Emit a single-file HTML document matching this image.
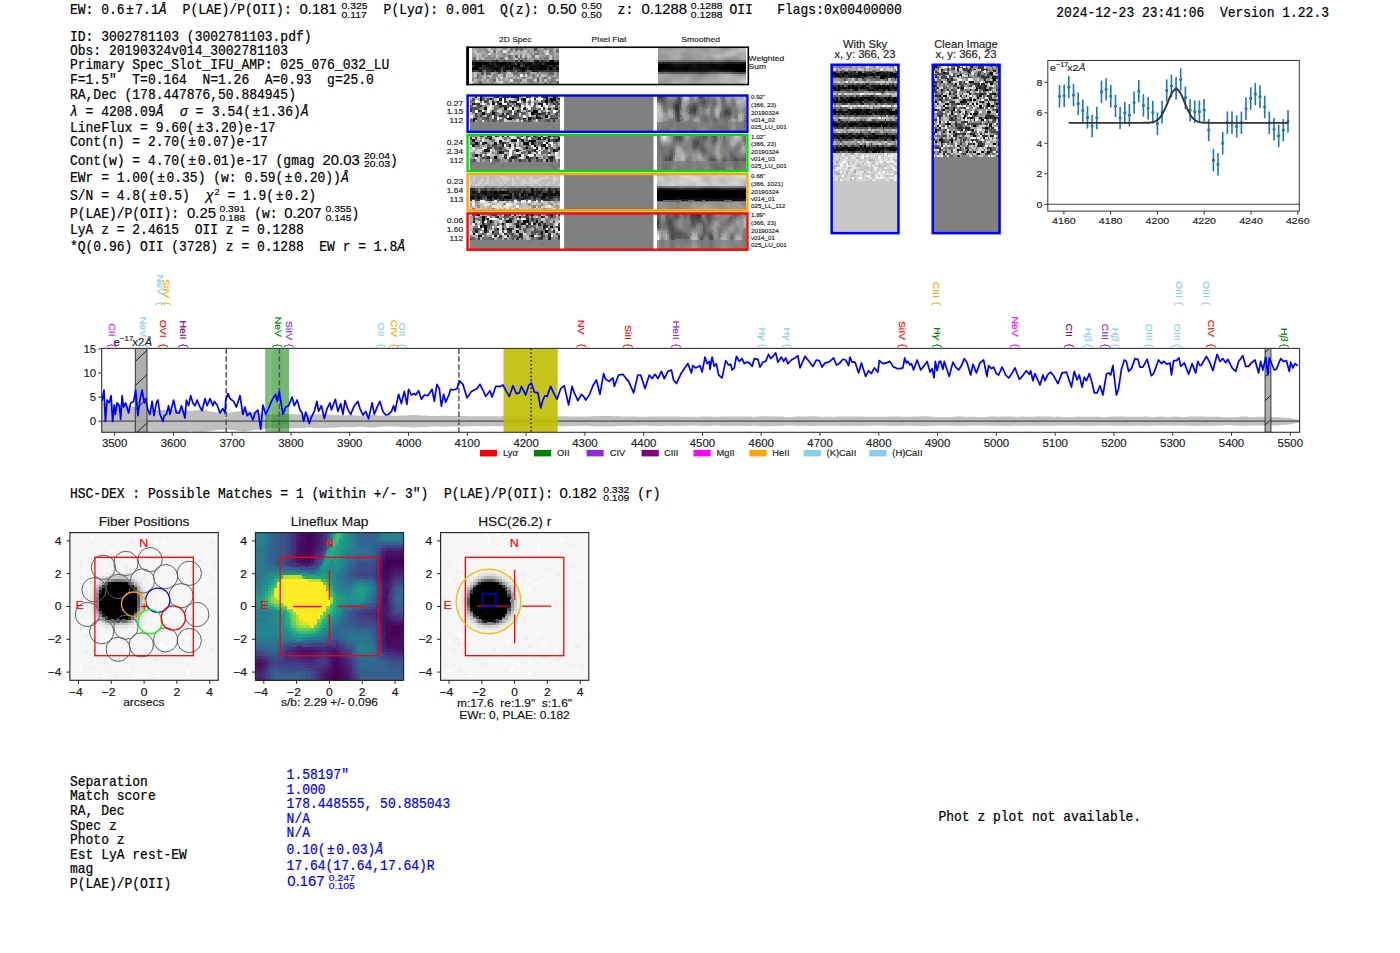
<!DOCTYPE html><html><head><meta charset="utf-8"><style>html,body{margin:0;padding:0;background:#fff;overflow:hidden}svg{display:block}</style></head><body>
<svg width="1400" height="953" viewBox="0 0 1400 953">
<rect width="1400" height="953" fill="#fff"/>
<text transform="translate(515.20,42.20) scale(1.144,1.06)" font-family="Liberation Sans" font-size="7.4" fill="#222" stroke="#222" stroke-width="0.15" text-anchor="middle" style="white-space:pre" >2D Spec</text>
<text transform="translate(609.00,42.20) scale(1.144,1.06)" font-family="Liberation Sans" font-size="7.4" fill="#222" stroke="#222" stroke-width="0.15" text-anchor="middle" style="white-space:pre" >Pixel Flat</text>
<text transform="translate(700.70,42.20) scale(1.144,1.06)" font-family="Liberation Sans" font-size="7.4" fill="#222" stroke="#222" stroke-width="0.15" text-anchor="middle" style="white-space:pre" >Smoothed</text>
<path stroke="#a8a8a8" stroke-width="2.85" shape-rendering="crispEdges" d="M471.5 49.2h5.2M486.0 49.2h2.8M500.4 49.2h2.8M505.3 49.2h2.8M527.0 49.2h5.2M539.0 49.2h5.2M471.5 51.6h2.8M481.1 51.6h5.2M488.4 51.6h2.8M498.0 51.6h2.8M510.1 51.6h2.8M519.7 51.6h2.8M529.4 51.6h2.8M534.2 51.6h2.8M473.9 54.0h2.8M505.3 54.0h2.8M514.9 54.0h2.8M524.5 54.0h2.8M543.8 54.0h2.8M553.5 54.0h2.8M483.6 56.4h5.2M490.8 56.4h2.8M498.0 56.4h5.2M529.4 56.4h2.8M539.0 56.4h2.8M553.5 56.4h2.8M512.5 58.8h2.8M527.0 58.8h2.8M536.6 58.8h2.8M490.8 73.2h2.8M529.4 73.2h7.6M553.5 73.2h2.8M471.5 75.6h2.8M481.1 75.6h2.8M490.8 75.6h2.8M529.4 75.6h2.8M553.5 75.6h2.8M481.1 78.0h2.8M488.4 78.0h2.8M519.7 78.0h2.8M527.0 78.0h2.8M534.2 78.0h2.8M546.2 78.0h2.8M500.4 80.4h10.0M483.6 82.8h7.6M493.2 82.8h5.2M507.7 82.8h2.8M514.9 82.8h2.8M524.5 82.8h2.8M539.0 82.8h5.2M546.2 82.8h2.8"/>
<path stroke="#9c9c9c" stroke-width="2.85" shape-rendering="crispEdges" d="M476.3 49.2h2.8M481.1 49.2h2.8M490.8 49.2h2.8M512.5 49.2h2.8M522.1 49.2h2.8M531.8 49.2h2.8M546.2 49.2h2.8M478.7 51.6h2.8M514.9 51.6h2.8M531.8 51.6h2.8M541.4 51.6h2.8M471.5 54.0h2.8M481.1 54.0h7.6M490.8 54.0h5.2M498.0 54.0h5.2M507.7 54.0h2.8M519.7 54.0h2.8M539.0 54.0h2.8M471.5 56.4h5.2M505.3 56.4h2.8M541.4 56.4h5.2M483.6 58.8h2.8M493.2 58.8h2.8M529.4 58.8h5.2M553.5 58.8h5.2M471.5 73.2h2.8M476.3 73.2h2.8M483.6 73.2h2.8M493.2 73.2h2.8M505.3 73.2h2.8M539.0 73.2h2.8M486.0 75.6h2.8M512.5 75.6h5.2M522.1 75.6h2.8M534.2 75.6h2.8M551.1 75.6h2.8M473.9 78.0h2.8M507.7 78.0h2.8M514.9 78.0h2.8M524.5 78.0h2.8M498.0 80.4h2.8M531.8 80.4h2.8M548.7 80.4h2.8M473.9 82.8h2.8M481.1 82.8h2.8M502.8 82.8h2.8M522.1 82.8h2.8M527.0 82.8h2.8M534.2 82.8h2.8M553.5 82.8h2.8"/>
<path stroke="#909090" stroke-width="2.85" shape-rendering="crispEdges" d="M478.7 49.2h2.8M493.2 49.2h2.8M536.6 49.2h2.8M551.1 49.2h2.8M555.9 49.2h2.8M476.3 51.6h2.8M500.4 51.6h2.8M527.0 51.6h2.8M539.0 51.6h2.8M551.1 51.6h2.8M541.4 54.0h2.8M548.7 54.0h5.2M493.2 56.4h2.8M502.8 56.4h2.8M524.5 56.4h2.8M551.1 56.4h2.8M555.9 56.4h2.8M478.7 58.8h2.8M488.4 58.8h2.8M495.6 58.8h5.2M519.7 58.8h2.8M541.4 58.8h2.8M478.7 73.2h2.8M510.1 73.2h2.8M524.5 73.2h2.8M478.7 75.6h2.8M527.0 75.6h2.8M548.7 75.6h2.8M555.9 75.6h2.8M471.5 78.0h2.8M490.8 78.0h2.8M498.0 78.0h2.8M502.8 78.0h2.8M510.1 78.0h2.8M555.9 78.0h2.8M476.3 80.4h5.2M483.6 80.4h2.8M476.3 82.8h2.8M505.3 82.8h2.8M510.1 82.8h5.2M529.4 82.8h2.8M536.6 82.8h2.8M551.1 82.8h2.8"/>
<path stroke="#848484" stroke-width="2.85" shape-rendering="crispEdges" d="M483.6 49.2h2.8M502.8 49.2h2.8M517.3 49.2h2.8M524.5 49.2h2.8M548.7 49.2h2.8M486.0 51.6h2.8M507.7 51.6h2.8M536.6 51.6h2.8M502.8 54.0h2.8M529.4 54.0h2.8M481.1 56.4h2.8M488.4 56.4h2.8M510.1 56.4h2.8M546.2 56.4h2.8M471.5 58.8h2.8M486.0 58.8h2.8M490.8 58.8h2.8M502.8 58.8h2.8M507.7 58.8h2.8M522.1 58.8h2.8M534.2 58.8h2.8M539.0 58.8h2.8M551.1 58.8h2.8M529.4 61.2h2.8M495.6 73.2h2.8M500.4 73.2h2.8M517.3 73.2h5.2M541.4 73.2h7.6M555.9 73.2h2.8M493.2 75.6h5.2M517.3 75.6h2.8M539.0 75.6h2.8M546.2 75.6h2.8M476.3 78.0h5.2M493.2 78.0h2.8M522.1 78.0h2.8M531.8 78.0h2.8M541.4 78.0h2.8M553.5 78.0h2.8M471.5 80.4h2.8M488.4 80.4h5.2M512.5 80.4h2.8M517.3 80.4h2.8M527.0 80.4h2.8M541.4 80.4h2.8M546.2 80.4h2.8M553.5 80.4h2.8M490.8 82.8h2.8M517.3 82.8h2.8M531.8 82.8h2.8"/>
<path stroke="#cccccc" stroke-width="2.85" shape-rendering="crispEdges" d="M488.4 49.2h2.8M490.8 51.6h2.8M524.5 51.6h2.8M546.2 51.6h2.8M476.3 54.0h2.8M510.1 54.0h2.8M534.2 56.4h5.2M505.3 58.8h2.8M507.7 73.2h2.8M505.3 75.6h2.8M510.1 75.6h2.8M500.4 78.0h2.8M548.7 78.0h2.8M534.2 80.4h2.8M555.9 80.4h2.8M498.0 82.8h2.8"/>
<path stroke="#b4b4b4" stroke-width="2.85" shape-rendering="crispEdges" d="M495.6 49.2h5.2M507.7 49.2h2.8M512.5 51.6h2.8M517.3 51.6h2.8M522.1 51.6h2.8M553.5 51.6h2.8M478.7 54.0h2.8M495.6 54.0h2.8M512.5 54.0h2.8M517.3 54.0h2.8M527.0 54.0h2.8M531.8 54.0h2.8M555.9 54.0h2.8M476.3 56.4h5.2M512.5 56.4h2.8M481.1 58.8h2.8M483.6 75.6h2.8M500.4 75.6h2.8M507.7 75.6h2.8M543.8 75.6h2.8M505.3 78.0h2.8M512.5 78.0h2.8M517.3 78.0h2.8M539.0 78.0h2.8M473.9 80.4h2.8M481.1 80.4h2.8M486.0 80.4h2.8M539.0 80.4h2.8M519.7 82.8h2.8"/>
<path stroke="#787878" stroke-width="2.85" shape-rendering="crispEdges" d="M510.1 49.2h2.8M543.8 49.2h2.8M493.2 51.6h2.8M548.7 51.6h2.8M534.2 54.0h2.8M531.8 56.4h2.8M510.1 58.8h2.8M543.8 58.8h5.2M517.3 61.2h2.8M531.8 61.2h2.8M483.6 70.8h2.8M514.9 70.8h2.8M502.8 73.2h2.8M512.5 73.2h2.8M536.6 73.2h2.8M531.8 75.6h2.8M486.0 78.0h2.8M551.1 78.0h2.8M514.9 80.4h2.8M519.7 80.4h2.8M529.4 80.4h2.8M551.1 80.4h2.8M543.8 82.8h2.8M548.7 82.8h2.8"/>
<path stroke="#6c6c6c" stroke-width="2.85" shape-rendering="crispEdges" d="M514.9 49.2h2.8M519.7 49.2h2.8M555.9 51.6h2.8M536.6 54.0h2.8M507.7 56.4h2.8M519.7 56.4h2.8M473.9 58.8h2.8M500.4 58.8h2.8M517.3 58.8h2.8M486.0 61.2h2.8M498.0 61.2h5.2M512.5 61.2h2.8M527.0 61.2h2.8M514.9 73.2h2.8M522.1 73.2h2.8M527.0 73.2h2.8M476.3 75.6h2.8M502.8 75.6h2.8M536.6 78.0h2.8M543.8 78.0h2.8M493.2 80.4h2.8M478.7 82.8h2.8M555.9 82.8h2.8"/>
<path stroke="#545454" stroke-width="2.85" shape-rendering="crispEdges" d="M534.2 49.2h2.8M490.8 61.2h2.8M553.5 61.2h2.8M514.9 63.6h2.8M505.3 70.8h2.8M529.4 70.8h2.8M481.1 73.2h2.8M486.0 73.2h2.8M498.0 73.2h2.8M536.6 80.4h2.8"/>
<path stroke="#c0c0c0" stroke-width="2.85" shape-rendering="crispEdges" d="M553.5 49.2h2.8M473.9 51.6h2.8M495.6 51.6h2.8M505.3 51.6h2.8M543.8 51.6h2.8M522.1 54.0h2.8M495.6 56.4h2.8M517.3 56.4h2.8M522.1 56.4h2.8M527.0 56.4h2.8M548.7 56.4h2.8M476.3 58.8h2.8M514.9 58.8h2.8M548.7 58.8h2.8M473.9 73.2h2.8M473.9 75.6h2.8M488.4 75.6h2.8M498.0 75.6h2.8M536.6 75.6h2.8M541.4 75.6h2.8M483.6 78.0h2.8M495.6 78.0h2.8M529.4 78.0h2.8M522.1 80.4h5.2M543.8 80.4h2.8M471.5 82.8h2.8"/>
<path stroke="#e4e4e4" stroke-width="2.85" shape-rendering="crispEdges" d="M502.8 51.6h2.8M546.2 54.0h2.8M510.1 80.4h2.8"/>
<path stroke="#d8d8d8" stroke-width="2.85" shape-rendering="crispEdges" d="M488.4 54.0h2.8M524.5 75.6h2.8M495.6 80.4h2.8M500.4 82.8h2.8"/>
<path stroke="#606060" stroke-width="2.85" shape-rendering="crispEdges" d="M514.9 56.4h2.8M524.5 58.8h2.8M476.3 61.2h2.8M488.4 61.2h2.8M505.3 61.2h7.6M522.1 61.2h5.2M539.0 61.2h2.8M546.2 61.2h2.8M500.4 70.8h2.8M507.7 70.8h2.8M527.0 70.8h2.8M488.4 73.2h2.8M548.7 73.2h5.2"/>
<path stroke="#3c3c3c" stroke-width="2.85" shape-rendering="crispEdges" d="M471.5 61.2h5.2M493.2 61.2h2.8M514.9 61.2h2.8M541.4 63.6h2.8M471.5 66.0h2.8M522.1 66.0h2.8M555.9 66.0h2.8M478.7 68.4h2.8M500.4 68.4h2.8M512.5 68.4h2.8M553.5 68.4h2.8M473.9 70.8h5.2M493.2 70.8h2.8M510.1 70.8h2.8M524.5 70.8h2.8M539.0 70.8h2.8M543.8 70.8h5.2M551.1 70.8h5.2"/>
<path stroke="#484848" stroke-width="2.85" shape-rendering="crispEdges" d="M478.7 61.2h7.6M502.8 61.2h2.8M543.8 61.2h2.8M555.9 61.2h2.8M519.7 66.0h2.8M481.1 70.8h2.8M512.5 70.8h2.8"/>
<path stroke="#242424" stroke-width="2.85" shape-rendering="crispEdges" d="M495.6 61.2h2.8M519.7 61.2h2.8M534.2 61.2h2.8M488.4 63.6h2.8M493.2 63.6h2.8M510.1 63.6h5.2M493.2 66.0h5.2M502.8 66.0h2.8M527.0 66.0h2.8M486.0 68.4h2.8M502.8 68.4h2.8M514.9 68.4h2.8M551.1 68.4h2.8M471.5 70.8h2.8M519.7 70.8h2.8M534.2 70.8h5.2"/>
<path stroke="#181818" stroke-width="2.85" shape-rendering="crispEdges" d="M536.6 61.2h2.8M548.7 61.2h2.8M473.9 63.6h2.8M490.8 63.6h2.8M505.3 63.6h2.8M522.1 63.6h5.2M534.2 63.6h5.2M543.8 63.6h2.8M483.6 66.0h2.8M498.0 66.0h2.8M529.4 66.0h2.8M534.2 66.0h2.8M551.1 66.0h2.8M488.4 68.4h5.2M498.0 68.4h2.8M517.3 68.4h2.8M536.6 68.4h2.8M478.7 70.8h2.8M490.8 70.8h2.8M495.6 70.8h5.2M502.8 70.8h2.8M531.8 70.8h2.8"/>
<path stroke="#303030" stroke-width="2.85" shape-rendering="crispEdges" d="M541.4 61.2h2.8M519.7 63.6h2.8M531.8 63.6h2.8M481.1 66.0h2.8M507.7 66.0h2.8M548.7 66.0h2.8M481.1 68.4h5.2M527.0 68.4h2.8M546.2 68.4h2.8M486.0 70.8h5.2M517.3 70.8h2.8M541.4 70.8h2.8M548.7 70.8h2.8M555.9 70.8h2.8"/>
<path stroke="#0c0c0c" stroke-width="2.85" shape-rendering="crispEdges" d="M551.1 61.2h2.8M471.5 63.6h2.8M481.1 63.6h2.8M529.4 63.6h2.8M539.0 63.6h2.8M473.9 66.0h2.8M486.0 66.0h7.6M512.5 66.0h5.2M536.6 66.0h5.2M543.8 66.0h5.2M553.5 66.0h2.8M493.2 68.4h5.2M505.3 68.4h2.8M519.7 68.4h2.8M524.5 68.4h2.8M531.8 68.4h5.2M541.4 68.4h2.8M555.9 68.4h2.8M522.1 70.8h2.8"/>
<path stroke="#000000" stroke-width="2.85" shape-rendering="crispEdges" d="M476.3 63.6h5.2M483.6 63.6h5.2M495.6 63.6h10.0M507.7 63.6h2.8M517.3 63.6h2.8M527.0 63.6h2.8M546.2 63.6h12.5M476.3 66.0h5.2M500.4 66.0h2.8M505.3 66.0h2.8M510.1 66.0h2.8M517.3 66.0h2.8M524.5 66.0h2.8M531.8 66.0h2.8M541.4 66.0h2.8M471.5 68.4h7.6M507.7 68.4h5.2M522.1 68.4h2.8M529.4 68.4h2.8M539.0 68.4h2.8M543.8 68.4h2.8M548.7 68.4h2.8"/>
<path stroke="#f0f0f0" stroke-width="2.85" shape-rendering="crispEdges" d="M519.7 75.6h2.8"/>
<path stroke="#9c9c9c" stroke-width="2.45" shape-rendering="crispEdges" d="M657.9 49.0h16.3M685.7 49.0h6.4M699.7 49.0h8.4M719.5 49.0h2.4M727.5 49.0h2.4M657.9 51.0h4.4M685.7 51.0h6.4M697.7 51.0h12.3M719.5 51.0h2.4M657.9 53.0h4.4M681.8 53.0h10.3M663.9 55.0h4.4M681.8 55.0h2.4M689.7 55.0h10.3M665.9 57.0h4.4M681.8 57.0h2.4M691.7 57.0h10.3M705.6 57.0h4.4M733.5 57.0h4.4M657.9 59.0h12.3M679.8 59.0h2.4M693.7 59.0h12.3M721.5 59.0h2.4M739.4 59.0h2.4M669.8 75.0h2.4M711.6 75.0h4.4M733.5 75.0h4.4M671.8 77.0h10.3M687.7 77.0h4.4M705.6 77.0h2.4M663.9 79.0h10.3M689.7 79.0h2.4M699.7 79.0h4.4M663.9 81.0h6.4M691.7 81.0h8.4M657.9 83.0h8.4M693.7 83.0h2.4"/>
<path stroke="#a2a2a2" stroke-width="2.45" shape-rendering="crispEdges" d="M673.8 49.0h12.3M691.7 49.0h8.4M707.6 49.0h2.4M717.6 49.0h2.4M729.5 49.0h2.4M661.9 51.0h12.3M681.8 51.0h4.4M691.7 51.0h6.4M709.6 51.0h2.4M715.6 51.0h4.4M721.5 51.0h4.4M661.9 53.0h6.4M679.8 53.0h2.4M691.7 53.0h18.3M667.8 55.0h4.4M679.8 55.0h2.4M699.7 55.0h4.4M669.8 57.0h2.4M679.8 57.0h2.4M701.6 57.0h4.4M709.6 57.0h2.4M729.5 57.0h4.4M737.4 57.0h2.4M669.8 59.0h4.4M677.8 59.0h2.4M713.6 59.0h2.4M719.5 59.0h2.4M741.4 59.0h2.4M657.9 75.0h12.3M715.6 75.0h2.4M731.5 75.0h2.4M663.9 77.0h8.4M681.8 77.0h6.4M707.6 77.0h10.3M657.9 79.0h6.4M673.8 79.0h10.3M687.7 79.0h2.4M703.6 79.0h4.4M657.9 81.0h6.4M669.8 81.0h4.4M687.7 81.0h4.4M699.7 81.0h4.4M665.9 83.0h2.4M687.7 83.0h6.4M695.7 83.0h6.4M713.6 83.0h6.4"/>
<path stroke="#a8a8a8" stroke-width="2.45" shape-rendering="crispEdges" d="M709.6 49.0h8.4M731.5 49.0h2.4M673.8 51.0h8.4M711.6 51.0h4.4M725.5 51.0h2.4M667.8 53.0h12.3M709.6 53.0h14.3M671.8 55.0h8.4M703.6 55.0h6.4M735.5 55.0h6.4M671.8 57.0h2.4M677.8 57.0h2.4M711.6 57.0h2.4M725.5 57.0h4.4M739.4 57.0h2.4M673.8 59.0h4.4M715.6 59.0h4.4M743.4 59.0h2.4M717.6 75.0h2.4M729.5 75.0h2.4M657.9 77.0h6.4M717.6 77.0h2.4M683.8 79.0h4.4M707.6 79.0h10.3M673.8 81.0h14.3M703.6 81.0h6.4M711.6 81.0h6.4M667.8 83.0h4.4M679.8 83.0h8.4M701.6 83.0h12.3M719.5 83.0h2.4"/>
<path stroke="#969696" stroke-width="2.45" shape-rendering="crispEdges" d="M721.5 49.0h6.4M657.9 55.0h6.4M683.8 55.0h6.4M657.9 57.0h8.4M683.8 57.0h8.4M681.8 59.0h2.4M689.7 59.0h4.4M705.6 59.0h8.4M723.5 59.0h2.4M735.5 59.0h4.4M671.8 75.0h4.4M677.8 75.0h12.3M707.6 75.0h4.4M737.4 75.0h8.4M691.7 77.0h2.4M701.6 77.0h4.4M691.7 79.0h8.4"/>
<path stroke="#aeaeae" stroke-width="2.45" shape-rendering="crispEdges" d="M733.5 49.0h2.4M727.5 51.0h2.4M723.5 53.0h2.4M737.4 53.0h8.4M709.6 55.0h4.4M733.5 55.0h2.4M741.4 55.0h4.4M673.8 57.0h4.4M713.6 57.0h2.4M721.5 57.0h4.4M741.4 57.0h4.4M719.5 75.0h4.4M727.5 75.0h2.4M719.5 77.0h2.4M731.5 77.0h14.3M717.6 79.0h2.4M729.5 79.0h6.4M709.6 81.0h2.4M717.6 81.0h2.4M729.5 81.0h6.4M671.8 83.0h2.4M677.8 83.0h2.4M721.5 83.0h2.4M733.5 83.0h2.4"/>
<path stroke="#b4b4b4" stroke-width="2.45" shape-rendering="crispEdges" d="M735.5 49.0h2.4M729.5 51.0h10.3M735.5 53.0h2.4M713.6 55.0h12.3M729.5 55.0h4.4M715.6 57.0h6.4M723.5 75.0h4.4M721.5 77.0h2.4M727.5 77.0h4.4M719.5 79.0h2.4M727.5 79.0h2.4M735.5 79.0h6.4M719.5 81.0h4.4M725.5 81.0h4.4M735.5 81.0h4.4M673.8 83.0h4.4M723.5 83.0h10.3M735.5 83.0h4.4"/>
<path stroke="#bababa" stroke-width="2.45" shape-rendering="crispEdges" d="M737.4 49.0h2.4M739.4 51.0h6.4M725.5 53.0h4.4M731.5 53.0h4.4M725.5 55.0h4.4M723.5 77.0h4.4M721.5 79.0h6.4M741.4 79.0h4.4M723.5 81.0h2.4M739.4 81.0h2.4"/>
<path stroke="#c0c0c0" stroke-width="2.45" shape-rendering="crispEdges" d="M739.4 49.0h6.4M729.5 53.0h2.4M741.4 81.0h2.4M739.4 83.0h2.4"/>
<path stroke="#909090" stroke-width="2.45" shape-rendering="crispEdges" d="M683.8 59.0h6.4M725.5 59.0h10.3M675.8 75.0h2.4M689.7 75.0h6.4M705.6 75.0h2.4M693.7 77.0h8.4"/>
<path stroke="#787878" stroke-width="2.45" shape-rendering="crispEdges" d="M657.9 61.0h2.4M675.8 61.0h2.4"/>
<path stroke="#727272" stroke-width="2.45" shape-rendering="crispEdges" d="M659.9 61.0h16.3M677.8 61.0h4.4M701.6 61.0h6.4M715.6 61.0h6.4M743.4 61.0h2.4M719.5 73.0h8.4"/>
<path stroke="#6c6c6c" stroke-width="2.45" shape-rendering="crispEdges" d="M681.8 61.0h4.4M687.7 61.0h14.3M707.6 61.0h8.4M721.5 61.0h2.4M739.4 61.0h4.4M713.6 73.0h6.4M727.5 73.0h2.4"/>
<path stroke="#666666" stroke-width="2.45" shape-rendering="crispEdges" d="M685.7 61.0h2.4M723.5 61.0h2.4M735.5 61.0h4.4M657.9 73.0h12.3M709.6 73.0h4.4M729.5 73.0h2.4"/>
<path stroke="#606060" stroke-width="2.45" shape-rendering="crispEdges" d="M725.5 61.0h2.4M729.5 61.0h6.4M669.8 73.0h2.4M689.7 73.0h2.4M707.6 73.0h2.4"/>
<path stroke="#5a5a5a" stroke-width="2.45" shape-rendering="crispEdges" d="M727.5 61.0h2.4M671.8 73.0h18.3M691.7 73.0h4.4M705.6 73.0h2.4M731.5 73.0h2.4"/>
<path stroke="#242424" stroke-width="2.45" shape-rendering="crispEdges" d="M657.9 63.0h8.4M667.8 63.0h4.4M689.7 63.0h12.3M709.6 63.0h4.4M721.5 63.0h4.4M711.6 71.0h6.4"/>
<path stroke="#1e1e1e" stroke-width="2.45" shape-rendering="crispEdges" d="M665.9 63.0h2.4M725.5 63.0h16.3M665.9 71.0h2.4M675.8 71.0h2.4M689.7 71.0h4.4M707.6 71.0h4.4M717.6 71.0h4.4"/>
<path stroke="#2a2a2a" stroke-width="2.45" shape-rendering="crispEdges" d="M671.8 63.0h2.4M681.8 63.0h8.4M701.6 63.0h8.4M713.6 63.0h8.4"/>
<path stroke="#303030" stroke-width="2.45" shape-rendering="crispEdges" d="M673.8 63.0h8.4"/>
<path stroke="#181818" stroke-width="2.45" shape-rendering="crispEdges" d="M741.4 63.0h4.4M661.9 71.0h4.4M667.8 71.0h8.4M677.8 71.0h6.4M685.7 71.0h4.4M693.7 71.0h4.4M701.6 71.0h6.4M721.5 71.0h8.4"/>
<path stroke="#060606" stroke-width="2.45" shape-rendering="crispEdges" d="M657.9 65.0h4.4M669.8 65.0h2.4M709.6 65.0h6.4M723.5 65.0h2.4M663.9 67.0h12.3M679.8 67.0h10.3M709.6 67.0h12.3M663.9 69.0h18.3M687.7 69.0h4.4M713.6 69.0h6.4M733.5 71.0h4.4"/>
<path stroke="#000000" stroke-width="2.45" shape-rendering="crispEdges" d="M661.9 65.0h8.4M725.5 65.0h20.3M657.9 67.0h6.4M721.5 67.0h24.3M657.9 69.0h6.4M681.8 69.0h6.4M719.5 69.0h26.3M737.4 71.0h8.4"/>
<path stroke="#0c0c0c" stroke-width="2.45" shape-rendering="crispEdges" d="M671.8 65.0h2.4M683.8 65.0h8.4M695.7 65.0h14.3M715.6 65.0h8.4M675.8 67.0h4.4M689.7 67.0h4.4M697.7 67.0h6.4M705.6 67.0h4.4M691.7 69.0h22.3M657.9 71.0h2.4M731.5 71.0h2.4"/>
<path stroke="#121212" stroke-width="2.45" shape-rendering="crispEdges" d="M673.8 65.0h10.3M691.7 65.0h4.4M693.7 67.0h4.4M703.6 67.0h2.4M659.9 71.0h2.4M683.8 71.0h2.4M697.7 71.0h4.4M729.5 71.0h2.4"/>
<path stroke="#545454" stroke-width="2.45" shape-rendering="crispEdges" d="M695.7 73.0h4.4M701.6 73.0h4.4M733.5 73.0h4.4"/>
<path stroke="#4e4e4e" stroke-width="2.45" shape-rendering="crispEdges" d="M699.7 73.0h2.4M737.4 73.0h8.4"/>
<path stroke="#8a8a8a" stroke-width="2.45" shape-rendering="crispEdges" d="M695.7 75.0h4.4M703.6 75.0h2.4"/>
<path stroke="#848484" stroke-width="2.45" shape-rendering="crispEdges" d="M699.7 75.0h4.4"/>
<path stroke="#c6c6c6" stroke-width="2.45" shape-rendering="crispEdges" d="M743.4 81.0h2.4M741.4 83.0h2.4"/>
<path stroke="#cccccc" stroke-width="2.45" shape-rendering="crispEdges" d="M743.4 83.0h2.4"/>
<rect x="467.2" y="47.25" width="281.1" height="37.3" fill="none" stroke="#000" stroke-width="1.6"/>
<rect x="466.4" y="46.5" width="2.6" height="38.8" fill="#000"/>
<text transform="translate(748.60,60.90) scale(1.144,1.06)" font-family="Liberation Sans" font-size="7.4" fill="#222" stroke="#222" stroke-width="0.15" text-anchor="start" style="white-space:pre" >Weighted</text>
<text transform="translate(748.60,69.20) scale(1.144,1.06)" font-family="Liberation Sans" font-size="7.4" fill="#222" stroke="#222" stroke-width="0.15" text-anchor="start" style="white-space:pre" >Sum</text>
<path stroke="#e0e0e0" stroke-width="2.87" shape-rendering="crispEdges" d="M469.8 96.7h2.8M508.8 99.1h2.8M477.1 101.5h2.8M482.0 101.5h2.8M525.9 104.0h2.8M542.9 106.4h2.8M552.7 106.4h2.8M489.3 108.8h2.8M496.6 111.2h2.8M545.4 111.2h2.8M518.6 113.7h2.8M491.7 116.1h2.8M491.7 118.5h2.8M521.0 120.9h2.8"/>
<path stroke="#b0b0b0" stroke-width="2.87" shape-rendering="crispEdges" d="M472.2 96.7h2.8M557.6 96.7h2.8M469.8 99.1h2.8M474.7 99.1h5.3M518.6 99.1h2.8M538.1 101.5h2.8M547.8 104.0h2.8M474.7 106.4h2.8M523.4 106.4h2.8M499.1 108.8h2.8M550.2 108.8h2.8M523.4 111.2h2.8M547.8 111.2h2.8M555.1 111.2h2.8M503.9 113.7h2.8M518.6 116.1h2.8M533.2 116.1h2.8M545.4 118.5h5.3M474.7 120.9h2.8M506.4 120.9h5.3"/>
<path stroke="#303030" stroke-width="2.87" shape-rendering="crispEdges" d="M474.7 96.7h2.8M555.1 96.7h2.8M533.2 99.1h2.8M557.6 99.1h2.8M555.1 101.5h2.8M477.1 104.0h2.8M506.4 104.0h2.8M545.4 104.0h2.8M552.7 104.0h2.8M479.6 106.4h2.8M501.5 106.4h5.3M542.9 108.8h2.8M469.8 111.2h2.8M479.6 111.2h2.8M491.7 111.2h2.8M535.6 113.7h2.8M547.8 113.7h2.8M479.6 116.1h2.8M499.1 116.1h2.8M474.7 118.5h2.8M494.2 118.5h2.8M540.5 118.5h2.8M550.2 118.5h2.8M555.1 118.5h2.8M552.7 120.9h2.8"/>
<path stroke="#f0f0f0" stroke-width="2.87" shape-rendering="crispEdges" d="M477.1 96.7h2.8M535.6 99.1h2.8M516.1 101.5h2.8M489.3 104.0h2.8M494.2 104.0h2.8M542.9 104.0h2.8M530.7 106.4h2.8M521.0 108.8h2.8M482.0 111.2h2.8M511.2 113.7h2.8M528.3 116.1h2.8M482.0 120.9h2.8"/>
<path stroke="#202020" stroke-width="2.87" shape-rendering="crispEdges" d="M479.6 96.7h2.8M496.6 96.7h2.8M506.4 96.7h2.8M542.9 96.7h2.8M503.9 99.1h2.8M516.1 99.1h2.8M545.4 99.1h2.8M491.7 101.5h2.8M511.2 101.5h5.3M540.5 104.0h2.8M518.6 106.4h2.8M540.5 106.4h2.8M523.4 108.8h2.8M547.8 108.8h2.8M477.1 111.2h2.8M516.1 111.2h2.8M501.5 113.7h2.8M506.4 113.7h2.8M538.1 113.7h2.8M472.2 118.5h2.8M511.2 118.5h2.8M535.6 118.5h2.8"/>
<path stroke="#707070" stroke-width="2.87" shape-rendering="crispEdges" d="M482.0 96.7h2.8M533.2 96.7h2.8M491.7 99.1h2.8M547.8 99.1h2.8M469.8 101.5h5.3M494.2 101.5h2.8M552.7 101.5h2.8M511.2 104.0h2.8M484.4 106.4h2.8M496.6 106.4h2.8M516.1 106.4h2.8M533.2 106.4h2.8M477.1 108.8h2.8M518.6 108.8h2.8M530.7 108.8h2.8M552.7 108.8h2.8M506.4 111.2h2.8M525.9 111.2h2.8M479.6 113.7h2.8M484.4 113.7h5.3M508.8 113.7h2.8M489.3 116.1h2.8M516.1 116.1h2.8M538.1 116.1h2.8M542.9 116.1h2.8M555.1 116.1h5.3M479.6 120.9h2.8M501.5 120.9h2.8M525.9 120.9h2.8M530.7 120.9h2.8M542.9 120.9h2.8M552.7 128.2h2.8"/>
<path stroke="#909090" stroke-width="2.87" shape-rendering="crispEdges" d="M484.4 96.7h2.8M518.6 96.7h2.8M513.7 99.1h2.8M499.1 101.5h2.8M506.4 101.5h2.8M533.2 101.5h5.3M557.6 101.5h2.8M508.8 104.0h2.8M513.7 104.0h2.8M523.4 104.0h2.8M535.6 104.0h2.8M482.0 106.4h2.8M479.6 108.8h2.8M525.9 108.8h2.8M535.6 108.8h2.8M484.4 111.2h2.8M499.1 113.7h2.8M525.9 113.7h2.8M550.2 113.7h2.8M557.6 113.7h2.8M482.0 116.1h2.8M496.6 116.1h2.8M521.0 116.1h2.8M525.9 116.1h2.8M530.7 116.1h2.8M477.1 118.5h5.3M496.6 120.9h2.8M528.3 123.3h2.8M538.1 123.3h2.8M555.1 123.3h2.8M547.8 128.2h2.8"/>
<path stroke="#c0c0c0" stroke-width="2.87" shape-rendering="crispEdges" d="M486.9 96.7h2.8M494.2 99.1h2.8M528.3 99.1h2.8M525.9 101.5h2.8M530.7 101.5h2.8M479.6 104.0h2.8M484.4 104.0h2.8M472.2 106.4h2.8M491.7 106.4h2.8M511.2 106.4h2.8M528.3 106.4h2.8M535.6 106.4h2.8M550.2 106.4h2.8M491.7 108.8h2.8M506.4 108.8h2.8M545.4 108.8h2.8M521.0 111.2h2.8M538.1 111.2h2.8M469.8 113.7h2.8M484.4 116.1h2.8M547.8 116.1h2.8M499.1 118.5h2.8M503.9 118.5h2.8"/>
<path stroke="#a0a0a0" stroke-width="2.87" shape-rendering="crispEdges" d="M489.3 96.7h5.3M521.0 96.7h2.8M547.8 96.7h5.3M484.4 99.1h2.8M521.0 101.5h2.8M469.8 104.0h2.8M521.0 104.0h2.8M547.8 106.4h2.8M557.6 106.4h2.8M482.0 108.8h2.8M501.5 108.8h2.8M516.1 108.8h2.8M489.3 111.2h2.8M542.9 111.2h2.8M472.2 113.7h2.8M545.4 113.7h2.8M552.7 113.7h2.8M472.2 116.1h2.8M469.8 118.5h2.8M525.9 118.5h2.8M557.6 118.5h2.8M511.2 120.9h5.3M533.2 120.9h2.8"/>
<path stroke="#404040" stroke-width="2.87" shape-rendering="crispEdges" d="M494.2 96.7h2.8M501.5 96.7h2.8M521.0 99.1h2.8M484.4 101.5h2.8M503.9 101.5h2.8M508.8 101.5h2.8M523.4 101.5h2.8M474.7 104.0h2.8M533.2 104.0h2.8M499.1 106.4h2.8M469.8 108.8h2.8M474.7 113.7h2.8M513.7 113.7h2.8M533.2 113.7h2.8M540.5 113.7h5.3M555.1 113.7h2.8M486.9 116.1h2.8M501.5 116.1h2.8M486.9 118.5h2.8M552.7 118.5h2.8M528.3 120.9h2.8M547.8 120.9h2.8"/>
<path stroke="#808080" stroke-width="2.87" shape-rendering="crispEdges" d="M499.1 96.7h2.8M542.9 99.1h2.8M555.1 99.1h2.8M479.6 101.5h2.8M528.3 104.0h2.8M550.2 104.0h2.8M494.2 106.4h2.8M496.6 108.8h2.8M557.6 108.8h2.8M494.2 111.2h2.8M501.5 111.2h5.3M513.7 111.2h2.8M530.7 111.2h2.8M550.2 111.2h2.8M477.1 113.7h2.8M496.6 113.7h2.8M477.1 116.1h2.8M540.5 116.1h2.8M489.3 118.5h2.8M521.0 118.5h2.8M542.9 118.5h2.8M477.1 120.9h2.8M484.4 120.9h2.8M489.3 120.9h2.8M518.6 120.9h2.8M540.5 120.9h2.8M550.2 120.9h2.8M555.1 120.9h5.3M469.8 123.3h58.9M530.7 123.3h7.7M540.5 123.3h15.0M557.6 123.3h2.8M469.8 125.8h90.6M469.8 128.2h78.4M550.2 128.2h2.8M555.1 128.2h5.3M469.8 130.6h90.6"/>
<path stroke="#101010" stroke-width="2.87" shape-rendering="crispEdges" d="M503.9 96.7h2.8M513.7 96.7h2.8M525.9 96.7h2.8M545.4 96.7h2.8M552.7 96.7h2.8M496.6 101.5h2.8M550.2 101.5h2.8M472.2 104.0h2.8M516.1 104.0h2.8M484.4 108.8h2.8M535.6 111.2h2.8M535.6 116.1h2.8M506.4 118.5h2.8M528.3 118.5h2.8M538.1 118.5h2.8M472.2 120.9h2.8"/>
<path stroke="#606060" stroke-width="2.87" shape-rendering="crispEdges" d="M508.8 96.7h2.8M535.6 96.7h2.8M540.5 96.7h2.8M482.0 99.1h2.8M486.9 101.5h2.8M528.3 101.5h2.8M542.9 101.5h2.8M547.8 101.5h2.8M486.9 104.0h2.8M555.1 104.0h2.8M469.8 106.4h2.8M506.4 106.4h5.3M513.7 106.4h2.8M494.2 108.8h2.8M533.2 108.8h2.8M538.1 108.8h2.8M472.2 111.2h2.8M518.6 111.2h2.8M540.5 111.2h2.8M557.6 111.2h2.8M489.3 113.7h2.8M494.2 113.7h2.8M521.0 113.7h5.3M508.8 116.1h2.8M550.2 116.1h5.3M482.0 118.5h2.8M501.5 118.5h2.8M513.7 118.5h5.3M533.2 118.5h2.8M469.8 120.9h2.8M486.9 120.9h2.8M494.2 120.9h2.8M499.1 120.9h2.8M538.1 120.9h2.8M545.4 120.9h2.8"/>
<path stroke="#000000" stroke-width="2.87" shape-rendering="crispEdges" d="M511.2 96.7h2.8M516.1 96.7h2.8M479.6 99.1h2.8M489.3 99.1h2.8M499.1 99.1h2.8M523.4 99.1h2.8M550.2 99.1h5.3M545.4 101.5h2.8M491.7 104.0h2.8M499.1 104.0h2.8M538.1 104.0h2.8M503.9 108.8h2.8M511.2 108.8h2.8M555.1 108.8h2.8M533.2 111.2h2.8M482.0 113.7h2.8M491.7 113.7h2.8M530.7 113.7h2.8M545.4 116.1h2.8M508.8 118.5h2.8M523.4 118.5h2.8"/>
<path stroke="#ffffff" stroke-width="2.87" shape-rendering="crispEdges" d="M523.4 96.7h2.8M538.1 96.7h2.8M496.6 99.1h2.8M501.5 99.1h2.8M525.9 99.1h2.8M530.7 99.1h2.8M538.1 99.1h5.3M474.7 101.5h2.8M501.5 101.5h2.8M518.6 101.5h2.8M482.0 104.0h2.8M501.5 104.0h5.3M530.7 104.0h2.8M489.3 106.4h2.8M521.0 106.4h2.8M525.9 106.4h2.8M538.1 106.4h2.8M545.4 106.4h2.8M486.9 108.8h2.8M508.8 108.8h2.8M528.3 108.8h2.8M540.5 108.8h2.8M474.7 111.2h2.8M486.9 111.2h2.8M511.2 111.2h2.8M552.7 111.2h2.8M469.8 116.1h2.8M506.4 116.1h2.8M523.4 116.1h2.8M496.6 118.5h2.8"/>
<path stroke="#505050" stroke-width="2.87" shape-rendering="crispEdges" d="M528.3 96.7h2.8M472.2 99.1h2.8M486.9 99.1h2.8M540.5 101.5h2.8M496.6 104.0h2.8M518.6 104.0h2.8M557.6 104.0h2.8M477.1 106.4h2.8M555.1 106.4h2.8M472.2 108.8h5.3M508.8 111.2h2.8M528.3 111.2h2.8M516.1 113.7h2.8M474.7 116.1h2.8M494.2 116.1h2.8M503.9 116.1h2.8M511.2 116.1h5.3M484.4 118.5h2.8M518.6 118.5h2.8M530.7 118.5h2.8M491.7 120.9h2.8M523.4 120.9h2.8"/>
<path stroke="#d0d0d0" stroke-width="2.87" shape-rendering="crispEdges" d="M530.7 96.7h2.8M506.4 99.1h2.8M511.2 99.1h2.8M489.3 101.5h2.8M486.9 106.4h2.8M513.7 108.8h2.8M499.1 111.2h2.8M528.3 113.7h2.8M503.9 120.9h2.8M516.1 120.9h2.8M535.6 120.9h2.8"/>
<rect x="560" y="95.5" width="4.1" height="36.3" fill="#fff"/>
<rect x="564.1" y="95.5" width="89.6" height="36.3" fill="#7f7f7f"/>
<rect x="653.7" y="95.5" width="2.9" height="36.3" fill="#fff"/>
<path stroke="#484848" stroke-width="2.47" shape-rendering="crispEdges" d="M656.6 96.5h2.4M678.5 96.5h2.4M658.6 98.5h4.4M678.5 98.5h2.4M690.4 110.6h2.4M724.1 110.6h4.4M692.4 112.6h4.4M724.1 112.6h2.4M728.1 112.6h2.4M726.1 114.7h2.4M676.5 118.7h2.4"/>
<path stroke="#3c3c3c" stroke-width="2.47" shape-rendering="crispEdges" d="M658.6 96.5h2.4M676.5 104.6h2.4M692.4 110.6h2.4M676.5 112.6h2.4"/>
<path stroke="#424242" stroke-width="2.47" shape-rendering="crispEdges" d="M660.6 96.5h2.4M676.5 102.6h2.4M674.5 104.6h2.4M692.4 108.6h4.4M674.5 110.6h2.4M694.3 110.6h2.4M726.1 112.6h2.4M676.5 114.7h2.4M676.5 116.7h2.4"/>
<path stroke="#5a5a5a" stroke-width="2.47" shape-rendering="crispEdges" d="M662.6 96.5h2.4M698.3 96.5h2.4M662.6 98.5h2.4M676.5 98.5h2.4M700.3 98.5h2.4M658.6 100.5h2.4M662.6 100.5h2.4M700.3 100.5h4.4M704.3 102.6h2.4M672.5 104.6h2.4M702.3 104.6h4.4M690.4 106.6h2.4M672.5 108.6h2.4M724.1 108.6h4.4M678.5 110.6h2.4M688.4 110.6h2.4M722.2 110.6h2.4M678.5 112.6h2.4M678.5 114.7h2.4M692.4 114.7h4.4M722.2 114.7h2.4M674.5 116.7h2.4M726.1 116.7h2.4"/>
<path stroke="#727272" stroke-width="2.47" shape-rendering="crispEdges" d="M664.5 96.5h2.4M704.3 98.5h2.4M680.4 100.5h2.4M712.2 100.5h2.4M658.6 102.6h2.4M670.5 102.6h2.4M692.4 102.6h6.4M710.2 102.6h2.4M732.1 102.6h2.4M670.5 104.6h2.4M706.3 104.6h2.4M732.1 104.6h2.4M670.5 106.6h2.4M698.3 106.6h4.4M712.2 106.6h2.4M728.1 106.6h2.4M732.1 106.6h2.4M662.6 108.6h4.4M702.3 108.6h2.4M730.1 108.6h2.4M720.2 110.6h2.4M730.1 110.6h2.4M734.1 112.6h2.4M688.4 114.7h2.4M730.1 114.7h2.4M734.1 114.7h2.4M692.4 116.7h4.4M710.2 116.7h4.4M700.3 118.7h4.4M706.3 118.7h2.4M714.2 118.7h2.4M722.2 118.7h2.4M728.1 118.7h2.4M680.4 120.7h2.4M700.3 120.7h4.4M716.2 120.7h2.4M724.1 120.7h4.4M678.5 122.7h2.4M714.2 122.7h2.4M744.0 122.7h2.4M714.2 124.7h4.4M744.0 124.7h2.4M714.2 126.8h14.3M744.0 126.8h2.4M664.5 128.8h4.4M692.4 128.8h4.4M718.2 128.8h4.4M726.1 128.8h2.4M662.6 130.8h6.4M694.3 130.8h2.4M712.2 130.8h2.4M718.2 130.8h2.4"/>
<path stroke="#8a8a8a" stroke-width="2.47" shape-rendering="crispEdges" d="M666.5 96.5h2.4M672.5 96.5h2.4M692.4 96.5h2.4M696.3 96.5h2.4M714.2 96.5h2.4M668.5 98.5h2.4M692.4 98.5h2.4M730.1 98.5h4.4M694.3 100.5h2.4M688.4 102.6h2.4M660.6 106.6h2.4M708.3 106.6h2.4M668.5 108.6h2.4M742.0 108.6h2.4M700.3 110.6h2.4M704.3 110.6h2.4M700.3 112.6h2.4M742.0 112.6h2.4M672.5 114.7h2.4M698.3 114.7h2.4M708.3 114.7h2.4M718.2 114.7h2.4M672.5 116.7h2.4M696.3 116.7h4.4M732.1 116.7h2.4M668.5 118.7h2.4M692.4 118.7h4.4M698.3 118.7h2.4M730.1 118.7h2.4M736.1 118.7h2.4M666.5 120.7h2.4M736.1 120.7h2.4M656.6 122.7h4.4M732.1 122.7h2.4M730.1 124.7h6.4M730.1 126.8h2.4M734.1 126.8h2.4M700.3 128.8h6.4M730.1 128.8h2.4M734.1 128.8h2.4M700.3 130.8h2.4M704.3 130.8h2.4M730.1 130.8h2.4"/>
<path stroke="#909090" stroke-width="2.47" shape-rendering="crispEdges" d="M668.5 96.5h2.4M730.1 96.5h2.4M688.4 100.5h2.4M734.1 100.5h2.4M716.2 102.6h2.4M726.1 102.6h4.4M658.6 104.6h2.4M686.4 104.6h2.4M684.4 106.6h2.4M744.0 106.6h2.4M684.4 108.6h2.4M706.3 108.6h2.4M714.2 108.6h2.4M736.1 108.6h2.4M666.5 110.6h2.4M684.4 110.6h2.4M738.1 110.6h4.4M662.6 112.6h2.4M704.3 112.6h2.4M664.5 114.7h2.4M686.4 114.7h2.4M706.3 114.7h2.4M666.5 118.7h2.4M670.5 118.7h2.4M682.4 118.7h2.4M686.4 120.7h2.4M692.4 120.7h2.4M698.3 120.7h2.4M732.1 126.8h2.4M732.1 128.8h2.4M702.3 130.8h2.4M732.1 130.8h2.4"/>
<path stroke="#848484" stroke-width="2.47" shape-rendering="crispEdges" d="M670.5 96.5h2.4M674.5 96.5h2.4M706.3 96.5h8.3M724.1 96.5h2.4M666.5 98.5h2.4M670.5 98.5h4.4M696.3 98.5h2.4M714.2 98.5h2.4M724.1 98.5h2.4M724.1 100.5h2.4M730.1 100.5h2.4M656.6 102.6h2.4M734.1 102.6h2.4M726.1 104.6h4.4M680.4 106.6h2.4M686.4 106.6h2.4M714.2 106.6h2.4M666.5 108.6h2.4M680.4 108.6h2.4M744.0 108.6h2.4M680.4 110.6h2.4M698.3 110.6h2.4M736.1 110.6h2.4M742.0 110.6h2.4M664.5 112.6h2.4M680.4 112.6h2.4M686.4 112.6h2.4M698.3 112.6h2.4M702.3 112.6h2.4M680.4 114.7h2.4M700.3 114.7h2.4M704.3 114.7h2.4M744.0 114.7h2.4M708.3 116.7h2.4M714.2 116.7h2.4M718.2 116.7h2.4M736.1 116.7h2.4M744.0 116.7h2.4M672.5 118.7h2.4M688.4 118.7h4.4M716.2 118.7h4.4M734.1 118.7h2.4M682.4 120.7h2.4M690.4 120.7h2.4M728.1 120.7h2.4M742.0 120.7h2.4M660.6 122.7h2.4M692.4 122.7h8.3M730.1 122.7h2.4M734.1 122.7h2.4M738.1 122.7h4.4M656.6 124.7h4.4M696.3 124.7h4.4M656.6 126.8h2.4M698.3 126.8h8.3M672.5 128.8h2.4M698.3 128.8h2.4M706.3 128.8h2.4M670.5 130.8h6.4M698.3 130.8h2.4M706.3 130.8h2.4M734.1 130.8h2.4"/>
<path stroke="#606060" stroke-width="2.47" shape-rendering="crispEdges" d="M676.5 96.5h2.4M698.3 98.5h2.4M702.3 98.5h2.4M704.3 100.5h2.4M662.6 102.6h2.4M700.3 102.6h2.4M692.4 104.6h4.4M696.3 106.6h2.4M688.4 108.6h2.4M696.3 108.6h2.4M722.2 108.6h2.4M728.1 108.6h2.4M696.3 110.6h2.4M724.1 116.7h2.4M728.1 116.7h2.4M674.5 118.7h2.4"/>
<path stroke="#666666" stroke-width="2.47" shape-rendering="crispEdges" d="M680.4 96.5h2.4M702.3 96.5h2.4M680.4 98.5h2.4M656.6 100.5h2.4M674.5 100.5h2.4M698.3 100.5h2.4M660.6 102.6h2.4M672.5 102.6h2.4M698.3 102.6h2.4M662.6 104.6h2.4M696.3 104.6h2.4M700.3 104.6h2.4M702.3 106.6h2.4M688.4 112.6h2.4M690.4 114.7h2.4M720.2 114.7h2.4M722.2 116.7h2.4M712.2 118.7h2.4M674.5 120.7h2.4M704.3 120.7h2.4M712.2 120.7h4.4M744.0 120.7h2.4"/>
<path stroke="#aeaeae" stroke-width="2.47" shape-rendering="crispEdges" d="M682.4 96.5h2.4M742.0 96.5h2.4M736.1 98.5h4.4M686.4 100.5h2.4M736.1 100.5h2.4M740.0 100.5h2.4M740.0 102.6h4.4M738.1 104.6h2.4M716.2 108.6h2.4M660.6 112.6h2.4M660.6 118.7h2.4"/>
<path stroke="#d2d2d2" stroke-width="2.47" shape-rendering="crispEdges" d="M684.4 96.5h2.4"/>
<path stroke="#c0c0c0" stroke-width="2.47" shape-rendering="crispEdges" d="M686.4 96.5h2.4M656.6 108.6h2.4M656.6 110.6h2.4M656.6 112.6h4.4M658.6 114.7h2.4M658.6 116.7h2.4"/>
<path stroke="#969696" stroke-width="2.47" shape-rendering="crispEdges" d="M688.4 96.5h2.4M726.1 96.5h2.4M732.1 96.5h2.4M688.4 98.5h2.4M694.3 98.5h2.4M716.2 100.5h2.4M726.1 100.5h4.4M718.2 102.6h2.4M684.4 104.6h2.4M716.2 104.6h2.4M682.4 106.6h2.4M736.1 106.6h2.4M742.0 106.6h2.4M660.6 108.6h2.4M682.4 108.6h2.4M708.3 108.6h2.4M738.1 108.6h4.4M670.5 110.6h2.4M682.4 110.6h2.4M708.3 110.6h2.4M666.5 112.6h2.4M682.4 112.6h4.4M708.3 112.6h2.4M718.2 112.6h2.4M738.1 112.6h2.4M714.2 114.7h2.4M742.0 114.7h2.4M664.5 116.7h4.4M716.2 116.7h2.4M732.1 118.7h2.4M742.0 118.7h2.4M662.6 120.7h4.4M684.4 120.7h2.4M730.1 120.7h2.4M734.1 120.7h2.4"/>
<path stroke="#7e7e7e" stroke-width="2.47" shape-rendering="crispEdges" d="M690.4 96.5h2.4M704.3 96.5h2.4M690.4 98.5h2.4M708.3 98.5h6.4M668.5 100.5h4.4M690.4 100.5h4.4M696.3 100.5h2.4M732.1 100.5h2.4M724.1 102.6h2.4M730.1 102.6h2.4M680.4 104.6h2.4M688.4 104.6h2.4M708.3 104.6h2.4M720.2 104.6h2.4M734.1 104.6h2.4M666.5 106.6h4.4M706.3 106.6h2.4M720.2 106.6h2.4M734.1 106.6h2.4M670.5 108.6h2.4M698.3 108.6h4.4M704.3 108.6h2.4M710.2 108.6h2.4M720.2 108.6h2.4M734.1 108.6h2.4M662.6 110.6h2.4M702.3 110.6h2.4M710.2 110.6h2.4M732.1 110.6h2.4M744.0 110.6h2.4M672.5 112.6h2.4M732.1 112.6h2.4M736.1 112.6h2.4M744.0 112.6h2.4M702.3 114.7h2.4M732.1 114.7h2.4M736.1 114.7h2.4M680.4 116.7h2.4M688.4 116.7h2.4M706.3 116.7h2.4M730.1 116.7h2.4M708.3 118.7h2.4M670.5 120.7h4.4M688.4 120.7h2.4M708.3 120.7h4.4M718.2 120.7h4.4M662.6 122.7h6.4M672.5 122.7h2.4M682.4 122.7h10.3M700.3 122.7h4.4M708.3 122.7h4.4M720.2 122.7h4.4M728.1 122.7h2.4M736.1 122.7h2.4M660.6 124.7h6.4M672.5 124.7h4.4M686.4 124.7h2.4M690.4 124.7h6.4M700.3 124.7h12.3M728.1 124.7h2.4M736.1 124.7h6.4M658.6 126.8h4.4M672.5 126.8h4.4M686.4 126.8h2.4M696.3 126.8h2.4M706.3 126.8h6.4M728.1 126.8h2.4M736.1 126.8h6.4M656.6 128.8h4.4M670.5 128.8h2.4M674.5 128.8h2.4M686.4 128.8h4.4M696.3 128.8h2.4M708.3 128.8h2.4M728.1 128.8h2.4M736.1 128.8h2.4M740.0 128.8h4.4M656.6 130.8h4.4M686.4 130.8h4.4M696.3 130.8h2.4M708.3 130.8h2.4M728.1 130.8h2.4M736.1 130.8h2.4M740.0 130.8h4.4"/>
<path stroke="#a2a2a2" stroke-width="2.47" shape-rendering="crispEdges" d="M694.3 96.5h2.4M716.2 96.5h4.4M718.2 98.5h2.4M740.0 98.5h2.4M682.4 100.5h2.4M684.4 102.6h2.4M736.1 104.6h2.4M716.2 106.6h4.4M738.1 106.6h4.4M718.2 108.6h2.4M660.6 110.6h2.4M670.5 112.6h2.4M670.5 116.7h2.4M684.4 116.7h2.4M684.4 118.7h2.4M660.6 120.7h2.4M696.3 120.7h2.4M732.1 120.7h2.4M738.1 120.7h4.4"/>
<path stroke="#545454" stroke-width="2.47" shape-rendering="crispEdges" d="M700.3 96.5h2.4M656.6 98.5h2.4M660.6 100.5h2.4M674.5 102.6h2.4M702.3 102.6h2.4M678.5 104.6h2.4M672.5 106.6h2.4M678.5 106.6h2.4M678.5 108.6h2.4M728.1 110.6h2.4M690.4 112.6h2.4M722.2 112.6h2.4M674.5 114.7h2.4M678.5 116.7h2.4M678.5 118.7h2.4M678.5 120.7h2.4"/>
<path stroke="#787878" stroke-width="2.47" shape-rendering="crispEdges" d="M720.2 96.5h2.4M674.5 98.5h2.4M706.3 98.5h2.4M720.2 98.5h2.4M666.5 100.5h2.4M672.5 100.5h2.4M708.3 100.5h4.4M714.2 100.5h2.4M720.2 100.5h2.4M666.5 102.6h4.4M680.4 102.6h2.4M690.4 102.6h2.4M708.3 102.6h2.4M714.2 102.6h2.4M720.2 102.6h2.4M660.6 104.6h2.4M666.5 104.6h4.4M710.2 104.6h2.4M714.2 104.6h2.4M724.1 104.6h2.4M730.1 104.6h2.4M710.2 106.6h2.4M730.1 106.6h2.4M686.4 108.6h2.4M712.2 108.6h2.4M732.1 108.6h2.4M664.5 110.6h2.4M686.4 110.6h2.4M712.2 110.6h2.4M734.1 110.6h2.4M710.2 112.6h4.4M696.3 114.7h2.4M710.2 114.7h4.4M690.4 116.7h2.4M700.3 116.7h6.4M734.1 116.7h2.4M680.4 118.7h2.4M710.2 118.7h2.4M720.2 118.7h2.4M744.0 118.7h2.4M668.5 120.7h2.4M722.2 120.7h2.4M668.5 122.7h4.4M674.5 122.7h4.4M680.4 122.7h2.4M704.3 122.7h4.4M712.2 122.7h2.4M716.2 122.7h4.4M724.1 122.7h4.4M742.0 122.7h2.4M666.5 124.7h6.4M676.5 124.7h10.3M688.4 124.7h2.4M712.2 124.7h2.4M718.2 124.7h10.3M742.0 124.7h2.4M662.6 126.8h10.3M676.5 126.8h10.3M688.4 126.8h8.3M712.2 126.8h2.4M742.0 126.8h2.4M660.6 128.8h4.4M668.5 128.8h2.4M676.5 128.8h10.3M690.4 128.8h2.4M710.2 128.8h8.3M738.1 128.8h2.4M744.0 128.8h2.4M660.6 130.8h2.4M668.5 130.8h2.4M676.5 130.8h10.3M690.4 130.8h2.4M710.2 130.8h2.4M714.2 130.8h4.4M738.1 130.8h2.4M744.0 130.8h2.4"/>
<path stroke="#6c6c6c" stroke-width="2.47" shape-rendering="crispEdges" d="M722.2 96.5h2.4M664.5 98.5h2.4M722.2 98.5h2.4M664.5 100.5h2.4M706.3 100.5h2.4M722.2 100.5h2.4M664.5 102.6h2.4M706.3 102.6h2.4M712.2 102.6h2.4M722.2 102.6h2.4M664.5 104.6h2.4M690.4 104.6h2.4M698.3 104.6h2.4M712.2 104.6h2.4M722.2 104.6h2.4M662.6 106.6h4.4M688.4 106.6h2.4M704.3 106.6h2.4M722.2 106.6h6.4M672.5 110.6h2.4M696.3 112.6h2.4M720.2 112.6h2.4M730.1 112.6h2.4M720.2 116.7h2.4M704.3 118.7h2.4M724.1 118.7h4.4M706.3 120.7h2.4M722.2 128.8h4.4M692.4 130.8h2.4M720.2 130.8h8.3"/>
<path stroke="#9c9c9c" stroke-width="2.47" shape-rendering="crispEdges" d="M728.1 96.5h2.4M740.0 96.5h2.4M716.2 98.5h2.4M726.1 98.5h4.4M734.1 98.5h2.4M718.2 100.5h2.4M682.4 102.6h2.4M686.4 102.6h2.4M656.6 104.6h2.4M682.4 104.6h2.4M718.2 104.6h2.4M744.0 104.6h2.4M668.5 110.6h2.4M706.3 110.6h2.4M714.2 110.6h2.4M718.2 110.6h2.4M706.3 112.6h2.4M714.2 112.6h2.4M740.0 112.6h2.4M662.6 114.7h2.4M666.5 114.7h2.4M682.4 114.7h4.4M738.1 114.7h2.4M662.6 116.7h2.4M668.5 116.7h2.4M682.4 116.7h2.4M686.4 116.7h2.4M742.0 116.7h2.4M662.6 118.7h4.4M686.4 118.7h2.4M696.3 118.7h2.4M694.3 120.7h2.4"/>
<path stroke="#a8a8a8" stroke-width="2.47" shape-rendering="crispEdges" d="M734.1 96.5h2.4M738.1 96.5h2.4M682.4 98.5h2.4M736.1 102.6h2.4M744.0 102.6h2.4M740.0 104.6h4.4M658.6 106.6h2.4M668.5 112.6h2.4M668.5 114.7h4.4M716.2 114.7h2.4M740.0 114.7h2.4M738.1 116.7h2.4M738.1 118.7h2.4"/>
<path stroke="#b4b4b4" stroke-width="2.47" shape-rendering="crispEdges" d="M736.1 96.5h2.4M742.0 98.5h2.4M684.4 100.5h2.4M738.1 100.5h2.4M742.0 100.5h4.4M738.1 102.6h2.4M656.6 106.6h2.4M658.6 108.6h2.4M716.2 110.6h2.4M716.2 112.6h2.4M660.6 114.7h2.4M660.6 116.7h2.4M740.0 116.7h2.4M740.0 118.7h2.4M658.6 120.7h2.4"/>
<path stroke="#bababa" stroke-width="2.47" shape-rendering="crispEdges" d="M744.0 96.5h2.4M686.4 98.5h2.4M744.0 98.5h2.4M658.6 110.6h2.4M656.6 114.7h2.4M656.6 116.7h2.4M656.6 118.7h4.4M656.6 120.7h2.4"/>
<path stroke="#c6c6c6" stroke-width="2.47" shape-rendering="crispEdges" d="M684.4 98.5h2.4"/>
<path stroke="#4e4e4e" stroke-width="2.47" shape-rendering="crispEdges" d="M676.5 100.5h4.4M678.5 102.6h2.4M692.4 106.6h4.4M690.4 108.6h2.4M674.5 112.6h2.4M724.1 114.7h2.4M728.1 114.7h2.4M676.5 120.7h2.4"/>
<path stroke="#363636" stroke-width="2.47" shape-rendering="crispEdges" d="M674.5 106.6h4.4M674.5 108.6h4.4M676.5 110.6h2.4"/>
<rect x="467.6" y="95.5" width="279.8" height="36.3" fill="none" stroke="#0000ff" stroke-width="2.4"/>
<text transform="translate(463.10,105.50) scale(1.144,1.06)" font-family="Liberation Sans" font-size="7.4" fill="#222" stroke="#222" stroke-width="0.15" text-anchor="end" style="white-space:pre" >0.27</text>
<text transform="translate(463.10,114.40) scale(1.144,1.06)" font-family="Liberation Sans" font-size="7.4" fill="#222" stroke="#222" stroke-width="0.15" text-anchor="end" style="white-space:pre" >1.15</text>
<text transform="translate(463.10,123.30) scale(1.144,1.06)" font-family="Liberation Sans" font-size="7.4" fill="#222" stroke="#222" stroke-width="0.15" text-anchor="end" style="white-space:pre" >112</text>
<text transform="translate(750.90,99.40) scale(1.144,1.06)" font-family="Liberation Sans" font-size="5.5" fill="#222" stroke="#222" stroke-width="0.15" text-anchor="start" style="white-space:pre" >0.92"</text>
<text transform="translate(750.90,107.10) scale(1.144,1.06)" font-family="Liberation Sans" font-size="5.5" fill="#222" stroke="#222" stroke-width="0.15" text-anchor="start" style="white-space:pre" >(366, 23)</text>
<text transform="translate(750.90,114.90) scale(1.144,1.06)" font-family="Liberation Sans" font-size="5.5" fill="#222" stroke="#222" stroke-width="0.15" text-anchor="start" style="white-space:pre" >20190324</text>
<text transform="translate(750.90,121.90) scale(1.144,1.06)" font-family="Liberation Sans" font-size="5.5" fill="#222" stroke="#222" stroke-width="0.15" text-anchor="start" style="white-space:pre" >v014_02</text>
<text transform="translate(750.90,129.00) scale(1.144,1.06)" font-family="Liberation Sans" font-size="5.5" fill="#222" stroke="#222" stroke-width="0.15" text-anchor="start" style="white-space:pre" >025_LU_001</text>
<path stroke="#808080" stroke-width="2.87" shape-rendering="crispEdges" d="M469.8 136.0h5.3M550.2 136.0h2.8M557.6 136.0h2.8M479.6 138.4h2.8M508.8 138.4h2.8M552.7 138.4h5.3M469.8 140.8h2.8M479.6 140.8h2.8M538.1 140.8h2.8M513.7 143.3h2.8M518.6 143.3h2.8M535.6 143.3h2.8M552.7 143.3h5.3M474.7 145.7h2.8M489.3 145.7h2.8M518.6 145.7h2.8M528.3 145.7h2.8M535.6 145.7h2.8M555.1 145.7h2.8M508.8 148.1h2.8M513.7 148.1h2.8M555.1 148.1h2.8M482.0 150.5h2.8M499.1 150.5h5.3M528.3 150.5h2.8M472.2 152.9h2.8M482.0 152.9h2.8M491.7 152.9h2.8M511.2 152.9h2.8M552.7 152.9h2.8M477.1 155.4h2.8M484.4 155.4h2.8M511.2 155.4h2.8M523.4 155.4h2.8M545.4 155.4h2.8M479.6 157.8h2.8M496.6 157.8h2.8M516.1 157.8h2.8M474.7 160.2h2.8M484.4 160.2h2.8M491.7 160.2h2.8M506.4 160.2h2.8M525.9 160.2h2.8M530.7 160.2h5.3M472.2 162.6h19.9M494.2 162.6h66.2M469.8 165.1h32.1M503.9 165.1h46.7M552.7 165.1h5.3M469.8 167.5h83.3M555.1 167.5h5.3M469.8 169.9h83.3M555.1 169.9h2.8"/>
<path stroke="#909090" stroke-width="2.87" shape-rendering="crispEdges" d="M474.7 136.0h2.8M538.1 136.0h2.8M501.5 138.4h2.8M489.3 140.8h2.8M518.6 140.8h2.8M535.6 140.8h2.8M542.9 140.8h2.8M486.9 143.3h2.8M482.0 145.7h2.8M521.0 145.7h5.3M477.1 148.1h5.3M530.7 148.1h2.8M547.8 148.1h2.8M494.2 150.5h2.8M511.2 150.5h2.8M557.6 150.5h2.8M525.9 152.9h2.8M494.2 155.4h5.3M525.9 155.4h2.8M489.3 157.8h5.3M501.5 157.8h2.8M523.4 157.8h2.8M538.1 157.8h2.8M499.1 160.2h5.3M557.6 169.9h2.8"/>
<path stroke="#a0a0a0" stroke-width="2.87" shape-rendering="crispEdges" d="M477.1 136.0h2.8M518.6 136.0h2.8M545.4 136.0h2.8M506.4 138.4h2.8M523.4 138.4h2.8M474.7 140.8h5.3M508.8 140.8h2.8M523.4 140.8h2.8M491.7 143.3h2.8M538.1 145.7h2.8M557.6 145.7h2.8M474.7 148.1h2.8M491.7 148.1h2.8M503.9 148.1h2.8M521.0 148.1h2.8M538.1 150.5h2.8M469.8 152.9h2.8M479.6 152.9h2.8M494.2 152.9h2.8M506.4 152.9h2.8M530.7 152.9h2.8M550.2 152.9h2.8M506.4 155.4h2.8M540.5 155.4h5.3M552.7 155.4h2.8M469.8 157.8h5.3M545.4 157.8h2.8M482.0 160.2h2.8M503.9 160.2h2.8M511.2 160.2h2.8"/>
<path stroke="#505050" stroke-width="2.87" shape-rendering="crispEdges" d="M479.6 136.0h2.8M489.3 136.0h2.8M496.6 136.0h2.8M555.1 136.0h2.8M484.4 138.4h5.3M518.6 138.4h2.8M545.4 138.4h2.8M557.6 140.8h2.8M503.9 143.3h2.8M491.7 145.7h5.3M525.9 145.7h2.8M489.3 148.1h2.8M494.2 148.1h2.8M506.4 150.5h2.8M513.7 150.5h2.8M521.0 152.9h2.8M516.1 155.4h2.8M508.8 157.8h2.8M528.3 157.8h2.8M552.7 157.8h2.8M535.6 160.2h2.8M540.5 160.2h2.8"/>
<path stroke="#404040" stroke-width="2.87" shape-rendering="crispEdges" d="M482.0 136.0h2.8M521.0 136.0h2.8M552.7 136.0h2.8M469.8 138.4h2.8M474.7 138.4h2.8M516.1 138.4h2.8M547.8 138.4h2.8M552.7 140.8h2.8M499.1 143.3h2.8M513.7 145.7h2.8M518.6 150.5h2.8M542.9 150.5h2.8M547.8 152.9h2.8M479.6 155.4h2.8M503.9 155.4h2.8M533.2 155.4h2.8M482.0 157.8h2.8M530.7 157.8h2.8M472.2 160.2h2.8M508.8 160.2h2.8"/>
<path stroke="#c0c0c0" stroke-width="2.87" shape-rendering="crispEdges" d="M484.4 136.0h2.8M523.4 136.0h2.8M482.0 138.4h2.8M540.5 138.4h2.8M550.2 138.4h2.8M508.8 143.3h2.8M521.0 143.3h2.8M528.3 143.3h2.8M547.8 143.3h2.8M557.6 143.3h2.8M484.4 148.1h2.8M542.9 148.1h2.8M491.7 150.5h2.8M521.0 150.5h5.3M547.8 150.5h2.8M503.9 152.9h2.8M513.7 152.9h2.8M489.3 155.4h5.3M557.6 155.4h2.8M477.1 160.2h2.8"/>
<path stroke="#000000" stroke-width="2.87" shape-rendering="crispEdges" d="M486.9 136.0h2.8M494.2 136.0h2.8M501.5 136.0h2.8M506.4 136.0h2.8M547.8 136.0h2.8M538.1 138.4h2.8M557.6 138.4h2.8M528.3 140.8h7.7M547.8 140.8h2.8M484.4 143.3h2.8M525.9 143.3h2.8M545.4 143.3h2.8M533.2 145.7h2.8M525.9 148.1h2.8M545.4 148.1h2.8M494.2 157.8h2.8M535.6 157.8h2.8M545.4 160.2h2.8"/>
<path stroke="#ffffff" stroke-width="2.87" shape-rendering="crispEdges" d="M491.7 136.0h2.8M503.9 136.0h2.8M511.2 136.0h2.8M496.6 138.4h2.8M482.0 140.8h2.8M516.1 140.8h2.8M479.6 143.3h2.8M550.2 143.3h2.8M469.8 145.7h2.8M503.9 145.7h2.8M530.7 145.7h2.8M545.4 145.7h2.8M550.2 145.7h2.8M511.2 148.1h2.8M516.1 148.1h2.8M533.2 148.1h2.8M538.1 148.1h2.8M508.8 150.5h2.8M540.5 150.5h2.8M508.8 152.9h2.8M538.1 152.9h2.8M555.1 152.9h2.8M486.9 155.4h2.8M508.8 155.4h2.8M528.3 155.4h5.3M547.8 155.4h2.8M474.7 157.8h2.8M489.3 160.2h2.8"/>
<path stroke="#b0b0b0" stroke-width="2.87" shape-rendering="crispEdges" d="M499.1 136.0h2.8M491.7 138.4h2.8M484.4 140.8h5.3M503.9 140.8h2.8M545.4 140.8h2.8M489.3 143.3h2.8M511.2 143.3h2.8M479.6 145.7h2.8M484.4 145.7h2.8M516.1 145.7h2.8M552.7 145.7h2.8M469.8 148.1h2.8M552.7 148.1h2.8M472.2 150.5h5.3M486.9 152.9h2.8M557.6 152.9h2.8M469.8 155.4h2.8M499.1 155.4h2.8M538.1 155.4h2.8M550.2 155.4h2.8M477.1 157.8h2.8M499.1 157.8h2.8M540.5 157.8h2.8M542.9 160.2h2.8M555.1 160.2h2.8"/>
<path stroke="#f0f0f0" stroke-width="2.87" shape-rendering="crispEdges" d="M508.8 136.0h2.8M511.2 138.4h2.8M521.0 138.4h2.8M542.9 143.3h2.8M482.0 148.1h2.8M489.3 150.5h2.8M535.6 150.5h2.8M516.1 152.9h2.8"/>
<path stroke="#d0d0d0" stroke-width="2.87" shape-rendering="crispEdges" d="M513.7 136.0h2.8M530.7 136.0h2.8M472.2 138.4h2.8M477.1 138.4h2.8M494.2 138.4h2.8M513.7 138.4h2.8M494.2 140.8h2.8M501.5 140.8h2.8M506.4 140.8h2.8M496.6 143.3h2.8M516.1 143.3h2.8M506.4 148.1h2.8M518.6 148.1h2.8M469.8 150.5h2.8M477.1 150.5h2.8M474.7 152.9h5.3M489.3 152.9h2.8M518.6 152.9h2.8M533.2 152.9h2.8M482.0 155.4h2.8M501.5 155.4h2.8M535.6 155.4h2.8M518.6 157.8h2.8M557.6 157.8h2.8"/>
<path stroke="#707070" stroke-width="2.87" shape-rendering="crispEdges" d="M516.1 136.0h2.8M528.3 136.0h2.8M503.9 138.4h2.8M525.9 138.4h2.8M533.2 138.4h2.8M491.7 140.8h2.8M540.5 140.8h2.8M469.8 143.3h5.3M506.4 143.3h2.8M477.1 145.7h2.8M496.6 145.7h5.3M506.4 145.7h2.8M501.5 148.1h2.8M528.3 148.1h2.8M540.5 148.1h2.8M525.9 150.5h2.8M545.4 150.5h2.8M550.2 150.5h2.8M484.4 152.9h2.8M523.4 152.9h2.8M540.5 152.9h7.7M472.2 155.4h2.8M513.7 155.4h2.8M533.2 157.8h2.8M542.9 157.8h2.8M469.8 160.2h2.8M479.6 160.2h2.8M486.9 160.2h2.8M513.7 160.2h5.3M547.8 160.2h2.8M552.7 160.2h2.8M469.8 162.6h2.8M491.7 162.6h2.8M501.5 165.1h2.8M550.2 165.1h2.8M557.6 165.1h2.8M552.7 167.5h2.8M552.7 169.9h2.8"/>
<path stroke="#202020" stroke-width="2.87" shape-rendering="crispEdges" d="M525.9 136.0h2.8M533.2 136.0h2.8M489.3 138.4h2.8M542.9 138.4h2.8M511.2 140.8h5.3M555.1 140.8h2.8M494.2 143.3h2.8M501.5 143.3h2.8M472.2 145.7h2.8M501.5 145.7h2.8M557.6 148.1h2.8M533.2 150.5h2.8M511.2 157.8h2.8M525.9 157.8h2.8"/>
<path stroke="#606060" stroke-width="2.87" shape-rendering="crispEdges" d="M535.6 136.0h2.8M530.7 138.4h2.8M535.6 138.4h2.8M525.9 140.8h2.8M550.2 140.8h2.8M477.1 143.3h2.8M533.2 143.3h2.8M538.1 143.3h5.3M486.9 145.7h2.8M547.8 145.7h2.8M496.6 148.1h2.8M523.4 148.1h2.8M550.2 148.1h2.8M496.6 150.5h2.8M503.9 150.5h2.8M530.7 150.5h2.8M496.6 152.9h2.8M535.6 152.9h2.8M484.4 157.8h2.8M494.2 160.2h5.3M521.0 160.2h5.3M538.1 160.2h2.8M557.6 160.2h2.8"/>
<path stroke="#101010" stroke-width="2.87" shape-rendering="crispEdges" d="M540.5 136.0h2.8M472.2 140.8h2.8M499.1 140.8h2.8M521.0 140.8h2.8M474.7 143.3h2.8M523.4 143.3h2.8M530.7 143.3h2.8M508.8 145.7h2.8M542.9 145.7h2.8M535.6 148.1h2.8M484.4 150.5h5.3M516.1 150.5h2.8M552.7 150.5h2.8M499.1 152.9h2.8M474.7 155.4h2.8M518.6 155.4h2.8M550.2 157.8h2.8"/>
<path stroke="#e0e0e0" stroke-width="2.87" shape-rendering="crispEdges" d="M542.9 136.0h2.8M499.1 138.4h2.8M528.3 138.4h2.8M496.6 140.8h2.8M511.2 145.7h2.8M472.2 148.1h2.8M479.6 150.5h2.8M521.0 155.4h2.8M555.1 155.4h2.8M506.4 157.8h2.8M521.0 157.8h2.8M555.1 157.8h2.8"/>
<path stroke="#303030" stroke-width="2.87" shape-rendering="crispEdges" d="M482.0 143.3h2.8M540.5 145.7h2.8M486.9 148.1h2.8M499.1 148.1h2.8M555.1 150.5h2.8M501.5 152.9h2.8M528.3 152.9h2.8M486.9 157.8h2.8M503.9 157.8h2.8M513.7 157.8h2.8M547.8 157.8h2.8M518.6 160.2h2.8M528.3 160.2h2.8M550.2 160.2h2.8"/>
<rect x="560" y="134.8" width="4.1" height="36.3" fill="#fff"/>
<rect x="564.1" y="134.8" width="89.6" height="36.3" fill="#7f7f7f"/>
<rect x="653.7" y="134.8" width="2.9" height="36.3" fill="#fff"/>
<path stroke="#787878" stroke-width="2.47" shape-rendering="crispEdges" d="M656.6 135.8h2.4M694.3 135.8h2.4M706.3 135.8h2.4M716.2 135.8h2.4M724.1 135.8h2.4M656.6 137.8h2.4M692.4 137.8h2.4M706.3 137.8h2.4M716.2 137.8h2.4M724.1 137.8h2.4M656.6 139.8h2.4M682.4 139.8h2.4M690.4 139.8h2.4M690.4 141.9h2.4M704.3 141.9h2.4M710.2 141.9h2.4M744.0 141.9h2.4M658.6 143.9h2.4M710.2 143.9h2.4M714.2 143.9h2.4M722.2 143.9h2.4M660.6 145.9h2.4M670.5 145.9h4.4M690.4 145.9h2.4M704.3 145.9h2.4M712.2 145.9h2.4M736.1 145.9h2.4M664.5 147.9h4.4M672.5 147.9h2.4M724.1 147.9h2.4M656.6 149.9h2.4M664.5 149.9h4.4M698.3 149.9h2.4M706.3 149.9h2.4M730.1 149.9h2.4M734.1 149.9h4.4M656.6 151.9h4.4M664.5 151.9h2.4M706.3 151.9h2.4M728.1 151.9h2.4M734.1 151.9h2.4M656.6 154.0h6.4M706.3 154.0h6.4M728.1 154.0h2.4M656.6 156.0h2.4M660.6 156.0h2.4M712.2 156.0h2.4M722.2 156.0h4.4M728.1 156.0h2.4M744.0 156.0h2.4M656.6 158.0h2.4M660.6 158.0h2.4M726.1 158.0h4.4M660.6 160.0h2.4M688.4 160.0h2.4M720.2 160.0h2.4M728.1 160.0h2.4M670.5 162.0h2.4M686.4 162.0h4.4M708.3 162.0h2.4M716.2 162.0h2.4M720.2 162.0h2.4M724.1 162.0h4.4M730.1 162.0h2.4M660.6 164.0h2.4M670.5 164.0h2.4M686.4 164.0h4.4M708.3 164.0h2.4M718.2 164.0h2.4M724.1 164.0h2.4M740.0 164.0h6.4M660.6 166.1h2.4M686.4 166.1h4.4M708.3 166.1h2.4M724.1 166.1h2.4M732.1 166.1h2.4M740.0 166.1h6.4M660.6 168.1h2.4M668.5 168.1h2.4M678.5 168.1h2.4M686.4 168.1h4.4M698.3 168.1h4.4M724.1 168.1h2.4M732.1 168.1h2.4M740.0 168.1h2.4M660.6 170.1h2.4M668.5 170.1h2.4M676.5 170.1h4.4M686.4 170.1h4.4M698.3 170.1h4.4M724.1 170.1h2.4M738.1 170.1h2.4"/>
<path stroke="#909090" stroke-width="2.47" shape-rendering="crispEdges" d="M658.6 135.8h2.4M718.2 135.8h2.4M728.1 135.8h2.4M658.6 137.8h2.4M684.4 137.8h2.4M688.4 137.8h2.4M718.2 137.8h2.4M728.1 137.8h2.4M684.4 139.8h4.4M718.2 139.8h2.4M728.1 139.8h2.4M728.1 141.9h2.4M738.1 141.9h4.4M664.5 143.9h4.4M716.2 143.9h2.4M728.1 143.9h2.4M678.5 145.9h2.4M680.4 147.9h2.4M682.4 149.9h2.4M686.4 154.0h2.4M692.4 154.0h4.4M740.0 154.0h4.4M686.4 156.0h2.4M702.3 158.0h2.4M672.5 160.0h2.4M696.3 160.0h2.4M704.3 160.0h2.4M718.2 160.0h2.4M728.1 170.1h2.4"/>
<path stroke="#cccccc" stroke-width="2.47" shape-rendering="crispEdges" d="M660.6 135.8h2.4M662.6 139.8h2.4"/>
<path stroke="#f0f0f0" stroke-width="2.47" shape-rendering="crispEdges" d="M662.6 135.8h2.4"/>
<path stroke="#dedede" stroke-width="2.47" shape-rendering="crispEdges" d="M664.5 135.8h2.4"/>
<path stroke="#bababa" stroke-width="2.47" shape-rendering="crispEdges" d="M666.5 135.8h2.4M734.1 137.8h2.4M680.4 156.0h2.4M680.4 158.0h4.4M680.4 160.0h2.4"/>
<path stroke="#9c9c9c" stroke-width="2.47" shape-rendering="crispEdges" d="M668.5 135.8h2.4M740.0 135.8h2.4M686.4 137.8h2.4M730.1 139.8h2.4M668.5 141.9h2.4M736.1 141.9h2.4M734.1 143.9h2.4M676.5 145.9h2.4M716.2 145.9h4.4M730.1 145.9h4.4M742.0 145.9h2.4M718.2 147.9h2.4M740.0 147.9h2.4M744.0 147.9h2.4M674.5 149.9h2.4M680.4 149.9h2.4M714.2 149.9h2.4M718.2 149.9h2.4M740.0 149.9h2.4M674.5 151.9h2.4M714.2 151.9h2.4M718.2 151.9h2.4M742.0 151.9h2.4M674.5 154.0h2.4M698.3 154.0h2.4M718.2 154.0h2.4M684.4 156.0h2.4M696.3 156.0h2.4M716.2 156.0h2.4M684.4 158.0h2.4M692.4 158.0h2.4M718.2 158.0h2.4M692.4 160.0h2.4M698.3 160.0h4.4"/>
<path stroke="#8a8a8a" stroke-width="2.47" shape-rendering="crispEdges" d="M670.5 135.8h2.4M726.1 135.8h2.4M670.5 137.8h2.4M726.1 137.8h2.4M658.6 139.8h2.4M670.5 139.8h2.4M688.4 139.8h2.4M670.5 141.9h2.4M684.4 141.9h4.4M716.2 141.9h2.4M720.2 141.9h2.4M742.0 141.9h2.4M660.6 143.9h2.4M668.5 143.9h2.4M708.3 143.9h2.4M720.2 143.9h2.4M736.1 143.9h2.4M674.5 145.9h2.4M680.4 145.9h2.4M708.3 145.9h2.4M714.2 145.9h2.4M720.2 145.9h2.4M728.1 145.9h2.4M734.1 145.9h2.4M682.4 147.9h2.4M688.4 147.9h2.4M720.2 147.9h2.4M730.1 147.9h4.4M688.4 149.9h2.4M712.2 149.9h2.4M720.2 149.9h2.4M684.4 151.9h6.4M696.3 151.9h4.4M712.2 151.9h2.4M720.2 151.9h2.4M738.1 151.9h2.4M688.4 154.0h4.4M720.2 154.0h2.4M744.0 154.0h2.4M690.4 156.0h2.4M714.2 156.0h2.4M720.2 156.0h2.4M686.4 158.0h2.4M690.4 158.0h2.4M704.3 158.0h2.4M690.4 160.0h2.4M674.5 162.0h2.4M680.4 162.0h4.4M672.5 168.1h2.4M706.3 168.1h2.4M728.1 168.1h4.4M672.5 170.1h2.4M706.3 170.1h2.4M730.1 170.1h2.4"/>
<path stroke="#6c6c6c" stroke-width="2.47" shape-rendering="crispEdges" d="M672.5 135.8h2.4M698.3 135.8h2.4M710.2 135.8h2.4M722.2 135.8h2.4M744.0 135.8h2.4M672.5 137.8h2.4M694.3 137.8h2.4M722.2 137.8h2.4M744.0 137.8h2.4M672.5 139.8h2.4M692.4 139.8h2.4M704.3 139.8h2.4M744.0 139.8h2.4M672.5 141.9h4.4M678.5 141.9h4.4M702.3 141.9h2.4M714.2 141.9h2.4M712.2 143.9h2.4M702.3 145.9h2.4M670.5 147.9h2.4M696.3 147.9h4.4M660.6 149.9h2.4M668.5 149.9h2.4M730.1 151.9h2.4M662.6 154.0h2.4M702.3 154.0h2.4M732.1 154.0h2.4M662.6 156.0h2.4M734.1 156.0h2.4M708.3 158.0h2.4M722.2 158.0h4.4M742.0 158.0h2.4M712.2 162.0h2.4M734.1 162.0h4.4M712.2 164.0h4.4M734.1 164.0h4.4M664.5 166.1h2.4M712.2 166.1h2.4M716.2 166.1h2.4M734.1 166.1h4.4M664.5 168.1h2.4M712.2 168.1h2.4M718.2 168.1h6.4M734.1 168.1h2.4M662.6 170.1h4.4M712.2 170.1h2.4M718.2 170.1h6.4"/>
<path stroke="#5a5a5a" stroke-width="2.47" shape-rendering="crispEdges" d="M674.5 135.8h2.4M704.3 135.8h2.4M674.5 137.8h2.4M702.3 137.8h2.4M678.5 139.8h2.4M696.3 139.8h2.4M712.2 139.8h2.4M698.3 141.9h2.4M692.4 143.9h2.4M698.3 143.9h2.4M696.3 145.9h2.4M702.3 149.9h2.4M670.5 154.0h2.4M664.5 158.0h4.4M732.1 158.0h4.4M670.5 160.0h2.4M744.0 160.0h2.4"/>
<path stroke="#545454" stroke-width="2.47" shape-rendering="crispEdges" d="M676.5 135.8h2.4M702.3 135.8h2.4M714.2 135.8h2.4M676.5 137.8h2.4M680.4 137.8h2.4M712.2 137.8h4.4M694.3 145.9h2.4M668.5 156.0h4.4M670.5 158.0h2.4M664.5 160.0h2.4M710.2 160.0h2.4M736.1 160.0h2.4"/>
<path stroke="#484848" stroke-width="2.47" shape-rendering="crispEdges" d="M678.5 135.8h2.4M668.5 158.0h2.4M734.1 160.0h2.4"/>
<path stroke="#4e4e4e" stroke-width="2.47" shape-rendering="crispEdges" d="M680.4 135.8h2.4M712.2 135.8h2.4M678.5 137.8h2.4M694.3 141.9h4.4M694.3 143.9h4.4M666.5 160.0h2.4M712.2 160.0h2.4M732.1 160.0h2.4"/>
<path stroke="#727272" stroke-width="2.47" shape-rendering="crispEdges" d="M682.4 135.8h2.4M696.3 135.8h2.4M682.4 137.8h2.4M710.2 137.8h2.4M710.2 139.8h2.4M722.2 139.8h4.4M656.6 141.9h2.4M676.5 141.9h2.4M722.2 141.9h4.4M656.6 143.9h2.4M672.5 143.9h2.4M690.4 143.9h2.4M702.3 143.9h2.4M724.1 143.9h2.4M656.6 145.9h4.4M724.1 145.9h2.4M656.6 147.9h8.3M668.5 147.9h2.4M704.3 147.9h2.4M736.1 147.9h2.4M658.6 149.9h2.4M662.6 149.9h2.4M672.5 149.9h2.4M692.4 149.9h4.4M660.6 151.9h4.4M666.5 151.9h2.4M672.5 151.9h2.4M700.3 151.9h2.4M732.1 151.9h2.4M664.5 154.0h4.4M672.5 154.0h2.4M704.3 154.0h2.4M734.1 154.0h2.4M708.3 156.0h4.4M736.1 156.0h2.4M714.2 158.0h2.4M738.1 158.0h4.4M656.6 160.0h2.4M726.1 160.0h2.4M662.6 162.0h8.3M710.2 162.0h2.4M714.2 162.0h2.4M722.2 162.0h2.4M732.1 162.0h2.4M738.1 162.0h8.3M662.6 164.0h8.3M710.2 164.0h2.4M716.2 164.0h2.4M720.2 164.0h4.4M732.1 164.0h2.4M738.1 164.0h2.4M662.6 166.1h2.4M666.5 166.1h4.4M710.2 166.1h2.4M718.2 166.1h6.4M738.1 166.1h2.4M662.6 168.1h2.4M666.5 168.1h2.4M710.2 168.1h2.4M736.1 168.1h4.4M666.5 170.1h2.4M710.2 170.1h2.4M734.1 170.1h4.4"/>
<path stroke="#969696" stroke-width="2.47" shape-rendering="crispEdges" d="M684.4 135.8h2.4M688.4 135.8h2.4M730.1 135.8h2.4M730.1 137.8h2.4M740.0 137.8h2.4M740.0 139.8h2.4M718.2 141.9h2.4M662.6 143.9h2.4M718.2 143.9h2.4M740.0 143.9h4.4M740.0 145.9h2.4M744.0 145.9h2.4M674.5 147.9h2.4M714.2 147.9h2.4M682.4 151.9h2.4M740.0 151.9h2.4M744.0 151.9h2.4M684.4 154.0h2.4M696.3 154.0h2.4M714.2 154.0h2.4M692.4 156.0h4.4M700.3 156.0h2.4M694.3 158.0h4.4M716.2 158.0h2.4M684.4 160.0h2.4M694.3 160.0h2.4M702.3 160.0h2.4"/>
<path stroke="#a2a2a2" stroke-width="2.47" shape-rendering="crispEdges" d="M686.4 135.8h2.4M732.1 135.8h2.4M668.5 137.8h2.4M668.5 139.8h2.4M738.1 139.8h2.4M660.6 141.9h2.4M666.5 141.9h2.4M730.1 141.9h2.4M730.1 143.9h2.4M678.5 147.9h2.4M716.2 147.9h2.4M716.2 149.9h2.4M744.0 149.9h2.4M716.2 151.9h2.4M716.2 154.0h2.4M674.5 156.0h2.4M718.2 156.0h2.4M674.5 158.0h2.4M700.3 158.0h2.4M676.5 160.0h2.4"/>
<path stroke="#848484" stroke-width="2.47" shape-rendering="crispEdges" d="M690.4 135.8h2.4M720.2 135.8h2.4M720.2 137.8h2.4M708.3 139.8h2.4M720.2 139.8h2.4M726.1 139.8h2.4M688.4 141.9h2.4M706.3 141.9h4.4M676.5 143.9h2.4M682.4 143.9h8.3M706.3 143.9h2.4M738.1 143.9h2.4M744.0 143.9h2.4M664.5 145.9h2.4M682.4 145.9h2.4M688.4 145.9h2.4M706.3 145.9h2.4M686.4 147.9h2.4M708.3 147.9h2.4M712.2 147.9h2.4M728.1 147.9h2.4M684.4 149.9h4.4M690.4 149.9h2.4M708.3 149.9h2.4M722.2 149.9h2.4M738.1 149.9h2.4M690.4 151.9h6.4M722.2 151.9h2.4M700.3 154.0h2.4M712.2 154.0h2.4M738.1 154.0h2.4M688.4 156.0h2.4M740.0 156.0h2.4M672.5 158.0h2.4M720.2 158.0h2.4M706.3 160.0h2.4M716.2 160.0h2.4M672.5 162.0h2.4M676.5 162.0h4.4M692.4 162.0h4.4M698.3 162.0h8.3M672.5 164.0h12.3M692.4 164.0h4.4M702.3 164.0h6.4M672.5 166.1h4.4M680.4 166.1h4.4M692.4 166.1h4.4M704.3 166.1h4.4M728.1 166.1h4.4M674.5 168.1h2.4M692.4 168.1h4.4M704.3 168.1h2.4M726.1 168.1h2.4M674.5 170.1h2.4M692.4 170.1h4.4M704.3 170.1h2.4M726.1 170.1h2.4"/>
<path stroke="#7e7e7e" stroke-width="2.47" shape-rendering="crispEdges" d="M692.4 135.8h2.4M708.3 135.8h2.4M742.0 135.8h2.4M690.4 137.8h2.4M708.3 137.8h2.4M742.0 137.8h2.4M706.3 139.8h2.4M716.2 139.8h2.4M742.0 139.8h2.4M658.6 141.9h2.4M682.4 141.9h2.4M726.1 141.9h2.4M670.5 143.9h2.4M674.5 143.9h2.4M678.5 143.9h4.4M704.3 143.9h2.4M726.1 143.9h2.4M662.6 145.9h2.4M666.5 145.9h4.4M684.4 145.9h4.4M710.2 145.9h2.4M722.2 145.9h2.4M726.1 145.9h2.4M738.1 145.9h2.4M684.4 147.9h2.4M690.4 147.9h2.4M706.3 147.9h2.4M710.2 147.9h2.4M722.2 147.9h2.4M726.1 147.9h2.4M734.1 147.9h2.4M738.1 147.9h2.4M696.3 149.9h2.4M710.2 149.9h2.4M724.1 149.9h6.4M732.1 149.9h2.4M708.3 151.9h4.4M724.1 151.9h4.4M736.1 151.9h2.4M722.2 154.0h6.4M736.1 154.0h2.4M658.6 156.0h2.4M672.5 156.0h2.4M702.3 156.0h6.4M726.1 156.0h2.4M738.1 156.0h2.4M742.0 156.0h2.4M658.6 158.0h2.4M688.4 158.0h2.4M706.3 158.0h2.4M658.6 160.0h2.4M686.4 160.0h2.4M656.6 162.0h6.4M684.4 162.0h2.4M690.4 162.0h2.4M696.3 162.0h2.4M706.3 162.0h2.4M718.2 162.0h2.4M728.1 162.0h2.4M656.6 164.0h4.4M684.4 164.0h2.4M690.4 164.0h2.4M696.3 164.0h6.4M726.1 164.0h6.4M656.6 166.1h4.4M670.5 166.1h2.4M676.5 166.1h4.4M684.4 166.1h2.4M690.4 166.1h2.4M696.3 166.1h8.3M726.1 166.1h2.4M656.6 168.1h4.4M670.5 168.1h2.4M676.5 168.1h2.4M680.4 168.1h6.4M690.4 168.1h2.4M696.3 168.1h2.4M702.3 168.1h2.4M708.3 168.1h2.4M742.0 168.1h4.4M656.6 170.1h4.4M670.5 170.1h2.4M680.4 170.1h6.4M690.4 170.1h2.4M696.3 170.1h2.4M702.3 170.1h2.4M708.3 170.1h2.4M732.1 170.1h2.4M740.0 170.1h6.4"/>
<path stroke="#666666" stroke-width="2.47" shape-rendering="crispEdges" d="M700.3 135.8h2.4M696.3 137.8h6.4M700.3 139.8h4.4M700.3 141.9h2.4M700.3 143.9h2.4M692.4 147.9h2.4M670.5 149.9h2.4M704.3 149.9h2.4M668.5 151.9h2.4M704.3 151.9h2.4M730.1 154.0h2.4M664.5 156.0h4.4M730.1 156.0h4.4M662.6 158.0h2.4M730.1 158.0h2.4M736.1 158.0h2.4M744.0 158.0h2.4M708.3 160.0h2.4M722.2 160.0h2.4M730.1 160.0h2.4M740.0 160.0h2.4M714.2 166.1h2.4M714.2 168.1h4.4M714.2 170.1h4.4"/>
<path stroke="#c0c0c0" stroke-width="2.47" shape-rendering="crispEdges" d="M734.1 135.8h2.4M736.1 137.8h2.4M664.5 139.8h2.4"/>
<path stroke="#c6c6c6" stroke-width="2.47" shape-rendering="crispEdges" d="M736.1 135.8h2.4M660.6 137.8h2.4"/>
<path stroke="#b4b4b4" stroke-width="2.47" shape-rendering="crispEdges" d="M738.1 135.8h2.4M666.5 137.8h2.4M660.6 139.8h2.4M734.1 139.8h2.4M676.5 149.9h2.4M676.5 151.9h2.4M682.4 156.0h2.4M682.4 160.0h2.4"/>
<path stroke="#e4e4e4" stroke-width="2.47" shape-rendering="crispEdges" d="M662.6 137.8h2.4"/>
<path stroke="#d2d2d2" stroke-width="2.47" shape-rendering="crispEdges" d="M664.5 137.8h2.4"/>
<path stroke="#606060" stroke-width="2.47" shape-rendering="crispEdges" d="M704.3 137.8h2.4M674.5 139.8h4.4M680.4 139.8h2.4M694.3 139.8h2.4M698.3 139.8h2.4M714.2 139.8h2.4M692.4 141.9h2.4M712.2 141.9h2.4M692.4 145.9h2.4M698.3 145.9h4.4M694.3 147.9h2.4M700.3 147.9h4.4M700.3 149.9h2.4M670.5 151.9h2.4M702.3 151.9h2.4M668.5 154.0h2.4M710.2 158.0h4.4M662.6 160.0h2.4M714.2 160.0h2.4M724.1 160.0h2.4M738.1 160.0h2.4M742.0 160.0h2.4"/>
<path stroke="#a8a8a8" stroke-width="2.47" shape-rendering="crispEdges" d="M732.1 137.8h2.4M664.5 141.9h2.4M734.1 141.9h2.4M676.5 147.9h2.4M742.0 147.9h2.4M678.5 149.9h2.4M742.0 149.9h2.4M680.4 151.9h2.4M682.4 154.0h2.4M698.3 156.0h2.4M676.5 158.0h4.4M698.3 158.0h2.4M674.5 160.0h2.4M678.5 160.0h2.4"/>
<path stroke="#aeaeae" stroke-width="2.47" shape-rendering="crispEdges" d="M738.1 137.8h2.4M666.5 139.8h2.4M732.1 139.8h2.4M736.1 139.8h2.4M662.6 141.9h2.4M732.1 141.9h2.4M732.1 143.9h2.4M678.5 151.9h2.4M676.5 154.0h6.4M676.5 156.0h4.4"/>
<path stroke="#424242" stroke-width="2.47" shape-rendering="crispEdges" d="M668.5 160.0h2.4"/>
<rect x="467.6" y="134.8" width="279.8" height="36.3" fill="none" stroke="#00e000" stroke-width="2.4"/>
<text transform="translate(463.10,144.80) scale(1.144,1.06)" font-family="Liberation Sans" font-size="7.4" fill="#222" stroke="#222" stroke-width="0.15" text-anchor="end" style="white-space:pre" >0.24</text>
<text transform="translate(463.10,153.70) scale(1.144,1.06)" font-family="Liberation Sans" font-size="7.4" fill="#222" stroke="#222" stroke-width="0.15" text-anchor="end" style="white-space:pre" >2.34</text>
<text transform="translate(463.10,162.60) scale(1.144,1.06)" font-family="Liberation Sans" font-size="7.4" fill="#222" stroke="#222" stroke-width="0.15" text-anchor="end" style="white-space:pre" >112</text>
<text transform="translate(750.90,138.70) scale(1.144,1.06)" font-family="Liberation Sans" font-size="5.5" fill="#222" stroke="#222" stroke-width="0.15" text-anchor="start" style="white-space:pre" >1.02"</text>
<text transform="translate(750.90,146.40) scale(1.144,1.06)" font-family="Liberation Sans" font-size="5.5" fill="#222" stroke="#222" stroke-width="0.15" text-anchor="start" style="white-space:pre" >(366, 23)</text>
<text transform="translate(750.90,154.20) scale(1.144,1.06)" font-family="Liberation Sans" font-size="5.5" fill="#222" stroke="#222" stroke-width="0.15" text-anchor="start" style="white-space:pre" >20190324</text>
<text transform="translate(750.90,161.20) scale(1.144,1.06)" font-family="Liberation Sans" font-size="5.5" fill="#222" stroke="#222" stroke-width="0.15" text-anchor="start" style="white-space:pre" >v014_03</text>
<text transform="translate(750.90,168.30) scale(1.144,1.06)" font-family="Liberation Sans" font-size="5.5" fill="#222" stroke="#222" stroke-width="0.15" text-anchor="start" style="white-space:pre" >025_LU_001</text>
<path stroke="#d0d0d0" stroke-width="2.87" shape-rendering="crispEdges" d="M469.8 175.3h5.3M479.6 175.3h2.8M484.4 175.3h5.3M491.7 175.3h2.8M496.6 175.3h10.2M508.8 175.3h2.8M516.1 175.3h2.8M530.7 175.3h2.8M545.4 175.3h10.2M472.2 177.7h2.8M486.9 177.7h2.8M499.1 177.7h10.2M511.2 177.7h2.8M516.1 177.7h2.8M528.3 177.7h5.3M538.1 177.7h10.2M552.7 177.7h5.3M472.2 180.1h2.8M479.6 180.1h5.3M486.9 180.1h2.8M496.6 180.1h2.8M501.5 180.1h7.7M511.2 180.1h2.8M521.0 180.1h5.3M528.3 180.1h12.6M552.7 180.1h5.3M469.8 182.6h2.8M477.1 182.6h5.3M484.4 182.6h5.3M491.7 182.6h2.8M499.1 182.6h2.8M503.9 182.6h2.8M511.2 182.6h5.3M521.0 182.6h17.5M547.8 182.6h2.8M552.7 182.6h2.8M474.7 185.0h5.3M482.0 185.0h2.8M501.5 185.0h2.8M511.2 185.0h2.8M521.0 185.0h2.8M530.7 185.0h2.8M538.1 185.0h2.8M545.4 185.0h2.8M557.6 185.0h2.8M484.4 201.9h2.8M491.7 201.9h2.8M499.1 201.9h7.7M508.8 201.9h2.8M533.2 201.9h2.8M550.2 201.9h2.8M499.1 204.3h2.8M511.2 204.3h5.3M533.2 204.3h2.8M552.7 204.3h2.8M557.6 204.3h2.8M472.2 206.8h2.8M484.4 206.8h2.8M501.5 206.8h2.8M508.8 206.8h2.8M528.3 206.8h2.8M535.6 206.8h2.8M540.5 206.8h2.8M550.2 206.8h2.8M479.6 209.2h2.8M501.5 209.2h2.8M523.4 209.2h5.3M533.2 209.2h2.8"/>
<path stroke="#c0c0c0" stroke-width="2.87" shape-rendering="crispEdges" d="M474.7 175.3h5.3M482.0 175.3h2.8M489.3 175.3h2.8M494.2 175.3h2.8M506.4 175.3h2.8M511.2 175.3h5.3M518.6 175.3h12.6M533.2 175.3h12.6M555.1 175.3h5.3M469.8 177.7h2.8M474.7 177.7h12.6M489.3 177.7h10.2M508.8 177.7h2.8M513.7 177.7h2.8M518.6 177.7h10.2M533.2 177.7h5.3M547.8 177.7h5.3M557.6 177.7h2.8M469.8 180.1h2.8M474.7 180.1h5.3M484.4 180.1h2.8M489.3 180.1h7.7M499.1 180.1h2.8M508.8 180.1h2.8M513.7 180.1h7.7M525.9 180.1h2.8M540.5 180.1h12.6M557.6 180.1h2.8M472.2 182.6h5.3M482.0 182.6h2.8M489.3 182.6h2.8M494.2 182.6h5.3M501.5 182.6h2.8M506.4 182.6h5.3M516.1 182.6h5.3M538.1 182.6h10.2M550.2 182.6h2.8M555.1 182.6h5.3M469.8 185.0h5.3M479.6 185.0h2.8M484.4 185.0h17.5M506.4 185.0h5.3M513.7 185.0h7.7M523.4 185.0h7.7M533.2 185.0h5.3M540.5 185.0h5.3M547.8 185.0h10.2M469.8 201.9h2.8M486.9 201.9h2.8M516.1 201.9h2.8M542.9 201.9h5.3M479.6 204.3h5.3M489.3 204.3h2.8M494.2 204.3h2.8M521.0 204.3h5.3M530.7 204.3h2.8M538.1 204.3h2.8M542.9 204.3h5.3M474.7 206.8h2.8M479.6 206.8h5.3M511.2 206.8h5.3M518.6 206.8h10.2M542.9 206.8h2.8M469.8 209.2h2.8M474.7 209.2h5.3M482.0 209.2h5.3M494.2 209.2h2.8M499.1 209.2h2.8M513.7 209.2h2.8M521.0 209.2h2.8M528.3 209.2h2.8M538.1 209.2h2.8M550.2 209.2h2.8M557.6 209.2h2.8"/>
<path stroke="#b0b0b0" stroke-width="2.87" shape-rendering="crispEdges" d="M503.9 185.0h2.8M474.7 187.4h2.8M482.0 187.4h2.8M477.1 201.9h2.8M525.9 201.9h2.8M557.6 201.9h2.8M477.1 204.3h2.8M491.7 204.3h2.8M501.5 204.3h2.8M516.1 204.3h2.8M525.9 204.3h2.8M535.6 204.3h2.8M555.1 204.3h2.8M469.8 206.8h2.8M486.9 206.8h5.3M552.7 206.8h2.8M557.6 206.8h2.8M486.9 209.2h5.3M508.8 209.2h2.8M530.7 209.2h2.8M535.6 209.2h2.8M540.5 209.2h2.8M545.4 209.2h5.3"/>
<path stroke="#a0a0a0" stroke-width="2.87" shape-rendering="crispEdges" d="M469.8 187.4h5.3M477.1 187.4h5.3M489.3 187.4h2.8M496.6 187.4h5.3M503.9 187.4h5.3M516.1 187.4h2.8M523.4 187.4h2.8M530.7 187.4h12.6M545.4 187.4h2.8M550.2 187.4h10.2M489.3 201.9h2.8M506.4 201.9h2.8M518.6 201.9h2.8M530.7 201.9h2.8M547.8 201.9h2.8M552.7 201.9h5.3M469.8 204.3h2.8M474.7 204.3h2.8M518.6 204.3h2.8M547.8 204.3h2.8M530.7 206.8h2.8M555.1 206.8h2.8M503.9 209.2h2.8M516.1 209.2h2.8"/>
<path stroke="#909090" stroke-width="2.87" shape-rendering="crispEdges" d="M484.4 187.4h5.3M491.7 187.4h5.3M508.8 187.4h7.7M518.6 187.4h5.3M528.3 187.4h2.8M542.9 187.4h2.8M547.8 187.4h2.8M474.7 201.9h2.8M496.6 201.9h2.8M511.2 201.9h2.8M528.3 204.3h2.8M550.2 204.3h2.8M477.1 206.8h2.8M538.1 206.8h2.8M491.7 209.2h2.8M542.9 209.2h2.8M555.1 209.2h2.8"/>
<path stroke="#808080" stroke-width="2.87" shape-rendering="crispEdges" d="M501.5 187.4h2.8M525.9 187.4h2.8M477.1 189.8h2.8M538.1 201.9h2.8M503.9 204.3h2.8M540.5 204.3h2.8M533.2 206.8h2.8M472.2 209.2h2.8"/>
<path stroke="#303030" stroke-width="2.87" shape-rendering="crispEdges" d="M469.8 189.8h5.3M484.4 189.8h2.8M518.6 189.8h2.8M535.6 189.8h2.8M540.5 189.8h2.8M555.1 189.8h2.8M469.8 192.2h2.8M496.6 192.2h2.8M511.2 192.2h2.8M518.6 192.2h2.8M525.9 192.2h2.8M533.2 192.2h2.8M540.5 192.2h2.8M469.8 194.7h2.8M474.7 194.7h2.8M479.6 194.7h5.3M486.9 194.7h2.8M499.1 194.7h2.8M523.4 194.7h5.3M533.2 194.7h2.8M555.1 194.7h2.8M474.7 197.1h2.8M491.7 197.1h2.8M501.5 197.1h2.8M513.7 197.1h2.8M521.0 197.1h2.8M528.3 197.1h2.8M535.6 197.1h5.3M469.8 199.5h2.8M477.1 199.5h2.8M499.1 199.5h2.8M518.6 199.5h2.8M540.5 199.5h10.2"/>
<path stroke="#505050" stroke-width="2.87" shape-rendering="crispEdges" d="M474.7 189.8h2.8M479.6 189.8h2.8M494.2 189.8h2.8M499.1 189.8h2.8M508.8 189.8h2.8M521.0 189.8h2.8M525.9 189.8h5.3M533.2 189.8h2.8M542.9 189.8h2.8M557.6 189.8h2.8M521.0 192.2h2.8M501.5 194.7h5.3M511.2 194.7h2.8M518.6 194.7h2.8M484.4 197.1h2.8M530.7 197.1h2.8M472.2 199.5h2.8M491.7 199.5h2.8M503.9 199.5h2.8M508.8 199.5h5.3M516.1 199.5h2.8M523.4 199.5h2.8M528.3 199.5h2.8M538.1 199.5h2.8M550.2 199.5h2.8M557.6 199.5h2.8"/>
<path stroke="#404040" stroke-width="2.87" shape-rendering="crispEdges" d="M482.0 189.8h2.8M489.3 189.8h5.3M506.4 189.8h2.8M511.2 189.8h7.7M523.4 189.8h2.8M538.1 189.8h2.8M550.2 189.8h5.3M508.8 192.2h2.8M528.3 192.2h2.8M542.9 192.2h5.3M506.4 194.7h2.8M538.1 194.7h5.3M482.0 197.1h2.8M511.2 197.1h2.8M518.6 197.1h2.8M545.4 197.1h2.8M552.7 197.1h7.7M474.7 199.5h2.8M479.6 199.5h2.8M486.9 199.5h2.8M494.2 199.5h2.8M506.4 199.5h2.8M533.2 199.5h2.8"/>
<path stroke="#606060" stroke-width="2.87" shape-rendering="crispEdges" d="M486.9 189.8h2.8M496.6 189.8h2.8M503.9 189.8h2.8M552.7 192.2h2.8M482.0 199.5h5.3M525.9 199.5h2.8M530.7 199.5h2.8M552.7 199.5h2.8"/>
<path stroke="#707070" stroke-width="2.87" shape-rendering="crispEdges" d="M501.5 189.8h2.8M545.4 189.8h2.8M477.1 192.2h2.8M496.6 199.5h2.8M513.7 199.5h2.8M535.6 199.5h2.8M555.1 199.5h2.8"/>
<path stroke="#101010" stroke-width="2.87" shape-rendering="crispEdges" d="M530.7 189.8h2.8M472.2 192.2h2.8M484.4 192.2h2.8M489.3 192.2h2.8M499.1 192.2h2.8M503.9 192.2h5.3M523.4 192.2h2.8M530.7 192.2h2.8M538.1 192.2h2.8M547.8 192.2h2.8M555.1 192.2h2.8M484.4 194.7h2.8M491.7 194.7h2.8M496.6 194.7h2.8M508.8 194.7h2.8M513.7 194.7h2.8M528.3 194.7h5.3M535.6 194.7h2.8M545.4 194.7h2.8M552.7 194.7h2.8M557.6 194.7h2.8M472.2 197.1h2.8M477.1 197.1h2.8M508.8 197.1h2.8M540.5 197.1h5.3"/>
<path stroke="#202020" stroke-width="2.87" shape-rendering="crispEdges" d="M547.8 189.8h2.8M474.7 192.2h2.8M479.6 192.2h2.8M486.9 192.2h2.8M491.7 192.2h2.8M513.7 192.2h5.3M535.6 192.2h2.8M550.2 192.2h2.8M557.6 192.2h2.8M472.2 194.7h2.8M477.1 194.7h2.8M489.3 194.7h2.8M494.2 194.7h2.8M516.1 194.7h2.8M547.8 194.7h2.8M479.6 197.1h2.8M496.6 197.1h5.3M523.4 197.1h5.3M533.2 197.1h2.8M547.8 197.1h5.3M489.3 199.5h2.8M501.5 199.5h2.8M521.0 199.5h2.8"/>
<path stroke="#000000" stroke-width="2.87" shape-rendering="crispEdges" d="M482.0 192.2h2.8M494.2 192.2h2.8M501.5 192.2h2.8M521.0 194.7h2.8M542.9 194.7h2.8M550.2 194.7h2.8M469.8 197.1h2.8M486.9 197.1h5.3M494.2 197.1h2.8M503.9 197.1h5.3M516.1 197.1h2.8"/>
<path stroke="#e0e0e0" stroke-width="2.87" shape-rendering="crispEdges" d="M472.2 201.9h2.8M494.2 201.9h2.8M523.4 201.9h2.8M535.6 201.9h2.8M540.5 201.9h2.8M484.4 204.3h5.3M496.6 204.3h2.8M508.8 204.3h2.8M491.7 206.8h10.2M503.9 206.8h5.3M545.4 206.8h2.8M511.2 209.2h2.8M518.6 209.2h2.8M552.7 209.2h2.8"/>
<path stroke="#f0f0f0" stroke-width="2.87" shape-rendering="crispEdges" d="M479.6 201.9h5.3M513.7 201.9h2.8M521.0 201.9h2.8M472.2 204.3h2.8M547.8 206.8h2.8M496.6 209.2h2.8M506.4 209.2h2.8"/>
<path stroke="#ffffff" stroke-width="2.87" shape-rendering="crispEdges" d="M528.3 201.9h2.8M506.4 204.3h2.8M516.1 206.8h2.8"/>
<rect x="560" y="174.1" width="4.1" height="36.3" fill="#fff"/>
<rect x="564.1" y="174.1" width="89.6" height="36.3" fill="#7f7f7f"/>
<rect x="653.7" y="174.1" width="2.9" height="36.3" fill="#fff"/>
<path stroke="#aeaeae" stroke-width="2.47" shape-rendering="crispEdges" d="M656.6 175.1h2.4"/>
<path stroke="#b4b4b4" stroke-width="2.47" shape-rendering="crispEdges" d="M658.6 175.1h8.3"/>
<path stroke="#c0c0c0" stroke-width="2.47" shape-rendering="crispEdges" d="M666.5 175.1h2.4M700.3 175.1h6.4M662.6 177.1h6.4M702.3 177.1h8.3M664.5 179.1h6.4M702.3 179.1h2.4M708.3 179.1h2.4M718.2 179.1h8.3M664.5 181.2h6.4M702.3 181.2h4.4M708.3 181.2h2.4M718.2 181.2h2.4M724.1 181.2h2.4M742.0 181.2h2.4M656.6 183.2h4.4M708.3 183.2h2.4M722.2 183.2h4.4M742.0 183.2h2.4M658.6 185.2h4.4M690.4 185.2h2.4M708.3 185.2h4.4M742.0 185.2h2.4"/>
<path stroke="#c6c6c6" stroke-width="2.47" shape-rendering="crispEdges" d="M668.5 175.1h4.4M698.3 175.1h2.4M706.3 175.1h8.3M656.6 177.1h6.4M668.5 177.1h10.3M700.3 177.1h2.4M710.2 177.1h2.4M720.2 177.1h10.3M662.6 179.1h2.4M670.5 179.1h8.3M700.3 179.1h2.4M710.2 179.1h2.4M716.2 179.1h2.4M726.1 179.1h8.3M656.6 181.2h8.3M670.5 181.2h6.4M700.3 181.2h2.4M710.2 181.2h8.3M726.1 181.2h4.4M738.1 181.2h4.4M660.6 183.2h8.3M676.5 183.2h2.4M688.4 183.2h6.4M704.3 183.2h4.4M710.2 183.2h2.4M718.2 183.2h4.4M726.1 183.2h2.4M740.0 183.2h2.4M662.6 185.2h4.4M674.5 185.2h4.4M686.4 185.2h4.4M692.4 185.2h4.4M706.3 185.2h2.4M712.2 185.2h2.4M724.1 185.2h2.4M740.0 185.2h2.4"/>
<path stroke="#cccccc" stroke-width="2.47" shape-rendering="crispEdges" d="M672.5 175.1h8.3M696.3 175.1h2.4M714.2 175.1h4.4M726.1 175.1h2.4M678.5 177.1h2.4M698.3 177.1h2.4M712.2 177.1h8.3M730.1 177.1h4.4M658.6 179.1h4.4M678.5 179.1h10.3M712.2 179.1h4.4M734.1 179.1h12.3M676.5 181.2h4.4M684.4 181.2h8.3M730.1 181.2h4.4M736.1 181.2h2.4M668.5 183.2h8.3M678.5 183.2h2.4M684.4 183.2h4.4M694.3 183.2h2.4M702.3 183.2h2.4M712.2 183.2h6.4M728.1 183.2h4.4M738.1 183.2h2.4M666.5 185.2h8.3M678.5 185.2h8.3M696.3 185.2h2.4M702.3 185.2h4.4M714.2 185.2h10.3M726.1 185.2h14.3"/>
<path stroke="#d2d2d2" stroke-width="2.47" shape-rendering="crispEdges" d="M680.4 175.1h2.4M692.4 175.1h4.4M718.2 175.1h2.4M722.2 175.1h4.4M728.1 175.1h2.4M680.4 177.1h4.4M696.3 177.1h2.4M734.1 177.1h2.4M656.6 179.1h2.4M688.4 179.1h2.4M698.3 179.1h2.4M680.4 181.2h4.4M692.4 181.2h8.3M734.1 181.2h2.4M680.4 183.2h4.4M696.3 183.2h6.4M732.1 183.2h6.4M698.3 185.2h4.4"/>
<path stroke="#d8d8d8" stroke-width="2.47" shape-rendering="crispEdges" d="M682.4 175.1h10.3M720.2 175.1h2.4M730.1 175.1h2.4M684.4 177.1h12.3M736.1 177.1h10.3M690.4 179.1h8.3"/>
<path stroke="#dedede" stroke-width="2.47" shape-rendering="crispEdges" d="M732.1 175.1h4.4M740.0 175.1h6.4"/>
<path stroke="#e4e4e4" stroke-width="2.47" shape-rendering="crispEdges" d="M736.1 175.1h4.4"/>
<path stroke="#bababa" stroke-width="2.47" shape-rendering="crispEdges" d="M704.3 179.1h4.4M706.3 181.2h2.4M720.2 181.2h4.4M744.0 181.2h2.4M744.0 183.2h2.4M656.6 185.2h2.4M744.0 185.2h2.4"/>
<path stroke="#6c6c6c" stroke-width="2.47" shape-rendering="crispEdges" d="M656.6 187.2h6.4M656.6 201.3h6.4M680.4 201.3h8.3M694.3 201.3h8.3M704.3 201.3h4.4M718.2 201.3h6.4M732.1 201.3h2.4"/>
<path stroke="#727272" stroke-width="2.47" shape-rendering="crispEdges" d="M662.6 187.2h4.4M704.3 187.2h10.3M708.3 201.3h10.3M734.1 201.3h12.3"/>
<path stroke="#787878" stroke-width="2.47" shape-rendering="crispEdges" d="M666.5 187.2h12.3M686.4 187.2h8.3M700.3 187.2h4.4M714.2 187.2h6.4M736.1 187.2h10.3"/>
<path stroke="#7e7e7e" stroke-width="2.47" shape-rendering="crispEdges" d="M678.5 187.2h2.4M682.4 187.2h4.4M694.3 187.2h6.4M720.2 187.2h16.3"/>
<path stroke="#848484" stroke-width="2.47" shape-rendering="crispEdges" d="M680.4 187.2h2.4M676.5 203.3h2.4M656.6 209.4h2.4"/>
<path stroke="#242424" stroke-width="2.47" shape-rendering="crispEdges" d="M656.6 189.2h4.4M674.5 189.2h4.4M698.3 189.2h2.4M720.2 189.2h4.4M736.1 189.2h10.3M744.0 199.3h2.4"/>
<path stroke="#1e1e1e" stroke-width="2.47" shape-rendering="crispEdges" d="M660.6 189.2h14.3M700.3 189.2h4.4M708.3 189.2h12.3M682.4 199.3h6.4M712.2 199.3h2.4M742.0 199.3h2.4"/>
<path stroke="#2a2a2a" stroke-width="2.47" shape-rendering="crispEdges" d="M678.5 189.2h2.4M684.4 189.2h14.3M724.1 189.2h12.3"/>
<path stroke="#303030" stroke-width="2.47" shape-rendering="crispEdges" d="M680.4 189.2h4.4"/>
<path stroke="#181818" stroke-width="2.47" shape-rendering="crispEdges" d="M704.3 189.2h4.4M680.4 199.3h2.4M688.4 199.3h2.4M708.3 199.3h4.4M714.2 199.3h6.4M740.0 199.3h2.4"/>
<path stroke="#000000" stroke-width="2.47" shape-rendering="crispEdges" d="M656.6 191.2h89.8M656.6 193.3h89.8M656.6 195.3h89.8M656.6 197.3h89.8M664.5 199.3h2.4"/>
<path stroke="#0c0c0c" stroke-width="2.47" shape-rendering="crispEdges" d="M656.6 199.3h4.4M676.5 199.3h2.4M692.4 199.3h8.3M726.1 199.3h10.3"/>
<path stroke="#060606" stroke-width="2.47" shape-rendering="crispEdges" d="M660.6 199.3h4.4M666.5 199.3h10.3"/>
<path stroke="#121212" stroke-width="2.47" shape-rendering="crispEdges" d="M678.5 199.3h2.4M690.4 199.3h2.4M700.3 199.3h8.3M720.2 199.3h6.4M736.1 199.3h4.4"/>
<path stroke="#666666" stroke-width="2.47" shape-rendering="crispEdges" d="M662.6 201.3h4.4M678.5 201.3h2.4M688.4 201.3h6.4M702.3 201.3h2.4M724.1 201.3h8.3"/>
<path stroke="#606060" stroke-width="2.47" shape-rendering="crispEdges" d="M666.5 201.3h12.3"/>
<path stroke="#969696" stroke-width="2.47" shape-rendering="crispEdges" d="M656.6 203.3h6.4M692.4 203.3h8.3M704.3 203.3h8.3M732.1 203.3h2.4M738.1 203.3h2.4M656.6 205.4h8.3M690.4 205.4h2.4M698.3 205.4h4.4M710.2 205.4h6.4M722.2 205.4h4.4M728.1 205.4h4.4M740.0 205.4h2.4M660.6 207.4h4.4M688.4 207.4h4.4M712.2 207.4h8.3M722.2 207.4h4.4M736.1 207.4h2.4M742.0 207.4h4.4M660.6 209.4h4.4M686.4 209.4h2.4M690.4 209.4h2.4M716.2 209.4h20.3M744.0 209.4h2.4"/>
<path stroke="#909090" stroke-width="2.47" shape-rendering="crispEdges" d="M662.6 203.3h4.4M690.4 203.3h2.4M700.3 203.3h4.4M712.2 203.3h20.3M740.0 203.3h2.4M664.5 205.4h4.4M688.4 205.4h2.4M716.2 205.4h6.4M742.0 205.4h4.4M658.6 207.4h2.4M664.5 207.4h4.4M682.4 207.4h6.4M720.2 207.4h2.4M664.5 209.4h4.4M678.5 209.4h8.3M688.4 209.4h2.4"/>
<path stroke="#8a8a8a" stroke-width="2.47" shape-rendering="crispEdges" d="M666.5 203.3h10.3M678.5 203.3h12.3M742.0 203.3h4.4M668.5 205.4h20.3M656.6 207.4h2.4M668.5 207.4h14.3M658.6 209.4h2.4M668.5 209.4h10.3"/>
<path stroke="#9c9c9c" stroke-width="2.47" shape-rendering="crispEdges" d="M734.1 203.3h4.4M692.4 205.4h6.4M702.3 205.4h2.4M708.3 205.4h2.4M726.1 205.4h2.4M732.1 205.4h8.3M692.4 207.4h8.3M708.3 207.4h4.4M726.1 207.4h10.3M738.1 207.4h4.4M692.4 209.4h2.4M712.2 209.4h4.4M736.1 209.4h4.4M742.0 209.4h2.4"/>
<path stroke="#a2a2a2" stroke-width="2.47" shape-rendering="crispEdges" d="M704.3 205.4h4.4M700.3 207.4h4.4M706.3 207.4h2.4M694.3 209.4h6.4M708.3 209.4h4.4M740.0 209.4h2.4"/>
<path stroke="#a8a8a8" stroke-width="2.47" shape-rendering="crispEdges" d="M704.3 207.4h2.4M700.3 209.4h8.3"/>
<rect x="467.6" y="174.1" width="279.8" height="36.3" fill="none" stroke="#ffa500" stroke-width="2.4"/>
<text transform="translate(463.10,184.10) scale(1.144,1.06)" font-family="Liberation Sans" font-size="7.4" fill="#222" stroke="#222" stroke-width="0.15" text-anchor="end" style="white-space:pre" >0.23</text>
<text transform="translate(463.10,193.00) scale(1.144,1.06)" font-family="Liberation Sans" font-size="7.4" fill="#222" stroke="#222" stroke-width="0.15" text-anchor="end" style="white-space:pre" >1.64</text>
<text transform="translate(463.10,201.90) scale(1.144,1.06)" font-family="Liberation Sans" font-size="7.4" fill="#222" stroke="#222" stroke-width="0.15" text-anchor="end" style="white-space:pre" >113</text>
<text transform="translate(750.90,178.00) scale(1.144,1.06)" font-family="Liberation Sans" font-size="5.5" fill="#222" stroke="#222" stroke-width="0.15" text-anchor="start" style="white-space:pre" >0.68"</text>
<text transform="translate(750.90,185.70) scale(1.144,1.06)" font-family="Liberation Sans" font-size="5.5" fill="#222" stroke="#222" stroke-width="0.15" text-anchor="start" style="white-space:pre" >(366, 1021)</text>
<text transform="translate(750.90,193.50) scale(1.144,1.06)" font-family="Liberation Sans" font-size="5.5" fill="#222" stroke="#222" stroke-width="0.15" text-anchor="start" style="white-space:pre" >20190324</text>
<text transform="translate(750.90,200.50) scale(1.144,1.06)" font-family="Liberation Sans" font-size="5.5" fill="#222" stroke="#222" stroke-width="0.15" text-anchor="start" style="white-space:pre" >v014_01</text>
<text transform="translate(750.90,207.60) scale(1.144,1.06)" font-family="Liberation Sans" font-size="5.5" fill="#222" stroke="#222" stroke-width="0.15" text-anchor="start" style="white-space:pre" >025_LL_112</text>
<path stroke="#ffffff" stroke-width="2.87" shape-rendering="crispEdges" d="M469.8 214.6h2.8M501.5 214.6h2.8M555.1 214.6h2.8M491.7 219.4h5.3M516.1 219.4h2.8M521.0 219.4h5.3M477.1 221.9h2.8M530.7 224.3h2.8M477.1 226.7h2.8M491.7 226.7h2.8M496.6 226.7h2.8M506.4 226.7h2.8M482.0 229.1h2.8M545.4 229.1h2.8M469.8 231.5h2.8M479.6 231.5h2.8M499.1 231.5h2.8M557.6 231.5h2.8M501.5 234.0h2.8M533.2 236.4h2.8M550.2 236.4h2.8"/>
<path stroke="#505050" stroke-width="2.87" shape-rendering="crispEdges" d="M472.2 214.6h5.3M506.4 214.6h2.8M545.4 214.6h5.3M472.2 217.0h2.8M484.4 217.0h2.8M494.2 217.0h2.8M503.9 217.0h2.8M511.2 217.0h2.8M523.4 217.0h2.8M530.7 217.0h2.8M511.2 219.4h2.8M535.6 219.4h2.8M518.6 221.9h2.8M552.7 221.9h2.8M474.7 224.3h2.8M486.9 224.3h5.3M513.7 224.3h2.8M557.6 224.3h2.8M482.0 226.7h2.8M555.1 226.7h2.8M472.2 229.1h2.8M477.1 229.1h2.8M511.2 229.1h2.8M518.6 229.1h2.8M533.2 229.1h2.8M523.4 231.5h2.8M530.7 231.5h7.7M482.0 234.0h2.8M494.2 234.0h2.8M530.7 234.0h2.8M538.1 234.0h2.8M528.3 236.4h2.8M542.9 236.4h2.8M469.8 238.8h2.8M491.7 238.8h2.8M511.2 238.8h2.8M521.0 238.8h2.8M557.6 238.8h2.8"/>
<path stroke="#101010" stroke-width="2.87" shape-rendering="crispEdges" d="M477.1 214.6h2.8M550.2 214.6h2.8M486.9 219.4h2.8M472.2 221.9h2.8M482.0 221.9h2.8M540.5 221.9h2.8M501.5 224.3h2.8M521.0 224.3h2.8M533.2 224.3h2.8M542.9 226.7h2.8M506.4 229.1h2.8M491.7 231.5h2.8M540.5 231.5h2.8M472.2 234.0h2.8M518.6 234.0h2.8M477.1 236.4h5.3M506.4 236.4h2.8M530.7 236.4h2.8"/>
<path stroke="#d0d0d0" stroke-width="2.87" shape-rendering="crispEdges" d="M479.6 214.6h2.8M540.5 214.6h2.8M535.6 217.0h2.8M501.5 219.4h2.8M540.5 219.4h5.3M494.2 224.3h2.8M525.9 224.3h2.8M491.7 229.1h2.8M511.2 231.5h2.8M550.2 234.0h2.8M482.0 236.4h2.8M496.6 236.4h2.8M535.6 236.4h2.8"/>
<path stroke="#909090" stroke-width="2.87" shape-rendering="crispEdges" d="M482.0 214.6h2.8M486.9 214.6h2.8M533.2 214.6h2.8M501.5 217.0h2.8M508.8 217.0h2.8M538.1 217.0h2.8M557.6 217.0h2.8M545.4 219.4h2.8M550.2 219.4h5.3M479.6 221.9h2.8M503.9 221.9h2.8M511.2 221.9h2.8M530.7 221.9h2.8M547.8 221.9h2.8M479.6 224.3h2.8M499.1 224.3h2.8M540.5 224.3h2.8M508.8 226.7h5.3M540.5 226.7h2.8M552.7 226.7h2.8M528.3 229.1h2.8M538.1 229.1h2.8M552.7 229.1h2.8M477.1 231.5h2.8M525.9 231.5h5.3M477.1 234.0h2.8M525.9 234.0h2.8M489.3 236.4h2.8M545.4 236.4h2.8M552.7 236.4h2.8M523.4 238.8h2.8M545.4 238.8h2.8M552.7 238.8h2.8"/>
<path stroke="#a0a0a0" stroke-width="2.87" shape-rendering="crispEdges" d="M484.4 214.6h2.8M496.6 214.6h2.8M542.9 214.6h2.8M469.8 217.0h2.8M477.1 217.0h2.8M499.1 217.0h2.8M513.7 217.0h2.8M528.3 217.0h2.8M555.1 217.0h2.8M513.7 219.4h2.8M469.8 221.9h2.8M496.6 221.9h2.8M521.0 221.9h2.8M469.8 224.3h2.8M511.2 224.3h2.8M535.6 224.3h2.8M552.7 224.3h2.8M494.2 226.7h2.8M503.9 226.7h2.8M513.7 226.7h2.8M521.0 226.7h2.8M547.8 226.7h2.8M521.0 229.1h2.8M482.0 231.5h2.8M513.7 234.0h2.8M528.3 234.0h2.8M535.6 234.0h2.8M486.9 236.4h2.8M508.8 236.4h2.8M538.1 236.4h2.8M555.1 236.4h2.8M506.4 238.8h2.8M513.7 238.8h2.8M518.6 238.8h2.8M528.3 238.8h2.8"/>
<path stroke="#707070" stroke-width="2.87" shape-rendering="crispEdges" d="M489.3 214.6h2.8M521.0 214.6h2.8M552.7 214.6h2.8M479.6 217.0h2.8M489.3 217.0h2.8M516.1 217.0h2.8M521.0 217.0h2.8M547.8 217.0h2.8M552.7 217.0h2.8M474.7 219.4h5.3M484.4 219.4h2.8M503.9 219.4h2.8M533.2 219.4h2.8M491.7 221.9h2.8M528.3 221.9h2.8M545.4 221.9h2.8M518.6 224.3h2.8M547.8 224.3h2.8M489.3 226.7h2.8M530.7 226.7h5.3M489.3 229.1h2.8M535.6 229.1h2.8M472.2 231.5h2.8M494.2 231.5h2.8M550.2 231.5h2.8M482.0 238.8h7.7M499.1 238.8h2.8M535.6 238.8h2.8M528.3 241.2h2.8M540.5 243.6h2.8"/>
<path stroke="#404040" stroke-width="2.87" shape-rendering="crispEdges" d="M491.7 214.6h5.3M503.9 214.6h2.8M538.1 214.6h2.8M557.6 214.6h2.8M525.9 217.0h2.8M542.9 217.0h2.8M550.2 217.0h2.8M472.2 219.4h2.8M518.6 226.7h2.8M557.6 226.7h2.8M474.7 229.1h2.8M542.9 229.1h2.8M506.4 231.5h5.3M511.2 234.0h2.8M555.1 234.0h2.8M499.1 236.4h2.8M477.1 238.8h2.8M538.1 238.8h5.3"/>
<path stroke="#808080" stroke-width="2.87" shape-rendering="crispEdges" d="M499.1 214.6h2.8M535.6 214.6h2.8M479.6 219.4h2.8M518.6 219.4h2.8M528.3 219.4h2.8M538.1 219.4h2.8M547.8 219.4h2.8M557.6 219.4h2.8M538.1 221.9h2.8M484.4 224.3h2.8M491.7 224.3h2.8M503.9 224.3h2.8M545.4 224.3h2.8M472.2 226.7h5.3M538.1 226.7h2.8M479.6 229.1h2.8M486.9 229.1h2.8M503.9 229.1h2.8M525.9 229.1h2.8M540.5 229.1h2.8M542.9 231.5h2.8M547.8 231.5h2.8M479.6 234.0h2.8M484.4 234.0h2.8M506.4 234.0h2.8M542.9 234.0h2.8M557.6 234.0h2.8M469.8 236.4h2.8M484.4 236.4h2.8M516.1 236.4h2.8M474.7 238.8h2.8M496.6 238.8h2.8M508.8 238.8h2.8M533.2 238.8h2.8M542.9 238.8h2.8M550.2 238.8h2.8M555.1 238.8h2.8M469.8 241.2h58.9M530.7 241.2h29.7M469.8 243.6h71.1M542.9 243.6h17.5M469.8 246.1h90.6M469.8 248.5h90.6"/>
<path stroke="#303030" stroke-width="2.87" shape-rendering="crispEdges" d="M508.8 214.6h2.8M508.8 219.4h2.8M530.7 219.4h2.8M516.1 221.9h2.8M482.0 224.3h2.8M516.1 224.3h2.8M528.3 224.3h2.8M542.9 224.3h2.8M525.9 226.7h2.8M545.4 226.7h2.8M552.7 231.5h2.8M503.9 234.0h2.8M521.0 234.0h2.8M547.8 234.0h2.8M518.6 236.4h5.3M540.5 236.4h2.8M547.8 236.4h2.8M557.6 236.4h2.8M516.1 238.8h2.8"/>
<path stroke="#f0f0f0" stroke-width="2.87" shape-rendering="crispEdges" d="M511.2 214.6h2.8M518.6 214.6h2.8M489.3 219.4h2.8M484.4 221.9h2.8M472.2 224.3h2.8M555.1 224.3h2.8M486.9 234.0h2.8M491.7 236.4h2.8"/>
<path stroke="#202020" stroke-width="2.87" shape-rendering="crispEdges" d="M513.7 214.6h2.8M525.9 219.4h2.8M508.8 221.9h2.8M523.4 224.3h2.8M538.1 224.3h2.8M501.5 229.1h2.8M508.8 229.1h2.8M474.7 231.5h2.8M484.4 231.5h2.8M540.5 234.0h2.8M494.2 236.4h2.8M547.8 238.8h2.8"/>
<path stroke="#c0c0c0" stroke-width="2.87" shape-rendering="crispEdges" d="M516.1 214.6h2.8M474.7 217.0h2.8M545.4 217.0h2.8M496.6 219.4h2.8M474.7 221.9h2.8M555.1 221.9h2.8M477.1 224.3h2.8M508.8 224.3h2.8M469.8 226.7h2.8M513.7 229.1h5.3M550.2 229.1h2.8M555.1 231.5h2.8M545.4 234.0h2.8M525.9 236.4h2.8M525.9 238.8h2.8"/>
<path stroke="#b0b0b0" stroke-width="2.87" shape-rendering="crispEdges" d="M523.4 214.6h2.8M491.7 217.0h2.8M533.2 217.0h2.8M469.8 219.4h2.8M506.4 219.4h2.8M555.1 219.4h2.8M494.2 221.9h2.8M501.5 221.9h2.8M513.7 221.9h2.8M542.9 221.9h2.8M550.2 221.9h2.8M523.4 226.7h2.8M535.6 226.7h2.8M469.8 229.1h2.8M530.7 229.1h2.8M513.7 231.5h2.8M518.6 231.5h5.3M489.3 234.0h2.8M499.1 234.0h2.8M516.1 234.0h2.8M552.7 234.0h2.8M472.2 236.4h5.3M501.5 236.4h2.8M523.4 236.4h2.8M479.6 238.8h2.8M494.2 238.8h2.8M501.5 238.8h2.8"/>
<path stroke="#000000" stroke-width="2.87" shape-rendering="crispEdges" d="M525.9 214.6h2.8M530.7 214.6h2.8M482.0 217.0h2.8M496.6 217.0h2.8M518.6 217.0h2.8M540.5 217.0h2.8M482.0 219.4h2.8M489.3 221.9h2.8M506.4 221.9h2.8M523.4 221.9h5.3M535.6 221.9h2.8M479.6 226.7h2.8M484.4 226.7h2.8M516.1 226.7h2.8M550.2 226.7h2.8M484.4 229.1h2.8M496.6 229.1h2.8M557.6 229.1h2.8M516.1 231.5h2.8M545.4 231.5h2.8"/>
<path stroke="#606060" stroke-width="2.87" shape-rendering="crispEdges" d="M528.3 214.6h2.8M506.4 217.0h2.8M499.1 219.4h2.8M486.9 221.9h2.8M533.2 221.9h2.8M496.6 224.3h2.8M550.2 224.3h2.8M486.9 226.7h2.8M501.5 226.7h2.8M528.3 226.7h2.8M494.2 229.1h2.8M523.4 229.1h2.8M547.8 229.1h2.8M486.9 231.5h2.8M496.6 231.5h2.8M501.5 231.5h2.8M538.1 231.5h2.8M491.7 234.0h2.8M496.6 234.0h2.8M508.8 234.0h2.8M533.2 234.0h2.8M511.2 236.4h5.3M472.2 238.8h2.8M489.3 238.8h2.8M503.9 238.8h2.8M530.7 238.8h2.8"/>
<path stroke="#e0e0e0" stroke-width="2.87" shape-rendering="crispEdges" d="M486.9 217.0h2.8M499.1 221.9h2.8M557.6 221.9h2.8M506.4 224.3h2.8M499.1 226.7h2.8M499.1 229.1h2.8M555.1 229.1h2.8M489.3 231.5h2.8M503.9 231.5h2.8M469.8 234.0h2.8M474.7 234.0h2.8M523.4 234.0h2.8M503.9 236.4h2.8"/>
<rect x="560" y="213.4" width="4.1" height="36.3" fill="#fff"/>
<rect x="564.1" y="213.4" width="89.6" height="36.3" fill="#7f7f7f"/>
<rect x="653.7" y="213.4" width="2.9" height="36.3" fill="#fff"/>
<path stroke="#6c6c6c" stroke-width="2.47" shape-rendering="crispEdges" d="M656.6 214.4h2.4M668.5 214.4h4.4M678.5 214.4h2.4M686.4 214.4h4.4M732.1 214.4h2.4M738.1 214.4h2.4M658.6 216.4h2.4M682.4 216.4h2.4M688.4 216.4h2.4M730.1 216.4h6.4M658.6 218.4h2.4M684.4 218.4h2.4M704.3 218.4h2.4M732.1 218.4h2.4M672.5 220.5h4.4M702.3 220.5h2.4M710.2 220.5h2.4M726.1 220.5h2.4M730.1 220.5h2.4M672.5 222.5h2.4M706.3 222.5h2.4M726.1 222.5h4.4M700.3 224.5h2.4M704.3 224.5h4.4M664.5 226.5h2.4M690.4 226.5h2.4M694.3 226.5h2.4M678.5 230.5h2.4M682.4 232.6h2.4M710.2 232.6h2.4M686.4 234.6h2.4M700.3 234.6h2.4M704.3 234.6h2.4M668.5 238.6h2.4M712.2 238.6h2.4"/>
<path stroke="#727272" stroke-width="2.47" shape-rendering="crispEdges" d="M658.6 214.4h2.4M712.2 214.4h2.4M730.1 214.4h2.4M678.5 216.4h2.4M686.4 216.4h2.4M712.2 216.4h2.4M728.1 216.4h2.4M736.1 216.4h2.4M682.4 218.4h2.4M688.4 218.4h2.4M702.3 218.4h2.4M712.2 218.4h2.4M734.1 218.4h2.4M684.4 220.5h2.4M704.3 220.5h2.4M662.6 222.5h2.4M704.3 222.5h2.4M710.2 222.5h2.4M724.1 222.5h2.4M662.6 224.5h2.4M688.4 224.5h2.4M696.3 224.5h2.4M708.3 224.5h2.4M724.1 224.5h4.4M660.6 226.5h4.4M674.5 226.5h2.4M688.4 226.5h2.4M706.3 226.5h4.4M658.6 228.5h2.4M676.5 228.5h2.4M690.4 228.5h4.4M706.3 228.5h2.4M720.2 228.5h2.4M666.5 230.5h2.4M680.4 230.5h4.4M706.3 230.5h4.4M684.4 232.6h4.4M706.3 232.6h2.4M718.2 232.6h2.4M706.3 234.6h2.4M718.2 234.6h2.4M730.1 234.6h2.4M688.4 236.6h2.4M704.3 236.6h4.4M712.2 236.6h2.4M732.1 236.6h2.4M688.4 238.6h2.4M698.3 238.6h2.4M732.1 238.6h2.4M670.5 240.6h4.4M700.3 240.6h2.4M708.3 240.6h4.4M670.5 242.6h2.4M700.3 242.6h2.4M710.2 242.6h2.4M670.5 244.7h2.4M700.3 244.7h2.4M708.3 244.7h4.4M670.5 246.7h2.4M708.3 246.7h4.4M670.5 248.7h2.4M708.3 248.7h6.4"/>
<path stroke="#909090" stroke-width="2.47" shape-rendering="crispEdges" d="M660.6 214.4h2.4M724.1 214.4h4.4M660.6 216.4h2.4M742.0 216.4h4.4M716.2 220.5h2.4M736.1 220.5h2.4M740.0 220.5h2.4M734.1 222.5h2.4M678.5 224.5h2.4M712.2 224.5h2.4M732.1 224.5h4.4M716.2 226.5h2.4M734.1 226.5h4.4M698.3 228.5h2.4M738.1 228.5h2.4M744.0 228.5h2.4M698.3 230.5h2.4M712.2 230.5h2.4M726.1 230.5h2.4M738.1 230.5h2.4M696.3 232.6h2.4M722.2 232.6h2.4M728.1 232.6h2.4M738.1 232.6h2.4M696.3 234.6h2.4M660.6 236.6h2.4M690.4 236.6h2.4M696.3 236.6h2.4M720.2 236.6h2.4M714.2 238.6h4.4M692.4 240.6h4.4M692.4 242.6h4.4M722.2 242.6h2.4M656.6 244.7h2.4M722.2 244.7h2.4M690.4 246.7h2.4M696.3 246.7h2.4M722.2 246.7h2.4M690.4 248.7h2.4M696.3 248.7h2.4M722.2 248.7h2.4"/>
<path stroke="#8a8a8a" stroke-width="2.47" shape-rendering="crispEdges" d="M662.6 214.4h2.4M718.2 214.4h6.4M742.0 214.4h4.4M662.6 216.4h2.4M722.2 216.4h4.4M660.6 218.4h2.4M716.2 218.4h2.4M740.0 218.4h2.4M714.2 220.5h2.4M718.2 220.5h2.4M678.5 222.5h4.4M712.2 222.5h2.4M718.2 222.5h2.4M680.4 224.5h2.4M718.2 224.5h2.4M678.5 226.5h4.4M728.1 226.5h2.4M716.2 228.5h2.4M734.1 228.5h2.4M658.6 230.5h6.4M696.3 230.5h2.4M724.1 230.5h2.4M732.1 230.5h2.4M742.0 230.5h2.4M698.3 232.6h2.4M712.2 232.6h2.4M730.1 232.6h2.4M736.1 232.6h2.4M666.5 234.6h2.4M690.4 234.6h2.4M734.1 234.6h2.4M716.2 236.6h2.4M664.5 240.6h2.4M720.2 240.6h6.4M736.1 240.6h4.4M690.4 242.6h2.4M696.3 242.6h2.4M720.2 242.6h2.4M724.1 242.6h2.4M736.1 242.6h4.4M690.4 244.7h2.4M696.3 244.7h2.4M720.2 244.7h2.4M724.1 244.7h2.4M656.6 246.7h2.4M720.2 246.7h2.4M724.1 246.7h6.4M656.6 248.7h2.4M686.4 248.7h4.4M720.2 248.7h2.4M724.1 248.7h6.4"/>
<path stroke="#666666" stroke-width="2.47" shape-rendering="crispEdges" d="M664.5 214.4h2.4M682.4 214.4h2.4M700.3 214.4h2.4M704.3 214.4h2.4M710.2 214.4h2.4M736.1 214.4h2.4M664.5 216.4h2.4M668.5 216.4h4.4M684.4 216.4h2.4M700.3 216.4h2.4M704.3 216.4h2.4M710.2 216.4h2.4M664.5 218.4h2.4M672.5 218.4h2.4M676.5 218.4h2.4M710.2 218.4h2.4M728.1 218.4h4.4M658.6 220.5h2.4M664.5 220.5h2.4M706.3 220.5h2.4M728.1 220.5h2.4M664.5 222.5h2.4M696.3 222.5h4.4M702.3 222.5h2.4M708.3 222.5h2.4M664.5 224.5h2.4M672.5 224.5h2.4M690.4 224.5h2.4M694.3 224.5h2.4M658.6 226.5h2.4M692.4 226.5h2.4M704.3 226.5h2.4M656.6 228.5h2.4M666.5 228.5h2.4M674.5 228.5h2.4M676.5 230.5h2.4M680.4 232.6h2.4M708.3 232.6h2.4M668.5 234.6h2.4M684.4 234.6h2.4M668.5 236.6h2.4M686.4 236.6h2.4M730.1 236.6h2.4M674.5 238.6h4.4M680.4 238.6h4.4M730.1 238.6h2.4"/>
<path stroke="#606060" stroke-width="2.47" shape-rendering="crispEdges" d="M666.5 214.4h2.4M684.4 214.4h2.4M734.1 214.4h2.4M656.6 216.4h2.4M666.5 216.4h2.4M672.5 216.4h2.4M670.5 218.4h2.4M674.5 218.4h2.4M700.3 218.4h2.4M706.3 218.4h2.4M700.3 220.5h2.4M708.3 220.5h2.4M658.6 222.5h2.4M690.4 222.5h2.4M694.3 222.5h2.4M700.3 222.5h2.4M658.6 224.5h2.4M702.3 224.5h2.4M666.5 226.5h2.4M672.5 226.5h2.4M702.3 226.5h2.4M704.3 228.5h2.4M674.5 230.5h2.4M704.3 230.5h2.4M668.5 232.6h2.4M678.5 232.6h2.4M704.3 232.6h2.4M682.4 234.6h2.4M702.3 234.6h2.4M708.3 234.6h4.4M682.4 236.6h4.4M700.3 236.6h4.4M678.5 238.6h2.4M686.4 238.6h2.4M702.3 238.6h2.4"/>
<path stroke="#5a5a5a" stroke-width="2.47" shape-rendering="crispEdges" d="M672.5 214.4h2.4M708.3 216.4h2.4M666.5 218.4h4.4M708.3 218.4h2.4M670.5 220.5h2.4M690.4 220.5h2.4M694.3 220.5h4.4M692.4 224.5h2.4M672.5 228.5h2.4M702.3 228.5h2.4M668.5 230.5h2.4M702.3 230.5h2.4M674.5 232.6h4.4M702.3 232.6h2.4M674.5 234.6h2.4M680.4 234.6h2.4M674.5 236.6h4.4M680.4 236.6h2.4M708.3 236.6h2.4M684.4 238.6h2.4M708.3 238.6h2.4"/>
<path stroke="#424242" stroke-width="2.47" shape-rendering="crispEdges" d="M674.5 214.4h2.4M694.3 214.4h2.4M694.3 216.4h2.4M692.4 218.4h2.4M656.6 224.5h2.4"/>
<path stroke="#484848" stroke-width="2.47" shape-rendering="crispEdges" d="M676.5 214.4h2.4M690.4 214.4h2.4M696.3 218.4h4.4M656.6 220.5h2.4M692.4 220.5h2.4M668.5 222.5h2.4M668.5 224.5h2.4M670.5 234.6h2.4M670.5 236.6h2.4"/>
<path stroke="#787878" stroke-width="2.47" shape-rendering="crispEdges" d="M680.4 214.4h2.4M714.2 214.4h2.4M740.0 214.4h2.4M680.4 216.4h2.4M702.3 216.4h2.4M738.1 216.4h2.4M686.4 218.4h2.4M726.1 218.4h2.4M676.5 220.5h2.4M682.4 220.5h2.4M688.4 220.5h2.4M724.1 220.5h2.4M732.1 220.5h2.4M674.5 222.5h2.4M684.4 222.5h2.4M688.4 222.5h2.4M722.2 222.5h2.4M730.1 222.5h2.4M660.6 224.5h2.4M674.5 224.5h2.4M684.4 224.5h4.4M698.3 224.5h2.4M720.2 224.5h4.4M728.1 224.5h2.4M684.4 226.5h4.4M700.3 226.5h2.4M720.2 226.5h8.3M662.6 228.5h4.4M682.4 228.5h8.3M694.3 228.5h2.4M708.3 228.5h2.4M684.4 230.5h6.4M710.2 230.5h2.4M718.2 230.5h4.4M688.4 232.6h2.4M700.3 232.6h2.4M720.2 232.6h2.4M744.0 232.6h2.4M688.4 234.6h2.4M732.1 234.6h2.4M744.0 234.6h2.4M698.3 236.6h2.4M718.2 236.6h2.4M744.0 236.6h2.4M706.3 238.6h2.4M728.1 238.6h2.4M744.0 238.6h2.4M660.6 240.6h2.4M668.5 240.6h2.4M674.5 240.6h2.4M678.5 240.6h10.3M698.3 240.6h2.4M702.3 240.6h2.4M712.2 240.6h2.4M730.1 240.6h2.4M744.0 240.6h2.4M660.6 242.6h2.4M668.5 242.6h2.4M672.5 242.6h2.4M684.4 242.6h4.4M702.3 242.6h2.4M708.3 242.6h2.4M712.2 242.6h2.4M744.0 242.6h2.4M660.6 244.7h2.4M672.5 244.7h2.4M702.3 244.7h2.4M712.2 244.7h2.4M744.0 244.7h2.4M672.5 246.7h2.4M700.3 246.7h4.4M706.3 246.7h2.4M712.2 246.7h2.4M734.1 246.7h2.4M744.0 246.7h2.4M672.5 248.7h2.4M700.3 248.7h2.4M706.3 248.7h2.4M734.1 248.7h4.4M744.0 248.7h2.4"/>
<path stroke="#3c3c3c" stroke-width="2.47" shape-rendering="crispEdges" d="M692.4 214.4h2.4M692.4 216.4h2.4M696.3 216.4h4.4M656.6 222.5h2.4"/>
<path stroke="#303030" stroke-width="2.47" shape-rendering="crispEdges" d="M696.3 214.4h2.4"/>
<path stroke="#363636" stroke-width="2.47" shape-rendering="crispEdges" d="M698.3 214.4h2.4"/>
<path stroke="#7e7e7e" stroke-width="2.47" shape-rendering="crispEdges" d="M702.3 214.4h2.4M728.1 214.4h2.4M714.2 216.4h2.4M740.0 216.4h2.4M678.5 218.4h4.4M714.2 218.4h2.4M662.6 220.5h2.4M686.4 220.5h2.4M712.2 220.5h2.4M722.2 220.5h2.4M660.6 222.5h2.4M682.4 222.5h2.4M686.4 222.5h2.4M720.2 222.5h2.4M682.4 224.5h2.4M710.2 224.5h2.4M676.5 226.5h2.4M682.4 226.5h2.4M696.3 226.5h2.4M660.6 228.5h2.4M678.5 228.5h4.4M700.3 228.5h2.4M710.2 228.5h2.4M718.2 228.5h2.4M722.2 228.5h2.4M690.4 230.5h2.4M700.3 230.5h2.4M744.0 230.5h2.4M666.5 232.6h2.4M698.3 234.6h2.4M712.2 234.6h2.4M728.1 236.6h2.4M660.6 238.6h2.4M704.3 238.6h2.4M662.6 240.6h2.4M676.5 240.6h2.4M688.4 240.6h2.4M704.3 240.6h4.4M718.2 240.6h2.4M728.1 240.6h2.4M732.1 240.6h2.4M742.0 240.6h2.4M662.6 242.6h2.4M674.5 242.6h10.3M688.4 242.6h2.4M698.3 242.6h2.4M704.3 242.6h4.4M714.2 242.6h2.4M730.1 242.6h4.4M742.0 242.6h2.4M662.6 244.7h2.4M668.5 244.7h2.4M674.5 244.7h14.3M698.3 244.7h2.4M704.3 244.7h4.4M714.2 244.7h2.4M732.1 244.7h4.4M740.0 244.7h4.4M660.6 246.7h4.4M668.5 246.7h2.4M674.5 246.7h2.4M680.4 246.7h4.4M704.3 246.7h2.4M714.2 246.7h2.4M732.1 246.7h2.4M736.1 246.7h8.3M660.6 248.7h4.4M668.5 248.7h2.4M674.5 248.7h2.4M680.4 248.7h4.4M702.3 248.7h4.4M714.2 248.7h4.4M732.1 248.7h2.4M738.1 248.7h6.4"/>
<path stroke="#4e4e4e" stroke-width="2.47" shape-rendering="crispEdges" d="M706.3 214.4h2.4M674.5 216.4h2.4M690.4 216.4h2.4M690.4 218.4h2.4M694.3 218.4h2.4M668.5 220.5h2.4M656.6 226.5h2.4M668.5 226.5h4.4M670.5 228.5h2.4M670.5 230.5h2.4M670.5 232.6h4.4M672.5 234.6h2.4M672.5 236.6h2.4M670.5 238.6h2.4M710.2 238.6h2.4"/>
<path stroke="#545454" stroke-width="2.47" shape-rendering="crispEdges" d="M708.3 214.4h2.4M676.5 216.4h2.4M706.3 216.4h2.4M656.6 218.4h2.4M666.5 220.5h2.4M698.3 220.5h2.4M666.5 222.5h2.4M670.5 222.5h2.4M692.4 222.5h2.4M666.5 224.5h2.4M670.5 224.5h2.4M668.5 228.5h2.4M672.5 230.5h2.4M676.5 234.6h4.4M678.5 236.6h2.4M710.2 236.6h2.4M672.5 238.6h2.4M700.3 238.6h2.4"/>
<path stroke="#848484" stroke-width="2.47" shape-rendering="crispEdges" d="M716.2 214.4h2.4M716.2 216.4h6.4M726.1 216.4h2.4M662.6 218.4h2.4M718.2 218.4h8.3M736.1 218.4h4.4M660.6 220.5h2.4M678.5 220.5h4.4M720.2 220.5h2.4M734.1 220.5h2.4M676.5 222.5h2.4M732.1 222.5h2.4M676.5 224.5h2.4M730.1 224.5h2.4M698.3 226.5h2.4M710.2 226.5h2.4M718.2 226.5h2.4M696.3 228.5h2.4M724.1 228.5h4.4M736.1 228.5h2.4M656.6 230.5h2.4M664.5 230.5h2.4M692.4 230.5h4.4M716.2 230.5h2.4M722.2 230.5h2.4M734.1 230.5h4.4M690.4 232.6h2.4M716.2 232.6h2.4M732.1 232.6h4.4M742.0 232.6h2.4M716.2 234.6h2.4M720.2 234.6h2.4M728.1 234.6h2.4M742.0 234.6h2.4M742.0 236.6h2.4M718.2 238.6h2.4M742.0 238.6h2.4M658.6 240.6h2.4M666.5 240.6h2.4M690.4 240.6h2.4M696.3 240.6h2.4M714.2 240.6h4.4M726.1 240.6h2.4M734.1 240.6h2.4M740.0 240.6h2.4M658.6 242.6h2.4M664.5 242.6h4.4M716.2 242.6h4.4M726.1 242.6h4.4M734.1 242.6h2.4M740.0 242.6h2.4M658.6 244.7h2.4M664.5 244.7h4.4M688.4 244.7h2.4M716.2 244.7h4.4M726.1 244.7h6.4M736.1 244.7h4.4M658.6 246.7h2.4M664.5 246.7h4.4M676.5 246.7h4.4M684.4 246.7h6.4M698.3 246.7h2.4M716.2 246.7h4.4M730.1 246.7h2.4M658.6 248.7h2.4M664.5 248.7h4.4M676.5 248.7h4.4M684.4 248.7h2.4M698.3 248.7h2.4M718.2 248.7h2.4M730.1 248.7h2.4"/>
<path stroke="#969696" stroke-width="2.47" shape-rendering="crispEdges" d="M742.0 218.4h2.4M738.1 220.5h2.4M714.2 222.5h4.4M740.0 222.5h2.4M716.2 224.5h2.4M736.1 224.5h2.4M740.0 224.5h2.4M712.2 226.5h2.4M730.1 226.5h4.4M738.1 226.5h4.4M712.2 228.5h2.4M728.1 228.5h2.4M732.1 228.5h2.4M740.0 228.5h4.4M728.1 230.5h4.4M740.0 230.5h2.4M660.6 232.6h6.4M692.4 232.6h4.4M714.2 232.6h2.4M724.1 232.6h4.4M740.0 232.6h2.4M660.6 234.6h2.4M714.2 234.6h2.4M726.1 234.6h2.4M736.1 234.6h2.4M740.0 234.6h2.4M666.5 236.6h2.4M714.2 236.6h2.4M726.1 236.6h2.4M734.1 236.6h2.4M662.6 238.6h2.4M666.5 238.6h2.4M696.3 238.6h2.4M726.1 238.6h2.4M656.6 240.6h2.4M656.6 242.6h2.4M692.4 244.7h4.4M692.4 246.7h4.4M692.4 248.7h4.4"/>
<path stroke="#a2a2a2" stroke-width="2.47" shape-rendering="crispEdges" d="M744.0 218.4h2.4M742.0 220.5h2.4M742.0 222.5h2.4M742.0 224.5h2.4M658.6 232.6h2.4M662.6 234.6h4.4M694.3 234.6h2.4M724.1 234.6h2.4"/>
<path stroke="#aeaeae" stroke-width="2.47" shape-rendering="crispEdges" d="M744.0 220.5h2.4M656.6 232.6h2.4M658.6 234.6h2.4M664.5 236.6h2.4M694.3 236.6h2.4M738.1 236.6h2.4M658.6 238.6h2.4M664.5 238.6h2.4M724.1 238.6h2.4"/>
<path stroke="#9c9c9c" stroke-width="2.47" shape-rendering="crispEdges" d="M736.1 222.5h4.4M714.2 224.5h2.4M738.1 224.5h2.4M714.2 226.5h2.4M742.0 226.5h2.4M714.2 228.5h2.4M730.1 228.5h2.4M714.2 230.5h2.4M722.2 234.6h2.4M738.1 234.6h2.4M662.6 236.6h2.4M740.0 236.6h2.4M690.4 238.6h2.4M720.2 238.6h2.4M734.1 238.6h2.4M740.0 238.6h2.4"/>
<path stroke="#b4b4b4" stroke-width="2.47" shape-rendering="crispEdges" d="M744.0 222.5h2.4M744.0 224.5h2.4M658.6 236.6h2.4M692.4 236.6h2.4M722.2 238.6h2.4M736.1 238.6h4.4"/>
<path stroke="#a8a8a8" stroke-width="2.47" shape-rendering="crispEdges" d="M744.0 226.5h2.4M692.4 234.6h2.4M722.2 236.6h4.4M736.1 236.6h2.4"/>
<path stroke="#cccccc" stroke-width="2.47" shape-rendering="crispEdges" d="M656.6 234.6h2.4"/>
<path stroke="#e4e4e4" stroke-width="2.47" shape-rendering="crispEdges" d="M656.6 236.6h2.4"/>
<path stroke="#f0f0f0" stroke-width="2.47" shape-rendering="crispEdges" d="M656.6 238.6h2.4"/>
<path stroke="#bababa" stroke-width="2.47" shape-rendering="crispEdges" d="M692.4 238.6h4.4"/>
<rect x="467.6" y="213.4" width="279.8" height="36.3" fill="none" stroke="#ff0000" stroke-width="2.4"/>
<text transform="translate(463.10,223.40) scale(1.144,1.06)" font-family="Liberation Sans" font-size="7.4" fill="#222" stroke="#222" stroke-width="0.15" text-anchor="end" style="white-space:pre" >0.06</text>
<text transform="translate(463.10,232.30) scale(1.144,1.06)" font-family="Liberation Sans" font-size="7.4" fill="#222" stroke="#222" stroke-width="0.15" text-anchor="end" style="white-space:pre" >1.60</text>
<text transform="translate(463.10,241.20) scale(1.144,1.06)" font-family="Liberation Sans" font-size="7.4" fill="#222" stroke="#222" stroke-width="0.15" text-anchor="end" style="white-space:pre" >112</text>
<text transform="translate(750.90,217.30) scale(1.144,1.06)" font-family="Liberation Sans" font-size="5.5" fill="#222" stroke="#222" stroke-width="0.15" text-anchor="start" style="white-space:pre" >1.89"</text>
<text transform="translate(750.90,225.00) scale(1.144,1.06)" font-family="Liberation Sans" font-size="5.5" fill="#222" stroke="#222" stroke-width="0.15" text-anchor="start" style="white-space:pre" >(366, 23)</text>
<text transform="translate(750.90,232.80) scale(1.144,1.06)" font-family="Liberation Sans" font-size="5.5" fill="#222" stroke="#222" stroke-width="0.15" text-anchor="start" style="white-space:pre" >20190324</text>
<text transform="translate(750.90,239.80) scale(1.144,1.06)" font-family="Liberation Sans" font-size="5.5" fill="#222" stroke="#222" stroke-width="0.15" text-anchor="start" style="white-space:pre" >v014_01</text>
<text transform="translate(750.90,246.90) scale(1.144,1.06)" font-family="Liberation Sans" font-size="5.5" fill="#222" stroke="#222" stroke-width="0.15" text-anchor="start" style="white-space:pre" >025_LU_001</text>
<text transform="translate(865.00,47.60) scale(1.18,1.06)" font-family="Liberation Sans" font-size="9.5" fill="#222" stroke="#222" stroke-width="0.15" text-anchor="middle" style="white-space:pre" >With Sky</text>
<text transform="translate(865.00,58.20) scale(1.18,1.06)" font-family="Liberation Sans" font-size="9.5" fill="#222" stroke="#222" stroke-width="0.15" text-anchor="middle" style="white-space:pre" >x, y: 366, 23</text>
<text transform="translate(966.00,47.60) scale(1.18,1.06)" font-family="Liberation Sans" font-size="9.5" fill="#222" stroke="#222" stroke-width="0.15" text-anchor="middle" style="white-space:pre" >Clean Image</text>
<text transform="translate(966.00,58.20) scale(1.18,1.06)" font-family="Liberation Sans" font-size="9.5" fill="#222" stroke="#222" stroke-width="0.15" text-anchor="middle" style="white-space:pre" >x, y: 366, 23</text>
<path stroke="#505050" stroke-width="2.46" shape-rendering="crispEdges" d="M831.7 65.7h4.4M878.2 65.7h4.4M831.7 71.7h4.4M843.8 71.7h2.4M868.1 71.7h2.4M878.2 71.7h2.4M882.2 71.7h2.4M843.8 77.7h2.4M851.9 77.7h2.4M864.0 77.7h2.4M851.9 83.8h2.4M856.0 83.8h2.4M862.0 83.8h2.4M878.2 83.8h2.4M882.2 83.8h2.4M888.3 83.8h2.4M880.2 91.8h2.4M839.8 95.8h2.4M849.9 95.8h2.4M888.3 95.8h2.4M884.3 99.8h2.4M833.7 103.8h2.4M849.9 103.8h2.4M853.9 103.8h2.4M888.3 107.8h2.4M868.1 115.9h2.4M884.3 115.9h2.4M831.7 119.9h2.4M851.9 127.9h2.4M856.0 127.9h2.4M864.0 127.9h4.4M886.3 127.9h4.4M845.8 133.9h2.4M853.9 133.9h2.4M866.1 133.9h2.4M884.3 133.9h2.4M890.3 133.9h2.4M894.4 133.9h2.4M843.8 139.9h2.4M851.9 139.9h2.4M868.1 139.9h4.4M874.1 139.9h4.4M888.3 139.9h4.4M837.8 145.9h2.4M849.9 145.9h2.4M862.0 145.9h2.4M874.1 145.9h2.4M890.3 145.9h2.4M843.8 152.0h2.4M894.4 152.0h2.4"/>
<path stroke="#646464" stroke-width="2.46" shape-rendering="crispEdges" d="M835.7 65.7h2.4M839.8 65.7h2.4M845.8 71.7h2.4M866.1 71.7h2.4M870.1 71.7h2.4M884.3 71.7h2.4M896.4 71.7h2.4M862.0 79.7h2.4M870.1 79.7h2.4M876.2 79.7h4.4M894.4 79.7h2.4M843.8 83.8h8.5M870.1 83.8h2.4M876.2 83.8h2.4M890.3 83.8h2.4M843.8 85.8h2.4M849.9 89.8h2.4M847.9 91.8h2.4M851.9 91.8h2.4M868.1 91.8h2.4M878.2 91.8h2.4M888.3 91.8h2.4M896.4 91.8h2.4M858.0 95.8h2.4M864.0 95.8h2.4M868.1 95.8h2.4M890.3 95.8h2.4M851.9 103.8h2.4M876.2 103.8h2.4M882.2 103.8h2.4M886.3 103.8h2.4M843.8 107.8h4.4M858.0 107.8h2.4M896.4 107.8h2.4M843.8 109.8h2.4M882.2 115.9h2.4M864.0 119.9h2.4M876.2 121.9h2.4M880.2 125.9h2.4M831.7 127.9h2.4M876.2 127.9h4.4M860.0 131.9h2.4M892.3 133.9h2.4M858.0 139.9h4.4M882.2 139.9h2.4M886.3 139.9h2.4M839.8 141.9h2.4M864.0 143.9h2.4M894.4 143.9h2.4M856.0 145.9h2.4M888.3 145.9h2.4M894.4 145.9h2.4M858.0 152.0h2.4M870.1 152.0h2.4M876.2 152.0h2.4"/>
<path stroke="#141414" stroke-width="2.46" shape-rendering="crispEdges" d="M837.8 65.7h2.4M853.9 71.7h2.4M835.7 73.7h2.4M839.8 73.7h4.4M862.0 73.7h2.4M870.1 73.7h4.4M894.4 73.7h2.4M831.7 75.7h2.4M851.9 75.7h2.4M856.0 75.7h2.4M874.1 75.7h2.4M880.2 75.7h2.4M886.3 75.7h2.4M892.3 75.7h2.4M849.9 77.7h2.4M888.3 77.7h2.4M849.9 85.8h2.4M870.1 85.8h6.5M839.8 87.8h2.4M864.0 87.8h2.4M872.1 87.8h4.4M892.3 87.8h2.4M833.7 89.8h2.4M870.1 89.8h2.4M835.7 97.8h2.4M839.8 97.8h2.4M856.0 97.8h2.4M866.1 97.8h2.4M876.2 97.8h4.4M892.3 97.8h2.4M872.1 99.8h2.4M845.8 101.8h2.4M849.9 101.8h4.4M880.2 101.8h2.4M892.3 101.8h2.4M831.7 109.8h4.4M882.2 109.8h2.4M890.3 109.8h2.4M860.0 111.8h2.4M886.3 111.8h2.4M851.9 113.8h2.4M894.4 113.8h4.4M864.0 123.9h2.4M884.3 123.9h2.4M894.4 123.9h2.4M841.8 125.9h4.4M851.9 125.9h2.4M860.0 125.9h4.4M876.2 125.9h2.4M831.7 133.9h2.4M849.9 133.9h2.4M843.8 135.9h2.4M853.9 135.9h2.4M890.3 135.9h2.4M837.8 137.9h2.4M866.1 137.9h2.4M882.2 145.9h2.4M847.9 147.9h2.4M858.0 147.9h2.4M866.1 147.9h2.4M878.2 147.9h2.4M884.3 147.9h2.4M892.3 147.9h4.4M882.2 150.0h2.4M878.2 152.0h2.4"/>
<path stroke="#3c3c3c" stroke-width="2.46" shape-rendering="crispEdges" d="M841.8 65.7h4.4M856.0 65.7h2.4M860.0 65.7h2.4M872.1 65.7h2.4M884.3 65.7h4.4M890.3 65.7h2.4M896.4 65.7h2.4M851.9 71.7h2.4M886.3 71.7h2.4M874.1 73.7h2.4M884.3 73.7h2.4M831.7 77.7h4.4M837.8 77.7h2.4M841.8 77.7h2.4M874.1 77.7h2.4M884.3 77.7h2.4M890.3 77.7h2.4M886.3 79.7h2.4M833.7 85.8h2.4M839.8 85.8h2.4M866.1 85.8h4.4M890.3 85.8h2.4M868.1 87.8h2.4M839.8 89.8h2.4M858.0 89.8h2.4M862.0 89.8h4.4M884.3 89.8h4.4M892.3 89.8h2.4M896.4 89.8h2.4M862.0 95.8h2.4M872.1 95.8h2.4M833.7 97.8h2.4M880.2 97.8h2.4M833.7 99.8h2.4M837.8 99.8h2.4M872.1 101.8h2.4M896.4 101.8h2.4M841.8 103.8h2.4M896.4 103.8h2.4M872.1 109.8h2.4M894.4 109.8h2.4M831.7 113.8h2.4M839.8 113.8h2.4M845.8 113.8h2.4M882.2 113.8h2.4M894.4 115.9h2.4M884.3 119.9h2.4M856.0 121.9h2.4M866.1 121.9h2.4M894.4 121.9h4.4M835.7 127.9h2.4M847.9 127.9h2.4M833.7 133.9h2.4M837.8 133.9h4.4M858.0 133.9h2.4M868.1 133.9h2.4M866.1 135.9h2.4M833.7 137.9h2.4M851.9 137.9h2.4M862.0 137.9h2.4M878.2 137.9h2.4M831.7 139.9h2.4M837.8 139.9h2.4M845.8 139.9h2.4M866.1 139.9h2.4M872.1 139.9h2.4M880.2 139.9h2.4M870.1 143.9h2.4M870.1 145.9h2.4M880.2 145.9h2.4M833.7 147.9h2.4M874.1 147.9h2.4M860.0 150.0h2.4M884.3 150.0h2.4M837.8 152.0h2.4M860.0 152.0h2.4"/>
<path stroke="#323232" stroke-width="2.46" shape-rendering="crispEdges" d="M845.8 65.7h6.5M866.1 65.7h2.4M876.2 65.7h2.4M888.3 65.7h2.4M839.8 71.7h2.4M858.0 71.7h2.4M880.2 71.7h2.4M853.9 73.7h4.4M866.1 73.7h2.4M880.2 73.7h2.4M878.2 75.7h2.4M888.3 75.7h2.4M845.8 77.7h4.4M896.4 77.7h2.4M835.7 85.8h2.4M858.0 85.8h2.4M880.2 85.8h2.4M870.1 87.8h2.4M831.7 89.8h2.4M843.8 89.8h6.5M851.9 89.8h2.4M866.1 89.8h2.4M882.2 91.8h2.4M856.0 95.8h2.4M831.7 97.8h2.4M870.1 97.8h2.4M874.1 97.8h2.4M886.3 97.8h2.4M864.0 99.8h4.4M853.9 101.8h2.4M866.1 101.8h4.4M874.1 101.8h4.4M860.0 103.8h2.4M874.1 103.8h2.4M837.8 109.8h2.4M862.0 109.8h2.4M874.1 109.8h2.4M833.7 121.9h2.4M849.9 121.9h4.4M868.1 121.9h2.4M878.2 121.9h2.4M892.3 121.9h2.4M860.0 123.9h2.4M845.8 125.9h2.4M868.1 125.9h2.4M886.3 125.9h4.4M841.8 127.9h2.4M882.2 127.9h2.4M835.7 133.9h2.4M843.8 133.9h2.4M856.0 133.9h2.4M862.0 133.9h2.4M870.1 133.9h2.4M831.7 135.9h2.4M894.4 135.9h2.4M839.8 139.9h2.4M835.7 145.9h2.4M851.9 145.9h2.4M831.7 150.0h2.4M847.9 152.0h2.4M862.0 152.0h2.4"/>
<path stroke="#000000" stroke-width="2.46" shape-rendering="crispEdges" d="M851.9 65.7h2.4M831.7 73.7h2.4M843.8 73.7h2.4M858.0 73.7h2.4M864.0 73.7h2.4M892.3 73.7h2.4M896.4 73.7h2.4M837.8 75.7h2.4M862.0 75.7h4.4M868.1 75.7h6.5M882.2 75.7h2.4M890.3 75.7h2.4M894.4 75.7h2.4M894.4 77.7h2.4M831.7 85.8h2.4M837.8 85.8h2.4M851.9 85.8h2.4M862.0 85.8h4.4M878.2 85.8h2.4M886.3 85.8h2.4M892.3 85.8h2.4M831.7 87.8h4.4M841.8 87.8h4.4M847.9 87.8h2.4M851.9 87.8h6.5M860.0 87.8h4.4M876.2 87.8h14.5M894.4 87.8h4.4M837.8 89.8h2.4M868.1 89.8h2.4M872.1 89.8h2.4M876.2 89.8h2.4M882.2 89.8h2.4M888.3 89.8h2.4M845.8 97.8h2.4M849.9 97.8h2.4M864.0 97.8h2.4M868.1 97.8h2.4M872.1 97.8h2.4M884.3 97.8h2.4M888.3 97.8h2.4M894.4 97.8h2.4M831.7 99.8h2.4M835.7 99.8h2.4M841.8 99.8h4.4M847.9 99.8h2.4M851.9 99.8h12.5M868.1 99.8h2.4M878.2 99.8h4.4M886.3 99.8h4.4M892.3 99.8h2.4M833.7 101.8h4.4M839.8 101.8h2.4M843.8 101.8h2.4M847.9 101.8h2.4M894.4 101.8h2.4M847.9 109.8h2.4M866.1 109.8h4.4M878.2 109.8h2.4M831.7 111.8h4.4M837.8 111.8h4.4M851.9 111.8h8.5M864.0 111.8h4.4M872.1 111.8h2.4M880.2 111.8h4.4M890.3 111.8h8.5M833.7 113.8h2.4M841.8 113.8h2.4M849.9 113.8h2.4M856.0 113.8h4.4M862.0 113.8h2.4M866.1 113.8h6.5M874.1 113.8h2.4M880.2 113.8h2.4M888.3 113.8h6.5M831.7 123.9h6.5M849.9 123.9h8.5M862.0 123.9h2.4M868.1 123.9h16.6M886.3 123.9h2.4M890.3 123.9h2.4M896.4 123.9h2.4M831.7 125.9h2.4M835.7 125.9h2.4M849.9 125.9h2.4M864.0 125.9h4.4M870.1 125.9h2.4M874.1 125.9h2.4M878.2 125.9h2.4M882.2 125.9h4.4M890.3 125.9h2.4M896.4 125.9h2.4M833.7 135.9h2.4M839.8 135.9h4.4M851.9 135.9h2.4M858.0 135.9h6.5M868.1 135.9h2.4M874.1 135.9h8.5M892.3 135.9h2.4M831.7 137.9h2.4M841.8 137.9h4.4M849.9 137.9h2.4M856.0 137.9h4.4M864.0 137.9h2.4M870.1 137.9h2.4M874.1 137.9h4.4M890.3 137.9h2.4M896.4 137.9h2.4M835.7 147.9h2.4M841.8 147.9h6.5M868.1 147.9h2.4M872.1 147.9h2.4M880.2 147.9h4.4M888.3 147.9h4.4M833.7 150.0h4.4M839.8 150.0h4.4M847.9 150.0h4.4M853.9 150.0h2.4M858.0 150.0h2.4M862.0 150.0h2.4M866.1 150.0h2.4M870.1 150.0h2.4M874.1 150.0h4.4M888.3 150.0h8.5M872.1 152.0h4.4"/>
<path stroke="#464646" stroke-width="2.46" shape-rendering="crispEdges" d="M853.9 65.7h2.4M864.0 65.7h2.4M849.9 71.7h2.4M860.0 71.7h2.4M864.0 71.7h2.4M874.1 71.7h2.4M894.4 71.7h2.4M845.8 75.7h2.4M835.7 77.7h2.4M866.1 77.7h2.4M858.0 83.8h2.4M892.3 83.8h2.4M845.8 85.8h2.4M894.4 85.8h2.4M841.8 89.8h2.4M860.0 89.8h2.4M843.8 95.8h2.4M866.1 95.8h2.4M856.0 101.8h2.4M870.1 101.8h2.4M843.8 103.8h2.4M888.3 103.8h2.4M892.3 103.8h2.4M839.8 107.8h2.4M872.1 107.8h2.4M841.8 109.8h2.4M845.8 109.8h2.4M835.7 113.8h2.4M872.1 113.8h2.4M843.8 115.9h2.4M853.9 115.9h4.4M896.4 115.9h2.4M835.7 121.9h2.4M884.3 121.9h2.4M833.7 127.9h2.4M837.8 127.9h4.4M845.8 127.9h2.4M870.1 127.9h6.5M851.9 133.9h2.4M874.1 133.9h4.4M882.2 133.9h2.4M896.4 133.9h2.4M839.8 137.9h2.4M878.2 139.9h2.4M845.8 145.9h2.4M868.1 145.9h2.4M835.7 152.0h2.4M841.8 152.0h2.4M849.9 152.0h2.4M853.9 152.0h2.4M868.1 152.0h2.4M880.2 152.0h2.4M888.3 152.0h2.4M892.3 152.0h2.4"/>
<path stroke="#1e1e1e" stroke-width="2.46" shape-rendering="crispEdges" d="M858.0 65.7h2.4M837.8 73.7h2.4M847.9 73.7h2.4M882.2 73.7h2.4M886.3 73.7h2.4M833.7 75.7h2.4M843.8 75.7h2.4M847.9 75.7h4.4M866.1 75.7h2.4M876.2 75.7h2.4M896.4 75.7h2.4M839.8 77.7h2.4M856.0 77.7h2.4M860.0 77.7h2.4M872.1 77.7h2.4M892.3 77.7h2.4M841.8 85.8h2.4M853.9 85.8h4.4M860.0 85.8h2.4M876.2 85.8h2.4M884.3 85.8h2.4M888.3 85.8h2.4M845.8 87.8h2.4M849.9 87.8h2.4M890.3 87.8h2.4M835.7 89.8h2.4M874.1 89.8h2.4M894.4 89.8h2.4M841.8 97.8h2.4M853.9 97.8h2.4M862.0 97.8h2.4M896.4 97.8h2.4M890.3 99.8h2.4M831.7 101.8h2.4M837.8 101.8h2.4M858.0 101.8h2.4M882.2 101.8h2.4M886.3 101.8h2.4M890.3 101.8h2.4M862.0 103.8h2.4M851.9 109.8h4.4M858.0 109.8h2.4M870.1 109.8h2.4M880.2 109.8h2.4M884.3 109.8h2.4M888.3 109.8h2.4M896.4 109.8h2.4M841.8 111.8h4.4M862.0 111.8h2.4M868.1 111.8h2.4M837.8 113.8h2.4M847.9 113.8h2.4M860.0 113.8h2.4M876.2 113.8h4.4M884.3 113.8h2.4M837.8 119.9h2.4M860.0 121.9h2.4M864.0 121.9h2.4M880.2 121.9h2.4M837.8 123.9h2.4M858.0 123.9h2.4M888.3 123.9h2.4M847.9 125.9h2.4M856.0 125.9h4.4M872.1 125.9h2.4M892.3 125.9h2.4M892.3 127.9h2.4M860.0 133.9h2.4M886.3 133.9h2.4M835.7 135.9h2.4M847.9 135.9h4.4M864.0 135.9h2.4M870.1 135.9h4.4M884.3 135.9h2.4M888.3 135.9h2.4M835.7 137.9h2.4M853.9 137.9h2.4M880.2 137.9h2.4M884.3 137.9h4.4M884.3 139.9h2.4M896.4 139.9h2.4M831.7 145.9h2.4M849.9 147.9h2.4M860.0 147.9h4.4M896.4 147.9h2.4M845.8 150.0h2.4M856.0 150.0h2.4M872.1 150.0h2.4M880.2 150.0h2.4M896.4 150.0h2.4M831.7 152.0h4.4M866.1 152.0h2.4M882.2 152.0h2.4"/>
<path stroke="#787878" stroke-width="2.46" shape-rendering="crispEdges" d="M862.0 65.7h2.4M831.7 67.7h2.4M837.8 67.7h2.4M849.9 67.7h2.4M876.2 71.7h2.4M841.8 79.7h2.4M845.8 79.7h2.4M872.1 79.7h2.4M882.2 79.7h2.4M831.7 83.8h2.4M837.8 83.8h2.4M853.9 83.8h2.4M868.1 83.8h2.4M884.3 83.8h2.4M894.4 83.8h2.4M831.7 91.8h2.4M835.7 91.8h4.4M856.0 91.8h8.5M874.1 91.8h2.4M884.3 91.8h2.4M835.7 95.8h2.4M847.9 95.8h2.4M878.2 95.8h4.4M831.7 103.8h2.4M835.7 103.8h4.4M858.0 103.8h2.4M894.4 103.8h2.4M841.8 107.8h2.4M856.0 107.8h2.4M864.0 107.8h2.4M886.3 107.8h2.4M892.3 109.8h2.4M831.7 115.9h2.4M851.9 115.9h2.4M870.1 115.9h2.4M878.2 115.9h2.4M888.3 119.9h4.4M894.4 119.9h2.4M853.9 127.9h2.4M882.2 129.9h2.4M845.8 131.9h2.4M874.1 131.9h2.4M878.2 131.9h2.4M835.7 139.9h2.4M894.4 139.9h2.4M841.8 143.9h2.4M856.0 143.9h4.4M841.8 145.9h2.4M866.1 145.9h2.4M896.4 145.9h2.4M896.4 152.0h2.4"/>
<path stroke="#6e6e6e" stroke-width="2.46" shape-rendering="crispEdges" d="M868.1 65.7h2.4M837.8 71.7h2.4M856.0 71.7h2.4M888.3 71.7h4.4M878.2 77.7h2.4M874.1 79.7h2.4M884.3 79.7h2.4M890.3 79.7h2.4M835.7 83.8h2.4M860.0 83.8h2.4M874.1 83.8h2.4M845.8 91.8h2.4M849.9 91.8h2.4M872.1 91.8h2.4M876.2 91.8h2.4M892.3 91.8h2.4M831.7 95.8h2.4M837.8 95.8h2.4M841.8 95.8h2.4M851.9 95.8h2.4M876.2 95.8h2.4M839.8 103.8h2.4M866.1 103.8h2.4M835.7 107.8h2.4M868.1 107.8h2.4M884.3 107.8h2.4M835.7 109.8h2.4M839.8 115.9h2.4M845.8 115.9h2.4M858.0 115.9h2.4M866.1 115.9h2.4M872.1 115.9h2.4M890.3 115.9h2.4M849.9 127.9h2.4M880.2 127.9h2.4M831.7 131.9h2.4M876.2 131.9h2.4M880.2 133.9h2.4M833.7 139.9h2.4M856.0 139.9h2.4M864.0 139.9h2.4M878.2 145.9h2.4M884.3 145.9h4.4M839.8 152.0h2.4M845.8 152.0h2.4"/>
<path stroke="#282828" stroke-width="2.46" shape-rendering="crispEdges" d="M870.1 65.7h2.4M874.1 65.7h2.4M882.2 65.7h2.4M892.3 65.7h4.4M849.9 73.7h4.4M868.1 73.7h2.4M888.3 73.7h2.4M839.8 75.7h2.4M860.0 75.7h2.4M853.9 77.7h2.4M858.0 77.7h2.4M862.0 77.7h2.4M886.3 77.7h2.4M866.1 83.8h2.4M896.4 85.8h2.4M835.7 87.8h2.4M858.0 87.8h2.4M878.2 89.8h4.4M890.3 89.8h2.4M870.1 95.8h2.4M847.9 97.8h2.4M858.0 97.8h2.4M882.2 97.8h2.4M890.3 97.8h2.4M839.8 99.8h2.4M845.8 99.8h2.4M874.1 99.8h2.4M882.2 99.8h2.4M896.4 99.8h2.4M841.8 101.8h2.4M864.0 101.8h2.4M884.3 101.8h2.4M888.3 101.8h2.4M839.8 109.8h2.4M849.9 109.8h2.4M864.0 109.8h2.4M876.2 109.8h2.4M847.9 111.8h2.4M870.1 111.8h2.4M876.2 111.8h2.4M884.3 111.8h2.4M843.8 113.8h2.4M853.9 113.8h2.4M864.0 113.8h2.4M886.3 113.8h2.4M839.8 121.9h4.4M845.8 121.9h2.4M853.9 121.9h2.4M858.0 121.9h2.4M862.0 121.9h2.4M870.1 121.9h6.5M882.2 121.9h2.4M886.3 121.9h6.5M839.8 123.9h4.4M845.8 123.9h2.4M833.7 125.9h2.4M837.8 125.9h4.4M853.9 125.9h2.4M894.4 125.9h2.4M841.8 133.9h2.4M847.9 133.9h2.4M837.8 135.9h2.4M856.0 135.9h2.4M896.4 135.9h2.4M845.8 137.9h2.4M860.0 137.9h2.4M882.2 137.9h2.4M888.3 137.9h2.4M894.4 137.9h2.4M839.8 145.9h2.4M843.8 145.9h2.4M876.2 145.9h2.4M892.3 145.9h2.4M831.7 147.9h2.4M837.8 147.9h4.4M870.1 147.9h2.4M843.8 150.0h2.4M864.0 150.0h2.4M868.1 150.0h2.4M886.3 150.0h2.4M851.9 152.0h2.4M864.0 152.0h2.4"/>
<path stroke="#a0a0a0" stroke-width="2.46" shape-rendering="crispEdges" d="M833.7 67.7h2.4M874.1 67.7h2.4M878.2 67.7h2.4M884.3 67.7h2.4M890.3 67.7h2.4M835.7 69.7h2.4M839.8 69.7h2.4M849.9 69.7h2.4M856.0 69.7h2.4M874.1 69.7h2.4M878.2 69.7h2.4M835.7 79.7h2.4M847.9 79.7h2.4M858.0 79.7h4.4M839.8 81.8h2.4M864.0 91.8h2.4M880.2 93.8h2.4M892.3 93.8h2.4M837.8 105.8h2.4M872.1 105.8h2.4M880.2 105.8h2.4M862.0 107.8h2.4M833.7 117.9h2.4M853.9 117.9h2.4M862.0 117.9h2.4M866.1 117.9h2.4M892.3 117.9h2.4M835.7 119.9h2.4M851.9 119.9h2.4M858.0 119.9h2.4M880.2 119.9h4.4M853.9 129.9h2.4M860.0 129.9h2.4M880.2 129.9h2.4M894.4 129.9h2.4M835.7 131.9h2.4M841.8 131.9h2.4M886.3 131.9h2.4M892.3 131.9h2.4M853.9 139.9h2.4M862.0 139.9h2.4M847.9 141.9h2.4M874.1 141.9h2.4M880.2 141.9h4.4M886.3 141.9h2.4M890.3 141.9h4.4M845.8 143.9h2.4M849.9 143.9h2.4M853.9 143.9h2.4M872.1 143.9h2.4M886.3 143.9h2.4M892.3 143.9h2.4M853.9 172.0h2.4M835.7 174.0h2.4M872.1 176.0h2.4"/>
<path stroke="#8c8c8c" stroke-width="2.46" shape-rendering="crispEdges" d="M835.7 67.7h2.4M843.8 67.7h2.4M847.9 67.7h2.4M862.0 67.7h2.4M868.1 69.7h2.4M892.3 69.7h2.4M892.3 71.7h2.4M831.7 79.7h2.4M837.8 79.7h2.4M866.1 79.7h2.4M880.2 79.7h2.4M896.4 79.7h2.4M868.1 81.8h2.4M839.8 83.8h2.4M886.3 83.8h2.4M841.8 91.8h2.4M835.7 93.8h2.4M853.9 95.8h2.4M882.2 95.8h2.4M878.2 103.8h2.4M831.7 107.8h2.4M847.9 107.8h2.4M866.1 107.8h2.4M874.1 107.8h2.4M833.7 115.9h2.4M841.8 115.9h2.4M874.1 115.9h2.4M847.9 117.9h2.4M880.2 117.9h2.4M841.8 119.9h4.4M847.9 119.9h2.4M878.2 119.9h2.4M831.7 129.9h2.4M866.1 131.9h2.4M882.2 131.9h2.4M888.3 131.9h2.4M831.7 141.9h2.4M860.0 141.9h2.4M878.2 141.9h2.4M894.4 141.9h2.4M835.7 143.9h2.4M847.9 143.9h2.4M862.0 143.9h2.4M868.1 143.9h2.4M847.9 145.9h2.4"/>
<path stroke="#828282" stroke-width="2.46" shape-rendering="crispEdges" d="M839.8 67.7h4.4M872.1 67.7h2.4M892.3 67.7h2.4M862.0 71.7h2.4M839.8 79.7h2.4M853.9 79.7h2.4M892.3 79.7h2.4M884.3 81.8h2.4M841.8 83.8h2.4M839.8 91.8h2.4M843.8 91.8h2.4M853.9 91.8h2.4M870.1 91.8h2.4M890.3 91.8h2.4M894.4 91.8h2.4M841.8 93.8h2.4M845.8 95.8h2.4M884.3 95.8h4.4M896.4 95.8h2.4M864.0 103.8h2.4M870.1 103.8h4.4M884.3 103.8h2.4M890.3 105.8h2.4M896.4 105.8h2.4M837.8 107.8h2.4M851.9 107.8h4.4M860.0 107.8h2.4M876.2 107.8h4.4M892.3 107.8h2.4M876.2 115.9h2.4M892.3 115.9h2.4M845.8 119.9h2.4M856.0 119.9h2.4M862.0 119.9h2.4M874.1 119.9h4.4M868.1 127.9h2.4M866.1 129.9h2.4M870.1 129.9h2.4M874.1 129.9h2.4M849.9 131.9h4.4M864.0 131.9h2.4M884.3 131.9h2.4M888.3 141.9h2.4M851.9 143.9h2.4M884.3 143.9h2.4"/>
<path stroke="#969696" stroke-width="2.46" shape-rendering="crispEdges" d="M845.8 67.7h2.4M856.0 67.7h2.4M860.0 67.7h2.4M864.0 67.7h2.4M888.3 67.7h2.4M896.4 67.7h2.4M864.0 69.7h2.4M876.2 69.7h2.4M894.4 69.7h2.4M833.7 79.7h2.4M849.9 79.7h2.4M868.1 79.7h2.4M831.7 81.8h2.4M847.9 81.8h2.4M892.3 81.8h2.4M880.2 83.8h2.4M833.7 91.8h2.4M866.1 91.8h2.4M886.3 91.8h2.4M882.2 93.8h2.4M860.0 95.8h2.4M847.9 103.8h2.4M833.7 105.8h2.4M894.4 107.8h2.4M835.7 117.9h2.4M894.4 117.9h2.4M833.7 119.9h2.4M849.9 119.9h2.4M870.1 119.9h2.4M843.8 127.9h2.4M843.8 129.9h4.4M864.0 129.9h2.4M888.3 129.9h2.4M833.7 131.9h2.4M856.0 131.9h2.4M862.0 131.9h2.4M872.1 131.9h2.4M890.3 131.9h2.4M894.4 131.9h2.4M835.7 141.9h4.4M841.8 141.9h2.4M853.9 141.9h4.4M868.1 141.9h2.4M837.8 143.9h2.4M880.2 143.9h2.4M896.4 143.9h2.4M851.9 154.0h2.4"/>
<path stroke="#b4b4b4" stroke-width="2.46" shape-rendering="crispEdges" d="M851.9 67.7h2.4M882.2 67.7h2.4M831.7 69.7h2.4M837.8 69.7h2.4M841.8 69.7h2.4M862.0 69.7h2.4M870.1 69.7h4.4M888.3 79.7h2.4M835.7 81.8h2.4M843.8 81.8h2.4M866.1 81.8h2.4M870.1 81.8h2.4M874.1 81.8h2.4M872.1 93.8h2.4M884.3 93.8h2.4M868.1 105.8h2.4M886.3 115.9h2.4M831.7 117.9h2.4M858.0 117.9h2.4M874.1 117.9h4.4M890.3 117.9h2.4M853.9 119.9h2.4M876.2 129.9h2.4M886.3 129.9h2.4M896.4 129.9h2.4M843.8 131.9h2.4M858.0 131.9h2.4M880.2 131.9h2.4M833.7 141.9h2.4M845.8 141.9h2.4M851.9 141.9h2.4M870.1 141.9h4.4M833.7 143.9h2.4M866.1 143.9h2.4M874.1 143.9h2.4M882.2 154.0h2.4M886.3 154.0h2.4M876.2 156.0h2.4M837.8 160.0h2.4M870.1 160.0h2.4M878.2 164.0h2.4M858.0 166.0h2.4M884.3 166.0h2.4M847.9 168.0h2.4M866.1 168.0h2.4M853.9 170.0h2.4M870.1 170.0h2.4M845.8 172.0h2.4M864.0 172.0h2.4M896.4 172.0h2.4M849.9 180.0h2.4"/>
<path stroke="#aaaaaa" stroke-width="2.46" shape-rendering="crispEdges" d="M853.9 67.7h2.4M858.0 67.7h2.4M868.1 67.7h4.4M880.2 67.7h2.4M843.8 69.7h2.4M847.9 69.7h2.4M851.9 69.7h4.4M882.2 69.7h4.4M841.8 81.8h2.4M851.9 81.8h2.4M864.0 81.8h2.4M872.1 81.8h2.4M853.9 93.8h2.4M874.1 93.8h2.4M894.4 95.8h2.4M837.8 117.9h2.4M860.0 117.9h2.4M864.0 117.9h2.4M888.3 117.9h2.4M866.1 119.9h2.4M886.3 119.9h2.4M892.3 119.9h2.4M833.7 129.9h2.4M837.8 129.9h2.4M841.8 129.9h2.4M847.9 129.9h2.4M858.0 129.9h2.4M878.2 129.9h2.4M884.3 129.9h2.4M890.3 129.9h2.4M839.8 131.9h2.4M847.9 131.9h2.4M853.9 131.9h2.4M870.1 131.9h2.4M896.4 131.9h2.4M843.8 141.9h2.4M849.9 141.9h2.4M864.0 141.9h2.4M876.2 141.9h2.4M831.7 143.9h2.4M843.8 143.9h2.4M876.2 143.9h2.4M882.2 143.9h2.4M890.3 143.9h2.4M868.1 160.0h2.4M835.7 162.0h2.4M833.7 166.0h2.4M831.7 168.0h2.4M833.7 172.0h2.4M837.8 174.0h2.4"/>
<path stroke="#dcdcdc" stroke-width="2.46" shape-rendering="crispEdges" d="M866.1 67.7h2.4M894.4 67.7h2.4M833.7 69.7h2.4M882.2 81.8h2.4M896.4 81.8h2.4M843.8 93.8h2.4M896.4 93.8h2.4M853.9 105.8h2.4M866.1 105.8h2.4M878.2 105.8h2.4M849.9 107.8h2.4M839.8 117.9h2.4M882.2 117.9h2.4M835.7 129.9h2.4M858.0 141.9h2.4M831.7 154.0h2.4M862.0 154.0h2.4M874.1 154.0h2.4M890.3 154.0h6.5M835.7 156.0h2.4M851.9 156.0h2.4M856.0 156.0h2.4M860.0 156.0h2.4M870.1 156.0h4.4M894.4 156.0h2.4M833.7 158.0h4.4M839.8 158.0h2.4M849.9 158.0h2.4M853.9 158.0h2.4M872.1 158.0h2.4M831.7 160.0h2.4M841.8 160.0h2.4M874.1 160.0h2.4M886.3 160.0h2.4M831.7 162.0h2.4M849.9 162.0h2.4M853.9 162.0h4.4M860.0 162.0h2.4M868.1 162.0h2.4M874.1 162.0h4.4M882.2 162.0h2.4M841.8 164.0h2.4M849.9 164.0h2.4M853.9 164.0h2.4M860.0 164.0h2.4M864.0 164.0h2.4M874.1 164.0h2.4M882.2 164.0h2.4M888.3 164.0h2.4M853.9 166.0h2.4M892.3 166.0h2.4M841.8 168.0h6.5M856.0 168.0h2.4M876.2 168.0h2.4M880.2 168.0h2.4M886.3 168.0h2.4M890.3 168.0h2.4M839.8 170.0h2.4M843.8 170.0h2.4M851.9 170.0h2.4M878.2 170.0h4.4M884.3 170.0h2.4M892.3 170.0h2.4M849.9 172.0h2.4M856.0 172.0h2.4M862.0 172.0h2.4M872.1 172.0h2.4M886.3 172.0h2.4M831.7 174.0h2.4M843.8 174.0h2.4M847.9 174.0h2.4M858.0 174.0h2.4M874.1 174.0h4.4M888.3 174.0h2.4M833.7 176.0h4.4M864.0 176.0h2.4M876.2 176.0h2.4M888.3 176.0h2.4M896.4 176.0h2.4M833.7 178.0h2.4M847.9 178.0h2.4M870.1 178.0h2.4M874.1 178.0h2.4M878.2 178.0h2.4M884.3 178.0h2.4M888.3 178.0h2.4M896.4 178.0h2.4M841.8 180.0h2.4M845.8 180.0h2.4M856.0 180.0h2.4M864.0 180.0h2.4M874.1 180.0h2.4M878.2 180.0h2.4M884.3 180.0h2.4"/>
<path stroke="#d2d2d2" stroke-width="2.46" shape-rendering="crispEdges" d="M876.2 67.7h2.4M890.3 69.7h2.4M837.8 81.8h2.4M856.0 81.8h2.4M876.2 81.8h2.4M837.8 93.8h2.4M849.9 93.8h2.4M868.1 93.8h4.4M886.3 93.8h4.4M894.4 93.8h2.4M851.9 105.8h2.4M860.0 105.8h2.4M864.0 105.8h2.4M841.8 117.9h2.4M849.9 117.9h2.4M849.9 129.9h2.4M868.1 129.9h2.4M837.8 131.9h2.4M866.1 141.9h2.4M878.2 143.9h2.4M833.7 154.0h2.4M843.8 154.0h2.4M847.9 154.0h2.4M864.0 154.0h2.4M870.1 154.0h2.4M876.2 154.0h2.4M880.2 154.0h2.4M888.3 154.0h2.4M833.7 156.0h2.4M847.9 156.0h4.4M853.9 156.0h2.4M858.0 156.0h2.4M874.1 156.0h2.4M886.3 156.0h2.4M866.1 158.0h2.4M870.1 158.0h2.4M874.1 158.0h2.4M880.2 158.0h4.4M886.3 158.0h4.4M833.7 160.0h4.4M839.8 160.0h2.4M845.8 160.0h4.4M851.9 160.0h4.4M858.0 160.0h2.4M862.0 160.0h2.4M866.1 160.0h2.4M876.2 160.0h4.4M896.4 160.0h2.4M833.7 162.0h2.4M837.8 162.0h4.4M845.8 162.0h2.4M858.0 162.0h2.4M862.0 162.0h2.4M870.1 162.0h2.4M896.4 162.0h2.4M837.8 164.0h2.4M843.8 164.0h2.4M851.9 164.0h2.4M856.0 164.0h2.4M866.1 164.0h2.4M880.2 164.0h2.4M849.9 166.0h2.4M862.0 166.0h4.4M876.2 166.0h2.4M880.2 166.0h2.4M886.3 166.0h4.4M858.0 168.0h4.4M868.1 168.0h2.4M872.1 168.0h2.4M888.3 168.0h2.4M833.7 170.0h2.4M845.8 170.0h2.4M856.0 170.0h2.4M866.1 170.0h2.4M847.9 172.0h2.4M851.9 172.0h2.4M866.1 172.0h2.4M876.2 172.0h2.4M884.3 172.0h2.4M890.3 172.0h4.4M833.7 174.0h2.4M839.8 174.0h4.4M849.9 174.0h2.4M853.9 174.0h2.4M864.0 174.0h2.4M880.2 174.0h2.4M884.3 174.0h2.4M892.3 174.0h2.4M837.8 176.0h2.4M845.8 176.0h4.4M856.0 176.0h2.4M884.3 176.0h2.4M841.8 178.0h6.5M862.0 178.0h4.4M886.3 178.0h2.4M835.7 180.0h2.4M847.9 180.0h2.4M851.9 180.0h2.4M858.0 180.0h2.4M862.0 180.0h2.4M866.1 180.0h4.4M888.3 180.0h2.4"/>
<path stroke="#bebebe" stroke-width="2.46" shape-rendering="crispEdges" d="M886.3 67.7h2.4M845.8 69.7h2.4M866.1 69.7h2.4M888.3 69.7h2.4M851.9 79.7h2.4M833.7 81.8h2.4M858.0 81.8h2.4M888.3 81.8h4.4M831.7 93.8h2.4M851.9 93.8h2.4M856.0 93.8h4.4M864.0 93.8h4.4M890.3 93.8h2.4M892.3 95.8h2.4M839.8 105.8h2.4M856.0 105.8h2.4M870.1 105.8h2.4M874.1 105.8h4.4M892.3 105.8h2.4M870.1 107.8h2.4M843.8 117.9h4.4M856.0 117.9h2.4M886.3 117.9h2.4M896.4 117.9h2.4M839.8 129.9h2.4M862.0 129.9h2.4M872.1 129.9h2.4M884.3 141.9h2.4M839.8 143.9h2.4M835.7 154.0h2.4M839.8 154.0h2.4M845.8 154.0h2.4M849.9 154.0h2.4M858.0 154.0h2.4M831.7 156.0h2.4M831.7 158.0h2.4M841.8 158.0h2.4M847.9 158.0h2.4M856.0 158.0h4.4M864.0 158.0h2.4M892.3 158.0h2.4M872.1 160.0h2.4M882.2 160.0h2.4M892.3 160.0h4.4M847.9 162.0h2.4M851.9 162.0h2.4M884.3 162.0h2.4M894.4 162.0h2.4M835.7 164.0h2.4M847.9 164.0h2.4M862.0 164.0h2.4M884.3 164.0h2.4M835.7 166.0h4.4M843.8 166.0h2.4M870.1 166.0h2.4M878.2 166.0h2.4M894.4 166.0h2.4M833.7 168.0h2.4M882.2 168.0h2.4M896.4 168.0h2.4M860.0 170.0h2.4M876.2 170.0h2.4M890.3 170.0h2.4M837.8 172.0h2.4M894.4 172.0h2.4M845.8 174.0h2.4M866.1 174.0h2.4M894.4 174.0h4.4M843.8 176.0h2.4M849.9 176.0h4.4M862.0 176.0h2.4M870.1 176.0h2.4M886.3 176.0h2.4M831.7 178.0h2.4M866.1 178.0h2.4M837.8 180.0h2.4M853.9 180.0h2.4M870.1 180.0h2.4M890.3 180.0h2.4"/>
<path stroke="#c8c8c8" stroke-width="2.46" shape-rendering="crispEdges" d="M858.0 69.7h4.4M886.3 69.7h2.4M849.9 81.8h2.4M853.9 81.8h2.4M860.0 81.8h4.4M878.2 81.8h4.4M886.3 81.8h2.4M894.4 81.8h2.4M833.7 93.8h2.4M839.8 93.8h2.4M845.8 93.8h4.4M835.7 105.8h2.4M847.9 105.8h4.4M884.3 105.8h2.4M851.9 117.9h2.4M868.1 117.9h6.5M884.3 117.9h2.4M868.1 119.9h2.4M851.9 129.9h2.4M856.0 129.9h2.4M892.3 129.9h2.4M862.0 141.9h2.4M896.4 141.9h2.4M860.0 143.9h2.4M888.3 143.9h2.4M837.8 154.0h2.4M860.0 154.0h2.4M866.1 154.0h4.4M872.1 154.0h2.4M878.2 154.0h2.4M837.8 156.0h4.4M843.8 156.0h4.4M864.0 156.0h2.4M868.1 156.0h2.4M880.2 156.0h4.4M837.8 158.0h2.4M868.1 158.0h2.4M876.2 158.0h2.4M849.9 160.0h2.4M860.0 160.0h2.4M864.0 160.0h2.4M888.3 160.0h2.4M864.0 162.0h2.4M872.1 162.0h2.4M831.7 164.0h2.4M858.0 164.0h2.4M870.1 164.0h4.4M886.3 164.0h2.4M890.3 164.0h4.4M896.4 164.0h2.4M831.7 166.0h2.4M856.0 166.0h2.4M860.0 166.0h2.4M866.1 166.0h2.4M874.1 166.0h2.4M882.2 166.0h2.4M896.4 166.0h2.4M849.9 168.0h2.4M862.0 168.0h4.4M870.1 168.0h2.4M878.2 168.0h2.4M894.4 168.0h2.4M837.8 170.0h2.4M841.8 170.0h2.4M847.9 170.0h2.4M858.0 170.0h2.4M862.0 170.0h4.4M868.1 170.0h2.4M872.1 170.0h2.4M882.2 170.0h2.4M886.3 170.0h4.4M896.4 170.0h2.4M835.7 172.0h2.4M841.8 172.0h2.4M870.1 172.0h2.4M874.1 172.0h2.4M880.2 172.0h2.4M888.3 172.0h2.4M851.9 174.0h2.4M862.0 174.0h2.4M868.1 174.0h6.5M839.8 176.0h2.4M853.9 176.0h2.4M858.0 176.0h2.4M878.2 176.0h2.4M882.2 176.0h2.4M890.3 176.0h4.4M837.8 178.0h4.4M849.9 178.0h2.4M853.9 178.0h4.4M872.1 178.0h2.4M843.8 180.0h2.4M876.2 180.0h2.4M880.2 180.0h4.4M892.3 180.0h2.4M896.4 180.0h2.4M831.7 182.0h67.1M831.7 184.1h67.1M831.7 186.1h67.1M831.7 188.1h67.1M831.7 190.1h67.1M831.7 192.1h67.1M831.7 194.1h67.1M831.7 196.1h67.1M831.7 198.1h67.1M831.7 200.1h67.1M831.7 202.1h67.1M831.7 204.1h67.1M831.7 206.1h67.1M831.7 208.1h67.1M831.7 210.1h67.1M831.7 212.1h67.1M831.7 214.1h67.1M831.7 216.1h67.1M831.7 218.2h67.1M831.7 220.2h67.1M831.7 222.2h67.1M831.7 224.2h67.1M831.7 226.2h67.1M831.7 228.2h67.1M831.7 230.2h67.1M831.7 232.2h67.1"/>
<path stroke="#e6e6e6" stroke-width="2.46" shape-rendering="crispEdges" d="M880.2 69.7h2.4M878.2 93.8h2.4M831.7 105.8h2.4M841.8 105.8h4.4M858.0 105.8h2.4M862.0 105.8h2.4M886.3 105.8h4.4M841.8 154.0h2.4M853.9 154.0h4.4M884.3 156.0h2.4M892.3 156.0h2.4M896.4 156.0h2.4M843.8 158.0h2.4M860.0 158.0h2.4M884.3 158.0h2.4M890.3 158.0h2.4M894.4 158.0h4.4M843.8 160.0h2.4M856.0 160.0h2.4M880.2 160.0h2.4M884.3 160.0h2.4M878.2 162.0h2.4M888.3 162.0h4.4M833.7 164.0h2.4M868.1 164.0h2.4M876.2 164.0h2.4M841.8 166.0h2.4M847.9 166.0h2.4M851.9 166.0h2.4M868.1 166.0h2.4M872.1 166.0h2.4M890.3 166.0h2.4M839.8 168.0h2.4M851.9 168.0h4.4M884.3 168.0h2.4M874.1 170.0h2.4M831.7 172.0h2.4M843.8 172.0h2.4M858.0 172.0h2.4M868.1 172.0h2.4M878.2 172.0h2.4M856.0 174.0h2.4M860.0 174.0h2.4M878.2 174.0h2.4M882.2 174.0h2.4M886.3 174.0h2.4M890.3 174.0h2.4M860.0 176.0h2.4M868.1 176.0h2.4M874.1 176.0h2.4M894.4 176.0h2.4M835.7 178.0h2.4M868.1 178.0h2.4M882.2 178.0h2.4M890.3 178.0h6.5M831.7 180.0h4.4M860.0 180.0h2.4M872.1 180.0h2.4M886.3 180.0h2.4"/>
<path stroke="#ffffff" stroke-width="2.46" shape-rendering="crispEdges" d="M896.4 69.7h2.4M860.0 93.8h2.4M882.2 105.8h2.4M841.8 162.0h2.4M882.2 172.0h2.4M841.8 176.0h2.4"/>
<path stroke="#5a5a5a" stroke-width="2.46" shape-rendering="crispEdges" d="M835.7 71.7h2.4M841.8 71.7h2.4M847.9 71.7h2.4M872.1 71.7h2.4M868.1 77.7h4.4M876.2 77.7h2.4M843.8 79.7h2.4M856.0 79.7h2.4M864.0 79.7h2.4M833.7 83.8h2.4M864.0 83.8h2.4M872.1 83.8h2.4M896.4 83.8h2.4M833.7 95.8h2.4M874.1 95.8h2.4M837.8 97.8h2.4M843.8 97.8h2.4M862.0 101.8h2.4M845.8 103.8h2.4M856.0 103.8h2.4M868.1 103.8h2.4M880.2 103.8h2.4M890.3 103.8h2.4M833.7 107.8h2.4M880.2 107.8h4.4M890.3 107.8h2.4M835.7 115.9h4.4M847.9 115.9h4.4M860.0 115.9h6.5M880.2 115.9h2.4M888.3 115.9h2.4M839.8 119.9h2.4M860.0 119.9h2.4M872.1 119.9h2.4M896.4 119.9h2.4M837.8 121.9h2.4M843.8 121.9h2.4M847.9 121.9h2.4M858.0 127.9h6.5M884.3 127.9h2.4M890.3 127.9h2.4M894.4 127.9h4.4M868.1 131.9h2.4M864.0 133.9h2.4M878.2 133.9h2.4M888.3 133.9h2.4M841.8 139.9h2.4M847.9 139.9h4.4M833.7 145.9h2.4M853.9 145.9h2.4M858.0 145.9h2.4M872.1 145.9h2.4M856.0 152.0h2.4M884.3 152.0h4.4M890.3 152.0h2.4"/>
<path stroke="#0a0a0a" stroke-width="2.46" shape-rendering="crispEdges" d="M833.7 73.7h2.4M845.8 73.7h2.4M860.0 73.7h2.4M876.2 73.7h4.4M890.3 73.7h2.4M835.7 75.7h2.4M841.8 75.7h2.4M853.9 75.7h2.4M858.0 75.7h2.4M884.3 75.7h2.4M880.2 77.7h4.4M847.9 85.8h2.4M882.2 85.8h2.4M837.8 87.8h2.4M866.1 87.8h2.4M853.9 89.8h4.4M851.9 97.8h2.4M860.0 97.8h2.4M849.9 99.8h2.4M870.1 99.8h2.4M876.2 99.8h2.4M894.4 99.8h2.4M860.0 101.8h2.4M878.2 101.8h2.4M856.0 109.8h2.4M860.0 109.8h2.4M886.3 109.8h2.4M835.7 111.8h2.4M845.8 111.8h2.4M849.9 111.8h2.4M874.1 111.8h2.4M878.2 111.8h2.4M888.3 111.8h2.4M831.7 121.9h2.4M843.8 123.9h2.4M847.9 123.9h2.4M866.1 123.9h2.4M892.3 123.9h2.4M872.1 133.9h2.4M845.8 135.9h2.4M882.2 135.9h2.4M886.3 135.9h2.4M847.9 137.9h2.4M868.1 137.9h2.4M872.1 137.9h2.4M892.3 137.9h2.4M892.3 139.9h2.4M860.0 145.9h2.4M864.0 145.9h2.4M851.9 147.9h6.5M864.0 147.9h2.4M876.2 147.9h2.4M886.3 147.9h2.4M837.8 150.0h2.4M851.9 150.0h2.4M878.2 150.0h2.4"/>
<path stroke="#fafafa" stroke-width="2.46" shape-rendering="crispEdges" d="M845.8 81.8h2.4M862.0 93.8h2.4M876.2 93.8h2.4M878.2 117.9h2.4M888.3 156.0h2.4M862.0 158.0h2.4M878.2 158.0h2.4M886.3 162.0h2.4M845.8 164.0h2.4M845.8 166.0h2.4M831.7 170.0h2.4M831.7 176.0h2.4M851.9 178.0h2.4M858.0 178.0h4.4M880.2 178.0h2.4"/>
<path stroke="#f0f0f0" stroke-width="2.46" shape-rendering="crispEdges" d="M845.8 105.8h2.4M894.4 105.8h2.4M884.3 154.0h2.4M896.4 154.0h2.4M841.8 156.0h2.4M862.0 156.0h2.4M866.1 156.0h2.4M878.2 156.0h2.4M890.3 156.0h2.4M845.8 158.0h2.4M851.9 158.0h2.4M890.3 160.0h2.4M843.8 162.0h2.4M866.1 162.0h2.4M880.2 162.0h2.4M892.3 162.0h2.4M839.8 164.0h2.4M894.4 164.0h2.4M839.8 166.0h2.4M835.7 168.0h4.4M874.1 168.0h2.4M892.3 168.0h2.4M835.7 170.0h2.4M849.9 170.0h2.4M894.4 170.0h2.4M839.8 172.0h2.4M860.0 172.0h2.4M866.1 176.0h2.4M880.2 176.0h2.4M876.2 178.0h2.4M839.8 180.0h2.4M894.4 180.0h2.4"/>
<rect x="831.65" y="64.75" width="66.8" height="168.4" fill="none" stroke="#0000ff" stroke-width="2.5"/>
<path stroke="#e0e0e0" stroke-width="2.46" shape-rendering="crispEdges" d="M932.8 65.7h2.4M975.2 69.7h2.4M971.2 71.7h2.4M987.4 71.7h2.4M991.4 71.7h2.4M946.9 77.7h2.4M938.9 87.8h2.4M965.1 87.8h2.4M977.3 89.8h2.4M957.1 91.8h2.4M977.3 91.8h2.4M957.1 93.8h2.4M981.3 95.8h2.4M942.9 97.8h2.4M967.2 97.8h2.4M981.3 97.8h2.4M932.8 99.8h2.4M946.9 101.8h2.4M977.3 101.8h2.4M971.2 105.8h2.4M936.8 107.8h2.4M993.4 107.8h2.4M934.8 111.8h2.4M942.9 111.8h2.4M971.2 113.8h2.4M936.8 119.9h2.4M940.9 121.9h2.4M981.3 121.9h2.4M936.8 123.9h2.4M997.5 123.9h2.4M944.9 125.9h2.4M969.2 125.9h2.4M991.4 125.9h2.4M993.4 127.9h2.4M995.5 129.9h2.4M969.2 131.9h2.4M987.4 131.9h2.4M934.8 133.9h2.4M946.9 133.9h2.4M969.2 137.9h2.4M944.9 143.9h2.4M946.9 145.9h2.4M973.2 150.0h2.4M975.2 152.0h2.4M946.9 156.0h2.4M981.3 156.0h2.4"/>
<path stroke="#707070" stroke-width="2.46" shape-rendering="crispEdges" d="M934.8 65.7h2.4M946.9 65.7h2.4M953.0 65.7h2.4M963.1 65.7h2.4M979.3 65.7h2.4M995.5 65.7h2.4M938.9 67.7h2.4M951.0 67.7h2.4M961.1 67.7h2.4M942.9 69.7h2.4M987.4 69.7h2.4M946.9 71.7h2.4M957.1 71.7h4.4M989.4 71.7h2.4M955.0 73.7h2.4M961.1 73.7h2.4M938.9 75.7h2.4M979.3 75.7h2.4M989.4 75.7h2.4M963.1 77.7h2.4M932.8 79.7h2.4M953.0 79.7h2.4M991.4 79.7h2.4M936.8 81.8h4.4M977.3 81.8h2.4M987.4 81.8h2.4M995.5 81.8h2.4M938.9 83.8h2.4M942.9 83.8h2.4M946.9 83.8h2.4M942.9 85.8h2.4M949.0 85.8h2.4M959.1 85.8h2.4M977.3 87.8h2.4M991.4 87.8h2.4M995.5 87.8h4.4M942.9 89.8h2.4M955.0 89.8h2.4M979.3 89.8h4.4M953.0 91.8h2.4M965.1 91.8h2.4M979.3 91.8h2.4M987.4 91.8h2.4M934.8 93.8h2.4M961.1 93.8h2.4M985.4 93.8h2.4M997.5 93.8h2.4M971.2 95.8h2.4M975.2 95.8h2.4M938.9 97.8h2.4M946.9 97.8h2.4M951.0 97.8h2.4M963.1 97.8h2.4M983.3 97.8h2.4M997.5 97.8h2.4M949.0 99.8h2.4M979.3 99.8h2.4M942.9 101.8h2.4M997.5 101.8h2.4M959.1 103.8h2.4M985.4 103.8h2.4M953.0 105.8h2.4M995.5 105.8h2.4M940.9 107.8h2.4M949.0 107.8h2.4M961.1 107.8h2.4M971.2 107.8h2.4M991.4 107.8h2.4M995.5 107.8h2.4M946.9 109.8h4.4M997.5 109.8h2.4M957.1 111.8h2.4M944.9 113.8h2.4M979.3 113.8h2.4M944.9 115.9h2.4M953.0 117.9h2.4M959.1 117.9h2.4M983.3 117.9h2.4M985.4 119.9h4.4M991.4 119.9h2.4M932.8 123.9h2.4M977.3 123.9h2.4M965.1 125.9h2.4M971.2 125.9h2.4M975.2 125.9h2.4M985.4 125.9h2.4M955.0 127.9h2.4M963.1 127.9h2.4M969.2 127.9h2.4M973.2 127.9h2.4M942.9 129.9h2.4M957.1 129.9h2.4M932.8 131.9h2.4M983.3 133.9h2.4M940.9 135.9h2.4M949.0 135.9h2.4M969.2 135.9h2.4M938.9 137.9h2.4M961.1 137.9h4.4M975.2 137.9h2.4M995.5 137.9h2.4M934.8 139.9h2.4M944.9 139.9h2.4M973.2 139.9h2.4M977.3 139.9h2.4M977.3 141.9h2.4M963.1 145.9h2.4M983.3 145.9h2.4M987.4 145.9h2.4M932.8 147.9h2.4M944.9 147.9h2.4M967.2 147.9h2.4M975.2 147.9h2.4M991.4 147.9h4.4M971.2 150.0h2.4M993.4 150.0h2.4M949.0 154.0h2.4M971.2 154.0h2.4M961.1 156.0h2.4M967.2 156.0h2.4"/>
<path stroke="#b0b0b0" stroke-width="2.46" shape-rendering="crispEdges" d="M936.8 65.7h2.4M949.0 65.7h2.4M971.2 65.7h2.4M955.0 71.7h2.4M932.8 73.7h4.4M985.4 73.7h2.4M936.8 75.7h2.4M944.9 75.7h2.4M953.0 77.7h2.4M977.3 77.7h2.4M940.9 79.7h4.4M961.1 79.7h2.4M967.2 81.8h2.4M979.3 81.8h2.4M944.9 83.8h2.4M936.8 85.8h2.4M940.9 85.8h2.4M946.9 85.8h2.4M963.1 85.8h2.4M993.4 85.8h2.4M967.2 87.8h2.4M949.0 89.8h2.4M963.1 89.8h2.4M951.0 91.8h2.4M981.3 91.8h2.4M985.4 91.8h2.4M944.9 93.8h2.4M934.8 97.8h2.4M991.4 97.8h2.4M953.0 99.8h2.4M977.3 99.8h2.4M944.9 101.8h2.4M949.0 103.8h2.4M977.3 103.8h2.4M983.3 103.8h2.4M938.9 105.8h2.4M961.1 105.8h2.4M957.1 107.8h2.4M959.1 109.8h2.4M973.2 109.8h2.4M981.3 109.8h2.4M932.8 111.8h2.4M969.2 111.8h2.4M949.0 113.8h2.4M963.1 113.8h2.4M977.3 113.8h2.4M934.8 115.9h2.4M946.9 115.9h2.4M983.3 115.9h2.4M932.8 117.9h2.4M957.1 117.9h2.4M961.1 117.9h2.4M977.3 117.9h2.4M946.9 119.9h2.4M995.5 119.9h2.4M951.0 121.9h2.4M957.1 121.9h4.4M934.8 123.9h2.4M951.0 123.9h2.4M953.0 125.9h2.4M987.4 125.9h2.4M936.8 127.9h2.4M942.9 127.9h2.4M975.2 127.9h2.4M953.0 129.9h2.4M981.3 129.9h4.4M936.8 131.9h2.4M951.0 131.9h2.4M981.3 133.9h2.4M991.4 133.9h2.4M963.1 135.9h2.4M995.5 135.9h2.4M936.8 137.9h2.4M961.1 139.9h2.4M979.3 139.9h2.4M985.4 139.9h2.4M985.4 141.9h2.4M987.4 143.9h2.4M991.4 143.9h2.4M944.9 145.9h2.4M997.5 145.9h2.4M955.0 147.9h2.4M973.2 147.9h2.4M995.5 147.9h2.4M942.9 150.0h2.4M946.9 150.0h2.4M963.1 150.0h2.4M997.5 150.0h2.4M934.8 152.0h2.4M967.2 152.0h2.4M983.3 152.0h2.4M955.0 154.0h2.4M959.1 154.0h2.4M965.1 154.0h2.4M981.3 154.0h2.4M971.2 156.0h2.4"/>
<path stroke="#808080" stroke-width="2.46" shape-rendering="crispEdges" d="M938.9 65.7h2.4M961.1 65.7h2.4M983.3 65.7h4.4M993.4 65.7h2.4M936.8 69.7h2.4M993.4 69.7h2.4M942.9 71.7h2.4M969.2 71.7h2.4M985.4 71.7h2.4M967.2 73.7h2.4M987.4 73.7h2.4M932.8 75.7h2.4M940.9 75.7h2.4M973.2 75.7h2.4M993.4 75.7h2.4M973.2 77.7h4.4M979.3 77.7h2.4M936.8 79.7h2.4M955.0 79.7h2.4M932.8 83.8h2.4M949.0 83.8h2.4M961.1 83.8h2.4M938.9 85.8h2.4M944.9 85.8h2.4M967.2 85.8h2.4M946.9 87.8h2.4M953.0 87.8h2.4M985.4 87.8h2.4M973.2 89.8h2.4M942.9 91.8h2.4M961.1 91.8h2.4M938.9 93.8h2.4M955.0 93.8h2.4M977.3 93.8h2.4M987.4 97.8h2.4M936.8 99.8h2.4M983.3 99.8h2.4M997.5 99.8h2.4M975.2 101.8h2.4M983.3 101.8h2.4M932.8 103.8h2.4M981.3 103.8h2.4M946.9 105.8h2.4M955.0 105.8h2.4M973.2 105.8h2.4M993.4 105.8h2.4M951.0 107.8h2.4M989.4 107.8h2.4M967.2 109.8h2.4M991.4 109.8h2.4M936.8 111.8h2.4M955.0 111.8h2.4M977.3 111.8h2.4M981.3 111.8h2.4M932.8 113.8h2.4M942.9 113.8h2.4M961.1 113.8h2.4M985.4 113.8h2.4M932.8 115.9h2.4M959.1 115.9h2.4M993.4 115.9h2.4M934.8 117.9h2.4M981.3 117.9h2.4M957.1 119.9h4.4M963.1 119.9h2.4M953.0 123.9h2.4M963.1 123.9h2.4M940.9 125.9h2.4M977.3 125.9h2.4M932.8 127.9h2.4M946.9 127.9h4.4M953.0 127.9h2.4M940.9 129.9h2.4M987.4 129.9h2.4M991.4 129.9h2.4M940.9 131.9h2.4M955.0 131.9h2.4M959.1 131.9h2.4M965.1 131.9h2.4M975.2 131.9h2.4M989.4 131.9h2.4M993.4 133.9h2.4M934.8 135.9h2.4M938.9 135.9h2.4M971.2 135.9h2.4M975.2 135.9h2.4M932.8 137.9h2.4M944.9 137.9h2.4M936.8 139.9h2.4M967.2 139.9h2.4M983.3 139.9h2.4M938.9 141.9h2.4M961.1 141.9h2.4M983.3 141.9h2.4M989.4 141.9h2.4M995.5 141.9h2.4M971.2 143.9h2.4M953.0 145.9h2.4M961.1 145.9h2.4M973.2 145.9h2.4M946.9 147.9h2.4M951.0 147.9h4.4M944.9 150.0h2.4M961.1 150.0h2.4M965.1 150.0h2.4M936.8 152.0h2.4M961.1 152.0h2.4M991.4 152.0h2.4M932.8 154.0h2.4M975.2 154.0h2.4M993.4 154.0h2.4M942.9 156.0h4.4M963.1 156.0h2.4M973.2 156.0h2.4M983.3 156.0h2.4M989.4 156.0h2.4M932.8 158.0h67.1M932.8 160.0h67.1M932.8 162.0h67.1M932.8 164.0h67.1M932.8 166.0h67.1M932.8 168.0h67.1M932.8 170.0h67.1M932.8 172.0h67.1M932.8 174.0h67.1M932.8 176.0h67.1M932.8 178.0h67.1M932.8 180.0h67.1M932.8 182.0h67.1M932.8 184.1h67.1M932.8 186.1h67.1M932.8 188.1h67.1M932.8 190.1h67.1M932.8 192.1h67.1M932.8 194.1h67.1M932.8 196.1h67.1M932.8 198.1h67.1M932.8 200.1h67.1M932.8 202.1h67.1M932.8 204.1h67.1M932.8 206.1h67.1M932.8 208.1h67.1M932.8 210.1h67.1M932.8 212.1h67.1M932.8 214.1h67.1M932.8 216.1h67.1M932.8 218.2h67.1M932.8 220.2h67.1M932.8 222.2h67.1M932.8 224.2h67.1M932.8 226.2h67.1M932.8 228.2h67.1M932.8 230.2h67.1M932.8 232.2h67.1"/>
<path stroke="#101010" stroke-width="2.46" shape-rendering="crispEdges" d="M940.9 65.7h2.4M997.5 69.7h2.4M942.9 73.7h2.4M934.8 77.7h2.4M963.1 81.8h2.4M973.2 83.8h2.4M991.4 83.8h2.4M997.5 83.8h2.4M977.3 85.8h2.4M957.1 87.8h2.4M940.9 89.8h2.4M989.4 89.8h2.4M949.0 93.8h2.4M934.8 95.8h2.4M953.0 97.8h2.4M991.4 99.8h2.4M934.8 101.8h2.4M965.1 101.8h2.4M981.3 101.8h2.4M975.2 103.8h2.4M944.9 107.8h2.4M979.3 107.8h2.4M995.5 111.8h2.4M969.2 113.8h2.4M973.2 113.8h2.4M971.2 117.9h2.4M987.4 121.9h2.4M989.4 125.9h2.4M934.8 129.9h2.4M932.8 133.9h2.4M951.0 139.9h2.4M973.2 143.9h2.4M981.3 143.9h2.4M957.1 150.0h2.4"/>
<path stroke="#606060" stroke-width="2.46" shape-rendering="crispEdges" d="M942.9 65.7h2.4M951.0 65.7h2.4M991.4 65.7h2.4M953.0 67.7h2.4M959.1 67.7h2.4M969.2 67.7h2.4M991.4 67.7h2.4M951.0 69.7h2.4M961.1 69.7h2.4M991.4 69.7h2.4M977.3 71.7h2.4M940.9 73.7h2.4M953.0 73.7h2.4M959.1 73.7h2.4M983.3 73.7h2.4M949.0 75.7h2.4M983.3 75.7h2.4M991.4 75.7h2.4M936.8 77.7h2.4M942.9 77.7h2.4M949.0 77.7h2.4M965.1 77.7h4.4M938.9 79.7h2.4M949.0 79.7h2.4M963.1 83.8h4.4M969.2 83.8h4.4M995.5 85.8h2.4M934.8 87.8h2.4M942.9 87.8h4.4M959.1 87.8h2.4M934.8 89.8h2.4M953.0 89.8h2.4M959.1 89.8h2.4M965.1 89.8h2.4M932.8 91.8h2.4M940.9 91.8h2.4M983.3 91.8h2.4M991.4 91.8h2.4M997.5 91.8h2.4M936.8 93.8h2.4M973.2 93.8h2.4M995.5 93.8h2.4M983.3 95.8h2.4M993.4 95.8h4.4M936.8 97.8h2.4M957.1 97.8h2.4M946.9 99.8h2.4M965.1 99.8h2.4M993.4 101.8h2.4M951.0 105.8h2.4M965.1 105.8h2.4M969.2 105.8h2.4M985.4 105.8h2.4M989.4 105.8h2.4M932.8 107.8h2.4M955.0 107.8h2.4M959.1 107.8h2.4M957.1 109.8h2.4M975.2 109.8h2.4M940.9 111.8h2.4M946.9 111.8h2.4M973.2 111.8h2.4M938.9 113.8h2.4M936.8 115.9h2.4M971.2 115.9h2.4M975.2 115.9h2.4M949.0 117.9h2.4M938.9 119.9h2.4M955.0 119.9h2.4M969.2 119.9h2.4M979.3 121.9h2.4M993.4 121.9h2.4M938.9 123.9h2.4M959.1 123.9h4.4M957.1 125.9h2.4M997.5 125.9h2.4M981.3 127.9h4.4M997.5 127.9h2.4M938.9 129.9h2.4M963.1 131.9h2.4M971.2 131.9h4.4M983.3 131.9h2.4M940.9 133.9h2.4M995.5 133.9h2.4M936.8 135.9h2.4M951.0 137.9h2.4M955.0 137.9h2.4M991.4 137.9h2.4M955.0 139.9h2.4M959.1 139.9h2.4M944.9 141.9h2.4M959.1 141.9h2.4M963.1 141.9h2.4M971.2 141.9h2.4M946.9 143.9h2.4M932.8 145.9h4.4M940.9 150.0h2.4M983.3 150.0h2.4M991.4 150.0h2.4M957.1 152.0h2.4M936.8 154.0h2.4M961.1 154.0h2.4M991.4 154.0h2.4M949.0 156.0h4.4M995.5 156.0h2.4"/>
<path stroke="#ffffff" stroke-width="2.46" shape-rendering="crispEdges" d="M944.9 65.7h2.4M959.1 65.7h2.4M942.9 67.7h4.4M949.0 67.7h2.4M955.0 67.7h2.4M932.8 71.7h2.4M944.9 71.7h2.4M951.0 75.7h2.4M961.1 75.7h2.4M967.2 79.7h2.4M971.2 79.7h2.4M942.9 81.8h2.4M953.0 81.8h2.4M965.1 81.8h2.4M981.3 81.8h2.4M957.1 83.8h2.4M979.3 83.8h2.4M973.2 85.8h2.4M963.1 87.8h2.4M971.2 87.8h2.4M957.1 89.8h2.4M946.9 91.8h2.4M969.2 91.8h2.4M989.4 91.8h2.4M967.2 93.8h2.4M987.4 93.8h2.4M961.1 95.8h2.4M969.2 95.8h2.4M949.0 97.8h2.4M959.1 97.8h2.4M985.4 97.8h2.4M971.2 99.8h2.4M981.3 99.8h2.4M987.4 99.8h2.4M938.9 101.8h2.4M971.2 101.8h2.4M973.2 103.8h2.4M944.9 105.8h2.4M963.1 105.8h2.4M977.3 105.8h2.4M981.3 105.8h2.4M997.5 105.8h2.4M938.9 107.8h2.4M967.2 107.8h2.4M973.2 107.8h2.4M983.3 107.8h2.4M987.4 107.8h2.4M955.0 109.8h2.4M963.1 111.8h2.4M971.2 111.8h2.4M979.3 111.8h2.4M985.4 111.8h2.4M946.9 113.8h2.4M995.5 113.8h2.4M967.2 115.9h2.4M997.5 115.9h2.4M965.1 119.9h2.4M983.3 119.9h2.4M944.9 121.9h2.4M949.0 121.9h2.4M965.1 123.9h2.4M987.4 123.9h2.4M993.4 123.9h2.4M944.9 127.9h2.4M946.9 129.9h2.4M973.2 129.9h2.4M957.1 131.9h2.4M967.2 131.9h2.4M977.3 131.9h2.4M965.1 133.9h2.4M993.4 135.9h2.4M971.2 137.9h2.4M981.3 137.9h2.4M981.3 139.9h2.4M997.5 139.9h2.4M969.2 141.9h2.4M955.0 143.9h2.4M942.9 145.9h2.4M955.0 145.9h2.4M985.4 145.9h2.4M993.4 145.9h2.4M983.3 147.9h2.4M932.8 150.0h2.4M953.0 150.0h2.4M959.1 152.0h2.4M979.3 152.0h2.4M932.8 156.0h2.4M936.8 156.0h2.4M940.9 156.0h2.4M987.4 156.0h2.4M991.4 156.0h2.4"/>
<path stroke="#a0a0a0" stroke-width="2.46" shape-rendering="crispEdges" d="M955.0 65.7h4.4M946.9 67.7h2.4M985.4 67.7h2.4M989.4 67.7h2.4M993.4 67.7h2.4M944.9 69.7h2.4M965.1 71.7h2.4M975.2 71.7h2.4M981.3 71.7h2.4M971.2 75.7h2.4M985.4 75.7h2.4M932.8 77.7h2.4M957.1 77.7h2.4M971.2 77.7h2.4M973.2 79.7h4.4M995.5 79.7h2.4M951.0 81.8h2.4M973.2 81.8h2.4M983.3 81.8h2.4M993.4 81.8h2.4M936.8 83.8h2.4M940.9 83.8h2.4M967.2 83.8h2.4M995.5 83.8h2.4M957.1 85.8h2.4M965.1 85.8h2.4M955.0 87.8h2.4M987.4 87.8h2.4M991.4 89.8h2.4M959.1 91.8h2.4M993.4 91.8h4.4M949.0 95.8h2.4M985.4 95.8h2.4M975.2 97.8h2.4M975.2 99.8h2.4M936.8 101.8h2.4M967.2 101.8h2.4M965.1 103.8h2.4M989.4 103.8h2.4M940.9 105.8h2.4M967.2 105.8h2.4M975.2 107.8h2.4M997.5 107.8h2.4M944.9 109.8h2.4M977.3 109.8h4.4M997.5 111.8h2.4M953.0 113.8h2.4M983.3 113.8h2.4M991.4 113.8h4.4M951.0 115.9h2.4M965.1 115.9h2.4M981.3 115.9h2.4M940.9 117.9h2.4M946.9 117.9h2.4M977.3 119.9h4.4M940.9 123.9h2.4M981.3 123.9h2.4M991.4 123.9h2.4M934.8 125.9h2.4M993.4 125.9h4.4M989.4 127.9h2.4M975.2 129.9h2.4M944.9 131.9h2.4M961.1 131.9h2.4M936.8 133.9h2.4M942.9 133.9h2.4M951.0 133.9h2.4M932.8 135.9h2.4M949.0 137.9h2.4M957.1 137.9h2.4M979.3 137.9h2.4M969.2 139.9h2.4M991.4 139.9h2.4M995.5 139.9h2.4M957.1 141.9h2.4M967.2 141.9h2.4M981.3 141.9h2.4M991.4 141.9h2.4M932.8 143.9h4.4M942.9 143.9h2.4M949.0 143.9h2.4M961.1 143.9h2.4M938.9 145.9h2.4M959.1 145.9h2.4M965.1 145.9h2.4M977.3 147.9h2.4M981.3 147.9h2.4M985.4 147.9h2.4M997.5 147.9h2.4M995.5 150.0h2.4M971.2 152.0h2.4M985.4 152.0h2.4M934.8 154.0h2.4M969.2 154.0h2.4M979.3 154.0h2.4M989.4 154.0h2.4M997.5 154.0h2.4M934.8 156.0h2.4M955.0 156.0h2.4M959.1 156.0h2.4"/>
<path stroke="#505050" stroke-width="2.46" shape-rendering="crispEdges" d="M965.1 65.7h2.4M989.4 65.7h2.4M997.5 65.7h2.4M936.8 67.7h2.4M965.1 67.7h2.4M995.5 67.7h2.4M932.8 69.7h2.4M967.2 69.7h2.4M985.4 69.7h2.4M979.3 71.7h2.4M938.9 73.7h2.4M969.2 73.7h2.4M973.2 73.7h2.4M979.3 73.7h2.4M995.5 73.7h2.4M953.0 75.7h2.4M951.0 77.7h2.4M969.2 77.7h2.4M946.9 81.8h2.4M951.0 83.8h2.4M959.1 83.8h2.4M955.0 85.8h2.4M932.8 87.8h2.4M961.1 89.8h2.4M987.4 89.8h2.4M995.5 89.8h2.4M949.0 91.8h2.4M977.3 95.8h2.4M944.9 97.8h2.4M934.8 99.8h2.4M944.9 99.8h2.4M961.1 99.8h2.4M995.5 99.8h2.4M940.9 101.8h2.4M949.0 101.8h2.4M951.0 103.8h4.4M963.1 103.8h2.4M993.4 103.8h2.4M997.5 103.8h2.4M977.3 107.8h2.4M981.3 107.8h2.4M985.4 107.8h2.4M940.9 109.8h2.4M951.0 109.8h2.4M993.4 109.8h2.4M938.9 111.8h2.4M940.9 115.9h2.4M953.0 115.9h2.4M973.2 115.9h2.4M955.0 117.9h2.4M973.2 117.9h2.4M949.0 119.9h2.4M946.9 121.9h2.4M955.0 121.9h2.4M991.4 121.9h2.4M957.1 123.9h2.4M973.2 123.9h2.4M979.3 123.9h2.4M995.5 123.9h2.4M942.9 125.9h2.4M946.9 125.9h2.4M951.0 125.9h2.4M961.1 125.9h2.4M934.8 127.9h2.4M961.1 127.9h2.4M987.4 127.9h2.4M959.1 129.9h2.4M985.4 129.9h2.4M989.4 129.9h2.4M993.4 129.9h2.4M993.4 131.9h6.5M953.0 133.9h2.4M959.1 133.9h4.4M944.9 135.9h2.4M961.1 135.9h2.4M959.1 137.9h2.4M965.1 137.9h2.4M987.4 137.9h2.4M942.9 139.9h2.4M946.9 141.9h2.4M975.2 141.9h2.4M997.5 141.9h2.4M940.9 143.9h2.4M951.0 143.9h2.4M983.3 143.9h2.4M936.8 145.9h2.4M967.2 145.9h2.4M981.3 145.9h2.4M949.0 147.9h2.4M951.0 150.0h2.4M959.1 150.0h2.4M942.9 152.0h2.4M951.0 152.0h2.4M969.2 152.0h2.4M989.4 152.0h2.4M946.9 154.0h2.4M987.4 154.0h2.4"/>
<path stroke="#202020" stroke-width="2.46" shape-rendering="crispEdges" d="M967.2 65.7h2.4M971.2 67.7h2.4M997.5 67.7h2.4M957.1 69.7h2.4M967.2 71.7h2.4M989.4 73.7h2.4M981.3 77.7h2.4M991.4 77.7h4.4M951.0 79.7h2.4M932.8 81.8h2.4M989.4 81.8h2.4M977.3 83.8h2.4M981.3 83.8h2.4M983.3 85.8h4.4M936.8 87.8h2.4M983.3 87.8h2.4M975.2 89.8h2.4M983.3 89.8h2.4M979.3 93.8h2.4M991.4 93.8h2.4M987.4 95.8h2.4M997.5 95.8h2.4M940.9 97.8h2.4M938.9 99.8h2.4M963.1 101.8h2.4M957.1 103.8h2.4M967.2 103.8h2.4M953.0 107.8h2.4M934.8 109.8h2.4M951.0 111.8h2.4M959.1 111.8h2.4M965.1 111.8h2.4M938.9 115.9h2.4M989.4 115.9h4.4M951.0 117.9h2.4M979.3 117.9h2.4M938.9 121.9h2.4M963.1 121.9h2.4M955.0 123.9h2.4M989.4 123.9h2.4M938.9 127.9h2.4M965.1 127.9h4.4M942.9 131.9h2.4M985.4 131.9h2.4M955.0 133.9h2.4M963.1 133.9h2.4M973.2 133.9h2.4M997.5 133.9h2.4M955.0 135.9h2.4M981.3 135.9h2.4M997.5 135.9h2.4M983.3 137.9h2.4M940.9 139.9h2.4M967.2 143.9h2.4M967.2 150.0h2.4M989.4 150.0h2.4M942.9 154.0h2.4M977.3 154.0h2.4M957.1 156.0h2.4M997.5 156.0h2.4"/>
<path stroke="#000000" stroke-width="2.46" shape-rendering="crispEdges" d="M969.2 65.7h2.4M973.2 65.7h2.4M932.8 67.7h4.4M940.9 69.7h2.4M973.2 69.7h2.4M983.3 69.7h2.4M991.4 73.7h2.4M957.1 75.7h4.4M967.2 75.7h2.4M987.4 77.7h2.4M993.4 79.7h2.4M940.9 81.8h2.4M949.0 81.8h2.4M969.2 81.8h4.4M985.4 81.8h2.4M955.0 83.8h2.4M989.4 83.8h2.4M932.8 85.8h2.4M961.1 87.8h2.4M975.2 87.8h2.4M979.3 87.8h2.4M932.8 89.8h2.4M969.2 89.8h2.4M985.4 89.8h2.4M997.5 89.8h2.4M969.2 93.8h2.4M981.3 93.8h2.4M993.4 93.8h2.4M938.9 95.8h2.4M942.9 95.8h4.4M965.1 95.8h2.4M979.3 95.8h2.4M977.3 97.8h2.4M963.1 99.8h2.4M969.2 99.8h2.4M973.2 99.8h2.4M959.1 101.8h4.4M987.4 101.8h2.4M944.9 103.8h4.4M971.2 103.8h2.4M987.4 103.8h2.4M995.5 103.8h2.4M942.9 105.8h2.4M979.3 105.8h2.4M987.4 105.8h2.4M991.4 105.8h2.4M942.9 109.8h2.4M953.0 109.8h2.4M987.4 111.8h4.4M951.0 113.8h2.4M975.2 113.8h2.4M963.1 115.9h2.4M963.1 117.9h2.4M969.2 117.9h2.4M985.4 117.9h2.4M989.4 117.9h2.4M993.4 117.9h2.4M973.2 119.9h2.4M981.3 119.9h2.4M946.9 123.9h4.4M936.8 125.9h2.4M973.2 125.9h2.4M985.4 127.9h2.4M961.1 129.9h2.4M967.2 129.9h2.4M971.2 129.9h2.4M934.8 131.9h2.4M949.0 131.9h2.4M953.0 131.9h2.4M969.2 133.9h2.4M973.2 135.9h2.4M989.4 135.9h2.4M997.5 137.9h2.4M938.9 139.9h2.4M934.8 141.9h2.4M940.9 141.9h2.4M951.0 141.9h2.4M977.3 143.9h2.4M993.4 143.9h2.4M997.5 143.9h2.4M979.3 145.9h2.4M959.1 147.9h2.4M965.1 152.0h2.4M973.2 152.0h2.4M981.3 152.0h2.4M987.4 152.0h2.4"/>
<path stroke="#f0f0f0" stroke-width="2.46" shape-rendering="crispEdges" d="M975.2 65.7h2.4M963.1 67.7h2.4M979.3 69.7h2.4M983.3 71.7h2.4M951.0 73.7h2.4M971.2 73.7h2.4M997.5 73.7h2.4M963.1 75.7h2.4M957.1 79.7h4.4M969.2 79.7h2.4M987.4 83.8h2.4M991.4 85.8h2.4M971.2 97.8h2.4M957.1 105.8h4.4M965.1 107.8h2.4M961.1 109.8h2.4M985.4 109.8h2.4M955.0 113.8h2.4M961.1 115.9h2.4M969.2 115.9h2.4M936.8 117.9h2.4M975.2 119.9h2.4M967.2 121.9h2.4M932.8 125.9h2.4M938.9 125.9h2.4M995.5 127.9h2.4M963.1 129.9h2.4M977.3 129.9h4.4M987.4 133.9h2.4M951.0 135.9h2.4M979.3 135.9h2.4M953.0 137.9h2.4M973.2 137.9h2.4M977.3 137.9h2.4M985.4 137.9h2.4M932.8 141.9h2.4M973.2 141.9h2.4M987.4 141.9h2.4M940.9 147.9h2.4M963.1 147.9h2.4M936.8 150.0h2.4M977.3 152.0h2.4M993.4 152.0h2.4"/>
<path stroke="#c0c0c0" stroke-width="2.46" shape-rendering="crispEdges" d="M977.3 65.7h2.4M967.2 67.7h2.4M977.3 69.7h2.4M973.2 71.7h2.4M949.0 73.7h2.4M963.1 73.7h2.4M995.5 75.7h2.4M938.9 77.7h2.4M997.5 77.7h2.4M963.1 79.7h2.4M985.4 79.7h2.4M989.4 79.7h2.4M955.0 81.8h2.4M971.2 85.8h2.4M987.4 85.8h4.4M951.0 87.8h2.4M973.2 87.8h2.4M936.8 89.8h2.4M993.4 89.8h2.4M971.2 91.8h2.4M975.2 91.8h2.4M932.8 93.8h2.4M946.9 93.8h2.4M967.2 95.8h2.4M965.1 97.8h2.4M973.2 97.8h2.4M995.5 97.8h2.4M955.0 99.8h2.4M957.1 101.8h2.4M973.2 101.8h2.4M985.4 101.8h2.4M989.4 101.8h4.4M934.8 103.8h2.4M940.9 103.8h4.4M979.3 103.8h2.4M949.0 105.8h2.4M942.9 107.8h2.4M971.2 109.8h2.4M989.4 109.8h2.4M949.0 111.8h2.4M991.4 111.8h4.4M967.2 113.8h2.4M944.9 117.9h2.4M942.9 119.9h4.4M971.2 119.9h2.4M932.8 121.9h2.4M953.0 121.9h2.4M971.2 121.9h2.4M971.2 127.9h2.4M979.3 127.9h2.4M932.8 129.9h2.4M997.5 129.9h2.4M938.9 131.9h2.4M949.0 133.9h2.4M959.1 135.9h2.4M965.1 135.9h2.4M987.4 135.9h2.4M934.8 137.9h2.4M942.9 137.9h2.4M946.9 137.9h2.4M993.4 137.9h2.4M957.1 139.9h2.4M953.0 141.9h4.4M993.4 141.9h2.4M936.8 143.9h4.4M985.4 143.9h2.4M989.4 143.9h2.4M949.0 145.9h4.4M969.2 145.9h4.4M975.2 145.9h2.4M991.4 145.9h2.4M957.1 147.9h2.4M934.8 150.0h2.4M969.2 150.0h2.4M979.3 150.0h4.4M940.9 152.0h2.4M946.9 152.0h4.4M938.9 154.0h2.4M957.1 154.0h2.4M967.2 154.0h2.4M973.2 154.0h2.4M983.3 154.0h2.4M979.3 156.0h2.4M993.4 156.0h2.4"/>
<path stroke="#303030" stroke-width="2.46" shape-rendering="crispEdges" d="M981.3 65.7h2.4M957.1 67.7h2.4M977.3 67.7h2.4M953.0 69.7h2.4M981.3 69.7h2.4M934.8 71.7h2.4M993.4 71.7h2.4M997.5 71.7h2.4M977.3 73.7h2.4M981.3 75.7h2.4M985.4 77.7h2.4M995.5 77.7h2.4M946.9 79.7h2.4M983.3 79.7h2.4M934.8 81.8h2.4M997.5 81.8h2.4M983.3 83.8h2.4M934.8 85.8h2.4M946.9 89.8h2.4M934.8 91.8h2.4M955.0 91.8h2.4M967.2 91.8h2.4M955.0 95.8h2.4M959.1 95.8h2.4M955.0 97.8h2.4M989.4 97.8h2.4M993.4 99.8h2.4M951.0 101.8h4.4M946.9 107.8h2.4M932.8 109.8h2.4M995.5 109.8h2.4M975.2 111.8h2.4M985.4 115.9h4.4M987.4 117.9h2.4M951.0 119.9h2.4M997.5 119.9h2.4M997.5 121.9h2.4M944.9 123.9h2.4M955.0 125.9h2.4M957.1 127.9h4.4M991.4 127.9h2.4M936.8 129.9h2.4M971.2 133.9h2.4M979.3 133.9h2.4M942.9 135.9h2.4M953.0 135.9h2.4M985.4 135.9h2.4M991.4 135.9h2.4M932.8 139.9h2.4M979.3 141.9h2.4M959.1 143.9h2.4M957.1 145.9h2.4M977.3 145.9h2.4M936.8 147.9h2.4M965.1 147.9h2.4M987.4 147.9h2.4M932.8 152.0h2.4M938.9 152.0h2.4M944.9 152.0h2.4"/>
<path stroke="#d0d0d0" stroke-width="2.46" shape-rendering="crispEdges" d="M987.4 65.7h2.4M940.9 67.7h2.4M983.3 67.7h2.4M938.9 69.7h2.4M955.0 69.7h2.4M959.1 69.7h2.4M938.9 71.7h2.4M949.0 71.7h2.4M961.1 71.7h2.4M993.4 73.7h2.4M946.9 75.7h2.4M965.1 75.7h2.4M955.0 77.7h2.4M959.1 77.7h2.4M934.8 79.7h2.4M977.3 79.7h2.4M997.5 79.7h2.4M944.9 81.8h2.4M957.1 81.8h2.4M997.5 85.8h2.4M940.9 87.8h2.4M969.2 87.8h2.4M944.9 91.8h2.4M942.9 93.8h2.4M963.1 93.8h4.4M946.9 95.8h2.4M957.1 95.8h2.4M973.2 95.8h2.4M991.4 95.8h2.4M957.1 99.8h2.4M955.0 101.8h2.4M938.9 103.8h2.4M969.2 103.8h2.4M991.4 103.8h2.4M936.8 105.8h2.4M975.2 105.8h2.4M934.8 107.8h2.4M963.1 109.8h2.4M961.1 111.8h2.4M959.1 113.8h2.4M942.9 115.9h2.4M942.9 117.9h2.4M965.1 117.9h2.4M975.2 117.9h2.4M961.1 119.9h2.4M967.2 119.9h2.4M989.4 119.9h2.4M936.8 121.9h2.4M995.5 121.9h2.4M949.0 125.9h2.4M979.3 125.9h6.5M940.9 127.9h2.4M977.3 127.9h2.4M946.9 131.9h2.4M981.3 131.9h2.4M938.9 133.9h2.4M977.3 133.9h2.4M985.4 133.9h2.4M946.9 135.9h2.4M967.2 135.9h2.4M989.4 137.9h2.4M989.4 139.9h2.4M993.4 139.9h2.4M965.1 141.9h2.4M965.1 143.9h2.4M975.2 143.9h2.4M989.4 145.9h2.4M971.2 147.9h2.4M979.3 147.9h2.4M955.0 150.0h2.4M977.3 150.0h2.4M985.4 150.0h2.4M953.0 152.0h4.4M940.9 154.0h2.4M944.9 154.0h2.4M951.0 154.0h2.4M995.5 154.0h2.4M938.9 156.0h2.4M969.2 156.0h2.4M977.3 156.0h2.4"/>
<path stroke="#909090" stroke-width="2.46" shape-rendering="crispEdges" d="M973.2 67.7h4.4M987.4 67.7h2.4M934.8 69.7h2.4M949.0 69.7h2.4M971.2 69.7h2.4M989.4 69.7h2.4M995.5 69.7h2.4M936.8 71.7h2.4M951.0 71.7h4.4M963.1 71.7h2.4M995.5 71.7h2.4M957.1 73.7h2.4M965.1 73.7h2.4M975.2 73.7h2.4M981.3 73.7h2.4M955.0 75.7h2.4M969.2 75.7h2.4M975.2 75.7h2.4M997.5 75.7h2.4M961.1 77.7h2.4M989.4 77.7h2.4M944.9 79.7h2.4M965.1 79.7h2.4M979.3 79.7h4.4M987.4 79.7h2.4M961.1 81.8h2.4M975.2 81.8h2.4M953.0 83.8h2.4M985.4 83.8h2.4M993.4 83.8h2.4M951.0 85.8h2.4M949.0 87.8h2.4M993.4 87.8h2.4M938.9 89.8h2.4M944.9 89.8h2.4M967.2 89.8h2.4M971.2 89.8h2.4M936.8 91.8h4.4M963.1 91.8h2.4M973.2 91.8h2.4M951.0 93.8h2.4M959.1 93.8h2.4M971.2 93.8h2.4M932.8 95.8h2.4M940.9 95.8h2.4M951.0 95.8h4.4M963.1 95.8h2.4M932.8 97.8h2.4M961.1 97.8h2.4M979.3 97.8h2.4M993.4 97.8h2.4M942.9 99.8h2.4M951.0 99.8h2.4M959.1 99.8h2.4M932.8 101.8h2.4M969.2 101.8h2.4M995.5 101.8h2.4M932.8 105.8h4.4M983.3 105.8h2.4M969.2 107.8h2.4M938.9 109.8h2.4M965.1 109.8h2.4M969.2 109.8h2.4M983.3 109.8h2.4M987.4 109.8h2.4M944.9 111.8h2.4M953.0 111.8h2.4M967.2 111.8h2.4M983.3 111.8h2.4M934.8 113.8h2.4M957.1 113.8h2.4M981.3 113.8h2.4M989.4 113.8h2.4M957.1 115.9h2.4M977.3 115.9h4.4M995.5 115.9h2.4M940.9 119.9h2.4M934.8 121.9h2.4M942.9 121.9h2.4M969.2 121.9h2.4M973.2 121.9h6.5M983.3 121.9h4.4M989.4 121.9h2.4M942.9 123.9h2.4M969.2 123.9h2.4M983.3 123.9h2.4M963.1 125.9h2.4M967.2 125.9h2.4M951.0 127.9h2.4M949.0 129.9h4.4M955.0 129.9h2.4M979.3 131.9h2.4M944.9 133.9h2.4M967.2 133.9h2.4M975.2 133.9h2.4M989.4 133.9h2.4M957.1 135.9h2.4M977.3 135.9h2.4M967.2 137.9h2.4M946.9 139.9h2.4M953.0 139.9h2.4M965.1 139.9h2.4M987.4 139.9h2.4M936.8 141.9h2.4M949.0 141.9h2.4M953.0 143.9h2.4M957.1 143.9h2.4M963.1 143.9h2.4M995.5 143.9h2.4M995.5 145.9h2.4M942.9 147.9h2.4M961.1 147.9h2.4M969.2 147.9h2.4M949.0 150.0h2.4M975.2 150.0h2.4M987.4 150.0h2.4M963.1 152.0h2.4M997.5 152.0h2.4M953.0 154.0h2.4M953.0 156.0h2.4M965.1 156.0h2.4M975.2 156.0h2.4M985.4 156.0h2.4"/>
<path stroke="#404040" stroke-width="2.46" shape-rendering="crispEdges" d="M979.3 67.7h4.4M946.9 69.7h2.4M963.1 69.7h4.4M969.2 69.7h2.4M940.9 71.7h2.4M936.8 73.7h2.4M944.9 73.7h4.4M934.8 75.7h2.4M942.9 75.7h2.4M977.3 75.7h2.4M987.4 75.7h2.4M940.9 77.7h2.4M944.9 77.7h2.4M983.3 77.7h2.4M959.1 81.8h2.4M991.4 81.8h2.4M934.8 83.8h2.4M975.2 83.8h2.4M953.0 85.8h2.4M961.1 85.8h2.4M969.2 85.8h2.4M975.2 85.8h2.4M979.3 85.8h4.4M981.3 87.8h2.4M989.4 87.8h2.4M951.0 89.8h2.4M940.9 93.8h2.4M953.0 93.8h2.4M975.2 93.8h2.4M983.3 93.8h2.4M989.4 93.8h2.4M936.8 95.8h2.4M989.4 95.8h2.4M969.2 97.8h2.4M940.9 99.8h2.4M967.2 99.8h2.4M985.4 99.8h2.4M989.4 99.8h2.4M979.3 101.8h2.4M936.8 103.8h2.4M955.0 103.8h2.4M961.1 103.8h2.4M963.1 107.8h2.4M936.8 109.8h2.4M936.8 113.8h2.4M940.9 113.8h2.4M965.1 113.8h2.4M987.4 113.8h2.4M997.5 113.8h2.4M949.0 115.9h2.4M955.0 115.9h2.4M938.9 117.9h2.4M967.2 117.9h2.4M991.4 117.9h2.4M995.5 117.9h4.4M932.8 119.9h4.4M953.0 119.9h2.4M993.4 119.9h2.4M961.1 121.9h2.4M965.1 121.9h2.4M967.2 123.9h2.4M971.2 123.9h2.4M975.2 123.9h2.4M985.4 123.9h2.4M959.1 125.9h2.4M944.9 129.9h2.4M965.1 129.9h2.4M969.2 129.9h2.4M991.4 131.9h2.4M957.1 133.9h2.4M983.3 135.9h2.4M940.9 137.9h2.4M949.0 139.9h2.4M963.1 139.9h2.4M971.2 139.9h2.4M975.2 139.9h2.4M942.9 141.9h2.4M969.2 143.9h2.4M979.3 143.9h2.4M940.9 145.9h2.4M934.8 147.9h2.4M938.9 147.9h2.4M989.4 147.9h2.4M938.9 150.0h2.4M995.5 152.0h2.4M963.1 154.0h2.4M985.4 154.0h2.4"/>
<rect x="932.75" y="64.75" width="66.8" height="168.4" fill="none" stroke="#0000ff" stroke-width="2.5"/>
<line x1="1047.8" y1="204.3" x2="1299.3" y2="204.3" stroke="#444" stroke-width="1.1"/>
<path d="M1059.5 85.1V107.5M1064.2 84.5V106.9M1068.8 75.9V98.3M1073.5 83.9V106.3M1078.2 92.5V114.9M1082.8 99.4V121.8M1087.5 106.2V128.6M1092.1 114.8V137.2M1096.8 106.8V129.2M1101.5 80.5V102.9M1106.1 78.2V100.6M1110.8 85.1V107.5M1115.5 94.8V117.2M1120.1 106.8V129.2M1124.8 101.7V124.1M1129.4 103.9V126.3M1134.1 91.4V113.8M1138.8 79.9V102.3M1143.4 94.2V116.6M1148.1 97.1V119.5M1152.8 101.1V123.5M1157.4 112.5V134.9M1162.1 101.1V123.5M1166.7 79.4V101.8M1171.4 74.8V97.2M1176.1 77.0V99.4M1180.7 68.2V90.6M1185.4 86.5V108.9M1190.1 99.0V121.4M1194.7 100.5V122.9M1199.4 100.5V122.9M1204.1 99.0V121.4M1208.7 118.9V141.3M1213.4 149.0V171.4M1218.0 153.1V175.5M1222.7 132.1V154.5M1227.4 111.5V133.9M1232.0 111.5V133.9M1236.7 115.2V137.6M1241.4 111.5V133.9M1246.0 97.6V120.0M1250.7 87.3V109.7M1255.3 82.9V105.3M1260.0 85.5V107.9M1264.7 95.8V118.2M1269.3 111.5V133.9M1274.0 118.1V140.5M1278.7 124.7V147.1M1283.3 118.9V141.3M1288.0 110.1V132.5" stroke="#1f77b4" stroke-width="1.6" fill="none"/>
<path d="M1057.9 96.3a1.6 1.6 0 1 0 3.2 0a1.6 1.6 0 1 0 -3.2 0M1062.6 95.7a1.6 1.6 0 1 0 3.2 0a1.6 1.6 0 1 0 -3.2 0M1067.2 87.1a1.6 1.6 0 1 0 3.2 0a1.6 1.6 0 1 0 -3.2 0M1071.9 95.1a1.6 1.6 0 1 0 3.2 0a1.6 1.6 0 1 0 -3.2 0M1076.6 103.7a1.6 1.6 0 1 0 3.2 0a1.6 1.6 0 1 0 -3.2 0M1081.2 110.6a1.6 1.6 0 1 0 3.2 0a1.6 1.6 0 1 0 -3.2 0M1085.9 117.4a1.6 1.6 0 1 0 3.2 0a1.6 1.6 0 1 0 -3.2 0M1090.5 126.0a1.6 1.6 0 1 0 3.2 0a1.6 1.6 0 1 0 -3.2 0M1095.2 118.0a1.6 1.6 0 1 0 3.2 0a1.6 1.6 0 1 0 -3.2 0M1099.9 91.7a1.6 1.6 0 1 0 3.2 0a1.6 1.6 0 1 0 -3.2 0M1104.5 89.4a1.6 1.6 0 1 0 3.2 0a1.6 1.6 0 1 0 -3.2 0M1109.2 96.3a1.6 1.6 0 1 0 3.2 0a1.6 1.6 0 1 0 -3.2 0M1113.9 106.0a1.6 1.6 0 1 0 3.2 0a1.6 1.6 0 1 0 -3.2 0M1118.5 118.0a1.6 1.6 0 1 0 3.2 0a1.6 1.6 0 1 0 -3.2 0M1123.2 112.9a1.6 1.6 0 1 0 3.2 0a1.6 1.6 0 1 0 -3.2 0M1127.8 115.1a1.6 1.6 0 1 0 3.2 0a1.6 1.6 0 1 0 -3.2 0M1132.5 102.6a1.6 1.6 0 1 0 3.2 0a1.6 1.6 0 1 0 -3.2 0M1137.2 91.1a1.6 1.6 0 1 0 3.2 0a1.6 1.6 0 1 0 -3.2 0M1141.8 105.4a1.6 1.6 0 1 0 3.2 0a1.6 1.6 0 1 0 -3.2 0M1146.5 108.3a1.6 1.6 0 1 0 3.2 0a1.6 1.6 0 1 0 -3.2 0M1151.2 112.3a1.6 1.6 0 1 0 3.2 0a1.6 1.6 0 1 0 -3.2 0M1155.8 123.7a1.6 1.6 0 1 0 3.2 0a1.6 1.6 0 1 0 -3.2 0M1160.5 112.3a1.6 1.6 0 1 0 3.2 0a1.6 1.6 0 1 0 -3.2 0M1165.1 90.6a1.6 1.6 0 1 0 3.2 0a1.6 1.6 0 1 0 -3.2 0M1169.8 86.0a1.6 1.6 0 1 0 3.2 0a1.6 1.6 0 1 0 -3.2 0M1174.5 88.2a1.6 1.6 0 1 0 3.2 0a1.6 1.6 0 1 0 -3.2 0M1179.1 79.4a1.6 1.6 0 1 0 3.2 0a1.6 1.6 0 1 0 -3.2 0M1183.8 97.7a1.6 1.6 0 1 0 3.2 0a1.6 1.6 0 1 0 -3.2 0M1188.5 110.2a1.6 1.6 0 1 0 3.2 0a1.6 1.6 0 1 0 -3.2 0M1193.1 111.7a1.6 1.6 0 1 0 3.2 0a1.6 1.6 0 1 0 -3.2 0M1197.8 111.7a1.6 1.6 0 1 0 3.2 0a1.6 1.6 0 1 0 -3.2 0M1202.5 110.2a1.6 1.6 0 1 0 3.2 0a1.6 1.6 0 1 0 -3.2 0M1207.1 130.1a1.6 1.6 0 1 0 3.2 0a1.6 1.6 0 1 0 -3.2 0M1211.8 160.2a1.6 1.6 0 1 0 3.2 0a1.6 1.6 0 1 0 -3.2 0M1216.4 164.3a1.6 1.6 0 1 0 3.2 0a1.6 1.6 0 1 0 -3.2 0M1221.1 143.3a1.6 1.6 0 1 0 3.2 0a1.6 1.6 0 1 0 -3.2 0M1225.8 122.7a1.6 1.6 0 1 0 3.2 0a1.6 1.6 0 1 0 -3.2 0M1230.4 122.7a1.6 1.6 0 1 0 3.2 0a1.6 1.6 0 1 0 -3.2 0M1235.1 126.4a1.6 1.6 0 1 0 3.2 0a1.6 1.6 0 1 0 -3.2 0M1239.8 122.7a1.6 1.6 0 1 0 3.2 0a1.6 1.6 0 1 0 -3.2 0M1244.4 108.8a1.6 1.6 0 1 0 3.2 0a1.6 1.6 0 1 0 -3.2 0M1249.1 98.5a1.6 1.6 0 1 0 3.2 0a1.6 1.6 0 1 0 -3.2 0M1253.7 94.1a1.6 1.6 0 1 0 3.2 0a1.6 1.6 0 1 0 -3.2 0M1258.4 96.7a1.6 1.6 0 1 0 3.2 0a1.6 1.6 0 1 0 -3.2 0M1263.1 107.0a1.6 1.6 0 1 0 3.2 0a1.6 1.6 0 1 0 -3.2 0M1267.7 122.7a1.6 1.6 0 1 0 3.2 0a1.6 1.6 0 1 0 -3.2 0M1272.4 129.3a1.6 1.6 0 1 0 3.2 0a1.6 1.6 0 1 0 -3.2 0M1277.1 135.9a1.6 1.6 0 1 0 3.2 0a1.6 1.6 0 1 0 -3.2 0M1281.7 130.1a1.6 1.6 0 1 0 3.2 0a1.6 1.6 0 1 0 -3.2 0M1286.4 121.3a1.6 1.6 0 1 0 3.2 0a1.6 1.6 0 1 0 -3.2 0" fill="#1f77b4"/>
<polyline points="1068.6,122.9 1069.7,122.9 1070.9,122.9 1072.1,122.9 1073.3,122.9 1074.4,122.9 1075.6,122.9 1076.8,122.9 1077.9,122.9 1079.1,122.9 1080.3,122.9 1081.4,122.9 1082.6,122.9 1083.8,122.9 1084.9,122.9 1086.1,122.9 1087.3,122.9 1088.5,122.9 1089.6,122.9 1090.8,122.9 1092.0,122.9 1093.1,122.9 1094.3,122.9 1095.5,122.9 1096.6,122.9 1097.8,122.9 1099.0,122.9 1100.1,122.9 1101.3,122.9 1102.5,122.9 1103.7,122.9 1104.8,122.9 1106.0,122.9 1107.2,122.9 1108.3,122.9 1109.5,122.9 1110.7,122.9 1111.8,122.9 1113.0,122.9 1114.2,122.9 1115.3,122.9 1116.5,122.9 1117.7,122.9 1118.9,122.9 1120.0,122.9 1121.2,122.9 1122.4,122.9 1123.5,122.9 1124.7,122.9 1125.9,122.9 1127.0,122.9 1128.2,122.9 1129.4,122.9 1130.5,122.9 1131.7,122.9 1132.9,122.9 1134.1,122.9 1135.2,122.9 1136.4,122.9 1137.6,122.9 1138.7,122.9 1139.9,122.9 1141.1,122.9 1142.2,122.9 1143.4,122.8 1144.6,122.8 1145.7,122.8 1146.9,122.8 1148.1,122.7 1149.3,122.7 1150.4,122.5 1151.6,122.4 1152.8,122.2 1153.9,121.8 1155.1,121.4 1156.3,120.8 1157.4,120.0 1158.6,119.0 1159.8,117.8 1160.9,116.2 1162.1,114.4 1163.3,112.3 1164.5,110.0 1165.6,107.4 1166.8,104.6 1168.0,101.8 1169.1,98.9 1170.3,96.3 1171.5,93.9 1172.6,91.8 1173.8,90.3 1175.0,89.3 1176.1,89.0 1177.3,89.3 1178.5,90.3 1179.7,91.8 1180.8,93.9 1182.0,96.3 1183.2,98.9 1184.3,101.8 1185.5,104.6 1186.7,107.4 1187.8,110.0 1189.0,112.3 1190.2,114.4 1191.3,116.2 1192.5,117.8 1193.7,119.0 1194.9,120.0 1196.0,120.8 1197.2,121.4 1198.4,121.8 1199.5,122.2 1200.7,122.4 1201.9,122.5 1203.0,122.7 1204.2,122.7 1205.4,122.8 1206.5,122.8 1207.7,122.8 1208.9,122.8 1210.1,122.9 1211.2,122.9 1212.4,122.9 1213.6,122.9 1214.7,122.9 1215.9,122.9 1217.1,122.9 1218.2,122.9 1219.4,122.9 1220.6,122.9 1221.7,122.9 1222.9,122.9 1224.1,122.9 1225.3,122.9 1226.4,122.9 1227.6,122.9 1228.8,122.9 1229.9,122.9 1231.1,122.9 1232.3,122.9 1233.4,122.9 1234.6,122.9 1235.8,122.9 1236.9,122.9 1238.1,122.9 1239.3,122.9 1240.5,122.9 1241.6,122.9 1242.8,122.9 1244.0,122.9 1245.1,122.9 1246.3,122.9 1247.5,122.9 1248.6,122.9 1249.8,122.9 1251.0,122.9 1252.1,122.9 1253.3,122.9 1254.5,122.9 1255.7,122.9 1256.8,122.9 1258.0,122.9 1259.2,122.9 1260.3,122.9 1261.5,122.9 1262.7,122.9 1263.8,122.9 1265.0,122.9 1266.2,122.9 1267.3,122.9 1268.5,122.9 1269.7,122.9 1270.9,122.9 1272.0,122.9 1273.2,122.9 1274.4,122.9 1275.5,122.9 1276.7,122.9 1277.9,122.9 1279.0,122.9 1280.2,122.9 1281.4,122.9 1282.5,122.9 1283.7,122.9 1284.9,122.9 1286.1,122.9 1287.2,122.9 1288.4,122.9" fill="none" stroke="#333" stroke-width="1.9"/>
<rect x="1047.8" y="60.5" width="251.5" height="150.6" fill="none" stroke="#333" stroke-width="1"/>
<line x1="1044.3" y1="204.3" x2="1047.8" y2="204.3" stroke="#333" stroke-width="1"/>
<text transform="translate(1042.30,207.70) scale(1.144,1.06)" font-family="Liberation Sans" font-size="9.3" fill="#222" stroke="#222" stroke-width="0.15" text-anchor="end" style="white-space:pre" >0</text>
<line x1="1044.3" y1="173.8" x2="1047.8" y2="173.8" stroke="#333" stroke-width="1"/>
<text transform="translate(1042.30,177.20) scale(1.144,1.06)" font-family="Liberation Sans" font-size="9.3" fill="#222" stroke="#222" stroke-width="0.15" text-anchor="end" style="white-space:pre" >2</text>
<line x1="1044.3" y1="143.3" x2="1047.8" y2="143.3" stroke="#333" stroke-width="1"/>
<text transform="translate(1042.30,146.70) scale(1.144,1.06)" font-family="Liberation Sans" font-size="9.3" fill="#222" stroke="#222" stroke-width="0.15" text-anchor="end" style="white-space:pre" >4</text>
<line x1="1044.3" y1="112.8" x2="1047.8" y2="112.8" stroke="#333" stroke-width="1"/>
<text transform="translate(1042.30,116.20) scale(1.144,1.06)" font-family="Liberation Sans" font-size="9.3" fill="#222" stroke="#222" stroke-width="0.15" text-anchor="end" style="white-space:pre" >6</text>
<line x1="1044.3" y1="82.3" x2="1047.8" y2="82.3" stroke="#333" stroke-width="1"/>
<text transform="translate(1042.30,85.70) scale(1.144,1.06)" font-family="Liberation Sans" font-size="9.3" fill="#222" stroke="#222" stroke-width="0.15" text-anchor="end" style="white-space:pre" >8</text>
<line x1="1063.9" y1="211.1" x2="1063.9" y2="214.6" stroke="#333" stroke-width="1"/>
<text transform="translate(1063.90,224.40) scale(1.144,1.06)" font-family="Liberation Sans" font-size="9.3" fill="#222" stroke="#222" stroke-width="0.15" text-anchor="middle" style="white-space:pre" >4160</text>
<line x1="1110.7" y1="211.1" x2="1110.7" y2="214.6" stroke="#333" stroke-width="1"/>
<text transform="translate(1110.67,224.40) scale(1.144,1.06)" font-family="Liberation Sans" font-size="9.3" fill="#222" stroke="#222" stroke-width="0.15" text-anchor="middle" style="white-space:pre" >4180</text>
<line x1="1157.4" y1="211.1" x2="1157.4" y2="214.6" stroke="#333" stroke-width="1"/>
<text transform="translate(1157.44,224.40) scale(1.144,1.06)" font-family="Liberation Sans" font-size="9.3" fill="#222" stroke="#222" stroke-width="0.15" text-anchor="middle" style="white-space:pre" >4200</text>
<line x1="1204.2" y1="211.1" x2="1204.2" y2="214.6" stroke="#333" stroke-width="1"/>
<text transform="translate(1204.21,224.40) scale(1.144,1.06)" font-family="Liberation Sans" font-size="9.3" fill="#222" stroke="#222" stroke-width="0.15" text-anchor="middle" style="white-space:pre" >4220</text>
<line x1="1251.0" y1="211.1" x2="1251.0" y2="214.6" stroke="#333" stroke-width="1"/>
<text transform="translate(1250.98,224.40) scale(1.144,1.06)" font-family="Liberation Sans" font-size="9.3" fill="#222" stroke="#222" stroke-width="0.15" text-anchor="middle" style="white-space:pre" >4240</text>
<line x1="1297.8" y1="211.1" x2="1297.8" y2="214.6" stroke="#333" stroke-width="1"/>
<text transform="translate(1297.75,224.40) scale(1.144,1.06)" font-family="Liberation Sans" font-size="9.3" fill="#222" stroke="#222" stroke-width="0.15" text-anchor="middle" style="white-space:pre" >4260</text>
<text transform="translate(1050.00,71.30) scale(1.144,1.06)" font-family="Liberation Sans" font-size="9.3" fill="#222" stroke="#222" stroke-width="0.15" text-anchor="start" style="white-space:pre" >e</text>
<text transform="translate(1055.80,66.60) scale(1.144,1.06)" font-family="Liberation Sans" font-size="6.5" fill="#222" stroke="#222" stroke-width="0.15" text-anchor="start" style="white-space:pre" >−17</text>
<text transform="translate(1067.20,71.30) scale(1.144,1.06)" font-family="Liberation Sans" font-size="9.3" fill="#222" stroke="#222" stroke-width="0.15" text-anchor="start" style="white-space:pre" >x2<tspan font-style="italic">Å</tspan></text>
<defs><clipPath id="specclip"><rect x="101.7" y="348.4" width="1197.9" height="83.9"/></clipPath></defs>
<g clip-path="url(#specclip)">
<polygon points="100.0,401.6 102.0,402.0 104.0,402.5 106.0,403.2 108.0,403.7 110.0,404.1 112.0,404.3 114.0,404.5 116.0,404.7 118.0,404.9 120.0,405.0 122.0,405.2 124.0,405.4 126.0,405.7 128.0,406.0 130.0,406.2 132.0,406.5 134.0,406.8 136.0,407.3 138.0,407.8 140.0,408.4 142.0,408.9 144.0,409.3 146.0,409.8 148.0,410.1 150.0,410.4 152.0,410.6 154.0,410.7 156.0,410.7 158.0,410.5 160.0,410.2 162.0,410.1 164.0,410.0 166.0,409.9 168.0,409.7 170.0,409.7 172.0,409.6 174.0,409.7 176.0,409.8 178.0,409.9 180.0,409.9 182.0,410.0 184.0,410.2 186.0,410.5 188.0,410.7 190.0,410.8 192.0,410.7 194.0,410.5 196.0,410.3 198.0,410.2 200.0,410.1 202.0,410.1 204.0,410.3 206.0,410.6 208.0,411.0 210.0,411.4 212.0,411.7 214.0,412.0 216.0,412.2 218.0,412.3 220.0,412.4 222.0,412.6 224.0,412.7 226.0,412.9 228.0,412.7 230.0,412.6 232.0,412.3 234.0,412.1 236.0,411.8 238.0,411.5 240.0,411.3 242.0,411.0 244.0,410.9 246.0,411.0 248.0,411.3 250.0,411.6 252.0,411.9 254.0,412.3 256.0,412.6 258.0,412.9 260.0,413.2 262.0,413.4 264.0,413.6 266.0,413.8 268.0,414.1 270.0,414.4 272.0,414.5 274.0,414.4 276.0,414.2 278.0,414.1 280.0,414.0 282.0,414.1 284.0,414.1 286.0,414.1 288.0,414.0 290.0,414.1 292.0,414.2 294.0,414.3 296.0,414.3 298.0,414.4 300.0,414.4 302.0,414.4 304.0,414.5 306.0,414.6 308.0,414.7 310.0,414.7 312.0,414.7 314.0,414.7 316.0,414.6 318.0,414.5 320.0,414.4 322.0,414.4 324.0,414.4 326.0,414.5 328.0,414.7 330.0,414.7 332.0,414.7 334.0,414.7 336.0,414.9 338.0,415.0 340.0,415.2 342.0,415.3 344.0,415.3 346.0,415.2 348.0,415.1 350.0,415.1 352.0,415.1 354.0,415.2 356.0,415.4 358.0,415.6 360.0,415.7 362.0,415.7 364.0,415.6 366.0,415.4 368.0,415.2 370.0,415.0 372.0,415.0 374.0,415.0 376.0,415.2 378.0,415.4 380.0,415.6 382.0,415.8 384.0,415.9 386.0,415.9 388.0,415.9 390.0,415.8 392.0,415.8 394.0,415.8 396.0,415.8 398.0,415.7 400.0,415.6 402.0,415.5 404.0,415.5 406.0,415.4 408.0,415.3 410.0,415.2 412.0,415.0 414.0,415.0 416.0,415.1 418.0,415.2 420.0,415.4 422.0,415.5 424.0,415.5 426.0,415.6 428.0,415.7 430.0,415.9 432.0,416.0 434.0,416.0 436.0,416.0 438.0,415.9 440.0,415.8 442.0,415.7 444.0,415.7 446.0,415.7 448.0,415.8 450.0,415.9 452.0,415.9 454.0,416.0 456.0,416.0 458.0,416.0 460.0,416.0 462.0,416.0 464.0,416.1 466.0,416.1 468.0,416.2 470.0,416.2 472.0,416.3 474.0,416.3 476.0,416.3 478.0,416.3 480.0,416.3 482.0,416.3 484.0,416.2 486.0,416.2 488.0,416.3 490.0,416.3 492.0,416.3 494.0,416.3 496.0,416.3 498.0,416.2 500.0,416.2 502.0,416.2 504.0,416.1 506.0,416.0 508.0,416.0 510.0,416.0 512.0,416.0 514.0,416.0 516.0,416.1 518.0,416.2 520.0,416.2 522.0,416.3 524.0,416.3 526.0,416.3 528.0,416.2 530.0,416.1 532.0,416.1 534.0,416.0 536.0,416.1 538.0,416.2 540.0,416.4 542.0,416.5 544.0,416.6 546.0,416.7 548.0,416.8 550.0,416.8 552.0,416.9 554.0,416.9 556.0,416.7 558.0,416.6 560.0,416.3 562.0,416.2 564.0,416.2 566.0,416.3 568.0,416.4 570.0,416.5 572.0,416.5 574.0,416.5 576.0,416.5 578.0,416.5 580.0,416.5 582.0,416.6 584.0,416.7 586.0,416.6 588.0,416.5 590.0,416.4 592.0,416.2 594.0,416.1 596.0,416.1 598.0,416.1 600.0,416.1 602.0,416.1 604.0,416.1 606.0,416.1 608.0,416.1 610.0,416.1 612.0,416.1 614.0,416.2 616.0,416.2 618.0,416.3 620.0,416.3 622.0,416.4 624.0,416.4 626.0,416.5 628.0,416.5 630.0,416.6 632.0,416.6 634.0,416.6 636.0,416.6 638.0,416.7 640.0,416.8 642.0,416.8 644.0,416.9 646.0,416.8 648.0,416.7 650.0,416.6 652.0,416.5 654.0,416.5 656.0,416.4 658.0,416.4 660.0,416.4 662.0,416.4 664.0,416.5 666.0,416.6 668.0,416.6 670.0,416.6 672.0,416.5 674.0,416.5 676.0,416.5 678.0,416.6 680.0,416.6 682.0,416.7 684.0,416.7 686.0,416.7 688.0,416.8 690.0,416.8 692.0,416.8 694.0,416.9 696.0,416.8 698.0,416.8 700.0,416.7 702.0,416.5 704.0,416.4 706.0,416.4 708.0,416.4 710.0,416.6 712.0,416.7 714.0,416.8 716.0,416.9 718.0,416.8 720.0,416.7 722.0,416.6 724.0,416.5 726.0,416.4 728.0,416.4 730.0,416.4 732.0,416.5 734.0,416.6 736.0,416.6 738.0,416.6 740.0,416.6 742.0,416.5 744.0,416.5 746.0,416.4 748.0,416.4 750.0,416.5 752.0,416.7 754.0,416.8 756.0,416.7 758.0,416.6 760.0,416.4 762.0,416.3 764.0,416.2 766.0,416.3 768.0,416.3 770.0,416.4 772.0,416.4 774.0,416.4 776.0,416.4 778.0,416.4 780.0,416.5 782.0,416.6 784.0,416.7 786.0,416.9 788.0,417.0 790.0,417.0 792.0,416.9 794.0,416.8 796.0,416.6 798.0,416.6 800.0,416.5 802.0,416.6 804.0,416.7 806.0,416.7 808.0,416.6 810.0,416.5 812.0,416.3 814.0,416.3 816.0,416.4 818.0,416.6 820.0,416.7 822.0,416.7 824.0,416.7 826.0,416.6 828.0,416.7 830.0,416.7 832.0,416.7 834.0,416.7 836.0,416.7 838.0,416.6 840.0,416.6 842.0,416.6 844.0,416.5 846.0,416.5 848.0,416.5 850.0,416.6 852.0,416.6 854.0,416.5 856.0,416.5 858.0,416.5 860.0,416.5 862.0,416.6 864.0,416.7 866.0,416.7 868.0,416.7 870.0,416.7 872.0,416.8 874.0,416.8 876.0,416.8 878.0,416.8 880.0,416.8 882.0,416.8 884.0,416.8 886.0,416.7 888.0,416.7 890.0,416.6 892.0,416.5 894.0,416.4 896.0,416.4 898.0,416.5 900.0,416.6 902.0,416.7 904.0,416.7 906.0,416.8 908.0,416.8 910.0,416.7 912.0,416.7 914.0,416.6 916.0,416.5 918.0,416.5 920.0,416.4 922.0,416.3 924.0,416.3 926.0,416.4 928.0,416.5 930.0,416.6 932.0,416.7 934.0,416.7 936.0,416.8 938.0,416.9 940.0,417.0 942.0,417.0 944.0,417.1 946.0,417.1 948.0,417.0 950.0,417.0 952.0,416.9 954.0,416.8 956.0,416.6 958.0,416.6 960.0,416.6 962.0,416.6 964.0,416.7 966.0,416.8 968.0,416.8 970.0,416.8 972.0,416.8 974.0,416.8 976.0,416.8 978.0,416.9 980.0,417.0 982.0,416.9 984.0,416.9 986.0,416.9 988.0,416.8 990.0,416.7 992.0,416.6 994.0,416.6 996.0,416.6 998.0,416.7 1000.0,416.7 1002.0,416.6 1004.0,416.6 1006.0,416.5 1008.0,416.5 1010.0,416.5 1012.0,416.6 1014.0,416.8 1016.0,416.8 1018.0,416.8 1020.0,416.7 1022.0,416.6 1024.0,416.6 1026.0,416.7 1028.0,416.8 1030.0,416.8 1032.0,416.7 1034.0,416.7 1036.0,416.6 1038.0,416.6 1040.0,416.6 1042.0,416.6 1044.0,416.6 1046.0,416.5 1048.0,416.6 1050.0,416.6 1052.0,416.7 1054.0,416.7 1056.0,416.8 1058.0,416.8 1060.0,416.8 1062.0,416.9 1064.0,417.0 1066.0,417.0 1068.0,417.0 1070.0,417.0 1072.0,416.9 1074.0,416.9 1076.0,416.8 1078.0,416.8 1080.0,416.8 1082.0,416.8 1084.0,416.7 1086.0,416.7 1088.0,416.7 1090.0,416.7 1092.0,416.7 1094.0,416.7 1096.0,416.7 1098.0,416.8 1100.0,416.9 1102.0,417.0 1104.0,417.0 1106.0,416.9 1108.0,416.9 1110.0,416.8 1112.0,416.7 1114.0,416.6 1116.0,416.6 1118.0,416.5 1120.0,416.6 1122.0,416.6 1124.0,416.6 1126.0,416.7 1128.0,416.7 1130.0,416.7 1132.0,416.7 1134.0,416.8 1136.0,416.8 1138.0,416.8 1140.0,416.8 1142.0,416.7 1144.0,416.6 1146.0,416.6 1148.0,416.7 1150.0,416.8 1152.0,416.9 1154.0,416.9 1156.0,416.9 1158.0,416.8 1160.0,416.8 1162.0,416.8 1164.0,416.8 1166.0,416.9 1168.0,416.9 1170.0,416.9 1172.0,416.8 1174.0,416.7 1176.0,416.7 1178.0,416.8 1180.0,416.9 1182.0,416.9 1184.0,417.0 1186.0,416.9 1188.0,416.8 1190.0,416.6 1192.0,416.5 1194.0,416.5 1196.0,416.5 1198.0,416.6 1200.0,416.6 1202.0,416.6 1204.0,416.6 1206.0,416.7 1208.0,416.7 1210.0,416.7 1212.0,416.7 1214.0,416.7 1216.0,416.7 1218.0,416.8 1220.0,416.9 1222.0,417.0 1224.0,417.1 1226.0,417.2 1228.0,417.2 1230.0,417.2 1232.0,417.2 1234.0,417.2 1236.0,417.0 1238.0,416.9 1240.0,416.7 1242.0,416.6 1244.0,416.6 1246.0,416.6 1248.0,416.7 1250.0,416.9 1252.0,416.9 1254.0,416.9 1256.0,416.9 1258.0,416.8 1260.0,416.8 1262.0,416.8 1264.0,416.8 1266.0,416.7 1268.0,416.7 1270.0,416.8 1272.0,416.9 1274.0,417.0 1276.0,417.1 1278.0,417.2 1280.0,417.2 1282.0,417.5 1284.0,417.6 1286.0,417.7 1288.0,417.9 1290.0,418.1 1292.0,418.5 1294.0,418.9 1296.0,419.3 1298.0,419.7 1300.0,420.1 1300.0,422.3 1298.0,422.7 1296.0,423.1 1294.0,423.5 1292.0,423.9 1290.0,424.3 1288.0,424.5 1286.0,424.7 1284.0,424.8 1282.0,424.9 1280.0,425.2 1278.0,425.2 1276.0,425.3 1274.0,425.4 1272.0,425.5 1270.0,425.6 1268.0,425.7 1266.0,425.7 1264.0,425.6 1262.0,425.6 1260.0,425.6 1258.0,425.6 1256.0,425.5 1254.0,425.5 1252.0,425.5 1250.0,425.5 1248.0,425.7 1246.0,425.8 1244.0,425.8 1242.0,425.8 1240.0,425.7 1238.0,425.5 1236.0,425.4 1234.0,425.2 1232.0,425.2 1230.0,425.2 1228.0,425.2 1226.0,425.2 1224.0,425.3 1222.0,425.4 1220.0,425.5 1218.0,425.6 1216.0,425.7 1214.0,425.7 1212.0,425.7 1210.0,425.7 1208.0,425.7 1206.0,425.7 1204.0,425.8 1202.0,425.8 1200.0,425.8 1198.0,425.8 1196.0,425.9 1194.0,425.9 1192.0,425.9 1190.0,425.8 1188.0,425.6 1186.0,425.5 1184.0,425.4 1182.0,425.5 1180.0,425.5 1178.0,425.6 1176.0,425.7 1174.0,425.7 1172.0,425.6 1170.0,425.5 1168.0,425.5 1166.0,425.5 1164.0,425.6 1162.0,425.6 1160.0,425.6 1158.0,425.6 1156.0,425.5 1154.0,425.5 1152.0,425.5 1150.0,425.6 1148.0,425.7 1146.0,425.8 1144.0,425.8 1142.0,425.7 1140.0,425.6 1138.0,425.6 1136.0,425.6 1134.0,425.6 1132.0,425.7 1130.0,425.7 1128.0,425.7 1126.0,425.7 1124.0,425.8 1122.0,425.8 1120.0,425.8 1118.0,425.9 1116.0,425.8 1114.0,425.8 1112.0,425.7 1110.0,425.6 1108.0,425.5 1106.0,425.5 1104.0,425.4 1102.0,425.4 1100.0,425.5 1098.0,425.6 1096.0,425.7 1094.0,425.7 1092.0,425.7 1090.0,425.7 1088.0,425.7 1086.0,425.7 1084.0,425.7 1082.0,425.6 1080.0,425.6 1078.0,425.6 1076.0,425.6 1074.0,425.5 1072.0,425.5 1070.0,425.4 1068.0,425.4 1066.0,425.4 1064.0,425.4 1062.0,425.5 1060.0,425.6 1058.0,425.6 1056.0,425.6 1054.0,425.7 1052.0,425.7 1050.0,425.8 1048.0,425.8 1046.0,425.9 1044.0,425.8 1042.0,425.8 1040.0,425.8 1038.0,425.8 1036.0,425.8 1034.0,425.7 1032.0,425.7 1030.0,425.6 1028.0,425.6 1026.0,425.7 1024.0,425.8 1022.0,425.8 1020.0,425.7 1018.0,425.6 1016.0,425.6 1014.0,425.6 1012.0,425.8 1010.0,425.9 1008.0,425.9 1006.0,425.9 1004.0,425.8 1002.0,425.8 1000.0,425.7 998.0,425.7 996.0,425.8 994.0,425.8 992.0,425.8 990.0,425.7 988.0,425.6 986.0,425.5 984.0,425.5 982.0,425.5 980.0,425.4 978.0,425.5 976.0,425.6 974.0,425.6 972.0,425.6 970.0,425.6 968.0,425.6 966.0,425.6 964.0,425.7 962.0,425.8 960.0,425.8 958.0,425.8 956.0,425.8 954.0,425.6 952.0,425.5 950.0,425.4 948.0,425.4 946.0,425.3 944.0,425.3 942.0,425.4 940.0,425.4 938.0,425.5 936.0,425.6 934.0,425.7 932.0,425.7 930.0,425.8 928.0,425.9 926.0,426.0 924.0,426.1 922.0,426.1 920.0,426.0 918.0,425.9 916.0,425.9 914.0,425.8 912.0,425.7 910.0,425.7 908.0,425.6 906.0,425.6 904.0,425.7 902.0,425.7 900.0,425.8 898.0,425.9 896.0,426.0 894.0,426.0 892.0,425.9 890.0,425.8 888.0,425.7 886.0,425.7 884.0,425.6 882.0,425.6 880.0,425.6 878.0,425.6 876.0,425.6 874.0,425.6 872.0,425.6 870.0,425.7 868.0,425.7 866.0,425.7 864.0,425.7 862.0,425.8 860.0,425.9 858.0,425.9 856.0,425.9 854.0,425.9 852.0,425.8 850.0,425.8 848.0,425.9 846.0,425.9 844.0,425.9 842.0,425.8 840.0,425.8 838.0,425.8 836.0,425.7 834.0,425.7 832.0,425.7 830.0,425.7 828.0,425.7 826.0,425.8 824.0,425.7 822.0,425.7 820.0,425.7 818.0,425.8 816.0,426.0 814.0,426.1 812.0,426.1 810.0,425.9 808.0,425.8 806.0,425.7 804.0,425.7 802.0,425.8 800.0,425.9 798.0,425.8 796.0,425.8 794.0,425.6 792.0,425.5 790.0,425.4 788.0,425.4 786.0,425.5 784.0,425.7 782.0,425.8 780.0,425.9 778.0,426.0 776.0,426.0 774.0,426.0 772.0,426.0 770.0,426.0 768.0,426.1 766.0,426.1 764.0,426.2 762.0,426.1 760.0,426.0 758.0,425.8 756.0,425.7 754.0,425.6 752.0,425.7 750.0,425.9 748.0,426.0 746.0,426.0 744.0,425.9 742.0,425.9 740.0,425.8 738.0,425.8 736.0,425.8 734.0,425.8 732.0,425.9 730.0,426.0 728.0,426.0 726.0,426.0 724.0,425.9 722.0,425.8 720.0,425.7 718.0,425.6 716.0,425.5 714.0,425.6 712.0,425.7 710.0,425.8 708.0,426.0 706.0,426.0 704.0,426.0 702.0,425.9 700.0,425.7 698.0,425.6 696.0,425.6 694.0,425.5 692.0,425.6 690.0,425.6 688.0,425.6 686.0,425.7 684.0,425.7 682.0,425.7 680.0,425.8 678.0,425.8 676.0,425.9 674.0,425.9 672.0,425.9 670.0,425.8 668.0,425.8 666.0,425.8 664.0,425.9 662.0,426.0 660.0,426.0 658.0,426.0 656.0,426.0 654.0,425.9 652.0,425.9 650.0,425.8 648.0,425.7 646.0,425.6 644.0,425.5 642.0,425.6 640.0,425.6 638.0,425.7 636.0,425.8 634.0,425.8 632.0,425.8 630.0,425.8 628.0,425.9 626.0,425.9 624.0,426.0 622.0,426.0 620.0,426.1 618.0,426.1 616.0,426.2 614.0,426.2 612.0,426.3 610.0,426.3 608.0,426.3 606.0,426.3 604.0,426.3 602.0,426.3 600.0,426.3 598.0,426.3 596.0,426.3 594.0,426.3 592.0,426.2 590.0,426.0 588.0,425.9 586.0,425.8 584.0,425.7 582.0,425.8 580.0,425.9 578.0,425.9 576.0,425.9 574.0,425.9 572.0,425.9 570.0,425.9 568.0,426.0 566.0,426.1 564.0,426.2 562.0,426.2 560.0,426.1 558.0,425.8 556.0,425.7 554.0,425.5 552.0,425.5 550.0,425.6 548.0,425.6 546.0,425.7 544.0,425.8 542.0,425.9 540.0,426.0 538.0,426.2 536.0,426.3 534.0,426.4 532.0,426.3 530.0,426.3 528.0,426.2 526.0,426.1 524.0,426.1 522.0,426.1 520.0,426.2 518.0,426.2 516.0,426.3 514.0,426.4 512.0,426.4 510.0,426.4 508.0,426.4 506.0,426.4 504.0,426.3 502.0,426.2 500.0,426.2 498.0,426.2 496.0,426.1 494.0,426.1 492.0,426.1 490.0,426.1 488.0,426.1 486.0,426.2 484.0,426.2 482.0,426.1 480.0,426.1 478.0,426.1 476.0,426.1 474.0,426.1 472.0,426.1 470.0,426.2 468.0,426.2 466.0,426.3 464.0,426.3 462.0,426.4 460.0,426.4 458.0,426.4 456.0,426.4 454.0,426.4 452.0,426.5 450.0,426.5 448.0,426.6 446.0,426.7 444.0,426.7 442.0,426.7 440.0,426.6 438.0,426.5 436.0,426.4 434.0,426.4 432.0,426.4 430.0,426.5 428.0,426.7 426.0,426.8 424.0,426.9 422.0,426.9 420.0,427.0 418.0,427.2 416.0,427.3 414.0,427.4 412.0,427.4 410.0,427.2 408.0,427.1 406.0,427.0 404.0,426.9 402.0,426.9 400.0,426.8 398.0,426.7 396.0,426.6 394.0,426.6 392.0,426.6 390.0,426.6 388.0,426.5 386.0,426.5 384.0,426.5 382.0,426.6 380.0,426.8 378.0,427.0 376.0,427.2 374.0,427.4 372.0,427.4 370.0,427.4 368.0,427.2 366.0,427.0 364.0,426.8 362.0,426.7 360.0,426.7 358.0,426.8 356.0,427.0 354.0,427.2 352.0,427.3 350.0,427.3 348.0,427.3 346.0,427.2 344.0,427.1 342.0,427.1 340.0,427.2 338.0,427.4 336.0,427.5 334.0,427.7 332.0,427.7 330.0,427.7 328.0,427.7 326.0,427.9 324.0,428.0 322.0,428.0 320.0,428.0 318.0,427.9 316.0,427.8 314.0,427.7 312.0,427.7 310.0,427.7 308.0,427.7 306.0,427.8 304.0,427.9 302.0,428.0 300.0,428.0 298.0,428.0 296.0,428.1 294.0,428.1 292.0,428.2 290.0,428.3 288.0,428.4 286.0,428.3 284.0,428.3 282.0,428.3 280.0,428.4 278.0,428.3 276.0,428.2 274.0,428.0 272.0,427.9 270.0,428.0 268.0,428.3 266.0,428.6 264.0,428.8 262.0,429.0 260.0,429.2 258.0,429.5 256.0,429.8 254.0,430.1 252.0,430.5 250.0,430.8 248.0,431.1 246.0,431.4 244.0,431.5 242.0,431.4 240.0,431.1 238.0,430.9 236.0,430.6 234.0,430.3 232.0,430.1 230.0,429.8 228.0,429.7 226.0,429.5 224.0,429.7 222.0,429.8 220.0,430.0 218.0,430.1 216.0,430.2 214.0,430.4 212.0,430.7 210.0,431.0 208.0,431.4 206.0,431.8 204.0,432.1 202.0,432.3 200.0,432.3 198.0,432.2 196.0,432.1 194.0,431.9 192.0,431.7 190.0,431.6 188.0,431.7 186.0,431.9 184.0,432.2 182.0,432.4 180.0,432.5 178.0,432.5 176.0,432.6 174.0,432.7 172.0,432.8 170.0,432.7 168.0,432.7 166.0,432.5 164.0,432.4 162.0,432.3 160.0,432.2 158.0,431.9 156.0,431.7 154.0,431.7 152.0,431.8 150.0,432.0 148.0,432.3 146.0,432.6 144.0,433.1 142.0,433.5 140.0,434.0 138.0,434.6 136.0,435.1 134.0,435.6 132.0,435.9 130.0,436.2 128.0,436.4 126.0,436.7 124.0,437.0 122.0,437.2 120.0,437.4 118.0,437.5 116.0,437.7 114.0,437.9 112.0,438.1 110.0,438.3 108.0,438.7 106.0,439.2 104.0,439.9 102.0,440.4 100.0,440.8" fill="#c0c0c0"/>
<line x1="101.7" y1="421.2" x2="1299.6" y2="421.2" stroke="#6e6e6e" stroke-width="1.8"/>
<rect x="135.3" y="348.4" width="11.7" height="83.9" fill="#a6a6a6" fill-opacity="0.9" stroke="#333" stroke-width="1"/>
<path d="M135.3 361.4L147.0 350.4M135.3 385.6L147.0 374.6M135.3 409.8L147.0 398.8M135.3 434.0L147.0 423.0M135.3 458.2L147.0 447.2" stroke="#222" stroke-width="1" fill="none"/>
<rect x="1265.1" y="348.4" width="5.8" height="83.9" fill="#a6a6a6" fill-opacity="0.9" stroke="#333" stroke-width="1"/>
<path d="M1265.1 352.4L1270.9 346.9M1265.1 376.6L1270.9 371.1M1265.1 400.8L1270.9 395.3M1265.1 425.0L1270.9 419.5M1265.1 449.2L1270.9 443.7" stroke="#222" stroke-width="1" fill="none"/>
<rect x="265.3" y="348.4" width="23.8" height="83.9" fill="#008000" fill-opacity="0.55"/>
<rect x="267.3" y="348.4" width="4.3" height="83.9" fill="#ffffff" fill-opacity="0.12"/>
<rect x="503.5" y="348.4" width="54.2" height="83.9" fill="#bfbf00" fill-opacity="0.9"/>
<line x1="226.2" y1="348.4" x2="226.2" y2="432.3" stroke="#555" stroke-width="1.5" stroke-dasharray="5.5 2.4"/>
<line x1="279.4" y1="348.4" x2="279.4" y2="432.3" stroke="#555" stroke-width="1.5" stroke-dasharray="5.5 2.4"/>
<line x1="458.9" y1="348.4" x2="458.9" y2="432.3" stroke="#555" stroke-width="1.5" stroke-dasharray="5.5 2.4"/>
<line x1="531.1" y1="348.4" x2="531.1" y2="432.3" stroke="#111" stroke-width="1.5" stroke-dasharray="1.5 2.4"/>
<polyline points="102.1,401.4 104.0,390.0 105.4,421.4 107.1,400.0 109.3,402.9 111.1,395.7 112.6,421.4 114.3,405.0 115.4,414.3 117.1,402.9 119.3,405.7 120.7,419.3 122.1,395.7 123.6,407.1 125.7,402.9 128.6,412.9 130.7,402.9 133.6,401.4 135.7,390.0 137.9,415.7 140.0,400.0 142.1,390.0 144.3,402.9 145.7,398.6 147.9,410.0 150.0,414.3 152.1,401.4 154.0,415.7 156.4,402.9 157.9,400.0 160.0,414.3 162.9,421.4 164.3,415.7 166.4,414.3 168.6,405.7 170.0,414.3 173.6,400.0 176.4,412.9 179.3,412.9 181.4,405.7 185.0,417.9 186.4,400.0 188.6,405.7 190.7,395.7 192.9,402.9 195.0,405.7 197.1,400.0 200.0,407.1 202.1,410.7 205.0,398.6 207.1,405.7 210.0,398.6 212.9,405.7 214.3,401.4 217.1,405.0 220.0,412.9 222.9,408.6 225.0,412.9 225.7,400.0 227.9,393.6 230.0,398.6 233.6,401.4 236.4,407.1 240.0,395.7 242.9,414.3 245.0,407.1 247.1,415.7 250.0,412.9 252.9,420.0 255.0,412.9 257.9,410.0 260.7,429.3 262.9,405.0 265.7,414.3 268.6,408.6 270.7,402.9 272.9,398.6 275.7,394.3 277.1,401.4 279.3,391.4 282.9,414.3 285.7,407.1 288.6,405.7 292.1,397.1 294.3,405.7 297.1,400.0 300.0,410.0 302.1,412.9 303.6,421.4 305.7,412.1 307.9,418.6 309.3,423.6 311.4,417.1 314.3,411.4 316.9,401.4 318.6,411.4 321.4,405.7 324.3,418.6 327.1,408.6 330.0,402.9 331.4,410.0 335.4,399.3 337.9,411.4 340.7,403.6 342.9,414.3 345.0,400.7 347.9,409.3 350.7,414.3 354.3,405.7 357.9,401.4 360.0,408.6 362.9,415.0 365.7,411.4 368.6,418.6 372.1,402.9 374.3,414.3 377.1,407.1 380.0,401.4 382.9,411.4 385.7,415.0 388.6,414.3 391.4,411.4 393.6,405.7 395.0,411.4 398.6,394.3 401.4,403.6 404.3,391.4 406.9,404.3 408.6,389.3 411.4,395.0 414.3,393.6 415.7,395.0 418.6,390.7 421.4,399.3 424.3,395.0 427.9,395.7 432.1,389.3 434.3,401.4 436.9,384.3 439.3,388.6 441.4,406.4 443.6,394.3 445.7,402.1 448.6,395.7 450.7,389.3 453.6,390.0 457.1,388.6 459.3,380.7 462.9,384.3 467.1,397.9 471.4,391.4 477.1,388.6 480.0,384.3 482.9,390.0 485.7,396.4 490.0,390.7 492.1,397.1 495.7,386.4 500.0,386.4 502.9,385.0 506.4,391.4 509.3,396.4 512.9,385.7 516.4,393.6 519.3,392.9 521.4,386.4 525.7,395.0 528.6,385.7 531.4,382.9 534.3,392.1 537.9,392.9 540.7,407.9 542.9,400.0 545.0,395.7 547.1,396.4 550.7,386.4 553.6,392.9 557.1,399.3 560.7,388.6 564.3,385.7 568.6,405.0 572.1,386.4 574.3,392.9 577.9,400.7 581.4,394.3 583.6,396.4 585.7,400.0 589.3,395.0 592.9,385.7 596.4,380.0 600.0,394.3 603.6,373.6 605.7,379.3 609.3,381.4 612.9,377.9 614.3,386.4 618.6,375.0 622.9,374.3 625.7,377.9 628.6,381.4 633.6,392.9 637.9,375.0 640.7,375.0 645.0,388.6 649.3,375.0 652.1,378.6 655.0,374.3 657.9,378.6 661.4,371.4 664.3,378.6 667.9,371.4 671.4,370.0 673.6,380.0 676.4,383.6 680.7,374.3 682.9,370.7 687.9,363.6 691.4,372.9 692.9,365.7 695.7,367.9 700.0,365.7 702.1,372.1 705.0,357.1 707.1,363.6 709.3,361.4 710.0,369.3 712.1,357.1 714.3,366.4 716.4,363.6 718.6,375.0 722.1,377.9 725.7,360.7 728.6,365.0 730.7,364.3 732.1,370.0 734.3,367.9 736.4,356.4 739.3,361.4 742.1,358.6 744.3,363.6 747.1,362.1 749.3,362.9 752.1,366.4 754.3,358.6 757.9,359.3 760.0,367.1 762.9,362.1 765.7,361.4 768.6,354.3 770.7,358.6 772.9,356.4 775.7,352.9 777.9,362.1 781.4,357.1 783.6,361.4 785.7,357.9 787.9,363.6 791.4,360.0 795.0,357.9 797.9,355.7 800.0,367.9 805.0,356.4 808.6,360.7 812.9,366.4 816.4,360.0 819.3,360.7 822.1,367.1 825.0,362.9 828.6,362.1 830.7,360.7 833.6,357.9 836.4,365.0 839.3,363.6 842.9,359.3 845.7,360.0 848.6,365.7 850.0,357.1 852.1,362.1 855.0,362.1 858.6,372.9 861.4,362.9 865.7,376.4 868.6,370.7 871.4,373.6 874.3,367.9 877.9,372.1 879.3,360.7 882.9,363.6 886.4,362.9 890.0,361.4 892.9,366.4 897.1,368.6 900.0,368.6 902.9,367.9 904.7,357.9 906.4,362.9 907.9,361.4 910.0,365.0 911.4,363.6 913.6,370.0 917.1,360.0 920.7,370.0 923.6,366.4 927.1,361.4 930.0,372.1 932.1,368.6 934.0,377.9 935.4,361.4 937.1,370.7 939.3,361.4 940.7,361.4 942.9,369.3 944.3,361.4 946.4,367.9 949.3,376.4 952.9,362.1 955.7,367.1 958.6,370.0 961.4,365.7 964.3,358.6 967.1,362.9 970.7,375.0 972.9,364.3 976.4,372.9 980.0,362.9 983.6,360.0 986.9,376.4 988.6,365.7 991.4,368.6 993.6,367.1 996.4,373.6 998.6,375.0 1002.1,367.1 1005.7,375.0 1008.6,377.9 1011.4,374.3 1015.0,367.9 1019.3,379.3 1022.1,376.4 1026.4,370.7 1029.3,374.3 1030.7,370.7 1032.9,380.7 1035.0,373.6 1040.0,385.0 1042.9,375.0 1045.0,380.7 1047.9,374.3 1050.7,372.1 1053.6,375.7 1057.9,383.6 1062.1,372.9 1066.4,372.1 1071.4,387.1 1074.3,371.4 1077.1,380.0 1079.3,375.0 1082.1,387.1 1084.3,377.1 1086.4,380.7 1089.3,373.6 1092.1,382.9 1094.3,392.9 1097.1,392.9 1100.0,385.7 1102.9,395.0 1106.4,374.3 1108.6,372.9 1110.7,375.0 1112.9,365.7 1116.4,395.0 1118.6,388.6 1121.4,369.3 1124.3,360.0 1126.4,361.4 1128.6,371.4 1131.4,368.6 1135.0,358.6 1137.9,359.3 1140.0,367.1 1142.9,367.1 1147.1,359.3 1151.4,375.7 1153.6,373.6 1158.6,360.0 1161.4,363.6 1163.6,361.4 1167.1,364.3 1170.0,362.9 1171.4,375.0 1173.6,360.7 1176.4,360.7 1178.9,357.9 1180.7,366.4 1184.3,362.9 1188.6,374.3 1192.1,363.6 1195.7,372.9 1197.9,361.4 1200.0,365.7 1201.4,365.0 1206.4,356.4 1209.3,361.4 1212.9,370.7 1217.1,354.3 1220.0,361.4 1222.9,358.6 1225.7,362.9 1227.9,359.3 1232.1,367.9 1235.7,371.4 1238.6,361.4 1242.9,355.7 1245.7,366.4 1248.6,366.4 1251.4,362.9 1255.0,360.0 1258.6,372.9 1260.7,361.4 1262.9,370.0 1265.7,357.1 1267.9,375.0 1269.3,357.9 1274.3,370.0 1276.4,369.3 1280.7,358.6 1283.6,361.4 1286.4,360.7 1289.3,371.4 1290.7,362.1 1292.9,367.9 1295.0,363.6 1297.9,365.7" fill="none" stroke="#0000ff" stroke-width="1.7" stroke-linejoin="round"/>
</g>
<rect x="101.7" y="348.4" width="1197.9" height="83.9" fill="none" stroke="#333" stroke-width="1.1"/>
<line x1="98.2" y1="421.2" x2="101.7" y2="421.2" stroke="#333" stroke-width="1"/>
<text transform="translate(96.20,424.80) scale(1.144,1.06)" font-family="Liberation Sans" font-size="10" fill="#222" stroke="#222" stroke-width="0.15" text-anchor="end" style="white-space:pre" >0</text>
<line x1="98.2" y1="397.1" x2="101.7" y2="397.1" stroke="#333" stroke-width="1"/>
<text transform="translate(96.20,400.70) scale(1.144,1.06)" font-family="Liberation Sans" font-size="10" fill="#222" stroke="#222" stroke-width="0.15" text-anchor="end" style="white-space:pre" >5</text>
<line x1="98.2" y1="373.0" x2="101.7" y2="373.0" stroke="#333" stroke-width="1"/>
<text transform="translate(96.20,376.60) scale(1.144,1.06)" font-family="Liberation Sans" font-size="10" fill="#222" stroke="#222" stroke-width="0.15" text-anchor="end" style="white-space:pre" >10</text>
<line x1="98.2" y1="348.9" x2="101.7" y2="348.9" stroke="#333" stroke-width="1"/>
<text transform="translate(96.20,352.50) scale(1.144,1.06)" font-family="Liberation Sans" font-size="10" fill="#222" stroke="#222" stroke-width="0.15" text-anchor="end" style="white-space:pre" >15</text>
<line x1="114.6" y1="432.3" x2="114.6" y2="435.8" stroke="#333" stroke-width="1"/>
<text transform="translate(114.60,447.00) scale(1.144,1.06)" font-family="Liberation Sans" font-size="10" fill="#222" stroke="#222" stroke-width="0.15" text-anchor="middle" style="white-space:pre" >3500</text>
<line x1="173.4" y1="432.3" x2="173.4" y2="435.8" stroke="#333" stroke-width="1"/>
<text transform="translate(173.38,447.00) scale(1.144,1.06)" font-family="Liberation Sans" font-size="10" fill="#222" stroke="#222" stroke-width="0.15" text-anchor="middle" style="white-space:pre" >3600</text>
<line x1="232.2" y1="432.3" x2="232.2" y2="435.8" stroke="#333" stroke-width="1"/>
<text transform="translate(232.17,447.00) scale(1.144,1.06)" font-family="Liberation Sans" font-size="10" fill="#222" stroke="#222" stroke-width="0.15" text-anchor="middle" style="white-space:pre" >3700</text>
<line x1="291.0" y1="432.3" x2="291.0" y2="435.8" stroke="#333" stroke-width="1"/>
<text transform="translate(290.95,447.00) scale(1.144,1.06)" font-family="Liberation Sans" font-size="10" fill="#222" stroke="#222" stroke-width="0.15" text-anchor="middle" style="white-space:pre" >3800</text>
<line x1="349.7" y1="432.3" x2="349.7" y2="435.8" stroke="#333" stroke-width="1"/>
<text transform="translate(349.74,447.00) scale(1.144,1.06)" font-family="Liberation Sans" font-size="10" fill="#222" stroke="#222" stroke-width="0.15" text-anchor="middle" style="white-space:pre" >3900</text>
<line x1="408.5" y1="432.3" x2="408.5" y2="435.8" stroke="#333" stroke-width="1"/>
<text transform="translate(408.52,447.00) scale(1.144,1.06)" font-family="Liberation Sans" font-size="10" fill="#222" stroke="#222" stroke-width="0.15" text-anchor="middle" style="white-space:pre" >4000</text>
<line x1="467.3" y1="432.3" x2="467.3" y2="435.8" stroke="#333" stroke-width="1"/>
<text transform="translate(467.31,447.00) scale(1.144,1.06)" font-family="Liberation Sans" font-size="10" fill="#222" stroke="#222" stroke-width="0.15" text-anchor="middle" style="white-space:pre" >4100</text>
<line x1="526.1" y1="432.3" x2="526.1" y2="435.8" stroke="#333" stroke-width="1"/>
<text transform="translate(526.10,447.00) scale(1.144,1.06)" font-family="Liberation Sans" font-size="10" fill="#222" stroke="#222" stroke-width="0.15" text-anchor="middle" style="white-space:pre" >4200</text>
<line x1="584.9" y1="432.3" x2="584.9" y2="435.8" stroke="#333" stroke-width="1"/>
<text transform="translate(584.88,447.00) scale(1.144,1.06)" font-family="Liberation Sans" font-size="10" fill="#222" stroke="#222" stroke-width="0.15" text-anchor="middle" style="white-space:pre" >4300</text>
<line x1="643.7" y1="432.3" x2="643.7" y2="435.8" stroke="#333" stroke-width="1"/>
<text transform="translate(643.66,447.00) scale(1.144,1.06)" font-family="Liberation Sans" font-size="10" fill="#222" stroke="#222" stroke-width="0.15" text-anchor="middle" style="white-space:pre" >4400</text>
<line x1="702.5" y1="432.3" x2="702.5" y2="435.8" stroke="#333" stroke-width="1"/>
<text transform="translate(702.45,447.00) scale(1.144,1.06)" font-family="Liberation Sans" font-size="10" fill="#222" stroke="#222" stroke-width="0.15" text-anchor="middle" style="white-space:pre" >4500</text>
<line x1="761.2" y1="432.3" x2="761.2" y2="435.8" stroke="#333" stroke-width="1"/>
<text transform="translate(761.24,447.00) scale(1.144,1.06)" font-family="Liberation Sans" font-size="10" fill="#222" stroke="#222" stroke-width="0.15" text-anchor="middle" style="white-space:pre" >4600</text>
<line x1="820.0" y1="432.3" x2="820.0" y2="435.8" stroke="#333" stroke-width="1"/>
<text transform="translate(820.02,447.00) scale(1.144,1.06)" font-family="Liberation Sans" font-size="10" fill="#222" stroke="#222" stroke-width="0.15" text-anchor="middle" style="white-space:pre" >4700</text>
<line x1="878.8" y1="432.3" x2="878.8" y2="435.8" stroke="#333" stroke-width="1"/>
<text transform="translate(878.80,447.00) scale(1.144,1.06)" font-family="Liberation Sans" font-size="10" fill="#222" stroke="#222" stroke-width="0.15" text-anchor="middle" style="white-space:pre" >4800</text>
<line x1="937.6" y1="432.3" x2="937.6" y2="435.8" stroke="#333" stroke-width="1"/>
<text transform="translate(937.59,447.00) scale(1.144,1.06)" font-family="Liberation Sans" font-size="10" fill="#222" stroke="#222" stroke-width="0.15" text-anchor="middle" style="white-space:pre" >4900</text>
<line x1="996.4" y1="432.3" x2="996.4" y2="435.8" stroke="#333" stroke-width="1"/>
<text transform="translate(996.38,447.00) scale(1.144,1.06)" font-family="Liberation Sans" font-size="10" fill="#222" stroke="#222" stroke-width="0.15" text-anchor="middle" style="white-space:pre" >5000</text>
<line x1="1055.2" y1="432.3" x2="1055.2" y2="435.8" stroke="#333" stroke-width="1"/>
<text transform="translate(1055.16,447.00) scale(1.144,1.06)" font-family="Liberation Sans" font-size="10" fill="#222" stroke="#222" stroke-width="0.15" text-anchor="middle" style="white-space:pre" >5100</text>
<line x1="1113.9" y1="432.3" x2="1113.9" y2="435.8" stroke="#333" stroke-width="1"/>
<text transform="translate(1113.94,447.00) scale(1.144,1.06)" font-family="Liberation Sans" font-size="10" fill="#222" stroke="#222" stroke-width="0.15" text-anchor="middle" style="white-space:pre" >5200</text>
<line x1="1172.7" y1="432.3" x2="1172.7" y2="435.8" stroke="#333" stroke-width="1"/>
<text transform="translate(1172.73,447.00) scale(1.144,1.06)" font-family="Liberation Sans" font-size="10" fill="#222" stroke="#222" stroke-width="0.15" text-anchor="middle" style="white-space:pre" >5300</text>
<line x1="1231.5" y1="432.3" x2="1231.5" y2="435.8" stroke="#333" stroke-width="1"/>
<text transform="translate(1231.51,447.00) scale(1.144,1.06)" font-family="Liberation Sans" font-size="10" fill="#222" stroke="#222" stroke-width="0.15" text-anchor="middle" style="white-space:pre" >5400</text>
<line x1="1290.3" y1="432.3" x2="1290.3" y2="435.8" stroke="#333" stroke-width="1"/>
<text transform="translate(1290.30,447.00) scale(1.144,1.06)" font-family="Liberation Sans" font-size="10" fill="#222" stroke="#222" stroke-width="0.15" text-anchor="middle" style="white-space:pre" >5500</text>
<text transform="translate(113.60,346.00) scale(1.144,1.06)" font-family="Liberation Sans" font-size="10" fill="#222" stroke="#222" stroke-width="0.15" text-anchor="start" style="white-space:pre" >e</text>
<text transform="translate(119.80,341.00) scale(1.144,1.06)" font-family="Liberation Sans" font-size="7" fill="#222" stroke="#222" stroke-width="0.15" text-anchor="start" style="white-space:pre" >−17</text>
<text transform="translate(132.30,346.00) scale(1.144,1.06)" font-family="Liberation Sans" font-size="10" fill="#222" stroke="#222" stroke-width="0.15" text-anchor="start" style="white-space:pre" >x2<tspan font-style="italic">Å</tspan></text>
<rect x="479.9" y="449.9" width="17.2" height="6.5" fill="#ff0000"/>
<text transform="translate(502.90,456.20) scale(1.144,1.06)" font-family="Liberation Sans" font-size="8.2" fill="#222" stroke="#222" stroke-width="0.15" text-anchor="start" style="white-space:pre" >Ly<tspan font-style="italic">α</tspan></text>
<rect x="534.0" y="449.9" width="17.2" height="6.5" fill="#008000"/>
<text transform="translate(557.00,456.20) scale(1.144,1.06)" font-family="Liberation Sans" font-size="8.2" fill="#222" stroke="#222" stroke-width="0.15" text-anchor="start" style="white-space:pre" >OII</text>
<rect x="586.5" y="449.9" width="17.2" height="6.5" fill="#8a2be2"/>
<text transform="translate(609.70,456.20) scale(1.144,1.06)" font-family="Liberation Sans" font-size="8.2" fill="#222" stroke="#222" stroke-width="0.15" text-anchor="start" style="white-space:pre" >CIV</text>
<rect x="641.6" y="449.9" width="17.2" height="6.5" fill="#800080"/>
<text transform="translate(663.90,456.20) scale(1.144,1.06)" font-family="Liberation Sans" font-size="8.2" fill="#222" stroke="#222" stroke-width="0.15" text-anchor="start" style="white-space:pre" >CIII</text>
<rect x="693.5" y="449.9" width="17.2" height="6.5" fill="#ff00ff"/>
<text transform="translate(716.50,456.20) scale(1.144,1.06)" font-family="Liberation Sans" font-size="8.2" fill="#222" stroke="#222" stroke-width="0.15" text-anchor="start" style="white-space:pre" >MgII</text>
<rect x="749.3" y="449.9" width="17.2" height="6.5" fill="#ffa500"/>
<text transform="translate(772.30,456.20) scale(1.144,1.06)" font-family="Liberation Sans" font-size="8.2" fill="#222" stroke="#222" stroke-width="0.15" text-anchor="start" style="white-space:pre" >HeII</text>
<rect x="803.6" y="449.9" width="17.2" height="6.5" fill="#87ceeb"/>
<text transform="translate(826.60,456.20) scale(1.144,1.06)" font-family="Liberation Sans" font-size="8.2" fill="#222" stroke="#222" stroke-width="0.15" text-anchor="start" style="white-space:pre" >(K)CaII</text>
<rect x="869.3" y="449.9" width="17.2" height="6.5" fill="#87ceeb"/>
<text transform="translate(892.30,456.20) scale(1.144,1.06)" font-family="Liberation Sans" font-size="8.2" fill="#222" stroke="#222" stroke-width="0.15" text-anchor="start" style="white-space:pre" >(H)CaII</text>
<text transform="translate(108.70,323.30) rotate(90) scale(1.144,1.06)" font-family="Liberation Sans" font-size="9.1" fill="#ff00ff" stroke="#ff00ff" stroke-width="0.15" text-anchor="start" style="white-space:pre" >CII</text>
<path d="M107.0 347.3Q107.0 345.4 109.1 345.4L110.7 345.4Q111.6 345.3 111.6 344.3Q111.6 345.3 112.5 345.4L114.1 345.4Q116.2 345.4 116.2 347.3" fill="none" stroke="#ff00ff" stroke-width="1"/>
<text transform="translate(140.20,316.80) rotate(90) scale(1.144,1.06)" font-family="Liberation Sans" font-size="9.1" fill="#87ceeb" stroke="#87ceeb" stroke-width="0.15" text-anchor="start" style="white-space:pre" >NeV</text>
<path d="M138.5 347.3Q138.5 345.4 140.6 345.4L142.2 345.4Q143.1 345.3 143.1 344.3Q143.1 345.3 144.0 345.4L145.6 345.4Q147.7 345.4 147.7 347.3" fill="none" stroke="#87ceeb" stroke-width="1"/>
<text transform="translate(160.20,319.70) rotate(90) scale(1.144,1.06)" font-family="Liberation Sans" font-size="9.1" fill="#ff0000" stroke="#ff0000" stroke-width="0.15" text-anchor="start" style="white-space:pre" >OVI</text>
<path d="M158.5 347.3Q158.5 345.4 160.6 345.4L162.2 345.4Q163.1 345.3 163.1 344.3Q163.1 345.3 164.0 345.4L165.6 345.4Q167.7 345.4 167.7 347.3" fill="none" stroke="#ff0000" stroke-width="1"/>
<text transform="translate(180.20,320.40) rotate(90) scale(1.144,1.06)" font-family="Liberation Sans" font-size="9.1" fill="#800080" stroke="#800080" stroke-width="0.15" text-anchor="start" style="white-space:pre" >HeII</text>
<path d="M178.5 347.3Q178.5 345.4 180.6 345.4L182.2 345.4Q183.1 345.3 183.1 344.3Q183.1 345.3 184.0 345.4L185.6 345.4Q187.7 345.4 187.7 347.3" fill="none" stroke="#800080" stroke-width="1"/>
<text transform="translate(274.50,316.70) rotate(90) scale(1.144,1.06)" font-family="Liberation Sans" font-size="9.1" fill="#008000" stroke="#008000" stroke-width="0.15" text-anchor="start" style="white-space:pre" >NeV</text>
<path d="M272.8 347.3Q272.8 345.4 274.9 345.4L276.5 345.4Q277.4 345.3 277.4 344.3Q277.4 345.3 278.3 345.4L279.9 345.4Q282.0 345.4 282.0 347.3" fill="none" stroke="#008000" stroke-width="1"/>
<text transform="translate(285.90,321.10) rotate(90) scale(1.144,1.06)" font-family="Liberation Sans" font-size="9.1" fill="#8a2be2" stroke="#8a2be2" stroke-width="0.15" text-anchor="start" style="white-space:pre" >SiIV</text>
<path d="M284.2 347.3Q284.2 345.4 286.3 345.4L287.9 345.4Q288.8 345.3 288.8 344.3Q288.8 345.3 289.7 345.4L291.3 345.4Q293.4 345.4 293.4 347.3" fill="none" stroke="#8a2be2" stroke-width="1"/>
<text transform="translate(378.00,322.60) rotate(90) scale(1.144,1.06)" font-family="Liberation Sans" font-size="9.1" fill="#87ceeb" stroke="#87ceeb" stroke-width="0.15" text-anchor="start" style="white-space:pre" >OII</text>
<path d="M376.3 347.3Q376.3 345.4 378.4 345.4L380.0 345.4Q380.9 345.3 380.9 344.3Q380.9 345.3 381.8 345.4L383.4 345.4Q385.5 345.4 385.5 347.3" fill="none" stroke="#87ceeb" stroke-width="1"/>
<text transform="translate(390.90,319.70) rotate(90) scale(1.144,1.06)" font-family="Liberation Sans" font-size="9.1" fill="#ffa500" stroke="#ffa500" stroke-width="0.15" text-anchor="start" style="white-space:pre" >CIV</text>
<path d="M389.2 347.3Q389.2 345.4 391.3 345.4L392.9 345.4Q393.8 345.3 393.8 344.3Q393.8 345.3 394.7 345.4L396.3 345.4Q398.4 345.4 398.4 347.3" fill="none" stroke="#ffa500" stroke-width="1"/>
<text transform="translate(398.60,322.60) rotate(90) scale(1.144,1.06)" font-family="Liberation Sans" font-size="9.1" fill="#87ceeb" stroke="#87ceeb" stroke-width="0.15" text-anchor="start" style="white-space:pre" >OII</text>
<path d="M396.9 347.3Q396.9 345.4 399.0 345.4L400.6 345.4Q401.5 345.3 401.5 344.3Q401.5 345.3 402.4 345.4L404.0 345.4Q406.1 345.4 406.1 347.3" fill="none" stroke="#87ceeb" stroke-width="1"/>
<text transform="translate(578.40,320.10) rotate(90) scale(1.144,1.06)" font-family="Liberation Sans" font-size="9.1" fill="#ff0000" stroke="#ff0000" stroke-width="0.15" text-anchor="start" style="white-space:pre" >NV</text>
<path d="M576.7 347.3Q576.7 345.4 578.8 345.4L580.4 345.4Q581.3 345.3 581.3 344.3Q581.3 345.3 582.2 345.4L583.8 345.4Q585.9 345.4 585.9 347.3" fill="none" stroke="#ff0000" stroke-width="1"/>
<text transform="translate(624.90,325.00) rotate(90) scale(1.144,1.06)" font-family="Liberation Sans" font-size="9.1" fill="#ff0000" stroke="#ff0000" stroke-width="0.15" text-anchor="start" style="white-space:pre" >SiII</text>
<path d="M623.2 347.3Q623.2 345.4 625.3 345.4L626.9 345.4Q627.8 345.3 627.8 344.3Q627.8 345.3 628.7 345.4L630.3 345.4Q632.4 345.4 632.4 347.3" fill="none" stroke="#ff0000" stroke-width="1"/>
<text transform="translate(673.10,320.70) rotate(90) scale(1.144,1.06)" font-family="Liberation Sans" font-size="9.1" fill="#8a2be2" stroke="#8a2be2" stroke-width="0.15" text-anchor="start" style="white-space:pre" >HeII</text>
<path d="M671.4 347.3Q671.4 345.4 673.5 345.4L675.1 345.4Q676.0 345.3 676.0 344.3Q676.0 345.3 676.9 345.4L678.5 345.4Q680.6 345.4 680.6 347.3" fill="none" stroke="#8a2be2" stroke-width="1"/>
<text transform="translate(759.40,327.60) rotate(90) scale(1.144,1.06)" font-family="Liberation Sans" font-size="9.1" fill="#87ceeb" stroke="#87ceeb" stroke-width="0.15" text-anchor="start" style="white-space:pre" >H<tspan font-style="italic">γ</tspan></text>
<path d="M757.7 347.3Q757.7 345.4 759.8 345.4L761.4 345.4Q762.3 345.3 762.3 344.3Q762.3 345.3 763.2 345.4L764.8 345.4Q766.9 345.4 766.9 347.3" fill="none" stroke="#87ceeb" stroke-width="1"/>
<text transform="translate(784.10,327.60) rotate(90) scale(1.144,1.06)" font-family="Liberation Sans" font-size="9.1" fill="#87ceeb" stroke="#87ceeb" stroke-width="0.15" text-anchor="start" style="white-space:pre" >H<tspan font-style="italic">γ</tspan></text>
<path d="M782.4 347.3Q782.4 345.4 784.5 345.4L786.1 345.4Q787.0 345.3 787.0 344.3Q787.0 345.3 787.9 345.4L789.5 345.4Q791.6 345.4 791.6 347.3" fill="none" stroke="#87ceeb" stroke-width="1"/>
<text transform="translate(899.30,320.90) rotate(90) scale(1.144,1.06)" font-family="Liberation Sans" font-size="9.1" fill="#ff0000" stroke="#ff0000" stroke-width="0.15" text-anchor="start" style="white-space:pre" >SiIV</text>
<path d="M897.6 347.3Q897.6 345.4 899.7 345.4L901.3 345.4Q902.2 345.3 902.2 344.3Q902.2 345.3 903.1 345.4L904.7 345.4Q906.8 345.4 906.8 347.3" fill="none" stroke="#ff0000" stroke-width="1"/>
<text transform="translate(934.10,327.20) rotate(90) scale(1.144,1.06)" font-family="Liberation Sans" font-size="9.1" fill="#008000" stroke="#008000" stroke-width="0.15" text-anchor="start" style="white-space:pre" >H<tspan font-style="italic">γ</tspan></text>
<path d="M932.4 347.3Q932.4 345.4 934.5 345.4L936.1 345.4Q937.0 345.3 937.0 344.3Q937.0 345.3 937.9 345.4L939.5 345.4Q941.6 345.4 941.6 347.3" fill="none" stroke="#008000" stroke-width="1"/>
<text transform="translate(1011.80,316.50) rotate(90) scale(1.144,1.06)" font-family="Liberation Sans" font-size="9.1" fill="#ff00ff" stroke="#ff00ff" stroke-width="0.15" text-anchor="start" style="white-space:pre" >NeV</text>
<path d="M1010.1 347.3Q1010.1 345.4 1012.2 345.4L1013.8 345.4Q1014.7 345.3 1014.7 344.3Q1014.7 345.3 1015.6 345.4L1017.2 345.4Q1019.3 345.4 1019.3 347.3" fill="none" stroke="#ff00ff" stroke-width="1"/>
<text transform="translate(1066.20,323.60) rotate(90) scale(1.144,1.06)" font-family="Liberation Sans" font-size="9.1" fill="#800080" stroke="#800080" stroke-width="0.15" text-anchor="start" style="white-space:pre" >CII</text>
<path d="M1064.5 347.3Q1064.5 345.4 1066.6 345.4L1068.2 345.4Q1069.1 345.3 1069.1 344.3Q1069.1 345.3 1070.0 345.4L1071.6 345.4Q1073.7 345.4 1073.7 347.3" fill="none" stroke="#800080" stroke-width="1"/>
<text transform="translate(1084.80,327.90) rotate(90) scale(1.144,1.06)" font-family="Liberation Sans" font-size="9.1" fill="#87ceeb" stroke="#87ceeb" stroke-width="0.15" text-anchor="start" style="white-space:pre" >H<tspan font-style="italic">β</tspan></text>
<path d="M1083.1 347.3Q1083.1 345.4 1085.2 345.4L1086.8 345.4Q1087.7 345.3 1087.7 344.3Q1087.7 345.3 1088.6 345.4L1090.2 345.4Q1092.3 345.4 1092.3 347.3" fill="none" stroke="#87ceeb" stroke-width="1"/>
<text transform="translate(1102.10,323.80) rotate(90) scale(1.144,1.06)" font-family="Liberation Sans" font-size="9.1" fill="#8a2be2" stroke="#8a2be2" stroke-width="0.15" text-anchor="start" style="white-space:pre" >CIII</text>
<path d="M1100.4 347.3Q1100.4 345.4 1102.5 345.4L1104.1 345.4Q1105.0 345.3 1105.0 344.3Q1105.0 345.3 1105.9 345.4L1107.5 345.4Q1109.6 345.4 1109.6 347.3" fill="none" stroke="#8a2be2" stroke-width="1"/>
<text transform="translate(1111.90,327.90) rotate(90) scale(1.144,1.06)" font-family="Liberation Sans" font-size="9.1" fill="#87ceeb" stroke="#87ceeb" stroke-width="0.15" text-anchor="start" style="white-space:pre" >H<tspan font-style="italic">β</tspan></text>
<path d="M1110.2 347.3Q1110.2 345.4 1112.3 345.4L1113.9 345.4Q1114.8 345.3 1114.8 344.3Q1114.8 345.3 1115.7 345.4L1117.3 345.4Q1119.4 345.4 1119.4 347.3" fill="none" stroke="#87ceeb" stroke-width="1"/>
<text transform="translate(1145.60,323.80) rotate(90) scale(1.144,1.06)" font-family="Liberation Sans" font-size="9.1" fill="#87ceeb" stroke="#87ceeb" stroke-width="0.15" text-anchor="start" style="white-space:pre" >OIII</text>
<path d="M1143.9 347.3Q1143.9 345.4 1146.0 345.4L1147.6 345.4Q1148.5 345.3 1148.5 344.3Q1148.5 345.3 1149.4 345.4L1151.0 345.4Q1153.1 345.4 1153.1 347.3" fill="none" stroke="#87ceeb" stroke-width="1"/>
<text transform="translate(1173.50,323.80) rotate(90) scale(1.144,1.06)" font-family="Liberation Sans" font-size="9.1" fill="#87ceeb" stroke="#87ceeb" stroke-width="0.15" text-anchor="start" style="white-space:pre" >OIII</text>
<path d="M1171.8 347.3Q1171.8 345.4 1173.9 345.4L1175.5 345.4Q1176.4 345.3 1176.4 344.3Q1176.4 345.3 1177.3 345.4L1178.9 345.4Q1181.0 345.4 1181.0 347.3" fill="none" stroke="#87ceeb" stroke-width="1"/>
<text transform="translate(1208.00,319.70) rotate(90) scale(1.144,1.06)" font-family="Liberation Sans" font-size="9.1" fill="#ff0000" stroke="#ff0000" stroke-width="0.15" text-anchor="start" style="white-space:pre" >CIV</text>
<path d="M1206.3 347.3Q1206.3 345.4 1208.4 345.4L1210.0 345.4Q1210.9 345.3 1210.9 344.3Q1210.9 345.3 1211.8 345.4L1213.4 345.4Q1215.5 345.4 1215.5 347.3" fill="none" stroke="#ff0000" stroke-width="1"/>
<text transform="translate(1281.10,327.90) rotate(90) scale(1.144,1.06)" font-family="Liberation Sans" font-size="9.1" fill="#008000" stroke="#008000" stroke-width="0.15" text-anchor="start" style="white-space:pre" >H<tspan font-style="italic">β</tspan></text>
<path d="M1279.4 347.3Q1279.4 345.4 1281.5 345.4L1283.1 345.4Q1284.0 345.3 1284.0 344.3Q1284.0 345.3 1284.9 345.4L1286.5 345.4Q1288.6 345.4 1288.6 347.3" fill="none" stroke="#008000" stroke-width="1"/>
<text transform="translate(157.30,274.70) rotate(90) scale(1.144,1.06)" font-family="Liberation Sans" font-size="9.1" fill="#87ceeb" stroke="#87ceeb" stroke-width="0.15" text-anchor="start" style="white-space:pre" >NeV</text>
<path d="M155.6 305.3Q155.6 303.4 157.7 303.4L159.3 303.4Q160.2 303.3 160.2 302.3Q160.2 303.3 161.1 303.4L162.7 303.4Q164.8 303.4 164.8 305.3" fill="none" stroke="#87ceeb" stroke-width="1"/>
<text transform="translate(163.00,279.00) rotate(90) scale(1.144,1.06)" font-family="Liberation Sans" font-size="9.1" fill="#ffa500" stroke="#ffa500" stroke-width="0.15" text-anchor="start" style="white-space:pre" >SiIV</text>
<path d="M161.3 305.3Q161.3 303.4 163.4 303.4L165.0 303.4Q165.9 303.3 165.9 302.3Q165.9 303.3 166.8 303.4L168.4 303.4Q170.5 303.4 170.5 305.3" fill="none" stroke="#ffa500" stroke-width="1"/>
<text transform="translate(933.20,281.70) rotate(90) scale(1.144,1.06)" font-family="Liberation Sans" font-size="9.1" fill="#ffa500" stroke="#ffa500" stroke-width="0.15" text-anchor="start" style="white-space:pre" >CIII</text>
<path d="M931.5 305.3Q931.5 303.4 933.6 303.4L935.2 303.4Q936.1 303.3 936.1 302.3Q936.1 303.3 937.0 303.4L938.6 303.4Q940.7 303.4 940.7 305.3" fill="none" stroke="#ffa500" stroke-width="1"/>
<text transform="translate(1176.00,281.10) rotate(90) scale(1.144,1.06)" font-family="Liberation Sans" font-size="9.1" fill="#87ceeb" stroke="#87ceeb" stroke-width="0.15" text-anchor="start" style="white-space:pre" >OIII</text>
<path d="M1174.3 305.3Q1174.3 303.4 1176.4 303.4L1178.0 303.4Q1178.9 303.3 1178.9 302.3Q1178.9 303.3 1179.8 303.4L1181.4 303.4Q1183.5 303.4 1183.5 305.3" fill="none" stroke="#87ceeb" stroke-width="1"/>
<text transform="translate(1203.10,281.10) rotate(90) scale(1.144,1.06)" font-family="Liberation Sans" font-size="9.1" fill="#87ceeb" stroke="#87ceeb" stroke-width="0.15" text-anchor="start" style="white-space:pre" >OIII</text>
<path d="M1201.4 305.3Q1201.4 303.4 1203.5 303.4L1205.1 303.4Q1206.0 303.3 1206.0 302.3Q1206.0 303.3 1206.9 303.4L1208.5 303.4Q1210.6 303.4 1210.6 305.3" fill="none" stroke="#87ceeb" stroke-width="1"/>
<rect x="69.9" y="532.6" width="148.3" height="147.7" fill="#f6f6f6"/>
<path stroke="#f6f6f6" stroke-width="3.35" shape-rendering="crispEdges" d="M69.9 534.0h148.7M69.9 536.9h20.8M93.2 536.9h125.4M69.9 539.8h148.7M69.9 542.7h61.5M133.9 542.7h20.8M157.1 542.7h6.2M165.9 542.7h44.0M212.4 542.7h6.2M69.9 545.6h46.9M119.3 545.6h14.9M136.8 545.6h6.2M145.5 545.6h73.1M69.9 548.5h87.6M160.0 548.5h58.6M69.9 551.4h9.1M81.5 551.4h23.7M107.7 551.4h3.3M113.5 551.4h105.1M69.9 554.3h29.5M104.8 554.3h113.8M69.9 557.2h99.3M171.7 557.2h46.9M69.9 560.1h99.3M171.7 560.1h26.6M200.8 560.1h17.8M69.9 563.0h38.2M110.6 563.0h6.2M119.3 563.0h93.5M215.3 563.0h3.3M69.9 565.9h9.1M81.5 565.9h44.0M128.1 565.9h55.6M186.2 565.9h32.4M69.9 568.8h9.1M81.5 568.8h9.1M93.2 568.8h32.4M128.1 568.8h12.0M142.6 568.8h6.2M151.3 568.8h9.1M163.0 568.8h55.6M69.9 571.7h6.2M78.6 571.7h32.4M116.4 571.7h3.3M128.1 571.7h17.8M148.4 571.7h70.2M69.9 574.6h29.5M136.8 574.6h70.2M209.5 574.6h9.1M69.9 577.5h26.6M145.5 577.5h35.3M183.3 577.5h35.3M72.8 580.4h17.8M145.5 580.4h55.6M203.7 580.4h6.2M212.4 580.4h6.2M72.8 583.3h9.1M84.4 583.3h6.2M142.6 583.3h3.3M148.4 583.3h70.2M69.9 586.2h20.8M145.5 586.2h73.1M69.9 589.1h20.8M151.3 589.1h67.3M69.9 592.0h20.8M148.4 592.0h61.5M212.4 592.0h6.2M69.9 594.9h6.2M78.6 594.9h12.0M148.4 594.9h3.3M154.2 594.9h61.5M69.9 597.8h17.8M148.4 597.8h70.2M69.9 600.7h17.8M148.4 600.7h3.3M154.2 600.7h64.4M69.9 603.6h17.8M148.4 603.6h70.2M69.9 606.5h17.8M148.4 606.5h70.2M69.9 609.3h20.8M148.4 609.3h23.7M174.6 609.3h44.0M69.9 612.2h20.8M145.5 612.2h73.1M69.9 615.1h20.8M148.4 615.1h46.9M197.8 615.1h20.8M69.9 618.0h3.3M75.7 618.0h17.8M145.5 618.0h14.9M163.0 618.0h14.9M180.4 618.0h35.3M69.9 620.9h6.2M78.6 620.9h9.1M90.3 620.9h3.3M145.5 620.9h70.2M69.9 623.8h26.6M145.5 623.8h73.1M69.9 626.7h29.5M136.8 626.7h20.8M160.0 626.7h58.6M69.9 629.6h35.3M113.5 629.6h3.3M128.1 629.6h3.3M133.9 629.6h20.8M157.1 629.6h61.5M69.9 632.5h20.8M93.2 632.5h125.4M69.9 635.4h14.9M87.3 635.4h131.3M69.9 638.3h76.0M148.4 638.3h6.2M157.1 638.3h29.5M189.1 638.3h29.5M69.9 641.2h84.7M157.1 641.2h61.5M69.9 644.1h90.5M163.0 644.1h6.2M171.7 644.1h20.8M194.9 644.1h9.1M206.6 644.1h12.0M69.9 647.0h81.8M154.2 647.0h9.1M165.9 647.0h52.7M69.9 649.9h55.6M131.0 649.9h20.8M154.2 649.9h14.9M171.7 649.9h38.2M212.4 649.9h6.2M69.9 652.8h14.9M87.3 652.8h32.4M122.2 652.8h41.1M165.9 652.8h12.0M183.3 652.8h35.3M69.9 655.7h23.7M96.1 655.7h67.3M165.9 655.7h52.7M69.9 658.6h32.4M104.8 658.6h49.8M157.1 658.6h29.5M189.1 658.6h29.5M69.9 661.5h20.8M93.2 661.5h9.1M104.8 661.5h61.5M168.8 661.5h49.8M69.9 664.4h9.1M81.5 664.4h87.6M171.7 664.4h14.9M189.1 664.4h29.5M69.9 667.3h20.8M96.1 667.3h9.1M107.7 667.3h23.7M133.9 667.3h84.7M69.9 670.2h9.1M81.5 670.2h46.9M131.0 670.2h87.6M69.9 673.1h116.7M189.1 673.1h29.5M69.9 676.0h35.3M107.7 676.0h6.2M116.4 676.0h12.0M131.0 676.0h6.2M139.7 676.0h3.3M145.5 676.0h73.1M69.9 678.9h29.5M101.9 678.9h32.4M136.8 678.9h14.9M154.2 678.9h64.4"/>
<path stroke="#fcfcfc" stroke-width="3.35" shape-rendering="crispEdges" d="M90.3 536.9h3.3M154.2 542.7h3.3M163.0 542.7h3.3M116.4 545.6h3.3M78.6 551.4h3.3M110.6 551.4h3.3M168.8 557.2h3.3M168.8 560.1h3.3M183.3 565.9h3.3M78.6 568.8h3.3M139.7 568.8h3.3M148.4 568.8h3.3M160.0 568.8h3.3M180.4 577.5h3.3M69.9 580.4h3.3M200.8 580.4h3.3M81.5 583.3h3.3M209.5 592.0h3.3M75.7 594.9h3.3M215.3 594.9h3.3M171.7 609.3h3.3M177.5 618.0h3.3M215.3 618.0h3.3M87.3 620.9h3.3M215.3 620.9h3.3M154.2 629.6h3.3M90.3 632.5h3.3M186.2 638.3h3.3M160.0 644.1h3.3M168.8 644.1h3.3M192.0 644.1h3.3M163.0 647.0h3.3M125.1 649.9h6.2M151.3 649.9h3.3M168.8 649.9h3.3M180.4 652.8h3.3M93.2 655.7h3.3M163.0 655.7h3.3M101.9 658.6h3.3M186.2 658.6h3.3M78.6 664.4h3.3M168.8 664.4h3.3M78.6 670.2h3.3M128.1 670.2h3.3M186.2 673.1h3.3M104.8 676.0h3.3M136.8 676.0h3.3M142.6 676.0h3.3M133.9 678.9h3.3"/>
<path stroke="#f0f0f0" stroke-width="3.35" shape-rendering="crispEdges" d="M131.0 542.7h3.3M209.5 542.7h3.3M133.9 545.6h3.3M142.6 545.6h3.3M157.1 548.5h3.3M104.8 551.4h3.3M99.0 554.3h6.2M197.8 560.1h3.3M107.7 563.0h3.3M116.4 563.0h3.3M212.4 563.0h3.3M78.6 565.9h3.3M125.1 565.9h3.3M90.3 568.8h3.3M125.1 568.8h3.3M75.7 571.7h3.3M110.6 571.7h6.2M119.3 571.7h9.1M145.5 571.7h3.3M99.0 574.6h9.1M131.0 574.6h6.2M206.6 574.6h3.3M96.1 577.5h3.3M136.8 577.5h9.1M90.3 580.4h6.2M139.7 580.4h6.2M209.5 580.4h3.3M69.9 583.3h3.3M90.3 583.3h3.3M145.5 583.3h3.3M90.3 586.2h3.3M142.6 586.2h3.3M90.3 589.1h3.3M145.5 589.1h6.2M145.5 592.0h3.3M145.5 594.9h3.3M151.3 594.9h3.3M87.3 597.8h3.3M145.5 597.8h3.3M87.3 600.7h3.3M145.5 600.7h3.3M151.3 600.7h3.3M87.3 603.6h3.3M145.5 603.6h3.3M87.3 606.5h3.3M145.5 606.5h3.3M145.5 609.3h3.3M90.3 615.1h3.3M145.5 615.1h3.3M194.9 615.1h3.3M72.8 618.0h3.3M142.6 618.0h3.3M160.0 618.0h3.3M75.7 620.9h3.3M93.2 620.9h3.3M142.6 620.9h3.3M96.1 623.8h3.3M136.8 623.8h9.1M99.0 626.7h6.2M131.0 626.7h6.2M157.1 626.7h3.3M104.8 629.6h9.1M116.4 629.6h12.0M131.0 629.6h3.3M84.4 635.4h3.3M145.5 638.3h3.3M154.2 638.3h3.3M154.2 641.2h3.3M203.7 644.1h3.3M151.3 647.0h3.3M209.5 649.9h3.3M84.4 652.8h3.3M119.3 652.8h3.3M163.0 652.8h3.3M177.5 652.8h3.3M154.2 658.6h3.3M90.3 661.5h3.3M101.9 661.5h3.3M165.9 661.5h3.3M186.2 664.4h3.3M90.3 667.3h6.2M104.8 667.3h3.3M131.0 667.3h3.3M113.5 676.0h3.3M128.1 676.0h3.3M99.0 678.9h3.3M151.3 678.9h3.3"/>
<path stroke="#eaeaea" stroke-width="3.35" shape-rendering="crispEdges" d="M107.7 574.6h6.2M119.3 574.6h12.0M99.0 577.5h3.3M133.9 577.5h3.3M96.1 580.4h3.3M136.8 580.4h3.3M93.2 583.3h3.3M142.6 589.1h3.3M90.3 592.0h3.3M90.3 594.9h3.3M90.3 597.8h3.3M90.3 600.7h3.3M90.3 603.6h3.3M90.3 606.5h3.3M90.3 609.3h3.3M142.6 609.3h3.3M90.3 612.2h3.3M142.6 612.2h3.3M142.6 615.1h3.3M93.2 618.0h3.3M139.7 618.0h3.3M96.1 620.9h3.3M139.7 620.9h3.3M99.0 623.8h3.3M133.9 623.8h3.3M107.7 626.7h3.3M122.2 626.7h3.3M128.1 626.7h3.3"/>
<path stroke="#e4e4e4" stroke-width="3.35" shape-rendering="crispEdges" d="M113.5 574.6h6.2M131.0 577.5h3.3M139.7 583.3h3.3M93.2 586.2h3.3M139.7 586.2h3.3M142.6 592.0h3.3M142.6 594.9h3.3M142.6 597.8h3.3M142.6 603.6h3.3M142.6 606.5h3.3M93.2 615.1h3.3M136.8 620.9h3.3M104.8 626.7h3.3M110.6 626.7h12.0M125.1 626.7h3.3"/>
<path stroke="#dedede" stroke-width="3.35" shape-rendering="crispEdges" d="M101.9 577.5h3.3M128.1 577.5h3.3M99.0 580.4h3.3M96.1 583.3h3.3M93.2 589.1h3.3M142.6 600.7h3.3M139.7 615.1h3.3M101.9 623.8h3.3M131.0 623.8h3.3"/>
<path stroke="#d8d8d8" stroke-width="3.35" shape-rendering="crispEdges" d="M104.8 577.5h3.3M133.9 580.4h3.3M136.8 583.3h3.3M139.7 589.1h3.3M93.2 592.0h3.3M93.2 612.2h3.3M96.1 618.0h3.3M99.0 620.9h3.3"/>
<path stroke="#d2d2d2" stroke-width="3.35" shape-rendering="crispEdges" d="M107.7 577.5h3.3M125.1 577.5h3.3M93.2 594.9h3.3M93.2 609.3h3.3M139.7 612.2h3.3M136.8 618.0h3.3M133.9 620.9h3.3M104.8 623.8h3.3M128.1 623.8h3.3"/>
<path stroke="#cccccc" stroke-width="3.35" shape-rendering="crispEdges" d="M110.6 577.5h3.3M122.2 577.5h3.3M101.9 580.4h3.3M96.1 586.2h3.3M93.2 597.8h3.3M93.2 600.7h3.3M93.2 603.6h3.3M93.2 606.5h3.3"/>
<path stroke="#c6c6c6" stroke-width="3.35" shape-rendering="crispEdges" d="M113.5 577.5h9.1M139.7 592.0h3.3M139.7 609.3h3.3M96.1 615.1h3.3M107.7 623.8h3.3M125.1 623.8h3.3"/>
<path stroke="#aeaeae" stroke-width="3.35" shape-rendering="crispEdges" d="M104.8 580.4h3.3M96.1 612.2h3.3M133.9 618.0h3.3"/>
<path stroke="#969696" stroke-width="3.35" shape-rendering="crispEdges" d="M107.7 580.4h3.3M101.9 583.3h3.3M99.0 586.2h3.3M96.1 609.3h3.3M136.8 612.2h3.3M128.1 620.9h3.3"/>
<path stroke="#848484" stroke-width="3.35" shape-rendering="crispEdges" d="M110.6 580.4h3.3M131.0 583.3h3.3M133.9 586.2h3.3M136.8 592.0h3.3M96.1 606.5h3.3M101.9 618.0h3.3M107.7 620.9h3.3"/>
<path stroke="#787878" stroke-width="3.35" shape-rendering="crispEdges" d="M113.5 580.4h9.1M136.8 609.3h3.3"/>
<path stroke="#7e7e7e" stroke-width="3.35" shape-rendering="crispEdges" d="M122.2 580.4h3.3M96.1 597.8h3.3M96.1 600.7h3.3M96.1 603.6h3.3M125.1 620.9h3.3"/>
<path stroke="#909090" stroke-width="3.35" shape-rendering="crispEdges" d="M125.1 580.4h3.3"/>
<path stroke="#a8a8a8" stroke-width="3.35" shape-rendering="crispEdges" d="M128.1 580.4h3.3"/>
<path stroke="#c0c0c0" stroke-width="3.35" shape-rendering="crispEdges" d="M131.0 580.4h3.3M99.0 583.3h3.3M136.8 586.2h3.3M139.7 594.9h3.3M101.9 620.9h3.3M110.6 623.8h3.3M122.2 623.8h3.3"/>
<path stroke="#5a5a5a" stroke-width="3.35" shape-rendering="crispEdges" d="M104.8 583.3h3.3M136.8 597.8h3.3M136.8 600.7h3.3M136.8 603.6h3.3M113.5 620.9h3.3M119.3 620.9h3.3"/>
<path stroke="#181818" stroke-width="3.35" shape-rendering="crispEdges" d="M107.7 583.3h3.3M99.0 609.3h3.3"/>
<path stroke="#000000" stroke-width="3.35" shape-rendering="crispEdges" d="M110.6 583.3h14.9M104.8 586.2h26.6M101.9 589.1h32.4M101.9 592.0h35.3M99.0 594.9h38.2M99.0 597.8h38.2M99.0 600.7h38.2M99.0 603.6h38.2M99.0 606.5h26.6M128.1 606.5h9.1M101.9 609.3h35.3M101.9 612.2h32.4M104.8 615.1h9.1M116.4 615.1h17.8M107.7 618.0h20.8"/>
<path stroke="#0c0c0c" stroke-width="3.35" shape-rendering="crispEdges" d="M125.1 583.3h3.3"/>
<path stroke="#484848" stroke-width="3.35" shape-rendering="crispEdges" d="M128.1 583.3h3.3"/>
<path stroke="#bababa" stroke-width="3.35" shape-rendering="crispEdges" d="M133.9 583.3h3.3M139.7 597.8h3.3M139.7 600.7h3.3M139.7 603.6h3.3M139.7 606.5h3.3M136.8 615.1h3.3M99.0 618.0h3.3M131.0 620.9h3.3M113.5 623.8h9.1"/>
<path stroke="#3c3c3c" stroke-width="3.35" shape-rendering="crispEdges" d="M101.9 586.2h3.3M133.9 589.1h3.3"/>
<path stroke="#1e1e1e" stroke-width="3.35" shape-rendering="crispEdges" d="M131.0 586.2h3.3"/>
<path stroke="#b4b4b4" stroke-width="3.35" shape-rendering="crispEdges" d="M96.1 589.1h3.3"/>
<path stroke="#606060" stroke-width="3.35" shape-rendering="crispEdges" d="M99.0 589.1h3.3M136.8 606.5h3.3"/>
<path stroke="#a2a2a2" stroke-width="3.35" shape-rendering="crispEdges" d="M136.8 589.1h3.3M104.8 620.9h3.3"/>
<path stroke="#9c9c9c" stroke-width="3.35" shape-rendering="crispEdges" d="M96.1 592.0h3.3"/>
<path stroke="#242424" stroke-width="3.35" shape-rendering="crispEdges" d="M99.0 592.0h3.3M101.9 615.1h3.3"/>
<path stroke="#8a8a8a" stroke-width="3.35" shape-rendering="crispEdges" d="M96.1 594.9h3.3M99.0 615.1h3.3"/>
<path stroke="#6c6c6c" stroke-width="3.35" shape-rendering="crispEdges" d="M136.8 594.9h3.3M110.6 620.9h3.3"/>
<path stroke="#060606" stroke-width="3.35" shape-rendering="crispEdges" d="M125.1 606.5h3.3M113.5 615.1h3.3"/>
<path stroke="#4e4e4e" stroke-width="3.35" shape-rendering="crispEdges" d="M99.0 612.2h3.3"/>
<path stroke="#2a2a2a" stroke-width="3.35" shape-rendering="crispEdges" d="M133.9 612.2h3.3M128.1 618.0h3.3"/>
<path stroke="#727272" stroke-width="3.35" shape-rendering="crispEdges" d="M133.9 615.1h3.3M131.0 618.0h3.3"/>
<path stroke="#424242" stroke-width="3.35" shape-rendering="crispEdges" d="M104.8 618.0h3.3"/>
<path stroke="#545454" stroke-width="3.35" shape-rendering="crispEdges" d="M116.4 620.9h3.3"/>
<path stroke="#666666" stroke-width="3.35" shape-rendering="crispEdges" d="M122.2 620.9h3.3"/>
<path d="M91.3 567.3a12.1 12.1 0 1 0 24.2 0a12.1 12.1 0 1 0 -24.2 0M113.8 563.4a12.1 12.1 0 1 0 24.2 0a12.1 12.1 0 1 0 -24.2 0M138.0 559.6a12.1 12.1 0 1 0 24.2 0a12.1 12.1 0 1 0 -24.2 0M153.5 576.6a12.1 12.1 0 1 0 24.2 0a12.1 12.1 0 1 0 -24.2 0M177.2 573.3a12.1 12.1 0 1 0 24.2 0a12.1 12.1 0 1 0 -24.2 0M130.3 581.0a12.1 12.1 0 1 0 24.2 0a12.1 12.1 0 1 0 -24.2 0M106.1 586.5a12.1 12.1 0 1 0 24.2 0a12.1 12.1 0 1 0 -24.2 0M81.9 589.8a12.1 12.1 0 1 0 24.2 0a12.1 12.1 0 1 0 -24.2 0M168.9 595.7a12.1 12.1 0 1 0 24.2 0a12.1 12.1 0 1 0 -24.2 0M75.3 614.5a12.1 12.1 0 1 0 24.2 0a12.1 12.1 0 1 0 -24.2 0M184.7 614.5a12.1 12.1 0 1 0 24.2 0a12.1 12.1 0 1 0 -24.2 0M89.6 631.7a12.1 12.1 0 1 0 24.2 0a12.1 12.1 0 1 0 -24.2 0M113.8 627.2a12.1 12.1 0 1 0 24.2 0a12.1 12.1 0 1 0 -24.2 0M153.5 639.8a12.1 12.1 0 1 0 24.2 0a12.1 12.1 0 1 0 -24.2 0M177.2 640.5a12.1 12.1 0 1 0 24.2 0a12.1 12.1 0 1 0 -24.2 0M106.1 649.3a12.1 12.1 0 1 0 24.2 0a12.1 12.1 0 1 0 -24.2 0M129.2 644.9a12.1 12.1 0 1 0 24.2 0a12.1 12.1 0 1 0 -24.2 0" fill="none" stroke="#606060" stroke-width="1.0"/>
<rect x="94.9" y="557.3" width="98.4" height="98.4" fill="none" stroke="#ff0000" stroke-width="1.3"/>
<circle cx="157.8" cy="600.2" r="12.1" fill="none" stroke="#0000ff" stroke-width="1.3"/>
<circle cx="133.6" cy="604.1" r="12.1" fill="none" stroke="#ffa500" stroke-width="1.3"/>
<circle cx="150.1" cy="621.7" r="12.1" fill="none" stroke="#00ff00" stroke-width="1.3"/>
<circle cx="173.3" cy="618.0" r="12.1" fill="none" stroke="#ff0000" stroke-width="1.3"/>
<path d="M141.1 606.5h6M144.1 603.5v6" stroke="#ff0000" stroke-width="1.1"/>
<text transform="translate(143.80,546.50) scale(1.144,1.06)" font-family="Liberation Sans" font-size="11" fill="#ff0000" stroke="#ff0000" stroke-width="0.15" text-anchor="middle" style="white-space:pre" >N</text>
<text transform="translate(79.80,610.50) scale(1.144,1.06)" font-family="Liberation Sans" font-size="11" fill="#ff0000" stroke="#ff0000" stroke-width="0.15" text-anchor="middle" style="white-space:pre" dy="-1.2">E</text>
<rect x="69.9" y="532.6" width="148.3" height="147.7" fill="none" stroke="#222" stroke-width="1.1"/>
<line x1="78.5" y1="680.3" x2="78.5" y2="683.8" stroke="#222" stroke-width="1"/>
<text transform="translate(75.90,695.90) scale(1.144,1.06)" font-family="Liberation Sans" font-size="10.6" fill="#111" stroke="#111" stroke-width="0.15" text-anchor="middle" style="white-space:pre" >−4</text>
<line x1="66.4" y1="672.1" x2="69.9" y2="672.1" stroke="#222" stroke-width="1"/>
<text transform="translate(61.60,676.00) scale(1.144,1.06)" font-family="Liberation Sans" font-size="10.6" fill="#111" stroke="#111" stroke-width="0.15" text-anchor="end" style="white-space:pre" >−4</text>
<line x1="111.3" y1="680.3" x2="111.3" y2="683.8" stroke="#222" stroke-width="1"/>
<text transform="translate(108.70,695.90) scale(1.144,1.06)" font-family="Liberation Sans" font-size="10.6" fill="#111" stroke="#111" stroke-width="0.15" text-anchor="middle" style="white-space:pre" >−2</text>
<line x1="66.4" y1="639.3" x2="69.9" y2="639.3" stroke="#222" stroke-width="1"/>
<text transform="translate(61.60,643.20) scale(1.144,1.06)" font-family="Liberation Sans" font-size="10.6" fill="#111" stroke="#111" stroke-width="0.15" text-anchor="end" style="white-space:pre" >−2</text>
<line x1="144.1" y1="680.3" x2="144.1" y2="683.8" stroke="#222" stroke-width="1"/>
<text transform="translate(144.10,695.90) scale(1.144,1.06)" font-family="Liberation Sans" font-size="10.6" fill="#111" stroke="#111" stroke-width="0.15" text-anchor="middle" style="white-space:pre" >0</text>
<line x1="66.4" y1="606.5" x2="69.9" y2="606.5" stroke="#222" stroke-width="1"/>
<text transform="translate(61.60,610.40) scale(1.144,1.06)" font-family="Liberation Sans" font-size="10.6" fill="#111" stroke="#111" stroke-width="0.15" text-anchor="end" style="white-space:pre" >0</text>
<line x1="176.9" y1="680.3" x2="176.9" y2="683.8" stroke="#222" stroke-width="1"/>
<text transform="translate(176.90,695.90) scale(1.144,1.06)" font-family="Liberation Sans" font-size="10.6" fill="#111" stroke="#111" stroke-width="0.15" text-anchor="middle" style="white-space:pre" >2</text>
<line x1="66.4" y1="573.7" x2="69.9" y2="573.7" stroke="#222" stroke-width="1"/>
<text transform="translate(61.60,577.60) scale(1.144,1.06)" font-family="Liberation Sans" font-size="10.6" fill="#111" stroke="#111" stroke-width="0.15" text-anchor="end" style="white-space:pre" >2</text>
<line x1="209.7" y1="680.3" x2="209.7" y2="683.8" stroke="#222" stroke-width="1"/>
<text transform="translate(209.70,695.90) scale(1.144,1.06)" font-family="Liberation Sans" font-size="10.6" fill="#111" stroke="#111" stroke-width="0.15" text-anchor="middle" style="white-space:pre" >4</text>
<line x1="66.4" y1="540.9" x2="69.9" y2="540.9" stroke="#222" stroke-width="1"/>
<text transform="translate(61.60,544.80) scale(1.144,1.06)" font-family="Liberation Sans" font-size="10.6" fill="#111" stroke="#111" stroke-width="0.15" text-anchor="end" style="white-space:pre" >4</text>
<text transform="translate(144.05,525.90) scale(1.144,1.06)" font-family="Liberation Sans" font-size="12" fill="#111" stroke="#111" stroke-width="0.15" text-anchor="middle" style="white-space:pre" >Fiber Positions</text>
<text transform="translate(143.80,706.40) scale(1.144,1.06)" font-family="Liberation Sans" font-size="10.5" fill="#111" stroke="#111" stroke-width="0.15" text-anchor="middle" style="white-space:pre" >arcsecs</text>
<path stroke="#248490" stroke-width="3.53" shape-rendering="crispEdges" d="M255.4 534.1h6.6M385.1 534.1h18.9M255.4 537.2h6.6M385.1 537.2h18.9M255.4 540.3h6.6M348.0 546.4h3.5M348.0 549.5h3.5M344.9 552.6h3.5M341.9 558.8h3.5M320.2 564.9h3.5M338.8 568.0h3.5M267.8 574.1h3.5M307.9 574.1h6.6M335.7 574.1h3.5M264.7 577.2h3.5M261.6 580.3h3.5M261.6 583.4h3.5M335.7 583.4h3.5M357.3 583.4h6.6M255.4 586.4h6.6M335.7 586.4h3.5M351.1 586.4h3.5M338.8 589.5h3.5M369.6 589.5h3.5M344.9 592.6h6.6M366.6 595.7h3.5M344.9 604.9h3.5M255.4 608.0h6.6M341.9 608.0h3.5M264.7 611.1h3.5M270.8 614.1h3.5M338.8 614.1h3.5M267.8 617.2h6.6M335.7 617.2h3.5M264.7 620.3h9.7M332.6 620.3h3.5M255.4 623.4h18.9M255.4 626.5h18.9M255.4 629.5h22.0M326.4 629.5h3.5M255.4 632.6h22.0M323.3 632.6h3.5M255.4 635.7h28.2M320.2 635.7h3.5M289.4 638.8h6.6M304.8 638.8h6.6M360.4 648.0h3.5"/>
<path stroke="#247e90" stroke-width="3.53" shape-rendering="crispEdges" d="M261.6 534.1h3.5M382.0 534.1h3.5M261.6 537.2h3.5M382.0 537.2h3.5M255.4 543.4h6.6M351.1 549.5h3.5M348.0 552.6h3.5M344.9 555.7h3.5M341.9 561.8h3.5M335.7 577.2h3.5M335.7 580.3h3.5M255.4 583.4h6.6M369.6 586.4h3.5M341.9 589.5h3.5M348.0 589.5h3.5M369.6 592.6h3.5M366.6 598.8h3.5M363.5 601.8h3.5M261.6 611.1h3.5M267.8 614.1h3.5M264.7 617.2h3.5M255.4 620.3h9.7M329.5 626.5h3.5M255.4 638.8h22.0M311.0 638.8h3.5M360.4 651.1h3.5"/>
<path stroke="#2a7890" stroke-width="3.53" shape-rendering="crispEdges" d="M264.7 534.1h3.5M329.5 534.1h3.5M378.9 534.1h3.5M264.7 537.2h3.5M329.5 537.2h3.5M378.9 537.2h3.5M264.7 540.3h3.5M382.0 540.3h22.0M354.2 543.4h3.5M261.6 546.4h3.5M354.2 546.4h3.5M255.4 549.5h9.7M354.2 549.5h6.6M255.4 552.6h9.7M354.2 552.6h6.6M255.4 555.7h9.7M348.0 555.7h6.6M255.4 558.8h9.7M344.9 558.8h3.5M255.4 561.8h9.7M344.9 561.8h3.5M255.4 564.9h9.7M255.4 568.0h12.8M341.9 568.0h3.5M255.4 571.1h12.8M277.0 571.1h18.9M255.4 574.1h9.7M338.8 574.1h3.5M255.4 577.2h6.6M338.8 577.2h3.5M338.8 580.3h3.5M341.9 583.4h3.5M351.1 583.4h3.5M366.6 583.4h3.5M341.9 586.4h9.7M369.6 595.7h3.5M369.6 598.8h3.5M366.6 601.8h3.5M354.2 604.9h6.6M344.9 608.0h3.5M341.9 611.1h3.5M255.4 614.1h9.7M338.8 617.2h3.5M335.7 620.3h3.5M332.6 623.4h3.5M329.5 629.5h3.5M323.3 635.7h3.5M348.0 635.7h3.5M314.1 638.8h6.6M351.1 638.8h15.8M255.4 641.8h22.0M357.3 641.8h12.8M357.3 644.9h3.5M363.5 644.9h9.7M366.6 648.0h6.6M357.3 651.1h3.5M366.6 651.1h6.6M360.4 654.1h9.7"/>
<path stroke="#306c90" stroke-width="3.53" shape-rendering="crispEdges" d="M267.8 534.1h3.5M375.8 534.1h3.5M267.8 537.2h3.5M375.8 537.2h3.5M267.8 540.3h3.5M375.8 540.3h3.5M267.8 543.4h3.5M357.3 543.4h3.5M267.8 546.4h3.5M326.4 546.4h3.5M360.4 546.4h9.7M267.8 549.5h3.5M366.6 549.5h6.6M264.7 552.6h3.5M366.6 552.6h6.6M264.7 555.7h3.5M357.3 555.7h6.6M264.7 558.8h3.5M351.1 558.8h3.5M264.7 561.8h3.5M348.0 561.8h3.5M267.8 564.9h3.5M277.0 568.0h3.5M317.2 568.0h3.5M344.9 568.0h3.5M301.7 571.1h6.6M344.9 571.1h3.5M344.9 580.3h3.5M351.1 580.3h12.8M372.7 592.6h3.5M372.7 595.7h3.5M397.4 598.8h6.6M369.6 601.8h3.5M363.5 604.9h3.5M351.1 608.0h3.5M344.9 611.1h3.5M341.9 620.3h3.5M338.8 623.4h3.5M335.7 626.5h3.5M332.6 629.5h3.5M341.9 632.6h22.0M329.5 635.7h3.5M341.9 635.7h3.5M366.6 635.7h6.6M323.3 638.8h3.5M344.9 638.8h3.5M369.6 638.8h3.5M283.2 641.8h3.5M289.4 641.8h12.8M351.1 641.8h3.5M255.4 644.9h9.7M277.0 644.9h3.5M267.8 648.0h9.7M354.2 648.0h3.5M372.7 648.0h3.5M354.2 651.1h3.5M372.7 651.1h3.5M372.7 654.1h3.5M357.3 657.2h3.5M372.7 657.2h3.5M360.4 660.3h15.8M360.4 663.4h12.8"/>
<path stroke="#306690" stroke-width="3.53" shape-rendering="crispEdges" d="M270.8 534.1h3.5M357.3 534.1h3.5M372.7 534.1h3.5M270.8 537.2h3.5M357.3 537.2h3.5M372.7 537.2h3.5M270.8 540.3h3.5M357.3 540.3h3.5M372.7 540.3h3.5M270.8 543.4h3.5M360.4 543.4h12.8M369.6 546.4h3.5M267.8 552.6h3.5M267.8 555.7h3.5M363.5 555.7h9.7M267.8 558.8h3.5M354.2 558.8h6.6M267.8 561.8h3.5M320.2 561.8h3.5M351.1 561.8h3.5M270.8 564.9h3.5M348.0 564.9h3.5M280.1 568.0h6.6M348.0 568.0h3.5M307.9 571.1h6.6M344.9 574.1h3.5M344.9 577.2h3.5M348.0 580.3h3.5M363.5 580.3h3.5M397.4 592.6h6.6M397.4 595.7h6.6M372.7 598.8h3.5M397.4 601.8h6.6M354.2 608.0h3.5M344.9 614.1h3.5M344.9 617.2h3.5M341.9 623.4h3.5M338.8 626.5h9.7M335.7 629.5h22.0M332.6 632.6h9.7M363.5 632.6h9.7M332.6 635.7h9.7M326.4 638.8h3.5M341.9 638.8h3.5M286.3 641.8h3.5M301.7 641.8h9.7M348.0 641.8h3.5M372.7 641.8h3.5M351.1 644.9h3.5M372.7 644.9h3.5M255.4 648.0h12.8M270.8 651.1h3.5M354.2 654.1h3.5M357.3 660.3h3.5M375.8 660.3h3.5M372.7 663.4h9.7M360.4 666.5h18.9M360.4 669.5h15.8"/>
<path stroke="#36608a" stroke-width="3.53" shape-rendering="crispEdges" d="M273.9 534.1h3.5M273.9 537.2h3.5M273.9 540.3h3.5M273.9 543.4h3.5M273.9 546.4h3.5M273.9 549.5h3.5M273.9 552.6h3.5M366.6 558.8h3.5M351.1 568.0h3.5M348.0 574.1h3.5M394.3 601.8h3.5M351.1 626.5h3.5M366.6 629.5h3.5M317.2 641.8h3.5M348.0 644.9h3.5M354.2 657.2h3.5M385.1 663.4h3.5M385.1 666.5h3.5M388.2 669.5h3.5M391.2 672.6h12.8M298.6 675.7h3.5M298.6 678.8h3.5"/>
<path stroke="#365a8a" stroke-width="3.53" shape-rendering="crispEdges" d="M277.0 534.1h3.5M326.4 534.1h3.5M277.0 537.2h3.5M326.4 537.2h3.5M277.0 540.3h3.5M326.4 540.3h3.5M277.0 543.4h3.5M277.0 546.4h3.5M375.8 546.4h3.5M277.0 549.5h3.5M277.0 552.6h3.5M273.9 555.7h6.6M372.7 555.7h3.5M273.9 558.8h6.6M369.6 558.8h3.5M273.9 561.8h3.5M357.3 561.8h3.5M277.0 564.9h6.6M354.2 564.9h3.5M289.4 568.0h6.6M314.1 568.0h3.5M351.1 571.1h3.5M351.1 577.2h6.6M397.4 586.4h6.6M375.8 589.5h3.5M394.3 589.5h3.5M394.3 592.6h3.5M394.3 595.7h3.5M372.7 601.8h3.5M369.6 604.9h3.5M394.3 604.9h3.5M360.4 608.0h3.5M397.4 608.0h6.6M351.1 611.1h3.5M348.0 614.1h3.5M348.0 617.2h3.5M348.0 620.3h3.5M348.0 623.4h6.6M354.2 626.5h6.6M369.6 629.5h3.5M372.7 632.6h3.5M332.6 638.8h6.6M320.2 641.8h6.6M341.9 641.8h3.5M283.2 644.9h3.5M261.6 651.1h6.6M351.1 651.1h3.5M375.8 651.1h3.5M270.8 654.1h6.6M375.8 654.1h3.5M382.0 660.3h3.5M388.2 663.4h6.6M388.2 666.5h9.7M357.3 669.5h3.5M391.2 669.5h12.8M273.9 672.6h28.2M357.3 672.6h3.5M270.8 675.7h3.5M301.7 675.7h3.5M270.8 678.8h3.5M301.7 678.8h3.5"/>
<path stroke="#36548a" stroke-width="3.53" shape-rendering="crispEdges" d="M280.1 534.1h3.5M280.1 537.2h3.5M280.1 540.3h3.5M280.1 543.4h3.5M280.1 546.4h3.5M280.1 549.5h3.5M360.4 561.8h6.6M354.2 568.0h3.5M351.1 574.1h3.5M375.8 586.4h3.5M351.1 620.3h3.5M360.4 626.5h6.6M378.9 657.2h3.5M354.2 660.3h3.5M397.4 666.5h6.6M304.8 675.7h3.5M357.3 675.7h3.5M304.8 678.8h3.5M357.3 678.8h3.5"/>
<path stroke="#3c548a" stroke-width="3.53" shape-rendering="crispEdges" d="M283.2 534.1h3.5M283.2 537.2h3.5M283.2 540.3h3.5M283.2 543.4h3.5M283.2 546.4h3.5M378.9 546.4h3.5M283.2 549.5h3.5M375.8 549.5h3.5M280.1 552.6h6.6M323.3 552.6h3.5M280.1 555.7h3.5M280.1 558.8h3.5M372.7 558.8h3.5M277.0 561.8h3.5M366.6 561.8h6.6M283.2 564.9h3.5M317.2 564.9h3.5M357.3 564.9h3.5M295.5 568.0h3.5M354.2 571.1h3.5M357.3 577.2h6.6M372.7 580.3h3.5M375.8 592.6h3.5M363.5 608.0h3.5M394.3 608.0h3.5M354.2 611.1h3.5M397.4 611.1h6.6M351.1 614.1h3.5M351.1 617.2h3.5M354.2 623.4h3.5M366.6 626.5h6.6M372.7 629.5h3.5M326.4 641.8h3.5M338.8 641.8h3.5M286.3 644.9h6.6M344.9 644.9h3.5M375.8 644.9h3.5M280.1 648.0h3.5M348.0 648.0h3.5M375.8 648.0h3.5M255.4 651.1h6.6M277.0 651.1h3.5M267.8 654.1h3.5M351.1 654.1h3.5M385.1 660.3h6.6M354.2 663.4h3.5M394.3 663.4h9.7M273.9 669.5h12.8M270.8 672.6h3.5M301.7 672.6h6.6M307.9 675.7h3.5M307.9 678.8h3.5"/>
<path stroke="#3c488a" stroke-width="3.53" shape-rendering="crispEdges" d="M286.3 534.1h3.5M286.3 537.2h3.5M286.3 540.3h3.5M286.3 543.4h3.5M286.3 546.4h3.5M382.0 546.4h3.5M286.3 549.5h3.5M286.3 552.6h3.5M283.2 561.8h3.5M286.3 564.9h3.5M304.8 568.0h3.5M360.4 571.1h12.8M357.3 574.1h3.5M397.4 583.4h6.6M391.2 598.8h3.5M369.6 608.0h3.5M357.3 611.1h3.5M397.4 614.1h6.6M357.3 620.3h3.5M375.8 635.7h3.5M332.6 641.8h6.6M295.5 644.9h6.6M341.9 644.9h3.5M280.1 651.1h3.5M348.0 651.1h3.5M277.0 657.2h3.5M397.4 660.3h6.6M277.0 666.5h6.6M301.7 669.5h3.5M354.2 669.5h3.5M267.8 675.7h3.5M311.0 675.7h3.5M267.8 678.8h3.5M311.0 678.8h3.5"/>
<path stroke="#423c84" stroke-width="3.53" shape-rendering="crispEdges" d="M289.4 534.1h3.5M289.4 537.2h3.5M289.4 540.3h3.5M323.3 540.3h3.5M289.4 543.4h3.5M323.3 543.4h3.5M289.4 546.4h3.5M289.4 549.5h3.5M317.2 558.8h3.5M375.8 558.8h3.5M286.3 561.8h3.5M375.8 561.8h3.5M289.4 564.9h3.5M372.7 574.1h3.5M375.8 580.3h3.5M397.4 580.3h6.6M378.9 586.4h3.5M391.2 586.4h3.5M378.9 589.5h3.5M375.8 604.9h3.5M372.7 608.0h3.5M363.5 611.1h6.6M391.2 611.1h3.5M357.3 614.1h3.5M360.4 617.2h12.8M372.7 620.3h3.5M375.8 626.5h3.5M375.8 629.5h3.5M326.4 644.9h6.6M378.9 644.9h3.5M286.3 648.0h3.5M341.9 648.0h3.5M378.9 648.0h3.5M283.2 651.1h3.5M344.9 651.1h3.5M283.2 654.1h3.5M382.0 654.1h3.5M264.7 657.2h3.5M348.0 657.2h3.5M391.2 657.2h12.8M280.1 660.3h3.5M320.2 660.3h3.5M280.1 663.4h18.9M320.2 663.4h3.5M267.8 666.5h3.5M304.8 666.5h3.5M351.1 666.5h3.5M311.0 669.5h3.5M264.7 672.6h3.5M314.1 672.6h3.5M264.7 675.7h3.5M314.1 675.7h3.5M264.7 678.8h3.5M314.1 678.8h3.5"/>
<path stroke="#482a7e" stroke-width="3.53" shape-rendering="crispEdges" d="M292.4 534.1h3.5M292.4 537.2h3.5M320.2 549.5h3.5M397.4 577.2h6.6M388.2 589.5h3.5M388.2 592.6h3.5M388.2 608.0h3.5M388.2 611.1h3.5M394.3 654.1h9.7M298.6 660.3h3.5M314.1 660.3h3.5M307.9 663.4h6.6M323.3 666.5h3.5M261.6 675.7h3.5M317.2 675.7h3.5M261.6 678.8h3.5M317.2 678.8h3.5"/>
<path stroke="#481e6c" stroke-width="3.53" shape-rendering="crispEdges" d="M295.5 534.1h3.5M295.5 537.2h3.5M317.2 543.4h3.5M378.9 574.1h3.5M394.3 574.1h3.5M326.4 651.1h3.5M391.2 651.1h12.8M261.6 660.3h3.5M320.2 675.7h3.5M320.2 678.8h3.5"/>
<path stroke="#481266" stroke-width="3.53" shape-rendering="crispEdges" d="M298.6 534.1h3.5M298.6 537.2h3.5M314.1 543.4h3.5M385.1 552.6h18.9M311.0 555.7h3.5M295.5 558.8h3.5M311.0 558.8h3.5M382.0 558.8h3.5M295.5 561.8h3.5M388.2 577.2h3.5M382.0 580.3h3.5M385.1 586.4h3.5M385.1 589.5h3.5M385.1 592.6h3.5M385.1 595.7h3.5M382.0 598.8h6.6M382.0 601.8h6.6M382.0 604.9h3.5M382.0 608.0h3.5M385.1 617.2h3.5M382.0 620.3h3.5M382.0 623.4h3.5M394.3 623.4h9.7M382.0 626.5h3.5M382.0 629.5h3.5M385.1 648.0h18.9M295.5 651.1h3.5M314.1 651.1h3.5M332.6 651.1h3.5M307.9 654.1h3.5M332.6 654.1h6.6M338.8 660.3h3.5M261.6 663.4h3.5M255.4 666.5h6.6M329.5 666.5h3.5M341.9 666.5h3.5M341.9 669.5h3.5M326.4 672.6h3.5M344.9 672.6h3.5M323.3 675.7h3.5M344.9 675.7h3.5M323.3 678.8h3.5M344.9 678.8h3.5"/>
<path stroke="#480c60" stroke-width="3.53" shape-rendering="crispEdges" d="M301.7 534.1h3.5M314.1 534.1h3.5M301.7 537.2h3.5M314.1 537.2h3.5M301.7 540.3h3.5M298.6 543.4h6.6M298.6 546.4h6.6M311.0 546.4h3.5M298.6 549.5h3.5M311.0 549.5h3.5M298.6 552.6h3.5M298.6 555.7h3.5M385.1 555.7h18.9M298.6 558.8h3.5M298.6 561.8h3.5M382.0 561.8h3.5M382.0 564.9h3.5M382.0 568.0h3.5M394.3 568.0h9.7M382.0 571.1h3.5M388.2 574.1h3.5M382.0 577.2h3.5M385.1 580.3h3.5M388.2 623.4h3.5M385.1 641.8h18.9M385.1 644.9h18.9M298.6 651.1h15.8M332.6 657.2h6.6M332.6 660.3h3.5M255.4 663.4h6.6M338.8 663.4h3.5M338.8 666.5h3.5M341.9 672.6h3.5M326.4 675.7h3.5M341.9 675.7h3.5M326.4 678.8h3.5M341.9 678.8h3.5"/>
<path stroke="#48065a" stroke-width="3.53" shape-rendering="crispEdges" d="M304.8 534.1h3.5M311.0 534.1h3.5M304.8 537.2h3.5M311.0 537.2h3.5M304.8 540.3h3.5M311.0 540.3h3.5M304.8 543.4h9.7M304.8 546.4h6.6M304.8 549.5h6.6M307.9 552.6h3.5M307.9 555.7h3.5M307.9 558.8h3.5M385.1 558.8h18.9M307.9 561.8h3.5M397.4 564.9h6.6M388.2 568.0h3.5M385.1 577.2h3.5M385.1 626.5h18.9M385.1 629.5h18.9M385.1 632.6h18.9M385.1 635.7h18.9M335.7 660.3h3.5M332.6 663.4h6.6M332.6 666.5h3.5M332.6 669.5h3.5M338.8 672.6h3.5M329.5 675.7h3.5M338.8 675.7h3.5M329.5 678.8h3.5M338.8 678.8h3.5"/>
<path stroke="#420054" stroke-width="3.53" shape-rendering="crispEdges" d="M307.9 534.1h3.5M307.9 537.2h3.5M385.1 561.8h18.9M385.1 564.9h6.6M385.1 568.0h3.5M335.7 672.6h3.5M332.6 675.7h6.6M332.6 678.8h6.6"/>
<path stroke="#48186c" stroke-width="3.53" shape-rendering="crispEdges" d="M317.2 534.1h3.5M317.2 537.2h3.5M295.5 540.3h3.5M317.2 540.3h3.5M295.5 543.4h3.5M295.5 546.4h3.5M295.5 549.5h3.5M314.1 549.5h3.5M382.0 555.7h3.5M397.4 571.1h6.6M388.2 580.3h3.5M382.0 586.4h3.5M382.0 589.5h3.5M382.0 592.6h3.5M385.1 608.0h3.5M385.1 611.1h3.5M385.1 614.1h3.5M388.2 620.3h3.5M382.0 635.7h3.5M382.0 638.8h3.5M382.0 641.8h3.5M317.2 651.1h3.5M329.5 651.1h3.5M335.7 651.1h3.5M298.6 654.1h6.6M311.0 654.1h3.5M329.5 654.1h3.5M307.9 657.2h3.5M329.5 657.2h3.5M338.8 657.2h3.5M329.5 660.3h3.5M341.9 660.3h3.5M329.5 663.4h3.5M341.9 663.4h3.5M261.6 666.5h3.5M344.9 666.5h3.5M255.4 669.5h6.6M326.4 669.5h3.5M344.9 669.5h3.5M323.3 672.6h3.5"/>
<path stroke="#481e72" stroke-width="3.53" shape-rendering="crispEdges" d="M320.2 534.1h3.5M320.2 537.2h3.5M317.2 546.4h3.5M314.1 552.6h3.5M382.0 552.6h3.5M304.8 564.9h6.6M378.9 568.0h3.5M378.9 571.1h3.5M397.4 574.1h6.6M378.9 577.2h3.5M391.2 577.2h3.5M378.9 611.1h3.5M378.9 614.1h3.5M378.9 617.2h3.5M388.2 617.2h3.5M391.2 620.3h3.5M382.0 644.9h3.5M298.6 648.0h15.8M332.6 648.0h3.5M382.0 648.0h3.5M292.4 651.1h3.5M320.2 651.1h6.6M385.1 651.1h6.6M295.5 654.1h3.5M314.1 654.1h3.5M338.8 654.1h3.5M301.7 657.2h6.6M311.0 657.2h3.5M344.9 663.4h3.5M320.2 672.6h3.5M348.0 672.6h3.5M348.0 675.7h3.5M348.0 678.8h3.5"/>
<path stroke="#423684" stroke-width="3.53" shape-rendering="crispEdges" d="M323.3 534.1h3.5M323.3 537.2h3.5M289.4 552.6h3.5M378.9 592.6h3.5M397.4 617.2h6.6M335.7 644.9h3.5M283.2 657.2h3.5M323.3 660.3h3.5M298.6 663.4h3.5M307.9 666.5h3.5M314.1 669.5h3.5M351.1 669.5h3.5"/>
<path stroke="#1ea28a" stroke-width="3.53" shape-rendering="crispEdges" d="M332.6 534.1h3.5M332.6 552.6h3.5M329.5 558.8h3.5M326.4 561.8h3.5M357.3 589.5h3.5M332.6 592.6h3.5M357.3 592.6h3.5M335.7 598.8h3.5M261.6 601.8h3.5M283.2 617.2h3.5M329.5 617.2h3.5M304.8 635.7h3.5"/>
<path stroke="#48c06c" stroke-width="3.53" shape-rendering="crispEdges" d="M335.7 534.1h6.6M301.7 577.2h3.5M267.8 595.7h3.5M329.5 595.7h3.5M329.5 604.9h3.5M289.4 620.3h3.5M320.2 620.3h3.5"/>
<path stroke="#1e9c8a" stroke-width="3.53" shape-rendering="crispEdges" d="M341.9 534.1h3.5M341.9 537.2h3.5M338.8 540.3h3.5M338.8 543.4h3.5M338.8 546.4h3.5M338.8 549.5h3.5M338.8 552.6h3.5M332.6 555.7h6.6M335.7 558.8h3.5M323.3 561.8h3.5M323.3 564.9h6.6M323.3 568.0h3.5M273.9 577.2h3.5M326.4 577.2h3.5M270.8 580.3h3.5M329.5 580.3h3.5M267.8 583.4h3.5M264.7 589.5h3.5M363.5 589.5h3.5M360.4 592.6h3.5M261.6 595.7h3.5M357.3 595.7h6.6M255.4 598.8h6.6M338.8 598.8h3.5M357.3 598.8h3.5M338.8 601.8h3.5M335.7 604.9h3.5M267.8 608.0h3.5M335.7 608.0h3.5M277.0 611.1h3.5M280.1 614.1h3.5M332.6 614.1h3.5M283.2 620.3h3.5M283.2 623.4h3.5M323.3 626.5h3.5M286.3 629.5h3.5M320.2 629.5h3.5M289.4 632.6h3.5M317.2 632.6h3.5M292.4 635.7h3.5M307.9 635.7h6.6"/>
<path stroke="#1e968a" stroke-width="3.53" shape-rendering="crispEdges" d="M344.9 534.1h3.5M344.9 537.2h3.5M341.9 540.3h3.5M341.9 543.4h3.5M341.9 546.4h3.5M326.4 549.5h3.5M338.8 555.7h3.5M323.3 558.8h3.5M332.6 558.8h3.5M332.6 561.8h6.6M332.6 564.9h6.6M320.2 568.0h3.5M320.2 571.1h6.6M295.5 574.1h6.6M320.2 574.1h6.6M267.8 580.3h3.5M264.7 586.4h3.5M357.3 586.4h6.6M332.6 589.5h3.5M354.2 589.5h3.5M261.6 592.6h3.5M354.2 592.6h3.5M363.5 592.6h3.5M255.4 595.7h6.6M335.7 595.7h6.6M354.2 595.7h3.5M341.9 598.8h3.5M351.1 598.8h6.6M360.4 598.8h3.5M255.4 601.8h6.6M341.9 601.8h3.5M261.6 604.9h3.5M338.8 604.9h3.5M264.7 608.0h3.5M273.9 611.1h3.5M335.7 611.1h3.5M280.1 617.2h3.5M280.1 620.3h3.5M329.5 620.3h3.5M280.1 623.4h3.5M326.4 623.4h3.5M283.2 626.5h3.5M286.3 632.6h3.5M289.4 635.7h3.5"/>
<path stroke="#248a90" stroke-width="3.53" shape-rendering="crispEdges" d="M348.0 534.1h3.5M348.0 537.2h3.5M329.5 540.3h3.5M348.0 540.3h3.5M348.0 543.4h3.5M344.9 546.4h3.5M344.9 549.5h3.5M341.9 555.7h3.5M329.5 561.8h3.5M338.8 561.8h3.5M329.5 564.9h3.5M338.8 564.9h3.5M329.5 568.0h3.5M326.4 571.1h12.8M270.8 574.1h22.0M304.8 574.1h3.5M314.1 574.1h3.5M329.5 574.1h6.6M267.8 577.2h3.5M332.6 577.2h3.5M264.7 580.3h3.5M332.6 580.3h3.5M261.6 586.4h3.5M366.6 586.4h3.5M255.4 589.5h6.6M335.7 589.5h3.5M351.1 589.5h3.5M255.4 592.6h6.6M338.8 592.6h6.6M366.6 592.6h3.5M344.9 595.7h6.6M363.5 598.8h3.5M348.0 601.8h6.6M360.4 601.8h3.5M341.9 604.9h3.5M261.6 608.0h3.5M267.8 611.1h3.5M338.8 611.1h3.5M273.9 614.1h3.5M273.9 617.2h3.5M273.9 620.3h3.5M273.9 623.4h3.5M329.5 623.4h3.5M273.9 626.5h6.6M277.0 629.5h3.5M277.0 632.6h9.7M283.2 635.7h6.6M317.2 635.7h3.5M295.5 638.8h9.7"/>
<path stroke="#2a7e90" stroke-width="3.53" shape-rendering="crispEdges" d="M351.1 534.1h3.5M351.1 537.2h3.5M261.6 540.3h3.5M351.1 540.3h3.5M261.6 543.4h3.5M351.1 543.4h3.5M255.4 546.4h6.6M351.1 546.4h3.5M351.1 552.6h3.5M323.3 555.7h3.5M341.9 564.9h3.5M267.8 571.1h9.7M317.2 571.1h3.5M338.8 571.1h3.5M264.7 574.1h3.5M261.6 577.2h3.5M255.4 580.3h6.6M338.8 583.4h3.5M354.2 583.4h3.5M363.5 583.4h3.5M338.8 586.4h3.5M344.9 589.5h3.5M348.0 604.9h6.6M255.4 611.1h6.6M264.7 614.1h3.5M255.4 617.2h9.7M326.4 632.6h3.5M277.0 638.8h12.8M360.4 644.9h3.5M357.3 648.0h3.5M363.5 648.0h3.5M363.5 651.1h3.5"/>
<path stroke="#2a7290" stroke-width="3.53" shape-rendering="crispEdges" d="M354.2 534.1h3.5M354.2 537.2h3.5M354.2 540.3h3.5M264.7 543.4h3.5M264.7 546.4h3.5M357.3 546.4h3.5M360.4 549.5h6.6M360.4 552.6h3.5M354.2 555.7h3.5M348.0 558.8h3.5M264.7 564.9h3.5M344.9 564.9h3.5M267.8 568.0h9.7M295.5 571.1h6.6M314.1 571.1h3.5M341.9 571.1h3.5M341.9 580.3h3.5M344.9 583.4h6.6M369.6 583.4h3.5M372.7 586.4h3.5M372.7 589.5h3.5M360.4 604.9h3.5M341.9 614.1h3.5M338.8 620.3h3.5M332.6 626.5h3.5M329.5 632.6h3.5M326.4 635.7h3.5M344.9 635.7h3.5M351.1 635.7h12.8M320.2 638.8h3.5M348.0 638.8h3.5M366.6 638.8h3.5M277.0 641.8h3.5M354.2 641.8h3.5M369.6 641.8h3.5M264.7 644.9h12.8M354.2 644.9h3.5M357.3 654.1h3.5M369.6 654.1h3.5M360.4 657.2h12.8"/>
<path stroke="#366090" stroke-width="3.53" shape-rendering="crispEdges" d="M360.4 534.1h12.8M360.4 537.2h12.8M360.4 540.3h12.8M326.4 543.4h3.5M375.8 543.4h28.2M372.7 552.6h3.5M360.4 558.8h6.6M354.2 561.8h3.5M351.1 564.9h3.5M286.3 568.0h3.5M348.0 571.1h3.5M348.0 577.2h3.5M369.6 580.3h3.5M397.4 589.5h6.6M394.3 598.8h3.5M357.3 608.0h3.5M348.0 611.1h3.5M344.9 623.4h3.5M348.0 626.5h3.5M357.3 629.5h9.7M372.7 635.7h3.5M329.5 638.8h3.5M338.8 638.8h3.5M314.1 641.8h3.5M344.9 641.8h3.5M280.1 644.9h3.5M277.0 648.0h3.5M351.1 648.0h3.5M267.8 651.1h3.5M273.9 651.1h3.5M375.8 657.2h3.5M378.9 660.3h3.5M382.0 663.4h3.5M357.3 666.5h3.5M378.9 666.5h6.6M375.8 669.5h12.8M360.4 672.6h31.3M273.9 675.7h25.1M360.4 675.7h43.6M273.9 678.8h25.1M360.4 678.8h43.6"/>
<path stroke="#30b478" stroke-width="3.53" shape-rendering="crispEdges" d="M332.6 537.2h3.5M338.8 537.2h3.5M329.5 611.1h3.5M289.4 626.5h3.5M295.5 632.6h3.5"/>
<path stroke="#42c072" stroke-width="3.53" shape-rendering="crispEdges" d="M335.7 537.2h3.5M320.2 580.3h3.5M270.8 589.5h3.5M270.8 604.9h3.5M280.1 608.0h3.5M286.3 611.1h3.5M323.3 617.2h3.5M317.2 626.5h3.5"/>
<path stroke="#482a78" stroke-width="3.53" shape-rendering="crispEdges" d="M292.4 540.3h3.5M292.4 543.4h3.5M292.4 546.4h3.5M320.2 546.4h3.5M292.4 549.5h3.5M292.4 552.6h3.5M317.2 552.6h3.5M314.1 558.8h3.5M378.9 558.8h3.5M295.5 564.9h3.5M311.0 564.9h3.5M394.3 577.2h3.5M378.9 580.3h3.5M391.2 580.3h3.5M388.2 586.4h3.5M378.9 601.8h3.5M378.9 604.9h3.5M375.8 611.1h3.5M372.7 614.1h3.5M388.2 614.1h3.5M375.8 617.2h3.5M391.2 617.2h3.5M378.9 626.5h3.5M378.9 629.5h3.5M292.4 648.0h3.5M320.2 648.0h6.6M382.0 651.1h3.5M289.4 654.1h3.5M320.2 654.1h6.6M341.9 654.1h3.5M255.4 657.2h6.6M292.4 657.2h3.5M317.2 657.2h3.5M344.9 657.2h3.5M264.7 660.3h3.5M301.7 660.3h3.5M326.4 660.3h3.5M326.4 663.4h3.5M348.0 663.4h3.5M264.7 666.5h3.5M348.0 666.5h3.5M320.2 669.5h3.5M261.6 672.6h3.5"/>
<path stroke="#481260" stroke-width="3.53" shape-rendering="crispEdges" d="M298.6 540.3h3.5M314.1 540.3h3.5M311.0 552.6h3.5M391.2 571.1h3.5M385.1 583.4h3.5M385.1 620.3h3.5M391.2 623.4h3.5M329.5 669.5h3.5"/>
<path stroke="#42065a" stroke-width="3.53" shape-rendering="crispEdges" d="M307.9 540.3h3.5M391.2 564.9h6.6M385.1 571.1h3.5M385.1 574.1h3.5M335.7 666.5h3.5M335.7 669.5h3.5M332.6 672.6h3.5"/>
<path stroke="#482472" stroke-width="3.53" shape-rendering="crispEdges" d="M320.2 540.3h3.5M317.2 549.5h3.5M385.1 549.5h18.9M314.1 555.7h3.5M292.4 558.8h3.5M292.4 561.8h3.5M298.6 564.9h6.6M378.9 564.9h3.5M388.2 583.4h3.5M378.9 608.0h3.5M378.9 620.3h3.5M394.3 620.3h3.5M295.5 648.0h3.5M314.1 648.0h3.5M329.5 648.0h3.5M335.7 648.0h3.5M338.8 651.1h3.5M292.4 654.1h3.5M317.2 654.1h3.5M326.4 654.1h3.5M298.6 657.2h3.5M341.9 657.2h3.5M307.9 660.3h3.5M344.9 660.3h3.5M264.7 663.4h3.5M326.4 666.5h3.5M261.6 669.5h3.5M323.3 669.5h3.5M348.0 669.5h3.5M255.4 672.6h6.6M255.4 675.7h6.6M255.4 678.8h6.6"/>
<path stroke="#36ba78" stroke-width="3.53" shape-rendering="crispEdges" d="M332.6 540.3h3.5M323.3 580.3h3.5M326.4 583.4h3.5M267.8 592.6h3.5M264.7 598.8h3.5M277.0 608.0h3.5M320.2 623.4h3.5M292.4 629.5h3.5M304.8 632.6h6.6"/>
<path stroke="#3cba78" stroke-width="3.53" shape-rendering="crispEdges" d="M335.7 540.3h3.5M329.5 592.6h3.5M326.4 614.1h3.5M298.6 632.6h6.6"/>
<path stroke="#1e908a" stroke-width="3.53" shape-rendering="crispEdges" d="M344.9 540.3h3.5M344.9 543.4h3.5M341.9 549.5h3.5M341.9 552.6h3.5M338.8 558.8h3.5M326.4 568.0h3.5M332.6 568.0h3.5M292.4 574.1h3.5M326.4 574.1h3.5M270.8 577.2h3.5M329.5 577.2h3.5M264.7 583.4h3.5M332.6 586.4h3.5M363.5 586.4h3.5M366.6 589.5h3.5M335.7 592.6h3.5M351.1 595.7h3.5M363.5 595.7h3.5M344.9 598.8h6.6M357.3 601.8h3.5M338.8 608.0h3.5M277.0 614.1h3.5M335.7 614.1h3.5M277.0 617.2h3.5M332.6 617.2h3.5M280.1 626.5h3.5M283.2 629.5h3.5M323.3 629.5h3.5M320.2 632.6h3.5M314.1 635.7h3.5"/>
<path stroke="#307290" stroke-width="3.53" shape-rendering="crispEdges" d="M378.9 540.3h3.5M264.7 549.5h3.5M363.5 552.6h3.5M341.9 574.1h3.5M341.9 577.2h3.5M348.0 608.0h3.5M341.9 617.2h3.5M335.7 623.4h3.5M363.5 635.7h3.5M280.1 641.8h3.5"/>
<path stroke="#482478" stroke-width="3.53" shape-rendering="crispEdges" d="M320.2 543.4h3.5M292.4 555.7h3.5M378.9 561.8h3.5M375.8 614.1h3.5M397.4 620.3h6.6M378.9 623.4h3.5M317.2 648.0h3.5M326.4 648.0h3.5M289.4 651.1h3.5M295.5 657.2h3.5M314.1 657.2h3.5M326.4 657.2h3.5M304.8 660.3h3.5M311.0 660.3h3.5"/>
<path stroke="#24a884" stroke-width="3.53" shape-rendering="crispEdges" d="M329.5 543.4h3.5M326.4 555.7h6.6M304.8 577.2h18.9M326.4 580.3h3.5M270.8 583.4h3.5M264.7 592.6h3.5M332.6 595.7h3.5M270.8 608.0h3.5M332.6 608.0h3.5M280.1 611.1h3.5M332.6 611.1h3.5M286.3 623.4h3.5M323.3 623.4h3.5M289.4 629.5h3.5M292.4 632.6h3.5M314.1 632.6h3.5"/>
<path stroke="#36b478" stroke-width="3.53" shape-rendering="crispEdges" d="M332.6 543.4h3.5"/>
<path stroke="#30b47e" stroke-width="3.53" shape-rendering="crispEdges" d="M335.7 543.4h3.5M332.6 546.4h3.5M273.9 583.4h3.5M270.8 586.4h3.5M329.5 589.5h3.5M264.7 601.8h3.5M311.0 632.6h3.5"/>
<path stroke="#306090" stroke-width="3.53" shape-rendering="crispEdges" d="M372.7 543.4h3.5M270.8 546.4h3.5M372.7 546.4h3.5M270.8 549.5h3.5M372.7 549.5h3.5M270.8 552.6h3.5M270.8 555.7h3.5M270.8 558.8h3.5M270.8 561.8h3.5M273.9 564.9h3.5M366.6 580.3h3.5M372.7 583.4h3.5M366.6 604.9h3.5M397.4 604.9h6.6M344.9 620.3h3.5M372.7 638.8h3.5M311.0 641.8h3.5M357.3 663.4h3.5"/>
<path stroke="#481866" stroke-width="3.53" shape-rendering="crispEdges" d="M314.1 546.4h3.5M295.5 552.6h3.5M295.5 555.7h3.5M311.0 561.8h3.5M394.3 571.1h3.5M391.2 574.1h3.5M382.0 583.4h3.5M382.0 595.7h3.5M385.1 604.9h3.5M382.0 611.1h3.5M382.0 614.1h3.5M382.0 617.2h3.5M382.0 632.6h3.5M304.8 654.1h3.5M255.4 660.3h6.6"/>
<path stroke="#424284" stroke-width="3.53" shape-rendering="crispEdges" d="M323.3 546.4h3.5M378.9 549.5h3.5M286.3 558.8h3.5M314.1 564.9h3.5M372.7 571.1h3.5M394.3 583.4h3.5M391.2 589.5h3.5M391.2 608.0h3.5M360.4 611.1h3.5M323.3 644.9h3.5M338.8 644.9h3.5M378.9 651.1h3.5M255.4 654.1h6.6M348.0 654.1h3.5M280.1 657.2h3.5M388.2 657.2h3.5M270.8 660.3h3.5M277.0 660.3h3.5M270.8 663.4h3.5M277.0 663.4h3.5M351.1 663.4h3.5M301.7 666.5h3.5M267.8 669.5h3.5"/>
<path stroke="#2aae7e" stroke-width="3.53" shape-rendering="crispEdges" d="M329.5 546.4h3.5M329.5 549.5h6.6M273.9 580.3h3.5M267.8 589.5h3.5M264.7 595.7h3.5M332.6 598.8h3.5M332.6 604.9h3.5M273.9 608.0h3.5M283.2 611.1h3.5M286.3 617.2h3.5M326.4 617.2h3.5M317.2 629.5h3.5"/>
<path stroke="#1ea284" stroke-width="3.53" shape-rendering="crispEdges" d="M335.7 546.4h3.5M335.7 549.5h3.5M326.4 552.6h3.5M335.7 552.6h3.5M326.4 558.8h3.5M323.3 577.2h3.5M329.5 583.4h3.5M360.4 589.5h3.5M261.6 598.8h3.5M335.7 601.8h3.5M264.7 604.9h3.5M283.2 614.1h3.5M326.4 620.3h3.5M286.3 626.5h3.5M295.5 635.7h3.5M301.7 635.7h3.5"/>
<path stroke="#42428a" stroke-width="3.53" shape-rendering="crispEdges" d="M385.1 546.4h18.9M323.3 549.5h3.5M286.3 555.7h3.5M320.2 555.7h3.5M307.9 568.0h3.5M372.7 568.0h3.5M360.4 574.1h12.8M372.7 577.2h3.5M391.2 592.6h3.5M375.8 601.8h3.5M391.2 604.9h3.5M394.3 614.1h3.5M357.3 617.2h3.5M366.6 620.3h6.6M375.8 632.6h3.5M307.9 644.9h15.8M280.1 654.1h3.5M385.1 657.2h3.5M351.1 660.3h3.5M286.3 666.5h15.8M307.9 669.5h3.5M354.2 675.7h3.5M354.2 678.8h3.5"/>
<path stroke="#480c5a" stroke-width="3.53" shape-rendering="crispEdges" d="M301.7 549.5h3.5M301.7 552.6h6.6M301.7 555.7h6.6M301.7 558.8h6.6M301.7 561.8h6.6M391.2 568.0h3.5M388.2 571.1h3.5M382.0 574.1h3.5M385.1 623.4h3.5M385.1 638.8h18.9M338.8 669.5h3.5M329.5 672.6h3.5"/>
<path stroke="#48307e" stroke-width="3.53" shape-rendering="crispEdges" d="M382.0 549.5h3.5M317.2 555.7h3.5M378.9 555.7h3.5M289.4 558.8h3.5M289.4 561.8h3.5M314.1 561.8h3.5M375.8 568.0h3.5M375.8 571.1h3.5M375.8 574.1h3.5M375.8 577.2h3.5M378.9 583.4h3.5M391.2 583.4h3.5M388.2 595.7h3.5M378.9 598.8h3.5M388.2 598.8h3.5M388.2 601.8h3.5M388.2 604.9h3.5M375.8 608.0h3.5M372.7 611.1h3.5M366.6 614.1h6.6M394.3 617.2h3.5M375.8 620.3h3.5M378.9 632.6h3.5M378.9 635.7h3.5M338.8 648.0h3.5M286.3 651.1h3.5M341.9 651.1h3.5M286.3 654.1h3.5M344.9 654.1h3.5M385.1 654.1h9.7M261.6 657.2h3.5M286.3 657.2h6.6M320.2 657.2h6.6M286.3 660.3h12.8M348.0 660.3h3.5M267.8 663.4h3.5M304.8 663.4h3.5M314.1 663.4h3.5M320.2 666.5h3.5M264.7 669.5h3.5M317.2 669.5h3.5M317.2 672.6h3.5M351.1 675.7h3.5M351.1 678.8h3.5"/>
<path stroke="#48367e" stroke-width="3.53" shape-rendering="crispEdges" d="M320.2 552.6h3.5M378.9 552.6h3.5M289.4 555.7h3.5M292.4 564.9h3.5M375.8 564.9h3.5M394.3 580.3h3.5M378.9 595.7h3.5M369.6 611.1h3.5M363.5 614.1h3.5M391.2 614.1h3.5M372.7 617.2h3.5M375.8 623.4h3.5M378.9 638.8h3.5M332.6 644.9h3.5M289.4 648.0h3.5M317.2 660.3h3.5M301.7 663.4h3.5M311.0 666.5h9.7M351.1 672.6h3.5"/>
<path stroke="#24ae84" stroke-width="3.53" shape-rendering="crispEdges" d="M329.5 552.6h3.5M329.5 586.4h3.5M329.5 614.1h3.5M286.3 620.3h3.5M320.2 626.5h3.5"/>
<path stroke="#3c4e8a" stroke-width="3.53" shape-rendering="crispEdges" d="M375.8 552.6h3.5M283.2 555.7h3.5M283.2 558.8h3.5M320.2 558.8h3.5M280.1 561.8h3.5M372.7 561.8h3.5M360.4 564.9h12.8M298.6 568.0h6.6M311.0 568.0h3.5M357.3 568.0h15.8M357.3 571.1h3.5M354.2 574.1h3.5M363.5 577.2h9.7M375.8 583.4h3.5M394.3 586.4h3.5M375.8 595.7h3.5M375.8 598.8h3.5M372.7 604.9h3.5M366.6 608.0h3.5M394.3 611.1h3.5M354.2 617.2h3.5M354.2 620.3h3.5M357.3 623.4h15.8M372.7 626.5h3.5M375.8 638.8h3.5M329.5 641.8h3.5M375.8 641.8h3.5M292.4 644.9h3.5M264.7 654.1h3.5M277.0 654.1h3.5M378.9 654.1h3.5M270.8 657.2h6.6M351.1 657.2h3.5M382.0 657.2h3.5M391.2 660.3h6.6M273.9 666.5h3.5M354.2 666.5h3.5M270.8 669.5h3.5M286.3 669.5h15.8M307.9 672.6h3.5"/>
<path stroke="#42488a" stroke-width="3.53" shape-rendering="crispEdges" d="M375.8 555.7h3.5M317.2 561.8h3.5M372.7 564.9h3.5M391.2 595.7h3.5M391.2 601.8h3.5M354.2 614.1h3.5M360.4 620.3h6.6M372.7 623.4h3.5M301.7 644.9h6.6M283.2 648.0h3.5M344.9 648.0h3.5M261.6 654.1h3.5M267.8 657.2h3.5M273.9 660.3h3.5M273.9 663.4h3.5M270.8 666.5h3.5M283.2 666.5h3.5M304.8 669.5h3.5M267.8 672.6h3.5M311.0 672.6h3.5M354.2 672.6h3.5"/>
<path stroke="#24908a" stroke-width="3.53" shape-rendering="crispEdges" d="M335.7 568.0h3.5M301.7 574.1h3.5M317.2 574.1h3.5M332.6 583.4h3.5M354.2 586.4h3.5M261.6 589.5h3.5M351.1 592.6h3.5M341.9 595.7h3.5M344.9 601.8h3.5M354.2 601.8h3.5M255.4 604.9h6.6M270.8 611.1h3.5M277.0 620.3h3.5M277.0 623.4h3.5M326.4 626.5h3.5M280.1 629.5h3.5"/>
<path stroke="#1ea884" stroke-width="3.53" shape-rendering="crispEdges" d="M277.0 577.2h3.5M267.8 586.4h3.5M298.6 635.7h3.5"/>
<path stroke="#3cba72" stroke-width="3.53" shape-rendering="crispEdges" d="M280.1 577.2h3.5M329.5 608.0h3.5M289.4 623.4h3.5M314.1 629.5h3.5"/>
<path stroke="#aede30" stroke-width="3.53" shape-rendering="crispEdges" d="M283.2 577.2h3.5M298.6 577.2h3.5M317.2 580.3h3.5M329.5 598.8h3.5M304.8 626.5h3.5"/>
<path stroke="#c0de24" stroke-width="3.53" shape-rendering="crispEdges" d="M286.3 577.2h12.8M311.0 580.3h6.6"/>
<path stroke="#48c072" stroke-width="3.53" shape-rendering="crispEdges" d="M277.0 580.3h3.5"/>
<path stroke="#fcea24" stroke-width="3.53" shape-rendering="crispEdges" d="M280.1 580.3h28.2M280.1 583.4h43.6M277.0 586.4h46.7M277.0 589.5h49.8M273.9 592.6h52.9M273.9 595.7h56.0M277.0 598.8h52.9M280.1 601.8h49.8M283.2 604.9h46.7M289.4 608.0h37.5M292.4 611.1h31.3M295.5 614.1h28.2M298.6 617.2h22.0M304.8 620.3h12.8M307.9 623.4h6.6M311.0 626.5h3.5"/>
<path stroke="#ccde1e" stroke-width="3.53" shape-rendering="crispEdges" d="M307.9 580.3h3.5M298.6 623.4h3.5"/>
<path stroke="#f6e41e" stroke-width="3.53" shape-rendering="crispEdges" d="M277.0 583.4h3.5M323.3 586.4h3.5M273.9 589.5h3.5M326.4 592.6h3.5M286.3 608.0h3.5M323.3 611.1h3.5M301.7 620.3h3.5M314.1 623.4h3.5"/>
<path stroke="#60cc60" stroke-width="3.53" shape-rendering="crispEdges" d="M323.3 583.4h3.5"/>
<path stroke="#4ec06c" stroke-width="3.53" shape-rendering="crispEdges" d="M273.9 586.4h3.5"/>
<path stroke="#54c666" stroke-width="3.53" shape-rendering="crispEdges" d="M326.4 586.4h3.5M267.8 601.8h3.5M283.2 608.0h3.5M292.4 626.5h3.5M295.5 629.5h3.5"/>
<path stroke="#6ccc5a" stroke-width="3.53" shape-rendering="crispEdges" d="M326.4 589.5h3.5M277.0 604.9h3.5M292.4 623.4h3.5M314.1 626.5h3.5M298.6 629.5h12.8"/>
<path stroke="#5ac666" stroke-width="3.53" shape-rendering="crispEdges" d="M270.8 592.6h3.5M289.4 614.1h3.5M323.3 614.1h3.5"/>
<path stroke="#72d254" stroke-width="3.53" shape-rendering="crispEdges" d="M270.8 595.7h3.5"/>
<path stroke="#5ac660" stroke-width="3.53" shape-rendering="crispEdges" d="M267.8 598.8h3.5M273.9 604.9h3.5M317.2 623.4h3.5M311.0 629.5h3.5"/>
<path stroke="#90d842" stroke-width="3.53" shape-rendering="crispEdges" d="M270.8 598.8h3.5"/>
<path stroke="#b4de2a" stroke-width="3.53" shape-rendering="crispEdges" d="M273.9 598.8h3.5M277.0 601.8h3.5M307.9 626.5h3.5"/>
<path stroke="#7ed24e" stroke-width="3.53" shape-rendering="crispEdges" d="M270.8 601.8h3.5M280.1 604.9h3.5"/>
<path stroke="#a2d836" stroke-width="3.53" shape-rendering="crispEdges" d="M273.9 601.8h3.5M298.6 626.5h3.5"/>
<path stroke="#a8de30" stroke-width="3.53" shape-rendering="crispEdges" d="M329.5 601.8h3.5"/>
<path stroke="#2ab47e" stroke-width="3.53" shape-rendering="crispEdges" d="M332.6 601.8h3.5M267.8 604.9h3.5M286.3 614.1h3.5M323.3 620.3h3.5"/>
<path stroke="#84d24e" stroke-width="3.53" shape-rendering="crispEdges" d="M326.4 608.0h3.5M289.4 611.1h3.5M317.2 620.3h3.5"/>
<path stroke="#4ec66c" stroke-width="3.53" shape-rendering="crispEdges" d="M326.4 611.1h3.5M289.4 617.2h3.5"/>
<path stroke="#96d842" stroke-width="3.53" shape-rendering="crispEdges" d="M292.4 614.1h3.5"/>
<path stroke="#483684" stroke-width="3.53" shape-rendering="crispEdges" d="M360.4 614.1h3.5M378.9 641.8h3.5M267.8 660.3h3.5M283.2 660.3h3.5M317.2 663.4h3.5M323.3 663.4h3.5"/>
<path stroke="#84d248" stroke-width="3.53" shape-rendering="crispEdges" d="M292.4 617.2h3.5M295.5 626.5h3.5"/>
<path stroke="#c6de1e" stroke-width="3.53" shape-rendering="crispEdges" d="M295.5 617.2h3.5"/>
<path stroke="#78d254" stroke-width="3.53" shape-rendering="crispEdges" d="M320.2 617.2h3.5M292.4 620.3h3.5"/>
<path stroke="#bade2a" stroke-width="3.53" shape-rendering="crispEdges" d="M295.5 620.3h3.5"/>
<path stroke="#d8e418" stroke-width="3.53" shape-rendering="crispEdges" d="M298.6 620.3h3.5M304.8 623.4h3.5"/>
<path stroke="#a8de36" stroke-width="3.53" shape-rendering="crispEdges" d="M295.5 623.4h3.5M301.7 626.5h3.5"/>
<path stroke="#d2e41e" stroke-width="3.53" shape-rendering="crispEdges" d="M301.7 623.4h3.5"/>
<rect x="280.2" y="557.3" width="98.4" height="98.4" fill="none" stroke="#ff0000" stroke-width="1.3"/>
<path d="M293.3 606.5H321.5M337.8 606.5H366M329.4 570V599.7M329.4 614V644.2" stroke="#ff0000" stroke-width="1.3"/>
<text transform="translate(329.30,546.50) scale(1.144,1.06)" font-family="Liberation Sans" font-size="11" fill="#ff0000" stroke="#ff0000" stroke-width="0.15" text-anchor="middle" style="white-space:pre" >N</text>
<text transform="translate(264.80,610.50) scale(1.144,1.06)" font-family="Liberation Sans" font-size="11" fill="#ff0000" stroke="#ff0000" stroke-width="0.15" text-anchor="middle" style="white-space:pre" dy="-1.2">E</text>
<rect x="255.4" y="532.6" width="148.2" height="147.7" fill="none" stroke="#222" stroke-width="1.1"/>
<line x1="263.8" y1="680.3" x2="263.8" y2="683.8" stroke="#222" stroke-width="1"/>
<text transform="translate(261.20,695.90) scale(1.144,1.06)" font-family="Liberation Sans" font-size="10.6" fill="#111" stroke="#111" stroke-width="0.15" text-anchor="middle" style="white-space:pre" >−4</text>
<line x1="251.9" y1="672.1" x2="255.4" y2="672.1" stroke="#222" stroke-width="1"/>
<text transform="translate(247.10,676.00) scale(1.144,1.06)" font-family="Liberation Sans" font-size="10.6" fill="#111" stroke="#111" stroke-width="0.15" text-anchor="end" style="white-space:pre" >−4</text>
<line x1="296.6" y1="680.3" x2="296.6" y2="683.8" stroke="#222" stroke-width="1"/>
<text transform="translate(294.00,695.90) scale(1.144,1.06)" font-family="Liberation Sans" font-size="10.6" fill="#111" stroke="#111" stroke-width="0.15" text-anchor="middle" style="white-space:pre" >−2</text>
<line x1="251.9" y1="639.3" x2="255.4" y2="639.3" stroke="#222" stroke-width="1"/>
<text transform="translate(247.10,643.20) scale(1.144,1.06)" font-family="Liberation Sans" font-size="10.6" fill="#111" stroke="#111" stroke-width="0.15" text-anchor="end" style="white-space:pre" >−2</text>
<line x1="329.4" y1="680.3" x2="329.4" y2="683.8" stroke="#222" stroke-width="1"/>
<text transform="translate(329.40,695.90) scale(1.144,1.06)" font-family="Liberation Sans" font-size="10.6" fill="#111" stroke="#111" stroke-width="0.15" text-anchor="middle" style="white-space:pre" >0</text>
<line x1="251.9" y1="606.5" x2="255.4" y2="606.5" stroke="#222" stroke-width="1"/>
<text transform="translate(247.10,610.40) scale(1.144,1.06)" font-family="Liberation Sans" font-size="10.6" fill="#111" stroke="#111" stroke-width="0.15" text-anchor="end" style="white-space:pre" >0</text>
<line x1="362.2" y1="680.3" x2="362.2" y2="683.8" stroke="#222" stroke-width="1"/>
<text transform="translate(362.20,695.90) scale(1.144,1.06)" font-family="Liberation Sans" font-size="10.6" fill="#111" stroke="#111" stroke-width="0.15" text-anchor="middle" style="white-space:pre" >2</text>
<line x1="251.9" y1="573.7" x2="255.4" y2="573.7" stroke="#222" stroke-width="1"/>
<text transform="translate(247.10,577.60) scale(1.144,1.06)" font-family="Liberation Sans" font-size="10.6" fill="#111" stroke="#111" stroke-width="0.15" text-anchor="end" style="white-space:pre" >2</text>
<line x1="395.0" y1="680.3" x2="395.0" y2="683.8" stroke="#222" stroke-width="1"/>
<text transform="translate(395.00,695.90) scale(1.144,1.06)" font-family="Liberation Sans" font-size="10.6" fill="#111" stroke="#111" stroke-width="0.15" text-anchor="middle" style="white-space:pre" >4</text>
<line x1="251.9" y1="540.9" x2="255.4" y2="540.9" stroke="#222" stroke-width="1"/>
<text transform="translate(247.10,544.80) scale(1.144,1.06)" font-family="Liberation Sans" font-size="10.6" fill="#111" stroke="#111" stroke-width="0.15" text-anchor="end" style="white-space:pre" >4</text>
<text transform="translate(329.50,525.90) scale(1.144,1.06)" font-family="Liberation Sans" font-size="12" fill="#111" stroke="#111" stroke-width="0.15" text-anchor="middle" style="white-space:pre" >Lineflux Map</text>
<text transform="translate(329.50,706.40) scale(1.144,1.06)" font-family="Liberation Sans" font-size="10.5" fill="#111" stroke="#111" stroke-width="0.15" text-anchor="middle" style="white-space:pre" >s/b: 2.29 +/- 0.096</text>
<rect x="440.6" y="532.6" width="148.2" height="147.7" fill="#f6f6f6"/>
<path stroke="#f6f6f6" stroke-width="3.35" shape-rendering="crispEdges" d="M440.6 534.0h44.0M487.1 534.0h9.1M498.7 534.0h84.7M440.6 536.9h46.9M490.0 536.9h99.2M440.6 539.8h46.9M490.0 539.8h70.1M562.6 539.8h26.6M440.6 542.7h73.0M516.2 542.7h49.8M568.5 542.7h20.7M440.6 545.6h73.0M516.2 545.6h20.7M539.4 545.6h29.5M571.4 545.6h17.8M440.6 548.5h96.3M539.4 548.5h49.8M440.6 551.4h64.3M507.4 551.4h76.0M585.9 551.4h3.3M440.6 554.3h148.6M440.6 557.2h3.3M446.4 557.2h55.6M504.5 557.2h12.0M519.1 557.2h70.1M440.6 560.1h81.8M524.9 560.1h64.3M440.6 563.0h6.2M449.3 563.0h139.9M440.6 565.9h131.2M574.3 565.9h14.9M440.6 568.8h20.7M463.8 568.8h26.6M492.9 568.8h52.7M548.1 568.8h41.1M440.6 571.7h3.3M446.4 571.7h9.1M458.0 571.7h20.7M504.5 571.7h84.7M440.6 574.6h35.3M507.4 574.6h14.9M524.9 574.6h32.4M559.7 574.6h29.5M440.6 577.5h17.8M460.9 577.5h6.2M510.3 577.5h70.1M583.0 577.5h6.2M440.6 580.4h9.1M455.1 580.4h9.1M513.2 580.4h20.7M536.5 580.4h32.4M571.4 580.4h17.8M440.6 583.3h23.6M516.2 583.3h17.8M539.4 583.3h49.8M440.6 586.2h23.6M516.2 586.2h73.0M440.6 589.1h20.7M519.1 589.1h9.1M530.7 589.1h58.5M440.6 592.0h17.8M519.1 592.0h3.3M524.9 592.0h23.6M551.0 592.0h38.2M440.6 594.9h17.8M522.0 594.9h67.2M443.5 597.8h14.9M522.0 597.8h67.2M440.6 600.7h14.9M522.0 600.7h12.0M536.5 600.7h52.7M440.6 603.6h9.1M452.2 603.6h6.2M522.0 603.6h9.1M533.6 603.6h20.7M556.8 603.6h9.1M568.5 603.6h20.7M440.6 606.5h17.8M522.0 606.5h67.2M440.6 609.3h17.8M522.0 609.3h67.2M440.6 612.2h20.7M519.1 612.2h70.1M440.6 615.1h20.7M522.0 615.1h67.2M440.6 618.0h20.7M519.1 618.0h3.3M524.9 618.0h64.3M440.6 620.9h23.6M516.2 620.9h73.0M440.6 623.8h3.3M446.4 623.8h17.8M510.3 623.8h78.9M440.6 626.7h32.4M507.4 626.7h67.2M577.2 626.7h12.0M440.6 629.6h35.3M504.5 629.6h6.2M513.2 629.6h76.0M440.6 632.5h9.1M452.2 632.5h26.6M492.9 632.5h44.0M539.4 632.5h49.8M440.6 635.4h17.8M460.9 635.4h29.5M492.9 635.4h76.0M571.4 635.4h14.9M440.6 638.3h14.9M458.0 638.3h67.2M527.8 638.3h12.0M542.3 638.3h46.9M440.6 641.2h9.1M455.1 641.2h52.7M510.3 641.2h32.4M545.2 641.2h44.0M440.6 644.1h17.8M460.9 644.1h128.3M440.6 647.0h87.6M530.7 647.0h44.0M580.1 647.0h9.1M440.6 649.9h12.0M455.1 649.9h38.2M498.7 649.9h29.5M530.7 649.9h23.6M556.8 649.9h32.4M440.6 652.8h12.0M455.1 652.8h134.1M440.6 655.7h46.9M490.0 655.7h99.2M440.6 658.6h35.3M478.4 658.6h23.6M504.5 658.6h38.2M545.2 658.6h12.0M559.7 658.6h29.5M440.6 661.5h87.6M530.7 661.5h12.0M545.2 661.5h44.0M440.6 664.4h3.3M446.4 664.4h6.2M455.1 664.4h26.6M484.2 664.4h12.0M498.7 664.4h17.8M519.1 664.4h52.7M574.3 664.4h6.2M583.0 664.4h6.2M440.6 667.3h70.1M513.2 667.3h52.7M568.5 667.3h12.0M583.0 667.3h6.2M440.6 670.2h6.2M449.3 670.2h9.1M460.9 670.2h44.0M507.4 670.2h3.3M513.2 670.2h76.0M440.6 673.1h14.9M458.0 673.1h6.2M466.8 673.1h61.4M530.7 673.1h58.5M440.6 676.0h148.6M440.6 678.9h145.7"/>
<path stroke="#fcfcfc" stroke-width="3.35" shape-rendering="crispEdges" d="M484.2 534.0h3.3M495.8 534.0h3.3M585.9 534.0h3.3M487.1 536.9h3.3M487.1 539.8h3.3M559.7 539.8h3.3M513.2 545.6h3.3M536.5 545.6h3.3M536.5 548.5h3.3M501.6 557.2h3.3M516.2 557.2h3.3M460.9 568.8h3.3M580.1 577.5h3.3M449.3 580.4h3.3M568.5 580.4h3.3M533.6 583.3h6.2M527.8 589.1h3.3M522.0 592.0h3.3M548.1 592.0h3.3M565.6 603.6h3.3M536.5 632.5h3.3M458.0 635.4h3.3M568.5 635.4h3.3M449.3 641.2h3.3M507.4 641.2h3.3M542.3 641.2h3.3M495.8 649.9h3.3M527.8 649.9h3.3M553.9 649.9h3.3M487.1 655.7h3.3M501.6 658.6h3.3M527.8 661.5h3.3M542.3 661.5h3.3M495.8 664.4h3.3M516.2 664.4h3.3M510.3 667.3h3.3M446.4 670.2h3.3M510.3 670.2h3.3M527.8 673.1h3.3"/>
<path stroke="#f0f0f0" stroke-width="3.35" shape-rendering="crispEdges" d="M583.0 534.0h3.3M513.2 542.7h3.3M565.6 542.7h3.3M568.5 545.6h3.3M504.5 551.4h3.3M583.0 551.4h3.3M443.5 557.2h3.3M522.0 560.1h3.3M446.4 563.0h3.3M571.4 565.9h3.3M490.0 568.8h3.3M545.2 568.8h3.3M443.5 571.7h3.3M455.1 571.7h3.3M478.4 571.7h12.0M492.9 571.7h12.0M475.5 574.6h3.3M501.6 574.6h6.2M522.0 574.6h3.3M556.8 574.6h3.3M458.0 577.5h3.3M466.8 577.5h6.2M507.4 577.5h3.3M452.2 580.4h3.3M463.8 580.4h6.2M510.3 580.4h3.3M533.6 580.4h3.3M463.8 583.3h3.3M513.2 583.3h3.3M460.9 589.1h3.3M516.2 589.1h3.3M458.0 592.0h3.3M516.2 592.0h3.3M458.0 594.9h3.3M519.1 594.9h3.3M440.6 597.8h3.3M458.0 597.8h3.3M519.1 597.8h3.3M455.1 600.7h6.2M519.1 600.7h3.3M533.6 600.7h3.3M449.3 603.6h3.3M458.0 603.6h3.3M519.1 603.6h3.3M530.7 603.6h3.3M553.9 603.6h3.3M458.0 606.5h3.3M519.1 606.5h3.3M458.0 609.3h3.3M519.1 609.3h3.3M460.9 612.2h3.3M516.2 612.2h3.3M460.9 615.1h3.3M516.2 615.1h6.2M460.9 618.0h3.3M513.2 618.0h6.2M522.0 618.0h3.3M463.8 620.9h3.3M510.3 620.9h6.2M443.5 623.8h3.3M463.8 623.8h6.2M507.4 623.8h3.3M472.6 626.7h3.3M574.3 626.7h3.3M475.5 629.6h6.2M498.7 629.6h6.2M510.3 629.6h3.3M449.3 632.5h3.3M478.4 632.5h14.9M490.0 635.4h3.3M585.9 635.4h3.3M455.1 638.3h3.3M524.9 638.3h3.3M539.4 638.3h3.3M452.2 641.2h3.3M458.0 644.1h3.3M527.8 647.0h3.3M574.3 647.0h6.2M452.2 649.9h3.3M492.9 649.9h3.3M452.2 652.8h3.3M475.5 658.6h3.3M542.3 658.6h3.3M556.8 658.6h3.3M443.5 664.4h3.3M452.2 664.4h3.3M481.3 664.4h3.3M571.4 664.4h3.3M580.1 664.4h3.3M565.6 667.3h3.3M580.1 667.3h3.3M458.0 670.2h3.3M504.5 670.2h3.3M455.1 673.1h3.3M463.8 673.1h3.3M585.9 678.9h3.3"/>
<path stroke="#eaeaea" stroke-width="3.35" shape-rendering="crispEdges" d="M490.0 571.7h3.3M478.4 574.6h3.3M495.8 574.6h6.2M472.6 577.5h3.3M504.5 577.5h3.3M469.7 580.4h3.3M507.4 580.4h3.3M510.3 583.3h3.3M463.8 586.2h3.3M513.2 586.2h3.3M513.2 589.1h3.3M460.9 592.0h3.3M516.2 594.9h3.3M516.2 597.8h3.3M516.2 600.7h3.3M516.2 603.6h3.3M516.2 606.5h3.3M460.9 609.3h3.3M516.2 609.3h3.3M513.2 615.1h3.3M463.8 618.0h3.3M466.8 620.9h3.3M469.7 623.8h3.3M501.6 626.7h6.2M481.3 629.6h9.1M492.9 629.6h6.2"/>
<path stroke="#e4e4e4" stroke-width="3.35" shape-rendering="crispEdges" d="M481.3 574.6h3.3M501.6 577.5h3.3M466.8 583.3h3.3M513.2 592.0h3.3M460.9 594.9h3.3M460.9 597.8h3.3M460.9 603.6h3.3M460.9 606.5h3.3M513.2 612.2h3.3M463.8 615.1h3.3M510.3 618.0h3.3M507.4 620.9h3.3M472.6 623.8h3.3M504.5 623.8h3.3M475.5 626.7h3.3M498.7 626.7h3.3M490.0 629.6h3.3"/>
<path stroke="#dedede" stroke-width="3.35" shape-rendering="crispEdges" d="M484.2 574.6h12.0M475.5 577.5h3.3M504.5 580.4h3.3M507.4 583.3h3.3M510.3 586.2h3.3M463.8 589.1h3.3M460.9 600.7h3.3M466.8 618.0h3.3M469.7 620.9h3.3M478.4 626.7h3.3"/>
<path stroke="#d8d8d8" stroke-width="3.35" shape-rendering="crispEdges" d="M478.4 577.5h3.3M498.7 577.5h3.3M472.6 580.4h3.3M466.8 586.2h3.3M513.2 594.9h3.3M513.2 609.3h3.3M463.8 612.2h3.3M510.3 615.1h3.3M501.6 623.8h3.3M481.3 626.7h3.3M495.8 626.7h3.3"/>
<path stroke="#cccccc" stroke-width="3.35" shape-rendering="crispEdges" d="M481.3 577.5h3.3M495.8 577.5h3.3M501.6 580.4h3.3M513.2 600.7h3.3M513.2 603.6h3.3M466.8 615.1h3.3M487.1 626.7h3.3"/>
<path stroke="#bababa" stroke-width="3.35" shape-rendering="crispEdges" d="M484.2 577.5h3.3M463.8 600.7h3.3M463.8 603.6h3.3M478.4 623.8h3.3"/>
<path stroke="#b4b4b4" stroke-width="3.35" shape-rendering="crispEdges" d="M487.1 577.5h6.2M472.6 583.3h3.3"/>
<path stroke="#c0c0c0" stroke-width="3.35" shape-rendering="crispEdges" d="M492.9 577.5h3.3M475.5 580.4h3.3M504.5 583.3h3.3M466.8 589.1h3.3M510.3 592.0h3.3M463.8 597.8h3.3M463.8 606.5h3.3"/>
<path stroke="#a2a2a2" stroke-width="3.35" shape-rendering="crispEdges" d="M478.4 580.4h3.3M466.8 592.0h3.3M510.3 594.9h3.3M481.3 623.8h3.3"/>
<path stroke="#7e7e7e" stroke-width="3.35" shape-rendering="crispEdges" d="M481.3 580.4h3.3M475.5 583.3h3.3M469.7 589.1h3.3"/>
<path stroke="#666666" stroke-width="3.35" shape-rendering="crispEdges" d="M484.2 580.4h3.3M466.8 597.8h3.3M504.5 615.1h3.3M501.6 618.0h3.3"/>
<path stroke="#5a5a5a" stroke-width="3.35" shape-rendering="crispEdges" d="M487.1 580.4h6.2M498.7 583.3h3.3M466.8 600.7h3.3M466.8 603.6h3.3M469.7 612.2h3.3"/>
<path stroke="#727272" stroke-width="3.35" shape-rendering="crispEdges" d="M492.9 580.4h3.3M472.6 586.2h3.3M466.8 606.5h3.3"/>
<path stroke="#909090" stroke-width="3.35" shape-rendering="crispEdges" d="M495.8 580.4h3.3M504.5 586.2h3.3M510.3 597.8h3.3M510.3 603.6h3.3M466.8 609.3h3.3M472.6 618.0h3.3M484.2 623.8h3.3"/>
<path stroke="#aeaeae" stroke-width="3.35" shape-rendering="crispEdges" d="M498.7 580.4h3.3M469.7 586.2h3.3M510.3 609.3h3.3M466.8 612.2h3.3M507.4 615.1h3.3M501.6 620.9h3.3M495.8 623.8h3.3"/>
<path stroke="#d2d2d2" stroke-width="3.35" shape-rendering="crispEdges" d="M469.7 583.3h3.3M510.3 589.1h3.3M463.8 592.0h3.3M513.2 597.8h3.3M513.2 606.5h3.3M463.8 609.3h3.3M507.4 618.0h3.3M504.5 620.9h3.3M475.5 623.8h3.3M484.2 626.7h3.3M490.0 626.7h6.2"/>
<path stroke="#363636" stroke-width="3.35" shape-rendering="crispEdges" d="M478.4 583.3h3.3M472.6 615.1h3.3M481.3 620.9h3.3"/>
<path stroke="#000000" stroke-width="3.35" shape-rendering="crispEdges" d="M481.3 583.3h14.9M478.4 586.2h23.6M475.5 589.1h29.5M472.6 592.0h35.3M469.7 594.9h17.8M490.0 594.9h17.8M469.7 597.8h38.2M469.7 600.7h41.1M469.7 603.6h41.1M469.7 606.5h38.2M472.6 609.3h35.3M472.6 612.2h12.0M487.1 612.2h17.8M475.5 615.1h29.5M478.4 618.0h20.7M487.1 620.9h6.2"/>
<path stroke="#121212" stroke-width="3.35" shape-rendering="crispEdges" d="M495.8 583.3h3.3M469.7 609.3h3.3"/>
<path stroke="#969696" stroke-width="3.35" shape-rendering="crispEdges" d="M501.6 583.3h3.3M469.7 615.1h3.3M492.9 623.8h3.3"/>
<path stroke="#0c0c0c" stroke-width="3.35" shape-rendering="crispEdges" d="M475.5 586.2h3.3M472.6 589.1h3.3M507.4 597.8h3.3M504.5 612.2h3.3M484.2 620.9h3.3"/>
<path stroke="#3c3c3c" stroke-width="3.35" shape-rendering="crispEdges" d="M501.6 586.2h3.3M469.7 592.0h3.3M507.4 594.9h3.3"/>
<path stroke="#c6c6c6" stroke-width="3.35" shape-rendering="crispEdges" d="M507.4 586.2h3.3M463.8 594.9h3.3M510.3 612.2h3.3M469.7 618.0h3.3M472.6 620.9h3.3M498.7 623.8h3.3"/>
<path stroke="#424242" stroke-width="3.35" shape-rendering="crispEdges" d="M504.5 589.1h3.3M475.5 618.0h3.3"/>
<path stroke="#9c9c9c" stroke-width="3.35" shape-rendering="crispEdges" d="M507.4 589.1h3.3M510.3 606.5h3.3M475.5 620.9h3.3"/>
<path stroke="#6c6c6c" stroke-width="3.35" shape-rendering="crispEdges" d="M507.4 592.0h3.3M478.4 620.9h3.3"/>
<path stroke="#848484" stroke-width="3.35" shape-rendering="crispEdges" d="M466.8 594.9h3.3M507.4 612.2h3.3M498.7 620.9h3.3"/>
<path stroke="#060606" stroke-width="3.35" shape-rendering="crispEdges" d="M487.1 594.9h3.3M484.2 612.2h3.3M498.7 618.0h3.3"/>
<path stroke="#8a8a8a" stroke-width="3.35" shape-rendering="crispEdges" d="M510.3 600.7h3.3M487.1 623.8h6.2"/>
<path stroke="#242424" stroke-width="3.35" shape-rendering="crispEdges" d="M507.4 606.5h3.3"/>
<path stroke="#4e4e4e" stroke-width="3.35" shape-rendering="crispEdges" d="M507.4 609.3h3.3M495.8 620.9h3.3"/>
<path stroke="#a8a8a8" stroke-width="3.35" shape-rendering="crispEdges" d="M504.5 618.0h3.3"/>
<path stroke="#1e1e1e" stroke-width="3.35" shape-rendering="crispEdges" d="M492.9 620.9h3.3"/>
<rect x="465.4" y="557.3" width="98.4" height="98.4" fill="none" stroke="#ff0000" stroke-width="1.3"/>
<circle cx="488.5" cy="601.5" r="32.3" fill="none" stroke="#f2c01e" stroke-width="1.5"/>
<path d="M477 606.2H507M522 606.2H551.3M514.6 569.7V599.7M514.6 614.7V643.6" stroke="#ff0000" stroke-width="1.3"/>
<rect x="482.3" y="593.9" width="13.6" height="12.7" fill="none" stroke="#0000ff" stroke-width="1.3"/>
<text transform="translate(514.30,546.50) scale(1.144,1.06)" font-family="Liberation Sans" font-size="11" fill="#ff0000" stroke="#ff0000" stroke-width="0.15" text-anchor="middle" style="white-space:pre" >N</text>
<text transform="translate(447.80,610.50) scale(1.144,1.06)" font-family="Liberation Sans" font-size="11" fill="#ff0000" stroke="#ff0000" stroke-width="0.15" text-anchor="middle" style="white-space:pre" dy="-1.2">E</text>
<rect x="440.6" y="532.6" width="148.2" height="147.7" fill="none" stroke="#222" stroke-width="1.1"/>
<line x1="449.0" y1="680.3" x2="449.0" y2="683.8" stroke="#222" stroke-width="1"/>
<text transform="translate(446.40,695.90) scale(1.144,1.06)" font-family="Liberation Sans" font-size="10.6" fill="#111" stroke="#111" stroke-width="0.15" text-anchor="middle" style="white-space:pre" >−4</text>
<line x1="437.1" y1="672.1" x2="440.6" y2="672.1" stroke="#222" stroke-width="1"/>
<text transform="translate(432.30,676.00) scale(1.144,1.06)" font-family="Liberation Sans" font-size="10.6" fill="#111" stroke="#111" stroke-width="0.15" text-anchor="end" style="white-space:pre" >−4</text>
<line x1="481.8" y1="680.3" x2="481.8" y2="683.8" stroke="#222" stroke-width="1"/>
<text transform="translate(479.20,695.90) scale(1.144,1.06)" font-family="Liberation Sans" font-size="10.6" fill="#111" stroke="#111" stroke-width="0.15" text-anchor="middle" style="white-space:pre" >−2</text>
<line x1="437.1" y1="639.3" x2="440.6" y2="639.3" stroke="#222" stroke-width="1"/>
<text transform="translate(432.30,643.20) scale(1.144,1.06)" font-family="Liberation Sans" font-size="10.6" fill="#111" stroke="#111" stroke-width="0.15" text-anchor="end" style="white-space:pre" >−2</text>
<line x1="514.6" y1="680.3" x2="514.6" y2="683.8" stroke="#222" stroke-width="1"/>
<text transform="translate(514.60,695.90) scale(1.144,1.06)" font-family="Liberation Sans" font-size="10.6" fill="#111" stroke="#111" stroke-width="0.15" text-anchor="middle" style="white-space:pre" >0</text>
<line x1="437.1" y1="606.5" x2="440.6" y2="606.5" stroke="#222" stroke-width="1"/>
<text transform="translate(432.30,610.40) scale(1.144,1.06)" font-family="Liberation Sans" font-size="10.6" fill="#111" stroke="#111" stroke-width="0.15" text-anchor="end" style="white-space:pre" >0</text>
<line x1="547.4" y1="680.3" x2="547.4" y2="683.8" stroke="#222" stroke-width="1"/>
<text transform="translate(547.40,695.90) scale(1.144,1.06)" font-family="Liberation Sans" font-size="10.6" fill="#111" stroke="#111" stroke-width="0.15" text-anchor="middle" style="white-space:pre" >2</text>
<line x1="437.1" y1="573.7" x2="440.6" y2="573.7" stroke="#222" stroke-width="1"/>
<text transform="translate(432.30,577.60) scale(1.144,1.06)" font-family="Liberation Sans" font-size="10.6" fill="#111" stroke="#111" stroke-width="0.15" text-anchor="end" style="white-space:pre" >2</text>
<line x1="580.2" y1="680.3" x2="580.2" y2="683.8" stroke="#222" stroke-width="1"/>
<text transform="translate(580.20,695.90) scale(1.144,1.06)" font-family="Liberation Sans" font-size="10.6" fill="#111" stroke="#111" stroke-width="0.15" text-anchor="middle" style="white-space:pre" >4</text>
<line x1="437.1" y1="540.9" x2="440.6" y2="540.9" stroke="#222" stroke-width="1"/>
<text transform="translate(432.30,544.80) scale(1.144,1.06)" font-family="Liberation Sans" font-size="10.6" fill="#111" stroke="#111" stroke-width="0.15" text-anchor="end" style="white-space:pre" >4</text>
<text transform="translate(514.70,525.90) scale(1.144,1.06)" font-family="Liberation Sans" font-size="12" fill="#111" stroke="#111" stroke-width="0.15" text-anchor="middle" style="white-space:pre" >HSC(26.2) r</text>
<text transform="translate(514.50,707.00) scale(1.144,1.06)" font-family="Liberation Sans" font-size="10.5" fill="#111" stroke="#111" stroke-width="0.15" text-anchor="middle" style="white-space:pre" >m:17.6  re:1.9"  s:1.6"</text>
<text transform="translate(514.50,718.60) scale(1.144,1.06)" font-family="Liberation Sans" font-size="10.5" fill="#111" stroke="#111" stroke-width="0.15" text-anchor="middle" style="white-space:pre" >EWr: 0, PLAE: 0.182</text>
<text transform="translate(70.00,14.00) scale(1,1.106)" font-family="Liberation Mono" font-size="13" fill="#000" stroke="#000" stroke-width="0.22" text-anchor="start" style="white-space:pre" >EW: 0.6<tspan dx="1.5">±</tspan><tspan dx="1.5">7</tspan>.1<tspan font-style="italic">Å</tspan></text>
<text transform="translate(182.60,14.00) scale(1,1.106)" font-family="Liberation Mono" font-size="13" fill="#000" stroke="#000" stroke-width="0.22" text-anchor="start" style="white-space:pre" >P(LAE)/P(OII): </text>
<text transform="translate(299.50,14.00) scale(1.144,1.06)" font-family="Liberation Sans" font-size="13" fill="#000" stroke="#000" stroke-width="0.15" text-anchor="start" style="white-space:pre" >0.181</text>
<text transform="translate(341.50,8.70) scale(1.144,1.06)" font-family="Liberation Sans" font-size="9.1" fill="#000" stroke="#000" stroke-width="0.15" text-anchor="start" style="white-space:pre" >0.325</text>
<text transform="translate(341.50,17.70) scale(1.144,1.06)" font-family="Liberation Sans" font-size="9.1" fill="#000" stroke="#000" stroke-width="0.15" text-anchor="start" style="white-space:pre" >0.117</text>
<text transform="translate(383.60,14.00) scale(1,1.106)" font-family="Liberation Mono" font-size="13" fill="#000" stroke="#000" stroke-width="0.22" text-anchor="start" style="white-space:pre" >P(Ly<tspan font-style="italic">α</tspan>): 0.001</text>
<text transform="translate(500.10,14.00) scale(1,1.106)" font-family="Liberation Mono" font-size="13" fill="#000" stroke="#000" stroke-width="0.22" text-anchor="start" style="white-space:pre" >Q(z): </text>
<text transform="translate(547.50,14.00) scale(1.144,1.06)" font-family="Liberation Sans" font-size="13" fill="#000" stroke="#000" stroke-width="0.15" text-anchor="start" style="white-space:pre" >0.50</text>
<text transform="translate(581.50,8.70) scale(1.144,1.06)" font-family="Liberation Sans" font-size="9.1" fill="#000" stroke="#000" stroke-width="0.15" text-anchor="start" style="white-space:pre" >0.50</text>
<text transform="translate(581.50,17.70) scale(1.144,1.06)" font-family="Liberation Sans" font-size="9.1" fill="#000" stroke="#000" stroke-width="0.15" text-anchor="start" style="white-space:pre" >0.50</text>
<text transform="translate(617.60,14.00) scale(1,1.106)" font-family="Liberation Mono" font-size="13" fill="#000" stroke="#000" stroke-width="0.22" text-anchor="start" style="white-space:pre" >z: </text>
<text transform="translate(641.50,14.00) scale(1.144,1.06)" font-family="Liberation Sans" font-size="13" fill="#000" stroke="#000" stroke-width="0.15" text-anchor="start" style="white-space:pre" >0.1288</text>
<text transform="translate(690.80,8.70) scale(1.144,1.06)" font-family="Liberation Sans" font-size="9.1" fill="#000" stroke="#000" stroke-width="0.15" text-anchor="start" style="white-space:pre" >0.1288</text>
<text transform="translate(690.80,17.70) scale(1.144,1.06)" font-family="Liberation Sans" font-size="9.1" fill="#000" stroke="#000" stroke-width="0.15" text-anchor="start" style="white-space:pre" >0.1288</text>
<text transform="translate(729.40,14.00) scale(1,1.106)" font-family="Liberation Mono" font-size="13" fill="#000" stroke="#000" stroke-width="0.22" text-anchor="start" style="white-space:pre" >OII</text>
<text transform="translate(777.20,14.00) scale(1,1.106)" font-family="Liberation Mono" font-size="13" fill="#000" stroke="#000" stroke-width="0.22" text-anchor="start" style="white-space:pre" >Flags:0x00400000</text>
<text transform="translate(1056.30,16.70) scale(1,1.106)" font-family="Liberation Mono" font-size="13" fill="#000" stroke="#000" stroke-width="0.22" text-anchor="start" style="white-space:pre" >2024-12-23 23:41:06  Version 1.22.3</text>
<text transform="translate(70.00,40.60) scale(1,1.106)" font-family="Liberation Mono" font-size="13" fill="#000" stroke="#000" stroke-width="0.22" text-anchor="start" style="white-space:pre" >ID: 3002781103 (3002781103.pdf)</text>
<text transform="translate(70.00,54.60) scale(1,1.106)" font-family="Liberation Mono" font-size="13" fill="#000" stroke="#000" stroke-width="0.22" text-anchor="start" style="white-space:pre" >Obs: 20190324v014_3002781103</text>
<text transform="translate(70.00,69.40) scale(1,1.106)" font-family="Liberation Mono" font-size="13" fill="#000" stroke="#000" stroke-width="0.22" text-anchor="start" style="white-space:pre" >Primary Spec_Slot_IFU_AMP: 025_076_032_LU</text>
<text transform="translate(70.00,84.40) scale(1,1.106)" font-family="Liberation Mono" font-size="13" fill="#000" stroke="#000" stroke-width="0.22" text-anchor="start" style="white-space:pre" >F=1.5"  T=0.164  N=1.26  A=0.93  g=25.0</text>
<text transform="translate(70.00,99.40) scale(1,1.106)" font-family="Liberation Mono" font-size="13" fill="#000" stroke="#000" stroke-width="0.22" text-anchor="start" style="white-space:pre" >RA,Dec (178.447876,50.884945)</text>
<text transform="translate(70.00,116.20) scale(1,1.106)" font-family="Liberation Mono" font-size="13" fill="#000" stroke="#000" stroke-width="0.22" text-anchor="start" style="white-space:pre" ><tspan font-style="italic">λ</tspan> = 4208.09<tspan font-style="italic">Å</tspan></text>
<text transform="translate(180.00,116.20) scale(1,1.106)" font-family="Liberation Mono" font-size="13" fill="#000" stroke="#000" stroke-width="0.22" text-anchor="start" style="white-space:pre" ><tspan font-style="italic">σ</tspan> =</text>
<text transform="translate(212.00,116.20) scale(1,1.106)" font-family="Liberation Mono" font-size="13" fill="#000" stroke="#000" stroke-width="0.22" text-anchor="start" style="white-space:pre" >3.54(<tspan dx="1.5">±</tspan><tspan dx="1.5">1</tspan>.36)<tspan font-style="italic">Å</tspan></text>
<text transform="translate(70.00,131.50) scale(1,1.106)" font-family="Liberation Mono" font-size="13" fill="#000" stroke="#000" stroke-width="0.22" text-anchor="start" style="white-space:pre" >LineFlux = 9.60(<tspan dx="1.5">±</tspan><tspan dx="1.5">3</tspan>.20)e-17</text>
<text transform="translate(70.00,146.40) scale(1,1.106)" font-family="Liberation Mono" font-size="13" fill="#000" stroke="#000" stroke-width="0.22" text-anchor="start" style="white-space:pre" >Cont(n) = 2.70(<tspan dx="1.5">±</tspan><tspan dx="1.5">0</tspan>.07)e-17</text>
<text transform="translate(70.00,164.50) scale(1,1.106)" font-family="Liberation Mono" font-size="13" fill="#000" stroke="#000" stroke-width="0.22" text-anchor="start" style="white-space:pre" >Cont(w) = 4.70(<tspan dx="1.5">±</tspan><tspan dx="1.5">0</tspan>.01)e-17 (gmag </text>
<text transform="translate(322.50,164.50) scale(1.144,1.06)" font-family="Liberation Sans" font-size="13" fill="#000" stroke="#000" stroke-width="0.15" text-anchor="start" style="white-space:pre" >20.03</text>
<text transform="translate(364.00,158.70) scale(1.144,1.06)" font-family="Liberation Sans" font-size="9.1" fill="#000" stroke="#000" stroke-width="0.15" text-anchor="start" style="white-space:pre" >20.04</text>
<text transform="translate(364.00,167.40) scale(1.144,1.06)" font-family="Liberation Sans" font-size="9.1" fill="#000" stroke="#000" stroke-width="0.15" text-anchor="start" style="white-space:pre" >20.03</text>
<text transform="translate(390.00,164.50) scale(1,1.106)" font-family="Liberation Mono" font-size="13" fill="#000" stroke="#000" stroke-width="0.22" text-anchor="start" style="white-space:pre" >)</text>
<text transform="translate(70.00,182.40) scale(1,1.106)" font-family="Liberation Mono" font-size="13" fill="#000" stroke="#000" stroke-width="0.22" text-anchor="start" style="white-space:pre" >EWr = 1.00(<tspan dx="1.5">±</tspan><tspan dx="1.5">0</tspan>.35) (w: 0.59(<tspan dx="1.5">±</tspan><tspan dx="1.5">0</tspan>.20))<tspan font-style="italic">Å</tspan></text>
<text transform="translate(70.00,200.10) scale(1,1.106)" font-family="Liberation Mono" font-size="13" fill="#000" stroke="#000" stroke-width="0.22" text-anchor="start" style="white-space:pre" >S/N = 4.8(<tspan dx="1.5">±</tspan><tspan dx="1.5">0</tspan>.5)  </text>
<text transform="translate(205.50,200.10) scale(1.144,1.06)" font-family="Liberation Sans" font-size="13" fill="#000" stroke="#000" stroke-width="0.15" text-anchor="start" style="white-space:pre" ><tspan font-style="italic">χ</tspan></text>
<text transform="translate(214.50,194.50) scale(1.144,1.06)" font-family="Liberation Sans" font-size="8" fill="#000" stroke="#000" stroke-width="0.15" text-anchor="start" style="white-space:pre" >2</text>
<text transform="translate(219.60,200.10) scale(1,1.106)" font-family="Liberation Mono" font-size="13" fill="#000" stroke="#000" stroke-width="0.22" text-anchor="start" style="white-space:pre" > = 1.9(<tspan dx="1.5">±</tspan><tspan dx="1.5">0</tspan>.2)</text>
<text transform="translate(70.00,217.90) scale(1,1.106)" font-family="Liberation Mono" font-size="13" fill="#000" stroke="#000" stroke-width="0.22" text-anchor="start" style="white-space:pre" >P(LAE)/P(OII): </text>
<text transform="translate(187.00,217.90) scale(1.144,1.06)" font-family="Liberation Sans" font-size="13" fill="#000" stroke="#000" stroke-width="0.15" text-anchor="start" style="white-space:pre" >0.25</text>
<text transform="translate(219.40,212.40) scale(1.144,1.06)" font-family="Liberation Sans" font-size="9.1" fill="#000" stroke="#000" stroke-width="0.15" text-anchor="start" style="white-space:pre" >0.391</text>
<text transform="translate(219.40,221.00) scale(1.144,1.06)" font-family="Liberation Sans" font-size="9.1" fill="#000" stroke="#000" stroke-width="0.15" text-anchor="start" style="white-space:pre" >0.188</text>
<text transform="translate(246.50,217.90) scale(1,1.106)" font-family="Liberation Mono" font-size="13" fill="#000" stroke="#000" stroke-width="0.22" text-anchor="start" style="white-space:pre" > (w: </text>
<text transform="translate(284.30,217.90) scale(1.144,1.06)" font-family="Liberation Sans" font-size="13" fill="#000" stroke="#000" stroke-width="0.15" text-anchor="start" style="white-space:pre" >0.207</text>
<text transform="translate(325.50,212.40) scale(1.144,1.06)" font-family="Liberation Sans" font-size="9.1" fill="#000" stroke="#000" stroke-width="0.15" text-anchor="start" style="white-space:pre" >0.355</text>
<text transform="translate(325.50,221.00) scale(1.144,1.06)" font-family="Liberation Sans" font-size="9.1" fill="#000" stroke="#000" stroke-width="0.15" text-anchor="start" style="white-space:pre" >0.145</text>
<text transform="translate(351.50,217.90) scale(1,1.106)" font-family="Liberation Mono" font-size="13" fill="#000" stroke="#000" stroke-width="0.22" text-anchor="start" style="white-space:pre" >)</text>
<text transform="translate(70.00,234.30) scale(1,1.106)" font-family="Liberation Mono" font-size="13" fill="#000" stroke="#000" stroke-width="0.22" text-anchor="start" style="white-space:pre" >LyA z = 2.4615  OII z = 0.1288</text>
<text transform="translate(70.00,251.20) scale(1,1.106)" font-family="Liberation Mono" font-size="13" fill="#000" stroke="#000" stroke-width="0.22" text-anchor="start" style="white-space:pre" >*Q(0.96) OII (3728) z = 0.1288  EW r = 1.8<tspan font-style="italic">Å</tspan></text>
<text transform="translate(70.00,498.20) scale(1,1.106)" font-family="Liberation Mono" font-size="13" fill="#000" stroke="#000" stroke-width="0.22" text-anchor="start" style="white-space:pre" >HSC-DEX : Possible Matches = 1 (within +/- 3")  P(LAE)/P(OII): </text>
<text transform="translate(559.50,498.20) scale(1.144,1.06)" font-family="Liberation Sans" font-size="13" fill="#000" stroke="#000" stroke-width="0.15" text-anchor="start" style="white-space:pre" >0.182</text>
<text transform="translate(603.20,492.50) scale(1.144,1.06)" font-family="Liberation Sans" font-size="9.1" fill="#000" stroke="#000" stroke-width="0.15" text-anchor="start" style="white-space:pre" >0.332</text>
<text transform="translate(603.20,501.20) scale(1.144,1.06)" font-family="Liberation Sans" font-size="9.1" fill="#000" stroke="#000" stroke-width="0.15" text-anchor="start" style="white-space:pre" >0.109</text>
<text transform="translate(629.50,498.20) scale(1,1.106)" font-family="Liberation Mono" font-size="13" fill="#000" stroke="#000" stroke-width="0.22" text-anchor="start" style="white-space:pre" > (r)</text>
<text transform="translate(70.00,785.70) scale(1,1.106)" font-family="Liberation Mono" font-size="13" fill="#000" stroke="#000" stroke-width="0.22" text-anchor="start" style="white-space:pre" >Separation</text>
<text transform="translate(70.00,800.20) scale(1,1.106)" font-family="Liberation Mono" font-size="13" fill="#000" stroke="#000" stroke-width="0.22" text-anchor="start" style="white-space:pre" >Match score</text>
<text transform="translate(70.00,815.00) scale(1,1.106)" font-family="Liberation Mono" font-size="13" fill="#000" stroke="#000" stroke-width="0.22" text-anchor="start" style="white-space:pre" >RA, Dec</text>
<text transform="translate(70.00,829.60) scale(1,1.106)" font-family="Liberation Mono" font-size="13" fill="#000" stroke="#000" stroke-width="0.22" text-anchor="start" style="white-space:pre" >Spec z</text>
<text transform="translate(70.00,844.20) scale(1,1.106)" font-family="Liberation Mono" font-size="13" fill="#000" stroke="#000" stroke-width="0.22" text-anchor="start" style="white-space:pre" >Photo z</text>
<text transform="translate(70.00,858.80) scale(1,1.106)" font-family="Liberation Mono" font-size="13" fill="#000" stroke="#000" stroke-width="0.22" text-anchor="start" style="white-space:pre" >Est LyA rest-EW</text>
<text transform="translate(70.00,873.30) scale(1,1.106)" font-family="Liberation Mono" font-size="13" fill="#000" stroke="#000" stroke-width="0.22" text-anchor="start" style="white-space:pre" >mag</text>
<text transform="translate(70.00,888.10) scale(1,1.106)" font-family="Liberation Mono" font-size="13" fill="#000" stroke="#000" stroke-width="0.22" text-anchor="start" style="white-space:pre" >P(LAE)/P(OII)</text>
<text transform="translate(286.60,779.10) scale(1,1.106)" font-family="Liberation Mono" font-size="13" fill="#0000ff" stroke="#0000ff" stroke-width="0.22" text-anchor="start" style="white-space:pre" >1.58197"</text>
<text transform="translate(286.60,793.60) scale(1,1.106)" font-family="Liberation Mono" font-size="13" fill="#0000ff" stroke="#0000ff" stroke-width="0.22" text-anchor="start" style="white-space:pre" >1.000</text>
<text transform="translate(286.60,808.00) scale(1,1.106)" font-family="Liberation Mono" font-size="13" fill="#0000ff" stroke="#0000ff" stroke-width="0.22" text-anchor="start" style="white-space:pre" >178.448555, 50.885043</text>
<text transform="translate(286.60,822.50) scale(1,1.106)" font-family="Liberation Mono" font-size="13" fill="#0000ff" stroke="#0000ff" stroke-width="0.22" text-anchor="start" style="white-space:pre" >N/A</text>
<text transform="translate(286.60,837.10) scale(1,1.106)" font-family="Liberation Mono" font-size="13" fill="#0000ff" stroke="#0000ff" stroke-width="0.22" text-anchor="start" style="white-space:pre" >N/A</text>
<text transform="translate(286.60,854.00) scale(1,1.106)" font-family="Liberation Mono" font-size="13" fill="#0000ff" stroke="#0000ff" stroke-width="0.22" text-anchor="start" style="white-space:pre" >0.10(<tspan dx="1.5">±</tspan><tspan dx="1.5">0</tspan>.03)<tspan font-style="italic">Å</tspan></text>
<text transform="translate(286.60,869.50) scale(1,1.106)" font-family="Liberation Mono" font-size="13" fill="#0000ff" stroke="#0000ff" stroke-width="0.22" text-anchor="start" style="white-space:pre" >17.64(17.64,17.64)R</text>
<text transform="translate(287.30,886.10) scale(1.144,1.06)" font-family="Liberation Sans" font-size="13" fill="#0000ff" stroke="#0000ff" stroke-width="0.15" text-anchor="start" style="white-space:pre" >0.167</text>
<text transform="translate(328.80,880.50) scale(1.144,1.06)" font-family="Liberation Sans" font-size="9.1" fill="#0000ff" stroke="#0000ff" stroke-width="0.15" text-anchor="start" style="white-space:pre" >0.247</text>
<text transform="translate(328.80,889.20) scale(1.144,1.06)" font-family="Liberation Sans" font-size="9.1" fill="#0000ff" stroke="#0000ff" stroke-width="0.15" text-anchor="start" style="white-space:pre" >0.105</text>
<text transform="translate(938.50,820.70) scale(1,1.106)" font-family="Liberation Mono" font-size="13" fill="#000" stroke="#000" stroke-width="0.22" text-anchor="start" style="white-space:pre" >Phot z plot not available.</text>
</svg></body></html>
